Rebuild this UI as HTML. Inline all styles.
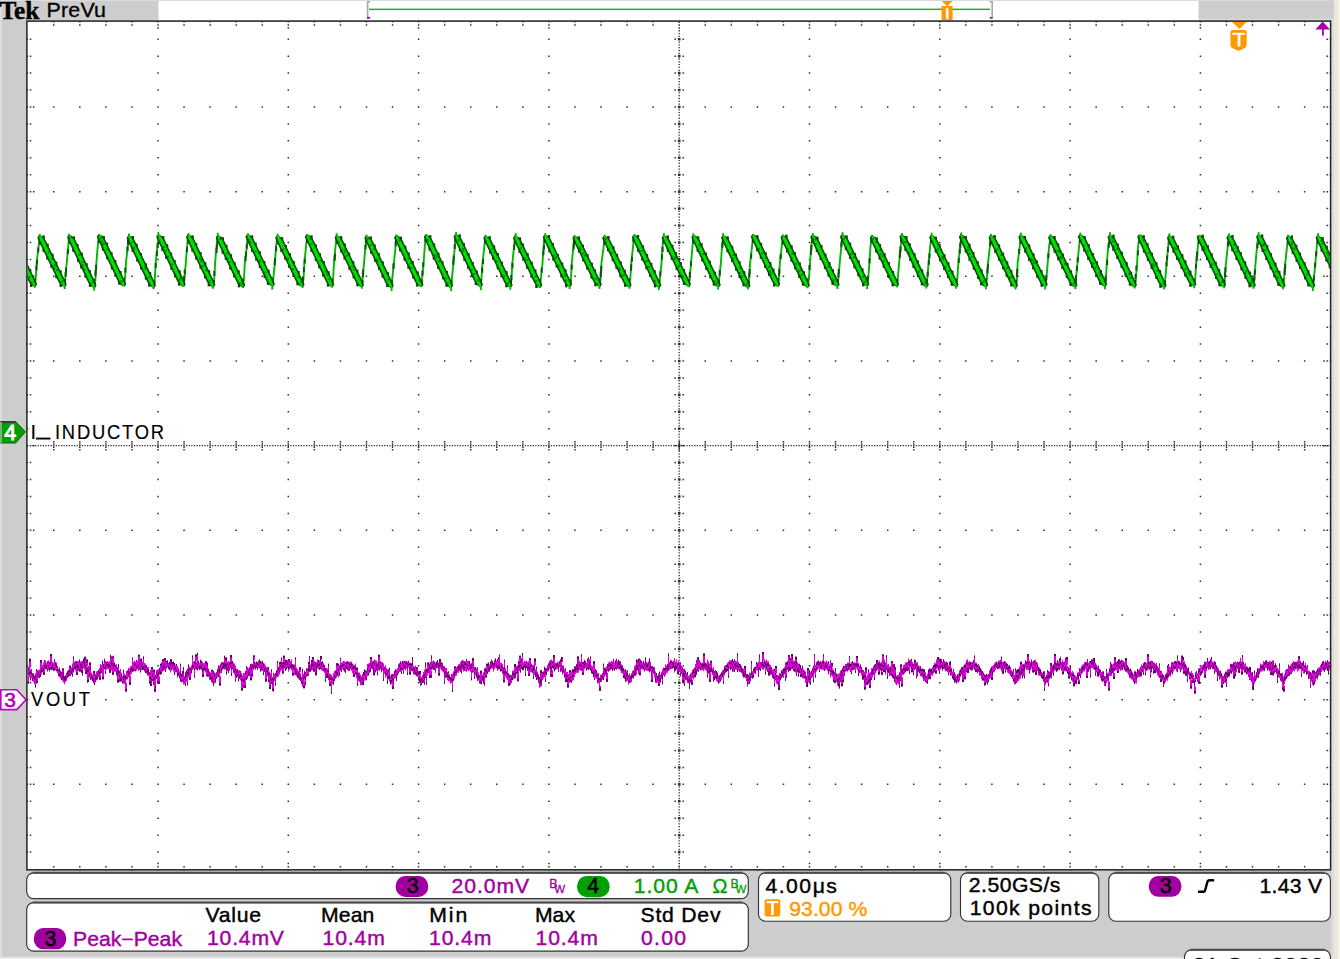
<!DOCTYPE html><html><head><meta charset="utf-8"><style>html,body{margin:0;padding:0;background:#cdcdcd;overflow:hidden}svg{display:block}text{font-family:"Liberation Sans",sans-serif}</style></head><body>
<svg width="1340" height="959" viewBox="0 0 1340 959">
<rect x="0" y="0" width="1340" height="959" fill="#cdcdcd"/>
<rect x="0" y="0" width="2" height="959" fill="#dcdcdc"/>
<rect x="0" y="0" width="1340" height="1" fill="#dcdcdc"/>
<rect x="0" y="956.5" width="1340" height="1.5" fill="#dcdcdc"/>
<rect x="0" y="958" width="1340" height="1" fill="#f4f4f4"/>
<rect x="1331.2" y="0" width="2.4" height="959" fill="#dedede"/>
<rect x="1333.6" y="0" width="4.6" height="959" fill="#ebe8d8"/>
<rect x="1338.2" y="0" width="1.8" height="959" fill="#faf6e8"/>
<rect x="1331" y="0" width="2.6" height="20.4" fill="#cdcdcd"/>
<rect x="1198.5" y="18.7" width="134.9" height="1.2" fill="#dadada"/>
<rect x="158.5" y="1" width="1040" height="19.5" fill="#ffffff"/>
<text x="-0.5" y="18.8" font-weight="bold" font-size="25" textLength="40" lengthAdjust="spacingAndGlyphs" style="font-family:'Liberation Serif',serif" fill="#000" stroke="#000" stroke-width="0.4">Tek</text>
<path d="M370 1.8 L367.6 1.8 L367.6 18.2 L370 18.2" stroke="#a8a8a8" stroke-width="1.6" fill="none"/>
<rect x="367" y="16.9" width="3" height="1.6" fill="#b000c0"/>
<rect x="369" y="8.6" width="621" height="1.5" fill="#20b020"/>
<path d="M989.6 1.8 L992.2 1.8 L992.2 18.2 L989.6 18.2" stroke="#a8a8a8" stroke-width="1.6" fill="none"/>
<rect x="990" y="17" width="2.5" height="1.5" fill="#b000c0"/>
<path d="M941.8 1 L952.6 1 L947.2 6.5 Z" fill="#ff9900"/>
<rect x="941.6" y="6" width="11" height="14.2" fill="#ff9900"/>
<rect x="945.9" y="8.3" width="2.6" height="11" fill="#ffffff"/>
<rect x="26.9" y="21.1" width="1303.7" height="848.7" fill="#ffffff" stroke="#1d2625" stroke-width="1.5"/>
<path fill="#2f2f2f" d="M157.25 38.48h1.5v1.5h-1.5zM157.25 55.42h1.5v1.5h-1.5zM157.25 72.35h1.5v1.5h-1.5zM157.25 89.29h1.5v1.5h-1.5zM157.25 106.22h1.5v1.5h-1.5zM157.25 123.16h1.5v1.5h-1.5zM157.25 140.09h1.5v1.5h-1.5zM157.25 157.03h1.5v1.5h-1.5zM157.25 173.97h1.5v1.5h-1.5zM157.25 190.90h1.5v1.5h-1.5zM157.25 207.84h1.5v1.5h-1.5zM157.25 224.77h1.5v1.5h-1.5zM157.25 241.70h1.5v1.5h-1.5zM157.25 258.64h1.5v1.5h-1.5zM157.25 275.57h1.5v1.5h-1.5zM157.25 292.51h1.5v1.5h-1.5zM157.25 309.44h1.5v1.5h-1.5zM157.25 326.38h1.5v1.5h-1.5zM157.25 343.31h1.5v1.5h-1.5zM157.25 360.25h1.5v1.5h-1.5zM157.25 377.19h1.5v1.5h-1.5zM157.25 394.12h1.5v1.5h-1.5zM157.25 411.06h1.5v1.5h-1.5zM157.25 427.99h1.5v1.5h-1.5zM157.25 444.92h1.5v1.5h-1.5zM157.25 461.86h1.5v1.5h-1.5zM157.25 478.79h1.5v1.5h-1.5zM157.25 495.73h1.5v1.5h-1.5zM157.25 512.66h1.5v1.5h-1.5zM157.25 529.60h1.5v1.5h-1.5zM157.25 546.53h1.5v1.5h-1.5zM157.25 563.47h1.5v1.5h-1.5zM157.25 580.40h1.5v1.5h-1.5zM157.25 597.34h1.5v1.5h-1.5zM157.25 614.27h1.5v1.5h-1.5zM157.25 631.21h1.5v1.5h-1.5zM157.25 648.14h1.5v1.5h-1.5zM157.25 665.08h1.5v1.5h-1.5zM157.25 682.01h1.5v1.5h-1.5zM157.25 698.95h1.5v1.5h-1.5zM157.25 715.88h1.5v1.5h-1.5zM157.25 732.82h1.5v1.5h-1.5zM157.25 749.75h1.5v1.5h-1.5zM157.25 766.69h1.5v1.5h-1.5zM157.25 783.62h1.5v1.5h-1.5zM157.25 800.56h1.5v1.5h-1.5zM157.25 817.49h1.5v1.5h-1.5zM157.25 834.43h1.5v1.5h-1.5zM157.25 851.36h1.5v1.5h-1.5zM287.55 38.48h1.5v1.5h-1.5zM287.55 55.42h1.5v1.5h-1.5zM287.55 72.35h1.5v1.5h-1.5zM287.55 89.29h1.5v1.5h-1.5zM287.55 106.22h1.5v1.5h-1.5zM287.55 123.16h1.5v1.5h-1.5zM287.55 140.09h1.5v1.5h-1.5zM287.55 157.03h1.5v1.5h-1.5zM287.55 173.97h1.5v1.5h-1.5zM287.55 190.90h1.5v1.5h-1.5zM287.55 207.84h1.5v1.5h-1.5zM287.55 224.77h1.5v1.5h-1.5zM287.55 241.70h1.5v1.5h-1.5zM287.55 258.64h1.5v1.5h-1.5zM287.55 275.57h1.5v1.5h-1.5zM287.55 292.51h1.5v1.5h-1.5zM287.55 309.44h1.5v1.5h-1.5zM287.55 326.38h1.5v1.5h-1.5zM287.55 343.31h1.5v1.5h-1.5zM287.55 360.25h1.5v1.5h-1.5zM287.55 377.19h1.5v1.5h-1.5zM287.55 394.12h1.5v1.5h-1.5zM287.55 411.06h1.5v1.5h-1.5zM287.55 427.99h1.5v1.5h-1.5zM287.55 444.92h1.5v1.5h-1.5zM287.55 461.86h1.5v1.5h-1.5zM287.55 478.79h1.5v1.5h-1.5zM287.55 495.73h1.5v1.5h-1.5zM287.55 512.66h1.5v1.5h-1.5zM287.55 529.60h1.5v1.5h-1.5zM287.55 546.53h1.5v1.5h-1.5zM287.55 563.47h1.5v1.5h-1.5zM287.55 580.40h1.5v1.5h-1.5zM287.55 597.34h1.5v1.5h-1.5zM287.55 614.27h1.5v1.5h-1.5zM287.55 631.21h1.5v1.5h-1.5zM287.55 648.14h1.5v1.5h-1.5zM287.55 665.08h1.5v1.5h-1.5zM287.55 682.01h1.5v1.5h-1.5zM287.55 698.95h1.5v1.5h-1.5zM287.55 715.88h1.5v1.5h-1.5zM287.55 732.82h1.5v1.5h-1.5zM287.55 749.75h1.5v1.5h-1.5zM287.55 766.69h1.5v1.5h-1.5zM287.55 783.62h1.5v1.5h-1.5zM287.55 800.56h1.5v1.5h-1.5zM287.55 817.49h1.5v1.5h-1.5zM287.55 834.43h1.5v1.5h-1.5zM287.55 851.36h1.5v1.5h-1.5zM417.85 38.48h1.5v1.5h-1.5zM417.85 55.42h1.5v1.5h-1.5zM417.85 72.35h1.5v1.5h-1.5zM417.85 89.29h1.5v1.5h-1.5zM417.85 106.22h1.5v1.5h-1.5zM417.85 123.16h1.5v1.5h-1.5zM417.85 140.09h1.5v1.5h-1.5zM417.85 157.03h1.5v1.5h-1.5zM417.85 173.97h1.5v1.5h-1.5zM417.85 190.90h1.5v1.5h-1.5zM417.85 207.84h1.5v1.5h-1.5zM417.85 224.77h1.5v1.5h-1.5zM417.85 241.70h1.5v1.5h-1.5zM417.85 258.64h1.5v1.5h-1.5zM417.85 275.57h1.5v1.5h-1.5zM417.85 292.51h1.5v1.5h-1.5zM417.85 309.44h1.5v1.5h-1.5zM417.85 326.38h1.5v1.5h-1.5zM417.85 343.31h1.5v1.5h-1.5zM417.85 360.25h1.5v1.5h-1.5zM417.85 377.19h1.5v1.5h-1.5zM417.85 394.12h1.5v1.5h-1.5zM417.85 411.06h1.5v1.5h-1.5zM417.85 427.99h1.5v1.5h-1.5zM417.85 444.92h1.5v1.5h-1.5zM417.85 461.86h1.5v1.5h-1.5zM417.85 478.79h1.5v1.5h-1.5zM417.85 495.73h1.5v1.5h-1.5zM417.85 512.66h1.5v1.5h-1.5zM417.85 529.60h1.5v1.5h-1.5zM417.85 546.53h1.5v1.5h-1.5zM417.85 563.47h1.5v1.5h-1.5zM417.85 580.40h1.5v1.5h-1.5zM417.85 597.34h1.5v1.5h-1.5zM417.85 614.27h1.5v1.5h-1.5zM417.85 631.21h1.5v1.5h-1.5zM417.85 648.14h1.5v1.5h-1.5zM417.85 665.08h1.5v1.5h-1.5zM417.85 682.01h1.5v1.5h-1.5zM417.85 698.95h1.5v1.5h-1.5zM417.85 715.88h1.5v1.5h-1.5zM417.85 732.82h1.5v1.5h-1.5zM417.85 749.75h1.5v1.5h-1.5zM417.85 766.69h1.5v1.5h-1.5zM417.85 783.62h1.5v1.5h-1.5zM417.85 800.56h1.5v1.5h-1.5zM417.85 817.49h1.5v1.5h-1.5zM417.85 834.43h1.5v1.5h-1.5zM417.85 851.36h1.5v1.5h-1.5zM548.15 38.48h1.5v1.5h-1.5zM548.15 55.42h1.5v1.5h-1.5zM548.15 72.35h1.5v1.5h-1.5zM548.15 89.29h1.5v1.5h-1.5zM548.15 106.22h1.5v1.5h-1.5zM548.15 123.16h1.5v1.5h-1.5zM548.15 140.09h1.5v1.5h-1.5zM548.15 157.03h1.5v1.5h-1.5zM548.15 173.97h1.5v1.5h-1.5zM548.15 190.90h1.5v1.5h-1.5zM548.15 207.84h1.5v1.5h-1.5zM548.15 224.77h1.5v1.5h-1.5zM548.15 241.70h1.5v1.5h-1.5zM548.15 258.64h1.5v1.5h-1.5zM548.15 275.57h1.5v1.5h-1.5zM548.15 292.51h1.5v1.5h-1.5zM548.15 309.44h1.5v1.5h-1.5zM548.15 326.38h1.5v1.5h-1.5zM548.15 343.31h1.5v1.5h-1.5zM548.15 360.25h1.5v1.5h-1.5zM548.15 377.19h1.5v1.5h-1.5zM548.15 394.12h1.5v1.5h-1.5zM548.15 411.06h1.5v1.5h-1.5zM548.15 427.99h1.5v1.5h-1.5zM548.15 444.92h1.5v1.5h-1.5zM548.15 461.86h1.5v1.5h-1.5zM548.15 478.79h1.5v1.5h-1.5zM548.15 495.73h1.5v1.5h-1.5zM548.15 512.66h1.5v1.5h-1.5zM548.15 529.60h1.5v1.5h-1.5zM548.15 546.53h1.5v1.5h-1.5zM548.15 563.47h1.5v1.5h-1.5zM548.15 580.40h1.5v1.5h-1.5zM548.15 597.34h1.5v1.5h-1.5zM548.15 614.27h1.5v1.5h-1.5zM548.15 631.21h1.5v1.5h-1.5zM548.15 648.14h1.5v1.5h-1.5zM548.15 665.08h1.5v1.5h-1.5zM548.15 682.01h1.5v1.5h-1.5zM548.15 698.95h1.5v1.5h-1.5zM548.15 715.88h1.5v1.5h-1.5zM548.15 732.82h1.5v1.5h-1.5zM548.15 749.75h1.5v1.5h-1.5zM548.15 766.69h1.5v1.5h-1.5zM548.15 783.62h1.5v1.5h-1.5zM548.15 800.56h1.5v1.5h-1.5zM548.15 817.49h1.5v1.5h-1.5zM548.15 834.43h1.5v1.5h-1.5zM548.15 851.36h1.5v1.5h-1.5zM808.75 38.48h1.5v1.5h-1.5zM808.75 55.42h1.5v1.5h-1.5zM808.75 72.35h1.5v1.5h-1.5zM808.75 89.29h1.5v1.5h-1.5zM808.75 106.22h1.5v1.5h-1.5zM808.75 123.16h1.5v1.5h-1.5zM808.75 140.09h1.5v1.5h-1.5zM808.75 157.03h1.5v1.5h-1.5zM808.75 173.97h1.5v1.5h-1.5zM808.75 190.90h1.5v1.5h-1.5zM808.75 207.84h1.5v1.5h-1.5zM808.75 224.77h1.5v1.5h-1.5zM808.75 241.70h1.5v1.5h-1.5zM808.75 258.64h1.5v1.5h-1.5zM808.75 275.57h1.5v1.5h-1.5zM808.75 292.51h1.5v1.5h-1.5zM808.75 309.44h1.5v1.5h-1.5zM808.75 326.38h1.5v1.5h-1.5zM808.75 343.31h1.5v1.5h-1.5zM808.75 360.25h1.5v1.5h-1.5zM808.75 377.19h1.5v1.5h-1.5zM808.75 394.12h1.5v1.5h-1.5zM808.75 411.06h1.5v1.5h-1.5zM808.75 427.99h1.5v1.5h-1.5zM808.75 444.92h1.5v1.5h-1.5zM808.75 461.86h1.5v1.5h-1.5zM808.75 478.79h1.5v1.5h-1.5zM808.75 495.73h1.5v1.5h-1.5zM808.75 512.66h1.5v1.5h-1.5zM808.75 529.60h1.5v1.5h-1.5zM808.75 546.53h1.5v1.5h-1.5zM808.75 563.47h1.5v1.5h-1.5zM808.75 580.40h1.5v1.5h-1.5zM808.75 597.34h1.5v1.5h-1.5zM808.75 614.27h1.5v1.5h-1.5zM808.75 631.21h1.5v1.5h-1.5zM808.75 648.14h1.5v1.5h-1.5zM808.75 665.08h1.5v1.5h-1.5zM808.75 682.01h1.5v1.5h-1.5zM808.75 698.95h1.5v1.5h-1.5zM808.75 715.88h1.5v1.5h-1.5zM808.75 732.82h1.5v1.5h-1.5zM808.75 749.75h1.5v1.5h-1.5zM808.75 766.69h1.5v1.5h-1.5zM808.75 783.62h1.5v1.5h-1.5zM808.75 800.56h1.5v1.5h-1.5zM808.75 817.49h1.5v1.5h-1.5zM808.75 834.43h1.5v1.5h-1.5zM808.75 851.36h1.5v1.5h-1.5zM939.05 38.48h1.5v1.5h-1.5zM939.05 55.42h1.5v1.5h-1.5zM939.05 72.35h1.5v1.5h-1.5zM939.05 89.29h1.5v1.5h-1.5zM939.05 106.22h1.5v1.5h-1.5zM939.05 123.16h1.5v1.5h-1.5zM939.05 140.09h1.5v1.5h-1.5zM939.05 157.03h1.5v1.5h-1.5zM939.05 173.97h1.5v1.5h-1.5zM939.05 190.90h1.5v1.5h-1.5zM939.05 207.84h1.5v1.5h-1.5zM939.05 224.77h1.5v1.5h-1.5zM939.05 241.70h1.5v1.5h-1.5zM939.05 258.64h1.5v1.5h-1.5zM939.05 275.57h1.5v1.5h-1.5zM939.05 292.51h1.5v1.5h-1.5zM939.05 309.44h1.5v1.5h-1.5zM939.05 326.38h1.5v1.5h-1.5zM939.05 343.31h1.5v1.5h-1.5zM939.05 360.25h1.5v1.5h-1.5zM939.05 377.19h1.5v1.5h-1.5zM939.05 394.12h1.5v1.5h-1.5zM939.05 411.06h1.5v1.5h-1.5zM939.05 427.99h1.5v1.5h-1.5zM939.05 444.92h1.5v1.5h-1.5zM939.05 461.86h1.5v1.5h-1.5zM939.05 478.79h1.5v1.5h-1.5zM939.05 495.73h1.5v1.5h-1.5zM939.05 512.66h1.5v1.5h-1.5zM939.05 529.60h1.5v1.5h-1.5zM939.05 546.53h1.5v1.5h-1.5zM939.05 563.47h1.5v1.5h-1.5zM939.05 580.40h1.5v1.5h-1.5zM939.05 597.34h1.5v1.5h-1.5zM939.05 614.27h1.5v1.5h-1.5zM939.05 631.21h1.5v1.5h-1.5zM939.05 648.14h1.5v1.5h-1.5zM939.05 665.08h1.5v1.5h-1.5zM939.05 682.01h1.5v1.5h-1.5zM939.05 698.95h1.5v1.5h-1.5zM939.05 715.88h1.5v1.5h-1.5zM939.05 732.82h1.5v1.5h-1.5zM939.05 749.75h1.5v1.5h-1.5zM939.05 766.69h1.5v1.5h-1.5zM939.05 783.62h1.5v1.5h-1.5zM939.05 800.56h1.5v1.5h-1.5zM939.05 817.49h1.5v1.5h-1.5zM939.05 834.43h1.5v1.5h-1.5zM939.05 851.36h1.5v1.5h-1.5zM1069.35 38.48h1.5v1.5h-1.5zM1069.35 55.42h1.5v1.5h-1.5zM1069.35 72.35h1.5v1.5h-1.5zM1069.35 89.29h1.5v1.5h-1.5zM1069.35 106.22h1.5v1.5h-1.5zM1069.35 123.16h1.5v1.5h-1.5zM1069.35 140.09h1.5v1.5h-1.5zM1069.35 157.03h1.5v1.5h-1.5zM1069.35 173.97h1.5v1.5h-1.5zM1069.35 190.90h1.5v1.5h-1.5zM1069.35 207.84h1.5v1.5h-1.5zM1069.35 224.77h1.5v1.5h-1.5zM1069.35 241.70h1.5v1.5h-1.5zM1069.35 258.64h1.5v1.5h-1.5zM1069.35 275.57h1.5v1.5h-1.5zM1069.35 292.51h1.5v1.5h-1.5zM1069.35 309.44h1.5v1.5h-1.5zM1069.35 326.38h1.5v1.5h-1.5zM1069.35 343.31h1.5v1.5h-1.5zM1069.35 360.25h1.5v1.5h-1.5zM1069.35 377.19h1.5v1.5h-1.5zM1069.35 394.12h1.5v1.5h-1.5zM1069.35 411.06h1.5v1.5h-1.5zM1069.35 427.99h1.5v1.5h-1.5zM1069.35 444.92h1.5v1.5h-1.5zM1069.35 461.86h1.5v1.5h-1.5zM1069.35 478.79h1.5v1.5h-1.5zM1069.35 495.73h1.5v1.5h-1.5zM1069.35 512.66h1.5v1.5h-1.5zM1069.35 529.60h1.5v1.5h-1.5zM1069.35 546.53h1.5v1.5h-1.5zM1069.35 563.47h1.5v1.5h-1.5zM1069.35 580.40h1.5v1.5h-1.5zM1069.35 597.34h1.5v1.5h-1.5zM1069.35 614.27h1.5v1.5h-1.5zM1069.35 631.21h1.5v1.5h-1.5zM1069.35 648.14h1.5v1.5h-1.5zM1069.35 665.08h1.5v1.5h-1.5zM1069.35 682.01h1.5v1.5h-1.5zM1069.35 698.95h1.5v1.5h-1.5zM1069.35 715.88h1.5v1.5h-1.5zM1069.35 732.82h1.5v1.5h-1.5zM1069.35 749.75h1.5v1.5h-1.5zM1069.35 766.69h1.5v1.5h-1.5zM1069.35 783.62h1.5v1.5h-1.5zM1069.35 800.56h1.5v1.5h-1.5zM1069.35 817.49h1.5v1.5h-1.5zM1069.35 834.43h1.5v1.5h-1.5zM1069.35 851.36h1.5v1.5h-1.5zM1199.65 38.48h1.5v1.5h-1.5zM1199.65 55.42h1.5v1.5h-1.5zM1199.65 72.35h1.5v1.5h-1.5zM1199.65 89.29h1.5v1.5h-1.5zM1199.65 106.22h1.5v1.5h-1.5zM1199.65 123.16h1.5v1.5h-1.5zM1199.65 140.09h1.5v1.5h-1.5zM1199.65 157.03h1.5v1.5h-1.5zM1199.65 173.97h1.5v1.5h-1.5zM1199.65 190.90h1.5v1.5h-1.5zM1199.65 207.84h1.5v1.5h-1.5zM1199.65 224.77h1.5v1.5h-1.5zM1199.65 241.70h1.5v1.5h-1.5zM1199.65 258.64h1.5v1.5h-1.5zM1199.65 275.57h1.5v1.5h-1.5zM1199.65 292.51h1.5v1.5h-1.5zM1199.65 309.44h1.5v1.5h-1.5zM1199.65 326.38h1.5v1.5h-1.5zM1199.65 343.31h1.5v1.5h-1.5zM1199.65 360.25h1.5v1.5h-1.5zM1199.65 377.19h1.5v1.5h-1.5zM1199.65 394.12h1.5v1.5h-1.5zM1199.65 411.06h1.5v1.5h-1.5zM1199.65 427.99h1.5v1.5h-1.5zM1199.65 444.92h1.5v1.5h-1.5zM1199.65 461.86h1.5v1.5h-1.5zM1199.65 478.79h1.5v1.5h-1.5zM1199.65 495.73h1.5v1.5h-1.5zM1199.65 512.66h1.5v1.5h-1.5zM1199.65 529.60h1.5v1.5h-1.5zM1199.65 546.53h1.5v1.5h-1.5zM1199.65 563.47h1.5v1.5h-1.5zM1199.65 580.40h1.5v1.5h-1.5zM1199.65 597.34h1.5v1.5h-1.5zM1199.65 614.27h1.5v1.5h-1.5zM1199.65 631.21h1.5v1.5h-1.5zM1199.65 648.14h1.5v1.5h-1.5zM1199.65 665.08h1.5v1.5h-1.5zM1199.65 682.01h1.5v1.5h-1.5zM1199.65 698.95h1.5v1.5h-1.5zM1199.65 715.88h1.5v1.5h-1.5zM1199.65 732.82h1.5v1.5h-1.5zM1199.65 749.75h1.5v1.5h-1.5zM1199.65 766.69h1.5v1.5h-1.5zM1199.65 783.62h1.5v1.5h-1.5zM1199.65 800.56h1.5v1.5h-1.5zM1199.65 817.49h1.5v1.5h-1.5zM1199.65 834.43h1.5v1.5h-1.5zM1199.65 851.36h1.5v1.5h-1.5zM53.01 106.22h1.5v1.5h-1.5zM79.07 106.22h1.5v1.5h-1.5zM105.13 106.22h1.5v1.5h-1.5zM131.19 106.22h1.5v1.5h-1.5zM183.31 106.22h1.5v1.5h-1.5zM209.37 106.22h1.5v1.5h-1.5zM235.43 106.22h1.5v1.5h-1.5zM261.49 106.22h1.5v1.5h-1.5zM313.61 106.22h1.5v1.5h-1.5zM339.67 106.22h1.5v1.5h-1.5zM365.73 106.22h1.5v1.5h-1.5zM391.79 106.22h1.5v1.5h-1.5zM443.91 106.22h1.5v1.5h-1.5zM469.97 106.22h1.5v1.5h-1.5zM496.03 106.22h1.5v1.5h-1.5zM522.09 106.22h1.5v1.5h-1.5zM574.21 106.22h1.5v1.5h-1.5zM600.27 106.22h1.5v1.5h-1.5zM626.33 106.22h1.5v1.5h-1.5zM652.39 106.22h1.5v1.5h-1.5zM704.51 106.22h1.5v1.5h-1.5zM730.57 106.22h1.5v1.5h-1.5zM756.63 106.22h1.5v1.5h-1.5zM782.69 106.22h1.5v1.5h-1.5zM834.81 106.22h1.5v1.5h-1.5zM860.87 106.22h1.5v1.5h-1.5zM886.93 106.22h1.5v1.5h-1.5zM912.99 106.22h1.5v1.5h-1.5zM965.11 106.22h1.5v1.5h-1.5zM991.17 106.22h1.5v1.5h-1.5zM1017.23 106.22h1.5v1.5h-1.5zM1043.29 106.22h1.5v1.5h-1.5zM1095.41 106.22h1.5v1.5h-1.5zM1121.47 106.22h1.5v1.5h-1.5zM1147.53 106.22h1.5v1.5h-1.5zM1173.59 106.22h1.5v1.5h-1.5zM1225.71 106.22h1.5v1.5h-1.5zM1251.77 106.22h1.5v1.5h-1.5zM1277.83 106.22h1.5v1.5h-1.5zM1303.89 106.22h1.5v1.5h-1.5zM53.01 190.90h1.5v1.5h-1.5zM79.07 190.90h1.5v1.5h-1.5zM105.13 190.90h1.5v1.5h-1.5zM131.19 190.90h1.5v1.5h-1.5zM183.31 190.90h1.5v1.5h-1.5zM209.37 190.90h1.5v1.5h-1.5zM235.43 190.90h1.5v1.5h-1.5zM261.49 190.90h1.5v1.5h-1.5zM313.61 190.90h1.5v1.5h-1.5zM339.67 190.90h1.5v1.5h-1.5zM365.73 190.90h1.5v1.5h-1.5zM391.79 190.90h1.5v1.5h-1.5zM443.91 190.90h1.5v1.5h-1.5zM469.97 190.90h1.5v1.5h-1.5zM496.03 190.90h1.5v1.5h-1.5zM522.09 190.90h1.5v1.5h-1.5zM574.21 190.90h1.5v1.5h-1.5zM600.27 190.90h1.5v1.5h-1.5zM626.33 190.90h1.5v1.5h-1.5zM652.39 190.90h1.5v1.5h-1.5zM704.51 190.90h1.5v1.5h-1.5zM730.57 190.90h1.5v1.5h-1.5zM756.63 190.90h1.5v1.5h-1.5zM782.69 190.90h1.5v1.5h-1.5zM834.81 190.90h1.5v1.5h-1.5zM860.87 190.90h1.5v1.5h-1.5zM886.93 190.90h1.5v1.5h-1.5zM912.99 190.90h1.5v1.5h-1.5zM965.11 190.90h1.5v1.5h-1.5zM991.17 190.90h1.5v1.5h-1.5zM1017.23 190.90h1.5v1.5h-1.5zM1043.29 190.90h1.5v1.5h-1.5zM1095.41 190.90h1.5v1.5h-1.5zM1121.47 190.90h1.5v1.5h-1.5zM1147.53 190.90h1.5v1.5h-1.5zM1173.59 190.90h1.5v1.5h-1.5zM1225.71 190.90h1.5v1.5h-1.5zM1251.77 190.90h1.5v1.5h-1.5zM1277.83 190.90h1.5v1.5h-1.5zM1303.89 190.90h1.5v1.5h-1.5zM53.01 275.57h1.5v1.5h-1.5zM79.07 275.57h1.5v1.5h-1.5zM105.13 275.57h1.5v1.5h-1.5zM131.19 275.57h1.5v1.5h-1.5zM183.31 275.57h1.5v1.5h-1.5zM209.37 275.57h1.5v1.5h-1.5zM235.43 275.57h1.5v1.5h-1.5zM261.49 275.57h1.5v1.5h-1.5zM313.61 275.57h1.5v1.5h-1.5zM339.67 275.57h1.5v1.5h-1.5zM365.73 275.57h1.5v1.5h-1.5zM391.79 275.57h1.5v1.5h-1.5zM443.91 275.57h1.5v1.5h-1.5zM469.97 275.57h1.5v1.5h-1.5zM496.03 275.57h1.5v1.5h-1.5zM522.09 275.57h1.5v1.5h-1.5zM574.21 275.57h1.5v1.5h-1.5zM600.27 275.57h1.5v1.5h-1.5zM626.33 275.57h1.5v1.5h-1.5zM652.39 275.57h1.5v1.5h-1.5zM704.51 275.57h1.5v1.5h-1.5zM730.57 275.57h1.5v1.5h-1.5zM756.63 275.57h1.5v1.5h-1.5zM782.69 275.57h1.5v1.5h-1.5zM834.81 275.57h1.5v1.5h-1.5zM860.87 275.57h1.5v1.5h-1.5zM886.93 275.57h1.5v1.5h-1.5zM912.99 275.57h1.5v1.5h-1.5zM965.11 275.57h1.5v1.5h-1.5zM991.17 275.57h1.5v1.5h-1.5zM1017.23 275.57h1.5v1.5h-1.5zM1043.29 275.57h1.5v1.5h-1.5zM1095.41 275.57h1.5v1.5h-1.5zM1121.47 275.57h1.5v1.5h-1.5zM1147.53 275.57h1.5v1.5h-1.5zM1173.59 275.57h1.5v1.5h-1.5zM1225.71 275.57h1.5v1.5h-1.5zM1251.77 275.57h1.5v1.5h-1.5zM1277.83 275.57h1.5v1.5h-1.5zM1303.89 275.57h1.5v1.5h-1.5zM53.01 360.25h1.5v1.5h-1.5zM79.07 360.25h1.5v1.5h-1.5zM105.13 360.25h1.5v1.5h-1.5zM131.19 360.25h1.5v1.5h-1.5zM183.31 360.25h1.5v1.5h-1.5zM209.37 360.25h1.5v1.5h-1.5zM235.43 360.25h1.5v1.5h-1.5zM261.49 360.25h1.5v1.5h-1.5zM313.61 360.25h1.5v1.5h-1.5zM339.67 360.25h1.5v1.5h-1.5zM365.73 360.25h1.5v1.5h-1.5zM391.79 360.25h1.5v1.5h-1.5zM443.91 360.25h1.5v1.5h-1.5zM469.97 360.25h1.5v1.5h-1.5zM496.03 360.25h1.5v1.5h-1.5zM522.09 360.25h1.5v1.5h-1.5zM574.21 360.25h1.5v1.5h-1.5zM600.27 360.25h1.5v1.5h-1.5zM626.33 360.25h1.5v1.5h-1.5zM652.39 360.25h1.5v1.5h-1.5zM704.51 360.25h1.5v1.5h-1.5zM730.57 360.25h1.5v1.5h-1.5zM756.63 360.25h1.5v1.5h-1.5zM782.69 360.25h1.5v1.5h-1.5zM834.81 360.25h1.5v1.5h-1.5zM860.87 360.25h1.5v1.5h-1.5zM886.93 360.25h1.5v1.5h-1.5zM912.99 360.25h1.5v1.5h-1.5zM965.11 360.25h1.5v1.5h-1.5zM991.17 360.25h1.5v1.5h-1.5zM1017.23 360.25h1.5v1.5h-1.5zM1043.29 360.25h1.5v1.5h-1.5zM1095.41 360.25h1.5v1.5h-1.5zM1121.47 360.25h1.5v1.5h-1.5zM1147.53 360.25h1.5v1.5h-1.5zM1173.59 360.25h1.5v1.5h-1.5zM1225.71 360.25h1.5v1.5h-1.5zM1251.77 360.25h1.5v1.5h-1.5zM1277.83 360.25h1.5v1.5h-1.5zM1303.89 360.25h1.5v1.5h-1.5zM53.01 529.60h1.5v1.5h-1.5zM79.07 529.60h1.5v1.5h-1.5zM105.13 529.60h1.5v1.5h-1.5zM131.19 529.60h1.5v1.5h-1.5zM183.31 529.60h1.5v1.5h-1.5zM209.37 529.60h1.5v1.5h-1.5zM235.43 529.60h1.5v1.5h-1.5zM261.49 529.60h1.5v1.5h-1.5zM313.61 529.60h1.5v1.5h-1.5zM339.67 529.60h1.5v1.5h-1.5zM365.73 529.60h1.5v1.5h-1.5zM391.79 529.60h1.5v1.5h-1.5zM443.91 529.60h1.5v1.5h-1.5zM469.97 529.60h1.5v1.5h-1.5zM496.03 529.60h1.5v1.5h-1.5zM522.09 529.60h1.5v1.5h-1.5zM574.21 529.60h1.5v1.5h-1.5zM600.27 529.60h1.5v1.5h-1.5zM626.33 529.60h1.5v1.5h-1.5zM652.39 529.60h1.5v1.5h-1.5zM704.51 529.60h1.5v1.5h-1.5zM730.57 529.60h1.5v1.5h-1.5zM756.63 529.60h1.5v1.5h-1.5zM782.69 529.60h1.5v1.5h-1.5zM834.81 529.60h1.5v1.5h-1.5zM860.87 529.60h1.5v1.5h-1.5zM886.93 529.60h1.5v1.5h-1.5zM912.99 529.60h1.5v1.5h-1.5zM965.11 529.60h1.5v1.5h-1.5zM991.17 529.60h1.5v1.5h-1.5zM1017.23 529.60h1.5v1.5h-1.5zM1043.29 529.60h1.5v1.5h-1.5zM1095.41 529.60h1.5v1.5h-1.5zM1121.47 529.60h1.5v1.5h-1.5zM1147.53 529.60h1.5v1.5h-1.5zM1173.59 529.60h1.5v1.5h-1.5zM1225.71 529.60h1.5v1.5h-1.5zM1251.77 529.60h1.5v1.5h-1.5zM1277.83 529.60h1.5v1.5h-1.5zM1303.89 529.60h1.5v1.5h-1.5zM53.01 614.27h1.5v1.5h-1.5zM79.07 614.27h1.5v1.5h-1.5zM105.13 614.27h1.5v1.5h-1.5zM131.19 614.27h1.5v1.5h-1.5zM183.31 614.27h1.5v1.5h-1.5zM209.37 614.27h1.5v1.5h-1.5zM235.43 614.27h1.5v1.5h-1.5zM261.49 614.27h1.5v1.5h-1.5zM313.61 614.27h1.5v1.5h-1.5zM339.67 614.27h1.5v1.5h-1.5zM365.73 614.27h1.5v1.5h-1.5zM391.79 614.27h1.5v1.5h-1.5zM443.91 614.27h1.5v1.5h-1.5zM469.97 614.27h1.5v1.5h-1.5zM496.03 614.27h1.5v1.5h-1.5zM522.09 614.27h1.5v1.5h-1.5zM574.21 614.27h1.5v1.5h-1.5zM600.27 614.27h1.5v1.5h-1.5zM626.33 614.27h1.5v1.5h-1.5zM652.39 614.27h1.5v1.5h-1.5zM704.51 614.27h1.5v1.5h-1.5zM730.57 614.27h1.5v1.5h-1.5zM756.63 614.27h1.5v1.5h-1.5zM782.69 614.27h1.5v1.5h-1.5zM834.81 614.27h1.5v1.5h-1.5zM860.87 614.27h1.5v1.5h-1.5zM886.93 614.27h1.5v1.5h-1.5zM912.99 614.27h1.5v1.5h-1.5zM965.11 614.27h1.5v1.5h-1.5zM991.17 614.27h1.5v1.5h-1.5zM1017.23 614.27h1.5v1.5h-1.5zM1043.29 614.27h1.5v1.5h-1.5zM1095.41 614.27h1.5v1.5h-1.5zM1121.47 614.27h1.5v1.5h-1.5zM1147.53 614.27h1.5v1.5h-1.5zM1173.59 614.27h1.5v1.5h-1.5zM1225.71 614.27h1.5v1.5h-1.5zM1251.77 614.27h1.5v1.5h-1.5zM1277.83 614.27h1.5v1.5h-1.5zM1303.89 614.27h1.5v1.5h-1.5zM53.01 698.95h1.5v1.5h-1.5zM79.07 698.95h1.5v1.5h-1.5zM105.13 698.95h1.5v1.5h-1.5zM131.19 698.95h1.5v1.5h-1.5zM183.31 698.95h1.5v1.5h-1.5zM209.37 698.95h1.5v1.5h-1.5zM235.43 698.95h1.5v1.5h-1.5zM261.49 698.95h1.5v1.5h-1.5zM313.61 698.95h1.5v1.5h-1.5zM339.67 698.95h1.5v1.5h-1.5zM365.73 698.95h1.5v1.5h-1.5zM391.79 698.95h1.5v1.5h-1.5zM443.91 698.95h1.5v1.5h-1.5zM469.97 698.95h1.5v1.5h-1.5zM496.03 698.95h1.5v1.5h-1.5zM522.09 698.95h1.5v1.5h-1.5zM574.21 698.95h1.5v1.5h-1.5zM600.27 698.95h1.5v1.5h-1.5zM626.33 698.95h1.5v1.5h-1.5zM652.39 698.95h1.5v1.5h-1.5zM704.51 698.95h1.5v1.5h-1.5zM730.57 698.95h1.5v1.5h-1.5zM756.63 698.95h1.5v1.5h-1.5zM782.69 698.95h1.5v1.5h-1.5zM834.81 698.95h1.5v1.5h-1.5zM860.87 698.95h1.5v1.5h-1.5zM886.93 698.95h1.5v1.5h-1.5zM912.99 698.95h1.5v1.5h-1.5zM965.11 698.95h1.5v1.5h-1.5zM991.17 698.95h1.5v1.5h-1.5zM1017.23 698.95h1.5v1.5h-1.5zM1043.29 698.95h1.5v1.5h-1.5zM1095.41 698.95h1.5v1.5h-1.5zM1121.47 698.95h1.5v1.5h-1.5zM1147.53 698.95h1.5v1.5h-1.5zM1173.59 698.95h1.5v1.5h-1.5zM1225.71 698.95h1.5v1.5h-1.5zM1251.77 698.95h1.5v1.5h-1.5zM1277.83 698.95h1.5v1.5h-1.5zM1303.89 698.95h1.5v1.5h-1.5zM53.01 783.62h1.5v1.5h-1.5zM79.07 783.62h1.5v1.5h-1.5zM105.13 783.62h1.5v1.5h-1.5zM131.19 783.62h1.5v1.5h-1.5zM183.31 783.62h1.5v1.5h-1.5zM209.37 783.62h1.5v1.5h-1.5zM235.43 783.62h1.5v1.5h-1.5zM261.49 783.62h1.5v1.5h-1.5zM313.61 783.62h1.5v1.5h-1.5zM339.67 783.62h1.5v1.5h-1.5zM365.73 783.62h1.5v1.5h-1.5zM391.79 783.62h1.5v1.5h-1.5zM443.91 783.62h1.5v1.5h-1.5zM469.97 783.62h1.5v1.5h-1.5zM496.03 783.62h1.5v1.5h-1.5zM522.09 783.62h1.5v1.5h-1.5zM574.21 783.62h1.5v1.5h-1.5zM600.27 783.62h1.5v1.5h-1.5zM626.33 783.62h1.5v1.5h-1.5zM652.39 783.62h1.5v1.5h-1.5zM704.51 783.62h1.5v1.5h-1.5zM730.57 783.62h1.5v1.5h-1.5zM756.63 783.62h1.5v1.5h-1.5zM782.69 783.62h1.5v1.5h-1.5zM834.81 783.62h1.5v1.5h-1.5zM860.87 783.62h1.5v1.5h-1.5zM886.93 783.62h1.5v1.5h-1.5zM912.99 783.62h1.5v1.5h-1.5zM965.11 783.62h1.5v1.5h-1.5zM991.17 783.62h1.5v1.5h-1.5zM1017.23 783.62h1.5v1.5h-1.5zM1043.29 783.62h1.5v1.5h-1.5zM1095.41 783.62h1.5v1.5h-1.5zM1121.47 783.62h1.5v1.5h-1.5zM1147.53 783.62h1.5v1.5h-1.5zM1173.59 783.62h1.5v1.5h-1.5zM1225.71 783.62h1.5v1.5h-1.5zM1251.77 783.62h1.5v1.5h-1.5zM1277.83 783.62h1.5v1.5h-1.5zM1303.89 783.62h1.5v1.5h-1.5zM53.01 21.05h1.5v1.5h-1.5zM53.01 869.05h1.5v1.5h-1.5zM53.01 24.15h1.5v1.5h-1.5zM53.01 865.95h1.5v1.5h-1.5zM79.07 21.05h1.5v1.5h-1.5zM79.07 869.05h1.5v1.5h-1.5zM79.07 24.15h1.5v1.5h-1.5zM79.07 865.95h1.5v1.5h-1.5zM105.13 21.05h1.5v1.5h-1.5zM105.13 869.05h1.5v1.5h-1.5zM105.13 24.15h1.5v1.5h-1.5zM105.13 865.95h1.5v1.5h-1.5zM131.19 21.05h1.5v1.5h-1.5zM131.19 869.05h1.5v1.5h-1.5zM131.19 24.15h1.5v1.5h-1.5zM131.19 865.95h1.5v1.5h-1.5zM157.25 21.05h1.5v1.5h-1.5zM157.25 869.05h1.5v1.5h-1.5zM157.25 24.15h1.5v1.5h-1.5zM157.25 865.95h1.5v1.5h-1.5zM157.25 27.25h1.5v1.5h-1.5zM157.25 862.85h1.5v1.5h-1.5zM183.31 21.05h1.5v1.5h-1.5zM183.31 869.05h1.5v1.5h-1.5zM183.31 24.15h1.5v1.5h-1.5zM183.31 865.95h1.5v1.5h-1.5zM209.37 21.05h1.5v1.5h-1.5zM209.37 869.05h1.5v1.5h-1.5zM209.37 24.15h1.5v1.5h-1.5zM209.37 865.95h1.5v1.5h-1.5zM235.43 21.05h1.5v1.5h-1.5zM235.43 869.05h1.5v1.5h-1.5zM235.43 24.15h1.5v1.5h-1.5zM235.43 865.95h1.5v1.5h-1.5zM261.49 21.05h1.5v1.5h-1.5zM261.49 869.05h1.5v1.5h-1.5zM261.49 24.15h1.5v1.5h-1.5zM261.49 865.95h1.5v1.5h-1.5zM287.55 21.05h1.5v1.5h-1.5zM287.55 869.05h1.5v1.5h-1.5zM287.55 24.15h1.5v1.5h-1.5zM287.55 865.95h1.5v1.5h-1.5zM287.55 27.25h1.5v1.5h-1.5zM287.55 862.85h1.5v1.5h-1.5zM313.61 21.05h1.5v1.5h-1.5zM313.61 869.05h1.5v1.5h-1.5zM313.61 24.15h1.5v1.5h-1.5zM313.61 865.95h1.5v1.5h-1.5zM339.67 21.05h1.5v1.5h-1.5zM339.67 869.05h1.5v1.5h-1.5zM339.67 24.15h1.5v1.5h-1.5zM339.67 865.95h1.5v1.5h-1.5zM365.73 21.05h1.5v1.5h-1.5zM365.73 869.05h1.5v1.5h-1.5zM365.73 24.15h1.5v1.5h-1.5zM365.73 865.95h1.5v1.5h-1.5zM391.79 21.05h1.5v1.5h-1.5zM391.79 869.05h1.5v1.5h-1.5zM391.79 24.15h1.5v1.5h-1.5zM391.79 865.95h1.5v1.5h-1.5zM417.85 21.05h1.5v1.5h-1.5zM417.85 869.05h1.5v1.5h-1.5zM417.85 24.15h1.5v1.5h-1.5zM417.85 865.95h1.5v1.5h-1.5zM417.85 27.25h1.5v1.5h-1.5zM417.85 862.85h1.5v1.5h-1.5zM443.91 21.05h1.5v1.5h-1.5zM443.91 869.05h1.5v1.5h-1.5zM443.91 24.15h1.5v1.5h-1.5zM443.91 865.95h1.5v1.5h-1.5zM469.97 21.05h1.5v1.5h-1.5zM469.97 869.05h1.5v1.5h-1.5zM469.97 24.15h1.5v1.5h-1.5zM469.97 865.95h1.5v1.5h-1.5zM496.03 21.05h1.5v1.5h-1.5zM496.03 869.05h1.5v1.5h-1.5zM496.03 24.15h1.5v1.5h-1.5zM496.03 865.95h1.5v1.5h-1.5zM522.09 21.05h1.5v1.5h-1.5zM522.09 869.05h1.5v1.5h-1.5zM522.09 24.15h1.5v1.5h-1.5zM522.09 865.95h1.5v1.5h-1.5zM548.15 21.05h1.5v1.5h-1.5zM548.15 869.05h1.5v1.5h-1.5zM548.15 24.15h1.5v1.5h-1.5zM548.15 865.95h1.5v1.5h-1.5zM548.15 27.25h1.5v1.5h-1.5zM548.15 862.85h1.5v1.5h-1.5zM574.21 21.05h1.5v1.5h-1.5zM574.21 869.05h1.5v1.5h-1.5zM574.21 24.15h1.5v1.5h-1.5zM574.21 865.95h1.5v1.5h-1.5zM600.27 21.05h1.5v1.5h-1.5zM600.27 869.05h1.5v1.5h-1.5zM600.27 24.15h1.5v1.5h-1.5zM600.27 865.95h1.5v1.5h-1.5zM626.33 21.05h1.5v1.5h-1.5zM626.33 869.05h1.5v1.5h-1.5zM626.33 24.15h1.5v1.5h-1.5zM626.33 865.95h1.5v1.5h-1.5zM652.39 21.05h1.5v1.5h-1.5zM652.39 869.05h1.5v1.5h-1.5zM652.39 24.15h1.5v1.5h-1.5zM652.39 865.95h1.5v1.5h-1.5zM678.45 21.05h1.5v1.5h-1.5zM678.45 869.05h1.5v1.5h-1.5zM678.45 24.15h1.5v1.5h-1.5zM678.45 865.95h1.5v1.5h-1.5zM678.45 27.25h1.5v1.5h-1.5zM678.45 862.85h1.5v1.5h-1.5zM704.51 21.05h1.5v1.5h-1.5zM704.51 869.05h1.5v1.5h-1.5zM704.51 24.15h1.5v1.5h-1.5zM704.51 865.95h1.5v1.5h-1.5zM730.57 21.05h1.5v1.5h-1.5zM730.57 869.05h1.5v1.5h-1.5zM730.57 24.15h1.5v1.5h-1.5zM730.57 865.95h1.5v1.5h-1.5zM756.63 21.05h1.5v1.5h-1.5zM756.63 869.05h1.5v1.5h-1.5zM756.63 24.15h1.5v1.5h-1.5zM756.63 865.95h1.5v1.5h-1.5zM782.69 21.05h1.5v1.5h-1.5zM782.69 869.05h1.5v1.5h-1.5zM782.69 24.15h1.5v1.5h-1.5zM782.69 865.95h1.5v1.5h-1.5zM808.75 21.05h1.5v1.5h-1.5zM808.75 869.05h1.5v1.5h-1.5zM808.75 24.15h1.5v1.5h-1.5zM808.75 865.95h1.5v1.5h-1.5zM808.75 27.25h1.5v1.5h-1.5zM808.75 862.85h1.5v1.5h-1.5zM834.81 21.05h1.5v1.5h-1.5zM834.81 869.05h1.5v1.5h-1.5zM834.81 24.15h1.5v1.5h-1.5zM834.81 865.95h1.5v1.5h-1.5zM860.87 21.05h1.5v1.5h-1.5zM860.87 869.05h1.5v1.5h-1.5zM860.87 24.15h1.5v1.5h-1.5zM860.87 865.95h1.5v1.5h-1.5zM886.93 21.05h1.5v1.5h-1.5zM886.93 869.05h1.5v1.5h-1.5zM886.93 24.15h1.5v1.5h-1.5zM886.93 865.95h1.5v1.5h-1.5zM912.99 21.05h1.5v1.5h-1.5zM912.99 869.05h1.5v1.5h-1.5zM912.99 24.15h1.5v1.5h-1.5zM912.99 865.95h1.5v1.5h-1.5zM939.05 21.05h1.5v1.5h-1.5zM939.05 869.05h1.5v1.5h-1.5zM939.05 24.15h1.5v1.5h-1.5zM939.05 865.95h1.5v1.5h-1.5zM939.05 27.25h1.5v1.5h-1.5zM939.05 862.85h1.5v1.5h-1.5zM965.11 21.05h1.5v1.5h-1.5zM965.11 869.05h1.5v1.5h-1.5zM965.11 24.15h1.5v1.5h-1.5zM965.11 865.95h1.5v1.5h-1.5zM991.17 21.05h1.5v1.5h-1.5zM991.17 869.05h1.5v1.5h-1.5zM991.17 24.15h1.5v1.5h-1.5zM991.17 865.95h1.5v1.5h-1.5zM1017.23 21.05h1.5v1.5h-1.5zM1017.23 869.05h1.5v1.5h-1.5zM1017.23 24.15h1.5v1.5h-1.5zM1017.23 865.95h1.5v1.5h-1.5zM1043.29 21.05h1.5v1.5h-1.5zM1043.29 869.05h1.5v1.5h-1.5zM1043.29 24.15h1.5v1.5h-1.5zM1043.29 865.95h1.5v1.5h-1.5zM1069.35 21.05h1.5v1.5h-1.5zM1069.35 869.05h1.5v1.5h-1.5zM1069.35 24.15h1.5v1.5h-1.5zM1069.35 865.95h1.5v1.5h-1.5zM1069.35 27.25h1.5v1.5h-1.5zM1069.35 862.85h1.5v1.5h-1.5zM1095.41 21.05h1.5v1.5h-1.5zM1095.41 869.05h1.5v1.5h-1.5zM1095.41 24.15h1.5v1.5h-1.5zM1095.41 865.95h1.5v1.5h-1.5zM1121.47 21.05h1.5v1.5h-1.5zM1121.47 869.05h1.5v1.5h-1.5zM1121.47 24.15h1.5v1.5h-1.5zM1121.47 865.95h1.5v1.5h-1.5zM1147.53 21.05h1.5v1.5h-1.5zM1147.53 869.05h1.5v1.5h-1.5zM1147.53 24.15h1.5v1.5h-1.5zM1147.53 865.95h1.5v1.5h-1.5zM1173.59 21.05h1.5v1.5h-1.5zM1173.59 869.05h1.5v1.5h-1.5zM1173.59 24.15h1.5v1.5h-1.5zM1173.59 865.95h1.5v1.5h-1.5zM1199.65 21.05h1.5v1.5h-1.5zM1199.65 869.05h1.5v1.5h-1.5zM1199.65 24.15h1.5v1.5h-1.5zM1199.65 865.95h1.5v1.5h-1.5zM1199.65 27.25h1.5v1.5h-1.5zM1199.65 862.85h1.5v1.5h-1.5zM1225.71 21.05h1.5v1.5h-1.5zM1225.71 869.05h1.5v1.5h-1.5zM1225.71 24.15h1.5v1.5h-1.5zM1225.71 865.95h1.5v1.5h-1.5zM1251.77 21.05h1.5v1.5h-1.5zM1251.77 869.05h1.5v1.5h-1.5zM1251.77 24.15h1.5v1.5h-1.5zM1251.77 865.95h1.5v1.5h-1.5zM1277.83 21.05h1.5v1.5h-1.5zM1277.83 869.05h1.5v1.5h-1.5zM1277.83 24.15h1.5v1.5h-1.5zM1277.83 865.95h1.5v1.5h-1.5zM1303.89 21.05h1.5v1.5h-1.5zM1303.89 869.05h1.5v1.5h-1.5zM1303.89 24.15h1.5v1.5h-1.5zM1303.89 865.95h1.5v1.5h-1.5zM26.55 38.48h1.5v1.5h-1.5zM1329.65 38.48h1.5v1.5h-1.5zM29.75 38.48h1.5v1.5h-1.5zM1326.45 38.48h1.5v1.5h-1.5zM26.55 55.42h1.5v1.5h-1.5zM1329.65 55.42h1.5v1.5h-1.5zM29.75 55.42h1.5v1.5h-1.5zM1326.45 55.42h1.5v1.5h-1.5zM26.55 72.35h1.5v1.5h-1.5zM1329.65 72.35h1.5v1.5h-1.5zM29.75 72.35h1.5v1.5h-1.5zM1326.45 72.35h1.5v1.5h-1.5zM26.55 89.29h1.5v1.5h-1.5zM1329.65 89.29h1.5v1.5h-1.5zM29.75 89.29h1.5v1.5h-1.5zM1326.45 89.29h1.5v1.5h-1.5zM26.55 106.22h1.5v1.5h-1.5zM1329.65 106.22h1.5v1.5h-1.5zM29.75 106.22h1.5v1.5h-1.5zM1326.45 106.22h1.5v1.5h-1.5zM32.95 106.22h1.5v1.5h-1.5zM1323.25 106.22h1.5v1.5h-1.5zM26.55 123.16h1.5v1.5h-1.5zM1329.65 123.16h1.5v1.5h-1.5zM29.75 123.16h1.5v1.5h-1.5zM1326.45 123.16h1.5v1.5h-1.5zM26.55 140.09h1.5v1.5h-1.5zM1329.65 140.09h1.5v1.5h-1.5zM29.75 140.09h1.5v1.5h-1.5zM1326.45 140.09h1.5v1.5h-1.5zM26.55 157.03h1.5v1.5h-1.5zM1329.65 157.03h1.5v1.5h-1.5zM29.75 157.03h1.5v1.5h-1.5zM1326.45 157.03h1.5v1.5h-1.5zM26.55 173.97h1.5v1.5h-1.5zM1329.65 173.97h1.5v1.5h-1.5zM29.75 173.97h1.5v1.5h-1.5zM1326.45 173.97h1.5v1.5h-1.5zM26.55 190.90h1.5v1.5h-1.5zM1329.65 190.90h1.5v1.5h-1.5zM29.75 190.90h1.5v1.5h-1.5zM1326.45 190.90h1.5v1.5h-1.5zM32.95 190.90h1.5v1.5h-1.5zM1323.25 190.90h1.5v1.5h-1.5zM26.55 207.84h1.5v1.5h-1.5zM1329.65 207.84h1.5v1.5h-1.5zM29.75 207.84h1.5v1.5h-1.5zM1326.45 207.84h1.5v1.5h-1.5zM26.55 224.77h1.5v1.5h-1.5zM1329.65 224.77h1.5v1.5h-1.5zM29.75 224.77h1.5v1.5h-1.5zM1326.45 224.77h1.5v1.5h-1.5zM26.55 241.70h1.5v1.5h-1.5zM1329.65 241.70h1.5v1.5h-1.5zM29.75 241.70h1.5v1.5h-1.5zM1326.45 241.70h1.5v1.5h-1.5zM26.55 258.64h1.5v1.5h-1.5zM1329.65 258.64h1.5v1.5h-1.5zM29.75 258.64h1.5v1.5h-1.5zM1326.45 258.64h1.5v1.5h-1.5zM26.55 275.57h1.5v1.5h-1.5zM1329.65 275.57h1.5v1.5h-1.5zM29.75 275.57h1.5v1.5h-1.5zM1326.45 275.57h1.5v1.5h-1.5zM32.95 275.57h1.5v1.5h-1.5zM1323.25 275.57h1.5v1.5h-1.5zM26.55 292.51h1.5v1.5h-1.5zM1329.65 292.51h1.5v1.5h-1.5zM29.75 292.51h1.5v1.5h-1.5zM1326.45 292.51h1.5v1.5h-1.5zM26.55 309.44h1.5v1.5h-1.5zM1329.65 309.44h1.5v1.5h-1.5zM29.75 309.44h1.5v1.5h-1.5zM1326.45 309.44h1.5v1.5h-1.5zM26.55 326.38h1.5v1.5h-1.5zM1329.65 326.38h1.5v1.5h-1.5zM29.75 326.38h1.5v1.5h-1.5zM1326.45 326.38h1.5v1.5h-1.5zM26.55 343.31h1.5v1.5h-1.5zM1329.65 343.31h1.5v1.5h-1.5zM29.75 343.31h1.5v1.5h-1.5zM1326.45 343.31h1.5v1.5h-1.5zM26.55 360.25h1.5v1.5h-1.5zM1329.65 360.25h1.5v1.5h-1.5zM29.75 360.25h1.5v1.5h-1.5zM1326.45 360.25h1.5v1.5h-1.5zM32.95 360.25h1.5v1.5h-1.5zM1323.25 360.25h1.5v1.5h-1.5zM26.55 377.19h1.5v1.5h-1.5zM1329.65 377.19h1.5v1.5h-1.5zM29.75 377.19h1.5v1.5h-1.5zM1326.45 377.19h1.5v1.5h-1.5zM26.55 394.12h1.5v1.5h-1.5zM1329.65 394.12h1.5v1.5h-1.5zM29.75 394.12h1.5v1.5h-1.5zM1326.45 394.12h1.5v1.5h-1.5zM26.55 411.06h1.5v1.5h-1.5zM1329.65 411.06h1.5v1.5h-1.5zM29.75 411.06h1.5v1.5h-1.5zM1326.45 411.06h1.5v1.5h-1.5zM26.55 427.99h1.5v1.5h-1.5zM1329.65 427.99h1.5v1.5h-1.5zM29.75 427.99h1.5v1.5h-1.5zM1326.45 427.99h1.5v1.5h-1.5zM26.55 444.92h1.5v1.5h-1.5zM1329.65 444.92h1.5v1.5h-1.5zM29.75 444.92h1.5v1.5h-1.5zM1326.45 444.92h1.5v1.5h-1.5zM32.95 444.92h1.5v1.5h-1.5zM1323.25 444.92h1.5v1.5h-1.5zM26.55 461.86h1.5v1.5h-1.5zM1329.65 461.86h1.5v1.5h-1.5zM29.75 461.86h1.5v1.5h-1.5zM1326.45 461.86h1.5v1.5h-1.5zM26.55 478.79h1.5v1.5h-1.5zM1329.65 478.79h1.5v1.5h-1.5zM29.75 478.79h1.5v1.5h-1.5zM1326.45 478.79h1.5v1.5h-1.5zM26.55 495.73h1.5v1.5h-1.5zM1329.65 495.73h1.5v1.5h-1.5zM29.75 495.73h1.5v1.5h-1.5zM1326.45 495.73h1.5v1.5h-1.5zM26.55 512.66h1.5v1.5h-1.5zM1329.65 512.66h1.5v1.5h-1.5zM29.75 512.66h1.5v1.5h-1.5zM1326.45 512.66h1.5v1.5h-1.5zM26.55 529.60h1.5v1.5h-1.5zM1329.65 529.60h1.5v1.5h-1.5zM29.75 529.60h1.5v1.5h-1.5zM1326.45 529.60h1.5v1.5h-1.5zM32.95 529.60h1.5v1.5h-1.5zM1323.25 529.60h1.5v1.5h-1.5zM26.55 546.53h1.5v1.5h-1.5zM1329.65 546.53h1.5v1.5h-1.5zM29.75 546.53h1.5v1.5h-1.5zM1326.45 546.53h1.5v1.5h-1.5zM26.55 563.47h1.5v1.5h-1.5zM1329.65 563.47h1.5v1.5h-1.5zM29.75 563.47h1.5v1.5h-1.5zM1326.45 563.47h1.5v1.5h-1.5zM26.55 580.40h1.5v1.5h-1.5zM1329.65 580.40h1.5v1.5h-1.5zM29.75 580.40h1.5v1.5h-1.5zM1326.45 580.40h1.5v1.5h-1.5zM26.55 597.34h1.5v1.5h-1.5zM1329.65 597.34h1.5v1.5h-1.5zM29.75 597.34h1.5v1.5h-1.5zM1326.45 597.34h1.5v1.5h-1.5zM26.55 614.27h1.5v1.5h-1.5zM1329.65 614.27h1.5v1.5h-1.5zM29.75 614.27h1.5v1.5h-1.5zM1326.45 614.27h1.5v1.5h-1.5zM32.95 614.27h1.5v1.5h-1.5zM1323.25 614.27h1.5v1.5h-1.5zM26.55 631.21h1.5v1.5h-1.5zM1329.65 631.21h1.5v1.5h-1.5zM29.75 631.21h1.5v1.5h-1.5zM1326.45 631.21h1.5v1.5h-1.5zM26.55 648.14h1.5v1.5h-1.5zM1329.65 648.14h1.5v1.5h-1.5zM29.75 648.14h1.5v1.5h-1.5zM1326.45 648.14h1.5v1.5h-1.5zM26.55 665.08h1.5v1.5h-1.5zM1329.65 665.08h1.5v1.5h-1.5zM29.75 665.08h1.5v1.5h-1.5zM1326.45 665.08h1.5v1.5h-1.5zM26.55 682.01h1.5v1.5h-1.5zM1329.65 682.01h1.5v1.5h-1.5zM29.75 682.01h1.5v1.5h-1.5zM1326.45 682.01h1.5v1.5h-1.5zM26.55 698.95h1.5v1.5h-1.5zM1329.65 698.95h1.5v1.5h-1.5zM29.75 698.95h1.5v1.5h-1.5zM1326.45 698.95h1.5v1.5h-1.5zM32.95 698.95h1.5v1.5h-1.5zM1323.25 698.95h1.5v1.5h-1.5zM26.55 715.88h1.5v1.5h-1.5zM1329.65 715.88h1.5v1.5h-1.5zM29.75 715.88h1.5v1.5h-1.5zM1326.45 715.88h1.5v1.5h-1.5zM26.55 732.82h1.5v1.5h-1.5zM1329.65 732.82h1.5v1.5h-1.5zM29.75 732.82h1.5v1.5h-1.5zM1326.45 732.82h1.5v1.5h-1.5zM26.55 749.75h1.5v1.5h-1.5zM1329.65 749.75h1.5v1.5h-1.5zM29.75 749.75h1.5v1.5h-1.5zM1326.45 749.75h1.5v1.5h-1.5zM26.55 766.69h1.5v1.5h-1.5zM1329.65 766.69h1.5v1.5h-1.5zM29.75 766.69h1.5v1.5h-1.5zM1326.45 766.69h1.5v1.5h-1.5zM26.55 783.62h1.5v1.5h-1.5zM1329.65 783.62h1.5v1.5h-1.5zM29.75 783.62h1.5v1.5h-1.5zM1326.45 783.62h1.5v1.5h-1.5zM32.95 783.62h1.5v1.5h-1.5zM1323.25 783.62h1.5v1.5h-1.5zM26.55 800.56h1.5v1.5h-1.5zM1329.65 800.56h1.5v1.5h-1.5zM29.75 800.56h1.5v1.5h-1.5zM1326.45 800.56h1.5v1.5h-1.5zM26.55 817.49h1.5v1.5h-1.5zM1329.65 817.49h1.5v1.5h-1.5zM29.75 817.49h1.5v1.5h-1.5zM1326.45 817.49h1.5v1.5h-1.5zM26.55 834.43h1.5v1.5h-1.5zM1329.65 834.43h1.5v1.5h-1.5zM29.75 834.43h1.5v1.5h-1.5zM1326.45 834.43h1.5v1.5h-1.5zM26.55 851.36h1.5v1.5h-1.5zM1329.65 851.36h1.5v1.5h-1.5zM29.75 851.36h1.5v1.5h-1.5zM1326.45 851.36h1.5v1.5h-1.5zM27.05 445.02h1.3v1.3h-1.3zM29.66 445.02h1.3v1.3h-1.3zM32.26 445.02h1.3v1.3h-1.3zM34.87 445.02h1.3v1.3h-1.3zM37.47 445.02h1.3v1.3h-1.3zM40.08 445.02h1.3v1.3h-1.3zM42.69 445.02h1.3v1.3h-1.3zM45.29 445.02h1.3v1.3h-1.3zM47.90 445.02h1.3v1.3h-1.3zM50.50 445.02h1.3v1.3h-1.3zM53.11 445.02h1.3v1.3h-1.3zM55.72 445.02h1.3v1.3h-1.3zM58.32 445.02h1.3v1.3h-1.3zM60.93 445.02h1.3v1.3h-1.3zM63.53 445.02h1.3v1.3h-1.3zM66.14 445.02h1.3v1.3h-1.3zM68.75 445.02h1.3v1.3h-1.3zM71.35 445.02h1.3v1.3h-1.3zM73.96 445.02h1.3v1.3h-1.3zM76.56 445.02h1.3v1.3h-1.3zM79.17 445.02h1.3v1.3h-1.3zM81.78 445.02h1.3v1.3h-1.3zM84.38 445.02h1.3v1.3h-1.3zM86.99 445.02h1.3v1.3h-1.3zM89.59 445.02h1.3v1.3h-1.3zM92.20 445.02h1.3v1.3h-1.3zM94.81 445.02h1.3v1.3h-1.3zM97.41 445.02h1.3v1.3h-1.3zM100.02 445.02h1.3v1.3h-1.3zM102.62 445.02h1.3v1.3h-1.3zM105.23 445.02h1.3v1.3h-1.3zM107.84 445.02h1.3v1.3h-1.3zM110.44 445.02h1.3v1.3h-1.3zM113.05 445.02h1.3v1.3h-1.3zM115.65 445.02h1.3v1.3h-1.3zM118.26 445.02h1.3v1.3h-1.3zM120.87 445.02h1.3v1.3h-1.3zM123.47 445.02h1.3v1.3h-1.3zM126.08 445.02h1.3v1.3h-1.3zM128.68 445.02h1.3v1.3h-1.3zM131.29 445.02h1.3v1.3h-1.3zM133.90 445.02h1.3v1.3h-1.3zM136.50 445.02h1.3v1.3h-1.3zM139.11 445.02h1.3v1.3h-1.3zM141.71 445.02h1.3v1.3h-1.3zM144.32 445.02h1.3v1.3h-1.3zM146.93 445.02h1.3v1.3h-1.3zM149.53 445.02h1.3v1.3h-1.3zM152.14 445.02h1.3v1.3h-1.3zM154.74 445.02h1.3v1.3h-1.3zM157.35 445.02h1.3v1.3h-1.3zM159.96 445.02h1.3v1.3h-1.3zM162.56 445.02h1.3v1.3h-1.3zM165.17 445.02h1.3v1.3h-1.3zM167.77 445.02h1.3v1.3h-1.3zM170.38 445.02h1.3v1.3h-1.3zM172.99 445.02h1.3v1.3h-1.3zM175.59 445.02h1.3v1.3h-1.3zM178.20 445.02h1.3v1.3h-1.3zM180.80 445.02h1.3v1.3h-1.3zM183.41 445.02h1.3v1.3h-1.3zM186.02 445.02h1.3v1.3h-1.3zM188.62 445.02h1.3v1.3h-1.3zM191.23 445.02h1.3v1.3h-1.3zM193.83 445.02h1.3v1.3h-1.3zM196.44 445.02h1.3v1.3h-1.3zM199.05 445.02h1.3v1.3h-1.3zM201.65 445.02h1.3v1.3h-1.3zM204.26 445.02h1.3v1.3h-1.3zM206.86 445.02h1.3v1.3h-1.3zM209.47 445.02h1.3v1.3h-1.3zM212.08 445.02h1.3v1.3h-1.3zM214.68 445.02h1.3v1.3h-1.3zM217.29 445.02h1.3v1.3h-1.3zM219.89 445.02h1.3v1.3h-1.3zM222.50 445.02h1.3v1.3h-1.3zM225.11 445.02h1.3v1.3h-1.3zM227.71 445.02h1.3v1.3h-1.3zM230.32 445.02h1.3v1.3h-1.3zM232.92 445.02h1.3v1.3h-1.3zM235.53 445.02h1.3v1.3h-1.3zM238.14 445.02h1.3v1.3h-1.3zM240.74 445.02h1.3v1.3h-1.3zM243.35 445.02h1.3v1.3h-1.3zM245.95 445.02h1.3v1.3h-1.3zM248.56 445.02h1.3v1.3h-1.3zM251.17 445.02h1.3v1.3h-1.3zM253.77 445.02h1.3v1.3h-1.3zM256.38 445.02h1.3v1.3h-1.3zM258.98 445.02h1.3v1.3h-1.3zM261.59 445.02h1.3v1.3h-1.3zM264.20 445.02h1.3v1.3h-1.3zM266.80 445.02h1.3v1.3h-1.3zM269.41 445.02h1.3v1.3h-1.3zM272.01 445.02h1.3v1.3h-1.3zM274.62 445.02h1.3v1.3h-1.3zM277.23 445.02h1.3v1.3h-1.3zM279.83 445.02h1.3v1.3h-1.3zM282.44 445.02h1.3v1.3h-1.3zM285.04 445.02h1.3v1.3h-1.3zM287.65 445.02h1.3v1.3h-1.3zM290.26 445.02h1.3v1.3h-1.3zM292.86 445.02h1.3v1.3h-1.3zM295.47 445.02h1.3v1.3h-1.3zM298.07 445.02h1.3v1.3h-1.3zM300.68 445.02h1.3v1.3h-1.3zM303.29 445.02h1.3v1.3h-1.3zM305.89 445.02h1.3v1.3h-1.3zM308.50 445.02h1.3v1.3h-1.3zM311.10 445.02h1.3v1.3h-1.3zM313.71 445.02h1.3v1.3h-1.3zM316.32 445.02h1.3v1.3h-1.3zM318.92 445.02h1.3v1.3h-1.3zM321.53 445.02h1.3v1.3h-1.3zM324.13 445.02h1.3v1.3h-1.3zM326.74 445.02h1.3v1.3h-1.3zM329.35 445.02h1.3v1.3h-1.3zM331.95 445.02h1.3v1.3h-1.3zM334.56 445.02h1.3v1.3h-1.3zM337.16 445.02h1.3v1.3h-1.3zM339.77 445.02h1.3v1.3h-1.3zM342.38 445.02h1.3v1.3h-1.3zM344.98 445.02h1.3v1.3h-1.3zM347.59 445.02h1.3v1.3h-1.3zM350.19 445.02h1.3v1.3h-1.3zM352.80 445.02h1.3v1.3h-1.3zM355.41 445.02h1.3v1.3h-1.3zM358.01 445.02h1.3v1.3h-1.3zM360.62 445.02h1.3v1.3h-1.3zM363.22 445.02h1.3v1.3h-1.3zM365.83 445.02h1.3v1.3h-1.3zM368.44 445.02h1.3v1.3h-1.3zM371.04 445.02h1.3v1.3h-1.3zM373.65 445.02h1.3v1.3h-1.3zM376.25 445.02h1.3v1.3h-1.3zM378.86 445.02h1.3v1.3h-1.3zM381.47 445.02h1.3v1.3h-1.3zM384.07 445.02h1.3v1.3h-1.3zM386.68 445.02h1.3v1.3h-1.3zM389.28 445.02h1.3v1.3h-1.3zM391.89 445.02h1.3v1.3h-1.3zM394.50 445.02h1.3v1.3h-1.3zM397.10 445.02h1.3v1.3h-1.3zM399.71 445.02h1.3v1.3h-1.3zM402.31 445.02h1.3v1.3h-1.3zM404.92 445.02h1.3v1.3h-1.3zM407.53 445.02h1.3v1.3h-1.3zM410.13 445.02h1.3v1.3h-1.3zM412.74 445.02h1.3v1.3h-1.3zM415.34 445.02h1.3v1.3h-1.3zM417.95 445.02h1.3v1.3h-1.3zM420.56 445.02h1.3v1.3h-1.3zM423.16 445.02h1.3v1.3h-1.3zM425.77 445.02h1.3v1.3h-1.3zM428.37 445.02h1.3v1.3h-1.3zM430.98 445.02h1.3v1.3h-1.3zM433.59 445.02h1.3v1.3h-1.3zM436.19 445.02h1.3v1.3h-1.3zM438.80 445.02h1.3v1.3h-1.3zM441.40 445.02h1.3v1.3h-1.3zM444.01 445.02h1.3v1.3h-1.3zM446.62 445.02h1.3v1.3h-1.3zM449.22 445.02h1.3v1.3h-1.3zM451.83 445.02h1.3v1.3h-1.3zM454.43 445.02h1.3v1.3h-1.3zM457.04 445.02h1.3v1.3h-1.3zM459.65 445.02h1.3v1.3h-1.3zM462.25 445.02h1.3v1.3h-1.3zM464.86 445.02h1.3v1.3h-1.3zM467.46 445.02h1.3v1.3h-1.3zM470.07 445.02h1.3v1.3h-1.3zM472.68 445.02h1.3v1.3h-1.3zM475.28 445.02h1.3v1.3h-1.3zM477.89 445.02h1.3v1.3h-1.3zM480.49 445.02h1.3v1.3h-1.3zM483.10 445.02h1.3v1.3h-1.3zM485.71 445.02h1.3v1.3h-1.3zM488.31 445.02h1.3v1.3h-1.3zM490.92 445.02h1.3v1.3h-1.3zM493.52 445.02h1.3v1.3h-1.3zM496.13 445.02h1.3v1.3h-1.3zM498.74 445.02h1.3v1.3h-1.3zM501.34 445.02h1.3v1.3h-1.3zM503.95 445.02h1.3v1.3h-1.3zM506.55 445.02h1.3v1.3h-1.3zM509.16 445.02h1.3v1.3h-1.3zM511.77 445.02h1.3v1.3h-1.3zM514.37 445.02h1.3v1.3h-1.3zM516.98 445.02h1.3v1.3h-1.3zM519.58 445.02h1.3v1.3h-1.3zM522.19 445.02h1.3v1.3h-1.3zM524.80 445.02h1.3v1.3h-1.3zM527.40 445.02h1.3v1.3h-1.3zM530.01 445.02h1.3v1.3h-1.3zM532.61 445.02h1.3v1.3h-1.3zM535.22 445.02h1.3v1.3h-1.3zM537.83 445.02h1.3v1.3h-1.3zM540.43 445.02h1.3v1.3h-1.3zM543.04 445.02h1.3v1.3h-1.3zM545.64 445.02h1.3v1.3h-1.3zM548.25 445.02h1.3v1.3h-1.3zM550.86 445.02h1.3v1.3h-1.3zM553.46 445.02h1.3v1.3h-1.3zM556.07 445.02h1.3v1.3h-1.3zM558.67 445.02h1.3v1.3h-1.3zM561.28 445.02h1.3v1.3h-1.3zM563.89 445.02h1.3v1.3h-1.3zM566.49 445.02h1.3v1.3h-1.3zM569.10 445.02h1.3v1.3h-1.3zM571.70 445.02h1.3v1.3h-1.3zM574.31 445.02h1.3v1.3h-1.3zM576.92 445.02h1.3v1.3h-1.3zM579.52 445.02h1.3v1.3h-1.3zM582.13 445.02h1.3v1.3h-1.3zM584.73 445.02h1.3v1.3h-1.3zM587.34 445.02h1.3v1.3h-1.3zM589.95 445.02h1.3v1.3h-1.3zM592.55 445.02h1.3v1.3h-1.3zM595.16 445.02h1.3v1.3h-1.3zM597.76 445.02h1.3v1.3h-1.3zM600.37 445.02h1.3v1.3h-1.3zM602.98 445.02h1.3v1.3h-1.3zM605.58 445.02h1.3v1.3h-1.3zM608.19 445.02h1.3v1.3h-1.3zM610.79 445.02h1.3v1.3h-1.3zM613.40 445.02h1.3v1.3h-1.3zM616.01 445.02h1.3v1.3h-1.3zM618.61 445.02h1.3v1.3h-1.3zM621.22 445.02h1.3v1.3h-1.3zM623.82 445.02h1.3v1.3h-1.3zM626.43 445.02h1.3v1.3h-1.3zM629.04 445.02h1.3v1.3h-1.3zM631.64 445.02h1.3v1.3h-1.3zM634.25 445.02h1.3v1.3h-1.3zM636.85 445.02h1.3v1.3h-1.3zM639.46 445.02h1.3v1.3h-1.3zM642.07 445.02h1.3v1.3h-1.3zM644.67 445.02h1.3v1.3h-1.3zM647.28 445.02h1.3v1.3h-1.3zM649.88 445.02h1.3v1.3h-1.3zM652.49 445.02h1.3v1.3h-1.3zM655.10 445.02h1.3v1.3h-1.3zM657.70 445.02h1.3v1.3h-1.3zM660.31 445.02h1.3v1.3h-1.3zM662.91 445.02h1.3v1.3h-1.3zM665.52 445.02h1.3v1.3h-1.3zM668.13 445.02h1.3v1.3h-1.3zM670.73 445.02h1.3v1.3h-1.3zM673.34 445.02h1.3v1.3h-1.3zM675.94 445.02h1.3v1.3h-1.3zM678.55 445.02h1.3v1.3h-1.3zM681.16 445.02h1.3v1.3h-1.3zM683.76 445.02h1.3v1.3h-1.3zM686.37 445.02h1.3v1.3h-1.3zM688.97 445.02h1.3v1.3h-1.3zM691.58 445.02h1.3v1.3h-1.3zM694.19 445.02h1.3v1.3h-1.3zM696.79 445.02h1.3v1.3h-1.3zM699.40 445.02h1.3v1.3h-1.3zM702.00 445.02h1.3v1.3h-1.3zM704.61 445.02h1.3v1.3h-1.3zM707.22 445.02h1.3v1.3h-1.3zM709.82 445.02h1.3v1.3h-1.3zM712.43 445.02h1.3v1.3h-1.3zM715.03 445.02h1.3v1.3h-1.3zM717.64 445.02h1.3v1.3h-1.3zM720.25 445.02h1.3v1.3h-1.3zM722.85 445.02h1.3v1.3h-1.3zM725.46 445.02h1.3v1.3h-1.3zM728.06 445.02h1.3v1.3h-1.3zM730.67 445.02h1.3v1.3h-1.3zM733.28 445.02h1.3v1.3h-1.3zM735.88 445.02h1.3v1.3h-1.3zM738.49 445.02h1.3v1.3h-1.3zM741.09 445.02h1.3v1.3h-1.3zM743.70 445.02h1.3v1.3h-1.3zM746.31 445.02h1.3v1.3h-1.3zM748.91 445.02h1.3v1.3h-1.3zM751.52 445.02h1.3v1.3h-1.3zM754.12 445.02h1.3v1.3h-1.3zM756.73 445.02h1.3v1.3h-1.3zM759.34 445.02h1.3v1.3h-1.3zM761.94 445.02h1.3v1.3h-1.3zM764.55 445.02h1.3v1.3h-1.3zM767.15 445.02h1.3v1.3h-1.3zM769.76 445.02h1.3v1.3h-1.3zM772.37 445.02h1.3v1.3h-1.3zM774.97 445.02h1.3v1.3h-1.3zM777.58 445.02h1.3v1.3h-1.3zM780.18 445.02h1.3v1.3h-1.3zM782.79 445.02h1.3v1.3h-1.3zM785.40 445.02h1.3v1.3h-1.3zM788.00 445.02h1.3v1.3h-1.3zM790.61 445.02h1.3v1.3h-1.3zM793.21 445.02h1.3v1.3h-1.3zM795.82 445.02h1.3v1.3h-1.3zM798.43 445.02h1.3v1.3h-1.3zM801.03 445.02h1.3v1.3h-1.3zM803.64 445.02h1.3v1.3h-1.3zM806.24 445.02h1.3v1.3h-1.3zM808.85 445.02h1.3v1.3h-1.3zM811.46 445.02h1.3v1.3h-1.3zM814.06 445.02h1.3v1.3h-1.3zM816.67 445.02h1.3v1.3h-1.3zM819.27 445.02h1.3v1.3h-1.3zM821.88 445.02h1.3v1.3h-1.3zM824.49 445.02h1.3v1.3h-1.3zM827.09 445.02h1.3v1.3h-1.3zM829.70 445.02h1.3v1.3h-1.3zM832.30 445.02h1.3v1.3h-1.3zM834.91 445.02h1.3v1.3h-1.3zM837.52 445.02h1.3v1.3h-1.3zM840.12 445.02h1.3v1.3h-1.3zM842.73 445.02h1.3v1.3h-1.3zM845.33 445.02h1.3v1.3h-1.3zM847.94 445.02h1.3v1.3h-1.3zM850.55 445.02h1.3v1.3h-1.3zM853.15 445.02h1.3v1.3h-1.3zM855.76 445.02h1.3v1.3h-1.3zM858.36 445.02h1.3v1.3h-1.3zM860.97 445.02h1.3v1.3h-1.3zM863.58 445.02h1.3v1.3h-1.3zM866.18 445.02h1.3v1.3h-1.3zM868.79 445.02h1.3v1.3h-1.3zM871.39 445.02h1.3v1.3h-1.3zM874.00 445.02h1.3v1.3h-1.3zM876.61 445.02h1.3v1.3h-1.3zM879.21 445.02h1.3v1.3h-1.3zM881.82 445.02h1.3v1.3h-1.3zM884.42 445.02h1.3v1.3h-1.3zM887.03 445.02h1.3v1.3h-1.3zM889.64 445.02h1.3v1.3h-1.3zM892.24 445.02h1.3v1.3h-1.3zM894.85 445.02h1.3v1.3h-1.3zM897.45 445.02h1.3v1.3h-1.3zM900.06 445.02h1.3v1.3h-1.3zM902.67 445.02h1.3v1.3h-1.3zM905.27 445.02h1.3v1.3h-1.3zM907.88 445.02h1.3v1.3h-1.3zM910.48 445.02h1.3v1.3h-1.3zM913.09 445.02h1.3v1.3h-1.3zM915.70 445.02h1.3v1.3h-1.3zM918.30 445.02h1.3v1.3h-1.3zM920.91 445.02h1.3v1.3h-1.3zM923.51 445.02h1.3v1.3h-1.3zM926.12 445.02h1.3v1.3h-1.3zM928.73 445.02h1.3v1.3h-1.3zM931.33 445.02h1.3v1.3h-1.3zM933.94 445.02h1.3v1.3h-1.3zM936.54 445.02h1.3v1.3h-1.3zM939.15 445.02h1.3v1.3h-1.3zM941.76 445.02h1.3v1.3h-1.3zM944.36 445.02h1.3v1.3h-1.3zM946.97 445.02h1.3v1.3h-1.3zM949.57 445.02h1.3v1.3h-1.3zM952.18 445.02h1.3v1.3h-1.3zM954.79 445.02h1.3v1.3h-1.3zM957.39 445.02h1.3v1.3h-1.3zM960.00 445.02h1.3v1.3h-1.3zM962.60 445.02h1.3v1.3h-1.3zM965.21 445.02h1.3v1.3h-1.3zM967.82 445.02h1.3v1.3h-1.3zM970.42 445.02h1.3v1.3h-1.3zM973.03 445.02h1.3v1.3h-1.3zM975.63 445.02h1.3v1.3h-1.3zM978.24 445.02h1.3v1.3h-1.3zM980.85 445.02h1.3v1.3h-1.3zM983.45 445.02h1.3v1.3h-1.3zM986.06 445.02h1.3v1.3h-1.3zM988.66 445.02h1.3v1.3h-1.3zM991.27 445.02h1.3v1.3h-1.3zM993.88 445.02h1.3v1.3h-1.3zM996.48 445.02h1.3v1.3h-1.3zM999.09 445.02h1.3v1.3h-1.3zM1001.69 445.02h1.3v1.3h-1.3zM1004.30 445.02h1.3v1.3h-1.3zM1006.91 445.02h1.3v1.3h-1.3zM1009.51 445.02h1.3v1.3h-1.3zM1012.12 445.02h1.3v1.3h-1.3zM1014.72 445.02h1.3v1.3h-1.3zM1017.33 445.02h1.3v1.3h-1.3zM1019.94 445.02h1.3v1.3h-1.3zM1022.54 445.02h1.3v1.3h-1.3zM1025.15 445.02h1.3v1.3h-1.3zM1027.75 445.02h1.3v1.3h-1.3zM1030.36 445.02h1.3v1.3h-1.3zM1032.97 445.02h1.3v1.3h-1.3zM1035.57 445.02h1.3v1.3h-1.3zM1038.18 445.02h1.3v1.3h-1.3zM1040.78 445.02h1.3v1.3h-1.3zM1043.39 445.02h1.3v1.3h-1.3zM1046.00 445.02h1.3v1.3h-1.3zM1048.60 445.02h1.3v1.3h-1.3zM1051.21 445.02h1.3v1.3h-1.3zM1053.81 445.02h1.3v1.3h-1.3zM1056.42 445.02h1.3v1.3h-1.3zM1059.03 445.02h1.3v1.3h-1.3zM1061.63 445.02h1.3v1.3h-1.3zM1064.24 445.02h1.3v1.3h-1.3zM1066.84 445.02h1.3v1.3h-1.3zM1069.45 445.02h1.3v1.3h-1.3zM1072.06 445.02h1.3v1.3h-1.3zM1074.66 445.02h1.3v1.3h-1.3zM1077.27 445.02h1.3v1.3h-1.3zM1079.87 445.02h1.3v1.3h-1.3zM1082.48 445.02h1.3v1.3h-1.3zM1085.09 445.02h1.3v1.3h-1.3zM1087.69 445.02h1.3v1.3h-1.3zM1090.30 445.02h1.3v1.3h-1.3zM1092.90 445.02h1.3v1.3h-1.3zM1095.51 445.02h1.3v1.3h-1.3zM1098.12 445.02h1.3v1.3h-1.3zM1100.72 445.02h1.3v1.3h-1.3zM1103.33 445.02h1.3v1.3h-1.3zM1105.93 445.02h1.3v1.3h-1.3zM1108.54 445.02h1.3v1.3h-1.3zM1111.15 445.02h1.3v1.3h-1.3zM1113.75 445.02h1.3v1.3h-1.3zM1116.36 445.02h1.3v1.3h-1.3zM1118.96 445.02h1.3v1.3h-1.3zM1121.57 445.02h1.3v1.3h-1.3zM1124.18 445.02h1.3v1.3h-1.3zM1126.78 445.02h1.3v1.3h-1.3zM1129.39 445.02h1.3v1.3h-1.3zM1131.99 445.02h1.3v1.3h-1.3zM1134.60 445.02h1.3v1.3h-1.3zM1137.21 445.02h1.3v1.3h-1.3zM1139.81 445.02h1.3v1.3h-1.3zM1142.42 445.02h1.3v1.3h-1.3zM1145.02 445.02h1.3v1.3h-1.3zM1147.63 445.02h1.3v1.3h-1.3zM1150.24 445.02h1.3v1.3h-1.3zM1152.84 445.02h1.3v1.3h-1.3zM1155.45 445.02h1.3v1.3h-1.3zM1158.05 445.02h1.3v1.3h-1.3zM1160.66 445.02h1.3v1.3h-1.3zM1163.27 445.02h1.3v1.3h-1.3zM1165.87 445.02h1.3v1.3h-1.3zM1168.48 445.02h1.3v1.3h-1.3zM1171.08 445.02h1.3v1.3h-1.3zM1173.69 445.02h1.3v1.3h-1.3zM1176.30 445.02h1.3v1.3h-1.3zM1178.90 445.02h1.3v1.3h-1.3zM1181.51 445.02h1.3v1.3h-1.3zM1184.11 445.02h1.3v1.3h-1.3zM1186.72 445.02h1.3v1.3h-1.3zM1189.33 445.02h1.3v1.3h-1.3zM1191.93 445.02h1.3v1.3h-1.3zM1194.54 445.02h1.3v1.3h-1.3zM1197.14 445.02h1.3v1.3h-1.3zM1199.75 445.02h1.3v1.3h-1.3zM1202.36 445.02h1.3v1.3h-1.3zM1204.96 445.02h1.3v1.3h-1.3zM1207.57 445.02h1.3v1.3h-1.3zM1210.17 445.02h1.3v1.3h-1.3zM1212.78 445.02h1.3v1.3h-1.3zM1215.39 445.02h1.3v1.3h-1.3zM1217.99 445.02h1.3v1.3h-1.3zM1220.60 445.02h1.3v1.3h-1.3zM1223.20 445.02h1.3v1.3h-1.3zM1225.81 445.02h1.3v1.3h-1.3zM1228.42 445.02h1.3v1.3h-1.3zM1231.02 445.02h1.3v1.3h-1.3zM1233.63 445.02h1.3v1.3h-1.3zM1236.23 445.02h1.3v1.3h-1.3zM1238.84 445.02h1.3v1.3h-1.3zM1241.45 445.02h1.3v1.3h-1.3zM1244.05 445.02h1.3v1.3h-1.3zM1246.66 445.02h1.3v1.3h-1.3zM1249.26 445.02h1.3v1.3h-1.3zM1251.87 445.02h1.3v1.3h-1.3zM1254.48 445.02h1.3v1.3h-1.3zM1257.08 445.02h1.3v1.3h-1.3zM1259.69 445.02h1.3v1.3h-1.3zM1262.29 445.02h1.3v1.3h-1.3zM1264.90 445.02h1.3v1.3h-1.3zM1267.51 445.02h1.3v1.3h-1.3zM1270.11 445.02h1.3v1.3h-1.3zM1272.72 445.02h1.3v1.3h-1.3zM1275.32 445.02h1.3v1.3h-1.3zM1277.93 445.02h1.3v1.3h-1.3zM1280.54 445.02h1.3v1.3h-1.3zM1283.14 445.02h1.3v1.3h-1.3zM1285.75 445.02h1.3v1.3h-1.3zM1288.35 445.02h1.3v1.3h-1.3zM1290.96 445.02h1.3v1.3h-1.3zM1293.57 445.02h1.3v1.3h-1.3zM1296.17 445.02h1.3v1.3h-1.3zM1298.78 445.02h1.3v1.3h-1.3zM1301.38 445.02h1.3v1.3h-1.3zM1303.99 445.02h1.3v1.3h-1.3zM1306.60 445.02h1.3v1.3h-1.3zM1309.20 445.02h1.3v1.3h-1.3zM1311.81 445.02h1.3v1.3h-1.3zM1314.41 445.02h1.3v1.3h-1.3zM1317.02 445.02h1.3v1.3h-1.3zM1319.63 445.02h1.3v1.3h-1.3zM1322.23 445.02h1.3v1.3h-1.3zM1324.84 445.02h1.3v1.3h-1.3zM1327.44 445.02h1.3v1.3h-1.3zM678.55 21.65h1.3v1.3h-1.3zM678.55 24.47h1.3v1.3h-1.3zM678.55 27.30h1.3v1.3h-1.3zM678.55 30.12h1.3v1.3h-1.3zM678.55 32.94h1.3v1.3h-1.3zM678.55 35.76h1.3v1.3h-1.3zM678.55 38.58h1.3v1.3h-1.3zM678.55 41.41h1.3v1.3h-1.3zM678.55 44.23h1.3v1.3h-1.3zM678.55 47.05h1.3v1.3h-1.3zM678.55 49.87h1.3v1.3h-1.3zM678.55 52.70h1.3v1.3h-1.3zM678.55 55.52h1.3v1.3h-1.3zM678.55 58.34h1.3v1.3h-1.3zM678.55 61.16h1.3v1.3h-1.3zM678.55 63.99h1.3v1.3h-1.3zM678.55 66.81h1.3v1.3h-1.3zM678.55 69.63h1.3v1.3h-1.3zM678.55 72.45h1.3v1.3h-1.3zM678.55 75.28h1.3v1.3h-1.3zM678.55 78.10h1.3v1.3h-1.3zM678.55 80.92h1.3v1.3h-1.3zM678.55 83.75h1.3v1.3h-1.3zM678.55 86.57h1.3v1.3h-1.3zM678.55 89.39h1.3v1.3h-1.3zM678.55 92.21h1.3v1.3h-1.3zM678.55 95.04h1.3v1.3h-1.3zM678.55 97.86h1.3v1.3h-1.3zM678.55 100.68h1.3v1.3h-1.3zM678.55 103.50h1.3v1.3h-1.3zM678.55 106.33h1.3v1.3h-1.3zM678.55 109.15h1.3v1.3h-1.3zM678.55 111.97h1.3v1.3h-1.3zM678.55 114.79h1.3v1.3h-1.3zM678.55 117.62h1.3v1.3h-1.3zM678.55 120.44h1.3v1.3h-1.3zM678.55 123.26h1.3v1.3h-1.3zM678.55 126.08h1.3v1.3h-1.3zM678.55 128.91h1.3v1.3h-1.3zM678.55 131.73h1.3v1.3h-1.3zM678.55 134.55h1.3v1.3h-1.3zM678.55 137.37h1.3v1.3h-1.3zM678.55 140.20h1.3v1.3h-1.3zM678.55 143.02h1.3v1.3h-1.3zM678.55 145.84h1.3v1.3h-1.3zM678.55 148.66h1.3v1.3h-1.3zM678.55 151.49h1.3v1.3h-1.3zM678.55 154.31h1.3v1.3h-1.3zM678.55 157.13h1.3v1.3h-1.3zM678.55 159.95h1.3v1.3h-1.3zM678.55 162.77h1.3v1.3h-1.3zM678.55 165.60h1.3v1.3h-1.3zM678.55 168.42h1.3v1.3h-1.3zM678.55 171.24h1.3v1.3h-1.3zM678.55 174.06h1.3v1.3h-1.3zM678.55 176.89h1.3v1.3h-1.3zM678.55 179.71h1.3v1.3h-1.3zM678.55 182.53h1.3v1.3h-1.3zM678.55 185.35h1.3v1.3h-1.3zM678.55 188.18h1.3v1.3h-1.3zM678.55 191.00h1.3v1.3h-1.3zM678.55 193.82h1.3v1.3h-1.3zM678.55 196.64h1.3v1.3h-1.3zM678.55 199.47h1.3v1.3h-1.3zM678.55 202.29h1.3v1.3h-1.3zM678.55 205.11h1.3v1.3h-1.3zM678.55 207.93h1.3v1.3h-1.3zM678.55 210.76h1.3v1.3h-1.3zM678.55 213.58h1.3v1.3h-1.3zM678.55 216.40h1.3v1.3h-1.3zM678.55 219.22h1.3v1.3h-1.3zM678.55 222.05h1.3v1.3h-1.3zM678.55 224.87h1.3v1.3h-1.3zM678.55 227.69h1.3v1.3h-1.3zM678.55 230.51h1.3v1.3h-1.3zM678.55 233.34h1.3v1.3h-1.3zM678.55 236.16h1.3v1.3h-1.3zM678.55 238.98h1.3v1.3h-1.3zM678.55 241.80h1.3v1.3h-1.3zM678.55 244.63h1.3v1.3h-1.3zM678.55 247.45h1.3v1.3h-1.3zM678.55 250.27h1.3v1.3h-1.3zM678.55 253.09h1.3v1.3h-1.3zM678.55 255.92h1.3v1.3h-1.3zM678.55 258.74h1.3v1.3h-1.3zM678.55 261.56h1.3v1.3h-1.3zM678.55 264.38h1.3v1.3h-1.3zM678.55 267.21h1.3v1.3h-1.3zM678.55 270.03h1.3v1.3h-1.3zM678.55 272.85h1.3v1.3h-1.3zM678.55 275.67h1.3v1.3h-1.3zM678.55 278.50h1.3v1.3h-1.3zM678.55 281.32h1.3v1.3h-1.3zM678.55 284.14h1.3v1.3h-1.3zM678.55 286.96h1.3v1.3h-1.3zM678.55 289.79h1.3v1.3h-1.3zM678.55 292.61h1.3v1.3h-1.3zM678.55 295.43h1.3v1.3h-1.3zM678.55 298.25h1.3v1.3h-1.3zM678.55 301.08h1.3v1.3h-1.3zM678.55 303.90h1.3v1.3h-1.3zM678.55 306.72h1.3v1.3h-1.3zM678.55 309.54h1.3v1.3h-1.3zM678.55 312.37h1.3v1.3h-1.3zM678.55 315.19h1.3v1.3h-1.3zM678.55 318.01h1.3v1.3h-1.3zM678.55 320.83h1.3v1.3h-1.3zM678.55 323.66h1.3v1.3h-1.3zM678.55 326.48h1.3v1.3h-1.3zM678.55 329.30h1.3v1.3h-1.3zM678.55 332.12h1.3v1.3h-1.3zM678.55 334.95h1.3v1.3h-1.3zM678.55 337.77h1.3v1.3h-1.3zM678.55 340.59h1.3v1.3h-1.3zM678.55 343.41h1.3v1.3h-1.3zM678.55 346.24h1.3v1.3h-1.3zM678.55 349.06h1.3v1.3h-1.3zM678.55 351.88h1.3v1.3h-1.3zM678.55 354.70h1.3v1.3h-1.3zM678.55 357.53h1.3v1.3h-1.3zM678.55 360.35h1.3v1.3h-1.3zM678.55 363.17h1.3v1.3h-1.3zM678.55 365.99h1.3v1.3h-1.3zM678.55 368.82h1.3v1.3h-1.3zM678.55 371.64h1.3v1.3h-1.3zM678.55 374.46h1.3v1.3h-1.3zM678.55 377.28h1.3v1.3h-1.3zM678.55 380.11h1.3v1.3h-1.3zM678.55 382.93h1.3v1.3h-1.3zM678.55 385.75h1.3v1.3h-1.3zM678.55 388.57h1.3v1.3h-1.3zM678.55 391.40h1.3v1.3h-1.3zM678.55 394.22h1.3v1.3h-1.3zM678.55 397.04h1.3v1.3h-1.3zM678.55 399.86h1.3v1.3h-1.3zM678.55 402.69h1.3v1.3h-1.3zM678.55 405.51h1.3v1.3h-1.3zM678.55 408.33h1.3v1.3h-1.3zM678.55 411.15h1.3v1.3h-1.3zM678.55 413.98h1.3v1.3h-1.3zM678.55 416.80h1.3v1.3h-1.3zM678.55 419.62h1.3v1.3h-1.3zM678.55 422.44h1.3v1.3h-1.3zM678.55 425.27h1.3v1.3h-1.3zM678.55 428.09h1.3v1.3h-1.3zM678.55 430.91h1.3v1.3h-1.3zM678.55 433.73h1.3v1.3h-1.3zM678.55 436.56h1.3v1.3h-1.3zM678.55 439.38h1.3v1.3h-1.3zM678.55 442.20h1.3v1.3h-1.3zM678.55 445.02h1.3v1.3h-1.3zM678.55 447.85h1.3v1.3h-1.3zM678.55 450.67h1.3v1.3h-1.3zM678.55 453.49h1.3v1.3h-1.3zM678.55 456.31h1.3v1.3h-1.3zM678.55 459.14h1.3v1.3h-1.3zM678.55 461.96h1.3v1.3h-1.3zM678.55 464.78h1.3v1.3h-1.3zM678.55 467.60h1.3v1.3h-1.3zM678.55 470.43h1.3v1.3h-1.3zM678.55 473.25h1.3v1.3h-1.3zM678.55 476.07h1.3v1.3h-1.3zM678.55 478.89h1.3v1.3h-1.3zM678.55 481.72h1.3v1.3h-1.3zM678.55 484.54h1.3v1.3h-1.3zM678.55 487.36h1.3v1.3h-1.3zM678.55 490.18h1.3v1.3h-1.3zM678.55 493.01h1.3v1.3h-1.3zM678.55 495.83h1.3v1.3h-1.3zM678.55 498.65h1.3v1.3h-1.3zM678.55 501.47h1.3v1.3h-1.3zM678.55 504.30h1.3v1.3h-1.3zM678.55 507.12h1.3v1.3h-1.3zM678.55 509.94h1.3v1.3h-1.3zM678.55 512.76h1.3v1.3h-1.3zM678.55 515.59h1.3v1.3h-1.3zM678.55 518.41h1.3v1.3h-1.3zM678.55 521.23h1.3v1.3h-1.3zM678.55 524.05h1.3v1.3h-1.3zM678.55 526.88h1.3v1.3h-1.3zM678.55 529.70h1.3v1.3h-1.3zM678.55 532.52h1.3v1.3h-1.3zM678.55 535.34h1.3v1.3h-1.3zM678.55 538.17h1.3v1.3h-1.3zM678.55 540.99h1.3v1.3h-1.3zM678.55 543.81h1.3v1.3h-1.3zM678.55 546.63h1.3v1.3h-1.3zM678.55 549.46h1.3v1.3h-1.3zM678.55 552.28h1.3v1.3h-1.3zM678.55 555.10h1.3v1.3h-1.3zM678.55 557.92h1.3v1.3h-1.3zM678.55 560.75h1.3v1.3h-1.3zM678.55 563.57h1.3v1.3h-1.3zM678.55 566.39h1.3v1.3h-1.3zM678.55 569.21h1.3v1.3h-1.3zM678.55 572.04h1.3v1.3h-1.3zM678.55 574.86h1.3v1.3h-1.3zM678.55 577.68h1.3v1.3h-1.3zM678.55 580.50h1.3v1.3h-1.3zM678.55 583.33h1.3v1.3h-1.3zM678.55 586.15h1.3v1.3h-1.3zM678.55 588.97h1.3v1.3h-1.3zM678.55 591.79h1.3v1.3h-1.3zM678.55 594.62h1.3v1.3h-1.3zM678.55 597.44h1.3v1.3h-1.3zM678.55 600.26h1.3v1.3h-1.3zM678.55 603.08h1.3v1.3h-1.3zM678.55 605.91h1.3v1.3h-1.3zM678.55 608.73h1.3v1.3h-1.3zM678.55 611.55h1.3v1.3h-1.3zM678.55 614.37h1.3v1.3h-1.3zM678.55 617.20h1.3v1.3h-1.3zM678.55 620.02h1.3v1.3h-1.3zM678.55 622.84h1.3v1.3h-1.3zM678.55 625.66h1.3v1.3h-1.3zM678.55 628.49h1.3v1.3h-1.3zM678.55 631.31h1.3v1.3h-1.3zM678.55 634.13h1.3v1.3h-1.3zM678.55 636.95h1.3v1.3h-1.3zM678.55 639.78h1.3v1.3h-1.3zM678.55 642.60h1.3v1.3h-1.3zM678.55 645.42h1.3v1.3h-1.3zM678.55 648.24h1.3v1.3h-1.3zM678.55 651.07h1.3v1.3h-1.3zM678.55 653.89h1.3v1.3h-1.3zM678.55 656.71h1.3v1.3h-1.3zM678.55 659.53h1.3v1.3h-1.3zM678.55 662.36h1.3v1.3h-1.3zM678.55 665.18h1.3v1.3h-1.3zM678.55 668.00h1.3v1.3h-1.3zM678.55 670.82h1.3v1.3h-1.3zM678.55 673.65h1.3v1.3h-1.3zM678.55 676.47h1.3v1.3h-1.3zM678.55 679.29h1.3v1.3h-1.3zM678.55 682.11h1.3v1.3h-1.3zM678.55 684.94h1.3v1.3h-1.3zM678.55 687.76h1.3v1.3h-1.3zM678.55 690.58h1.3v1.3h-1.3zM678.55 693.40h1.3v1.3h-1.3zM678.55 696.23h1.3v1.3h-1.3zM678.55 699.05h1.3v1.3h-1.3zM678.55 701.87h1.3v1.3h-1.3zM678.55 704.69h1.3v1.3h-1.3zM678.55 707.52h1.3v1.3h-1.3zM678.55 710.34h1.3v1.3h-1.3zM678.55 713.16h1.3v1.3h-1.3zM678.55 715.98h1.3v1.3h-1.3zM678.55 718.81h1.3v1.3h-1.3zM678.55 721.63h1.3v1.3h-1.3zM678.55 724.45h1.3v1.3h-1.3zM678.55 727.27h1.3v1.3h-1.3zM678.55 730.10h1.3v1.3h-1.3zM678.55 732.92h1.3v1.3h-1.3zM678.55 735.74h1.3v1.3h-1.3zM678.55 738.56h1.3v1.3h-1.3zM678.55 741.39h1.3v1.3h-1.3zM678.55 744.21h1.3v1.3h-1.3zM678.55 747.03h1.3v1.3h-1.3zM678.55 749.85h1.3v1.3h-1.3zM678.55 752.68h1.3v1.3h-1.3zM678.55 755.50h1.3v1.3h-1.3zM678.55 758.32h1.3v1.3h-1.3zM678.55 761.14h1.3v1.3h-1.3zM678.55 763.97h1.3v1.3h-1.3zM678.55 766.79h1.3v1.3h-1.3zM678.55 769.61h1.3v1.3h-1.3zM678.55 772.43h1.3v1.3h-1.3zM678.55 775.26h1.3v1.3h-1.3zM678.55 778.08h1.3v1.3h-1.3zM678.55 780.90h1.3v1.3h-1.3zM678.55 783.72h1.3v1.3h-1.3zM678.55 786.55h1.3v1.3h-1.3zM678.55 789.37h1.3v1.3h-1.3zM678.55 792.19h1.3v1.3h-1.3zM678.55 795.01h1.3v1.3h-1.3zM678.55 797.84h1.3v1.3h-1.3zM678.55 800.66h1.3v1.3h-1.3zM678.55 803.48h1.3v1.3h-1.3zM678.55 806.30h1.3v1.3h-1.3zM678.55 809.13h1.3v1.3h-1.3zM678.55 811.95h1.3v1.3h-1.3zM678.55 814.77h1.3v1.3h-1.3zM678.55 817.59h1.3v1.3h-1.3zM678.55 820.42h1.3v1.3h-1.3zM678.55 823.24h1.3v1.3h-1.3zM678.55 826.06h1.3v1.3h-1.3zM678.55 828.88h1.3v1.3h-1.3zM678.55 831.71h1.3v1.3h-1.3zM678.55 834.53h1.3v1.3h-1.3zM678.55 837.35h1.3v1.3h-1.3zM678.55 840.17h1.3v1.3h-1.3zM678.55 843.00h1.3v1.3h-1.3zM678.55 845.82h1.3v1.3h-1.3zM678.55 848.64h1.3v1.3h-1.3zM678.55 851.46h1.3v1.3h-1.3zM678.55 854.29h1.3v1.3h-1.3zM678.55 857.11h1.3v1.3h-1.3zM678.55 859.93h1.3v1.3h-1.3zM678.55 862.75h1.3v1.3h-1.3zM678.55 865.58h1.3v1.3h-1.3zM678.55 868.40h1.3v1.3h-1.3zM53.01 440.92h1.5v1.5h-1.5zM53.01 448.92h1.5v1.5h-1.5zM53.01 443.32h1.5v1.5h-1.5zM53.01 446.52h1.5v1.5h-1.5zM79.07 440.92h1.5v1.5h-1.5zM79.07 448.92h1.5v1.5h-1.5zM79.07 443.32h1.5v1.5h-1.5zM79.07 446.52h1.5v1.5h-1.5zM105.13 440.92h1.5v1.5h-1.5zM105.13 448.92h1.5v1.5h-1.5zM105.13 443.32h1.5v1.5h-1.5zM105.13 446.52h1.5v1.5h-1.5zM131.19 440.92h1.5v1.5h-1.5zM131.19 448.92h1.5v1.5h-1.5zM131.19 443.32h1.5v1.5h-1.5zM131.19 446.52h1.5v1.5h-1.5zM157.25 440.92h1.5v1.5h-1.5zM157.25 448.92h1.5v1.5h-1.5zM157.25 443.32h1.5v1.5h-1.5zM157.25 446.52h1.5v1.5h-1.5zM183.31 440.92h1.5v1.5h-1.5zM183.31 448.92h1.5v1.5h-1.5zM183.31 443.32h1.5v1.5h-1.5zM183.31 446.52h1.5v1.5h-1.5zM209.37 440.92h1.5v1.5h-1.5zM209.37 448.92h1.5v1.5h-1.5zM209.37 443.32h1.5v1.5h-1.5zM209.37 446.52h1.5v1.5h-1.5zM235.43 440.92h1.5v1.5h-1.5zM235.43 448.92h1.5v1.5h-1.5zM235.43 443.32h1.5v1.5h-1.5zM235.43 446.52h1.5v1.5h-1.5zM261.49 440.92h1.5v1.5h-1.5zM261.49 448.92h1.5v1.5h-1.5zM261.49 443.32h1.5v1.5h-1.5zM261.49 446.52h1.5v1.5h-1.5zM287.55 440.92h1.5v1.5h-1.5zM287.55 448.92h1.5v1.5h-1.5zM287.55 443.32h1.5v1.5h-1.5zM287.55 446.52h1.5v1.5h-1.5zM313.61 440.92h1.5v1.5h-1.5zM313.61 448.92h1.5v1.5h-1.5zM313.61 443.32h1.5v1.5h-1.5zM313.61 446.52h1.5v1.5h-1.5zM339.67 440.92h1.5v1.5h-1.5zM339.67 448.92h1.5v1.5h-1.5zM339.67 443.32h1.5v1.5h-1.5zM339.67 446.52h1.5v1.5h-1.5zM365.73 440.92h1.5v1.5h-1.5zM365.73 448.92h1.5v1.5h-1.5zM365.73 443.32h1.5v1.5h-1.5zM365.73 446.52h1.5v1.5h-1.5zM391.79 440.92h1.5v1.5h-1.5zM391.79 448.92h1.5v1.5h-1.5zM391.79 443.32h1.5v1.5h-1.5zM391.79 446.52h1.5v1.5h-1.5zM417.85 440.92h1.5v1.5h-1.5zM417.85 448.92h1.5v1.5h-1.5zM417.85 443.32h1.5v1.5h-1.5zM417.85 446.52h1.5v1.5h-1.5zM443.91 440.92h1.5v1.5h-1.5zM443.91 448.92h1.5v1.5h-1.5zM443.91 443.32h1.5v1.5h-1.5zM443.91 446.52h1.5v1.5h-1.5zM469.97 440.92h1.5v1.5h-1.5zM469.97 448.92h1.5v1.5h-1.5zM469.97 443.32h1.5v1.5h-1.5zM469.97 446.52h1.5v1.5h-1.5zM496.03 440.92h1.5v1.5h-1.5zM496.03 448.92h1.5v1.5h-1.5zM496.03 443.32h1.5v1.5h-1.5zM496.03 446.52h1.5v1.5h-1.5zM522.09 440.92h1.5v1.5h-1.5zM522.09 448.92h1.5v1.5h-1.5zM522.09 443.32h1.5v1.5h-1.5zM522.09 446.52h1.5v1.5h-1.5zM548.15 440.92h1.5v1.5h-1.5zM548.15 448.92h1.5v1.5h-1.5zM548.15 443.32h1.5v1.5h-1.5zM548.15 446.52h1.5v1.5h-1.5zM574.21 440.92h1.5v1.5h-1.5zM574.21 448.92h1.5v1.5h-1.5zM574.21 443.32h1.5v1.5h-1.5zM574.21 446.52h1.5v1.5h-1.5zM600.27 440.92h1.5v1.5h-1.5zM600.27 448.92h1.5v1.5h-1.5zM600.27 443.32h1.5v1.5h-1.5zM600.27 446.52h1.5v1.5h-1.5zM626.33 440.92h1.5v1.5h-1.5zM626.33 448.92h1.5v1.5h-1.5zM626.33 443.32h1.5v1.5h-1.5zM626.33 446.52h1.5v1.5h-1.5zM652.39 440.92h1.5v1.5h-1.5zM652.39 448.92h1.5v1.5h-1.5zM652.39 443.32h1.5v1.5h-1.5zM652.39 446.52h1.5v1.5h-1.5zM678.45 440.92h1.5v1.5h-1.5zM678.45 448.92h1.5v1.5h-1.5zM678.45 443.32h1.5v1.5h-1.5zM678.45 446.52h1.5v1.5h-1.5zM704.51 440.92h1.5v1.5h-1.5zM704.51 448.92h1.5v1.5h-1.5zM704.51 443.32h1.5v1.5h-1.5zM704.51 446.52h1.5v1.5h-1.5zM730.57 440.92h1.5v1.5h-1.5zM730.57 448.92h1.5v1.5h-1.5zM730.57 443.32h1.5v1.5h-1.5zM730.57 446.52h1.5v1.5h-1.5zM756.63 440.92h1.5v1.5h-1.5zM756.63 448.92h1.5v1.5h-1.5zM756.63 443.32h1.5v1.5h-1.5zM756.63 446.52h1.5v1.5h-1.5zM782.69 440.92h1.5v1.5h-1.5zM782.69 448.92h1.5v1.5h-1.5zM782.69 443.32h1.5v1.5h-1.5zM782.69 446.52h1.5v1.5h-1.5zM808.75 440.92h1.5v1.5h-1.5zM808.75 448.92h1.5v1.5h-1.5zM808.75 443.32h1.5v1.5h-1.5zM808.75 446.52h1.5v1.5h-1.5zM834.81 440.92h1.5v1.5h-1.5zM834.81 448.92h1.5v1.5h-1.5zM834.81 443.32h1.5v1.5h-1.5zM834.81 446.52h1.5v1.5h-1.5zM860.87 440.92h1.5v1.5h-1.5zM860.87 448.92h1.5v1.5h-1.5zM860.87 443.32h1.5v1.5h-1.5zM860.87 446.52h1.5v1.5h-1.5zM886.93 440.92h1.5v1.5h-1.5zM886.93 448.92h1.5v1.5h-1.5zM886.93 443.32h1.5v1.5h-1.5zM886.93 446.52h1.5v1.5h-1.5zM912.99 440.92h1.5v1.5h-1.5zM912.99 448.92h1.5v1.5h-1.5zM912.99 443.32h1.5v1.5h-1.5zM912.99 446.52h1.5v1.5h-1.5zM939.05 440.92h1.5v1.5h-1.5zM939.05 448.92h1.5v1.5h-1.5zM939.05 443.32h1.5v1.5h-1.5zM939.05 446.52h1.5v1.5h-1.5zM965.11 440.92h1.5v1.5h-1.5zM965.11 448.92h1.5v1.5h-1.5zM965.11 443.32h1.5v1.5h-1.5zM965.11 446.52h1.5v1.5h-1.5zM991.17 440.92h1.5v1.5h-1.5zM991.17 448.92h1.5v1.5h-1.5zM991.17 443.32h1.5v1.5h-1.5zM991.17 446.52h1.5v1.5h-1.5zM1017.23 440.92h1.5v1.5h-1.5zM1017.23 448.92h1.5v1.5h-1.5zM1017.23 443.32h1.5v1.5h-1.5zM1017.23 446.52h1.5v1.5h-1.5zM1043.29 440.92h1.5v1.5h-1.5zM1043.29 448.92h1.5v1.5h-1.5zM1043.29 443.32h1.5v1.5h-1.5zM1043.29 446.52h1.5v1.5h-1.5zM1069.35 440.92h1.5v1.5h-1.5zM1069.35 448.92h1.5v1.5h-1.5zM1069.35 443.32h1.5v1.5h-1.5zM1069.35 446.52h1.5v1.5h-1.5zM1095.41 440.92h1.5v1.5h-1.5zM1095.41 448.92h1.5v1.5h-1.5zM1095.41 443.32h1.5v1.5h-1.5zM1095.41 446.52h1.5v1.5h-1.5zM1121.47 440.92h1.5v1.5h-1.5zM1121.47 448.92h1.5v1.5h-1.5zM1121.47 443.32h1.5v1.5h-1.5zM1121.47 446.52h1.5v1.5h-1.5zM1147.53 440.92h1.5v1.5h-1.5zM1147.53 448.92h1.5v1.5h-1.5zM1147.53 443.32h1.5v1.5h-1.5zM1147.53 446.52h1.5v1.5h-1.5zM1173.59 440.92h1.5v1.5h-1.5zM1173.59 448.92h1.5v1.5h-1.5zM1173.59 443.32h1.5v1.5h-1.5zM1173.59 446.52h1.5v1.5h-1.5zM1199.65 440.92h1.5v1.5h-1.5zM1199.65 448.92h1.5v1.5h-1.5zM1199.65 443.32h1.5v1.5h-1.5zM1199.65 446.52h1.5v1.5h-1.5zM1225.71 440.92h1.5v1.5h-1.5zM1225.71 448.92h1.5v1.5h-1.5zM1225.71 443.32h1.5v1.5h-1.5zM1225.71 446.52h1.5v1.5h-1.5zM1251.77 440.92h1.5v1.5h-1.5zM1251.77 448.92h1.5v1.5h-1.5zM1251.77 443.32h1.5v1.5h-1.5zM1251.77 446.52h1.5v1.5h-1.5zM1277.83 440.92h1.5v1.5h-1.5zM1277.83 448.92h1.5v1.5h-1.5zM1277.83 443.32h1.5v1.5h-1.5zM1277.83 446.52h1.5v1.5h-1.5zM1303.89 440.92h1.5v1.5h-1.5zM1303.89 448.92h1.5v1.5h-1.5zM1303.89 443.32h1.5v1.5h-1.5zM1303.89 446.52h1.5v1.5h-1.5zM674.45 38.48h1.5v1.5h-1.5zM682.45 38.48h1.5v1.5h-1.5zM677.90 37.94h2.6v2.6h-2.6zM674.45 55.42h1.5v1.5h-1.5zM682.45 55.42h1.5v1.5h-1.5zM677.90 54.87h2.6v2.6h-2.6zM674.45 72.35h1.5v1.5h-1.5zM682.45 72.35h1.5v1.5h-1.5zM677.90 71.80h2.6v2.6h-2.6zM674.45 89.29h1.5v1.5h-1.5zM682.45 89.29h1.5v1.5h-1.5zM677.90 88.74h2.6v2.6h-2.6zM674.45 106.22h1.5v1.5h-1.5zM682.45 106.22h1.5v1.5h-1.5zM677.90 105.67h2.6v2.6h-2.6zM674.45 123.16h1.5v1.5h-1.5zM682.45 123.16h1.5v1.5h-1.5zM677.90 122.61h2.6v2.6h-2.6zM674.45 140.09h1.5v1.5h-1.5zM682.45 140.09h1.5v1.5h-1.5zM677.90 139.54h2.6v2.6h-2.6zM674.45 157.03h1.5v1.5h-1.5zM682.45 157.03h1.5v1.5h-1.5zM677.90 156.48h2.6v2.6h-2.6zM674.45 173.97h1.5v1.5h-1.5zM682.45 173.97h1.5v1.5h-1.5zM677.90 173.41h2.6v2.6h-2.6zM674.45 190.90h1.5v1.5h-1.5zM682.45 190.90h1.5v1.5h-1.5zM677.90 190.35h2.6v2.6h-2.6zM674.45 207.84h1.5v1.5h-1.5zM682.45 207.84h1.5v1.5h-1.5zM677.90 207.28h2.6v2.6h-2.6zM674.45 224.77h1.5v1.5h-1.5zM682.45 224.77h1.5v1.5h-1.5zM677.90 224.22h2.6v2.6h-2.6zM674.45 241.70h1.5v1.5h-1.5zM682.45 241.70h1.5v1.5h-1.5zM677.90 241.15h2.6v2.6h-2.6zM674.45 258.64h1.5v1.5h-1.5zM682.45 258.64h1.5v1.5h-1.5zM677.90 258.09h2.6v2.6h-2.6zM674.45 275.57h1.5v1.5h-1.5zM682.45 275.57h1.5v1.5h-1.5zM677.90 275.02h2.6v2.6h-2.6zM674.45 292.51h1.5v1.5h-1.5zM682.45 292.51h1.5v1.5h-1.5zM677.90 291.96h2.6v2.6h-2.6zM674.45 309.44h1.5v1.5h-1.5zM682.45 309.44h1.5v1.5h-1.5zM677.90 308.89h2.6v2.6h-2.6zM674.45 326.38h1.5v1.5h-1.5zM682.45 326.38h1.5v1.5h-1.5zM677.90 325.83h2.6v2.6h-2.6zM674.45 343.31h1.5v1.5h-1.5zM682.45 343.31h1.5v1.5h-1.5zM677.90 342.76h2.6v2.6h-2.6zM674.45 360.25h1.5v1.5h-1.5zM682.45 360.25h1.5v1.5h-1.5zM677.90 359.70h2.6v2.6h-2.6zM674.45 377.19h1.5v1.5h-1.5zM682.45 377.19h1.5v1.5h-1.5zM677.90 376.63h2.6v2.6h-2.6zM674.45 394.12h1.5v1.5h-1.5zM682.45 394.12h1.5v1.5h-1.5zM677.90 393.57h2.6v2.6h-2.6zM674.45 411.06h1.5v1.5h-1.5zM682.45 411.06h1.5v1.5h-1.5zM677.90 410.50h2.6v2.6h-2.6zM674.45 427.99h1.5v1.5h-1.5zM682.45 427.99h1.5v1.5h-1.5zM677.90 427.44h2.6v2.6h-2.6zM674.45 444.92h1.5v1.5h-1.5zM682.45 444.92h1.5v1.5h-1.5zM677.90 444.37h2.6v2.6h-2.6zM674.45 461.86h1.5v1.5h-1.5zM682.45 461.86h1.5v1.5h-1.5zM677.90 461.31h2.6v2.6h-2.6zM674.45 478.79h1.5v1.5h-1.5zM682.45 478.79h1.5v1.5h-1.5zM677.90 478.24h2.6v2.6h-2.6zM674.45 495.73h1.5v1.5h-1.5zM682.45 495.73h1.5v1.5h-1.5zM677.90 495.18h2.6v2.6h-2.6zM674.45 512.66h1.5v1.5h-1.5zM682.45 512.66h1.5v1.5h-1.5zM677.90 512.12h2.6v2.6h-2.6zM674.45 529.60h1.5v1.5h-1.5zM682.45 529.60h1.5v1.5h-1.5zM677.90 529.05h2.6v2.6h-2.6zM674.45 546.53h1.5v1.5h-1.5zM682.45 546.53h1.5v1.5h-1.5zM677.90 545.99h2.6v2.6h-2.6zM674.45 563.47h1.5v1.5h-1.5zM682.45 563.47h1.5v1.5h-1.5zM677.90 562.92h2.6v2.6h-2.6zM674.45 580.40h1.5v1.5h-1.5zM682.45 580.40h1.5v1.5h-1.5zM677.90 579.85h2.6v2.6h-2.6zM674.45 597.34h1.5v1.5h-1.5zM682.45 597.34h1.5v1.5h-1.5zM677.90 596.79h2.6v2.6h-2.6zM674.45 614.27h1.5v1.5h-1.5zM682.45 614.27h1.5v1.5h-1.5zM677.90 613.72h2.6v2.6h-2.6zM674.45 631.21h1.5v1.5h-1.5zM682.45 631.21h1.5v1.5h-1.5zM677.90 630.66h2.6v2.6h-2.6zM674.45 648.14h1.5v1.5h-1.5zM682.45 648.14h1.5v1.5h-1.5zM677.90 647.59h2.6v2.6h-2.6zM674.45 665.08h1.5v1.5h-1.5zM682.45 665.08h1.5v1.5h-1.5zM677.90 664.53h2.6v2.6h-2.6zM674.45 682.01h1.5v1.5h-1.5zM682.45 682.01h1.5v1.5h-1.5zM677.90 681.46h2.6v2.6h-2.6zM674.45 698.95h1.5v1.5h-1.5zM682.45 698.95h1.5v1.5h-1.5zM677.90 698.40h2.6v2.6h-2.6zM674.45 715.88h1.5v1.5h-1.5zM682.45 715.88h1.5v1.5h-1.5zM677.90 715.33h2.6v2.6h-2.6zM674.45 732.82h1.5v1.5h-1.5zM682.45 732.82h1.5v1.5h-1.5zM677.90 732.27h2.6v2.6h-2.6zM674.45 749.75h1.5v1.5h-1.5zM682.45 749.75h1.5v1.5h-1.5zM677.90 749.20h2.6v2.6h-2.6zM674.45 766.69h1.5v1.5h-1.5zM682.45 766.69h1.5v1.5h-1.5zM677.90 766.14h2.6v2.6h-2.6zM674.45 783.62h1.5v1.5h-1.5zM682.45 783.62h1.5v1.5h-1.5zM677.90 783.07h2.6v2.6h-2.6zM674.45 800.56h1.5v1.5h-1.5zM682.45 800.56h1.5v1.5h-1.5zM677.90 800.01h2.6v2.6h-2.6zM674.45 817.49h1.5v1.5h-1.5zM682.45 817.49h1.5v1.5h-1.5zM677.90 816.94h2.6v2.6h-2.6zM674.45 834.43h1.5v1.5h-1.5zM682.45 834.43h1.5v1.5h-1.5zM677.90 833.88h2.6v2.6h-2.6zM674.45 851.36h1.5v1.5h-1.5zM682.45 851.36h1.5v1.5h-1.5zM677.90 850.81h2.6v2.6h-2.6z"/>
<clipPath id="gc"><rect x="27.6" y="21.9" width="1302.2" height="847.2"/></clipPath>
<g clip-path="url(#gc)">
<path d="M9.97 237.92L10.09 234.70M34.70 283.44L34.73 287.72M34.78 286.36L35.73 278.18L36.69 262.26L38.56 246.87L39.59 234.97M39.70 238.52L39.76 233.94M64.43 283.59L64.73 289.14M64.72 286.78L65.30 278.52L66.78 262.30L68.15 247.32L69.20 235.25M69.43 238.03L69.09 233.68M94.15 284.59L94.19 290.69M94.39 287.76L95.38 279.77L96.34 263.53L97.66 247.11L98.89 234.77M99.15 237.48L98.87 234.18M123.88 283.20L123.77 286.29M124.17 286.42L125.00 278.06L126.05 262.00L127.79 246.50L129.05 234.38M128.88 238.76L129.13 233.54M153.60 284.49L153.39 289.30M153.85 287.66L154.75 279.48L155.66 263.66L157.25 247.94L158.89 235.70M158.60 237.67L158.32 231.96M183.33 283.40L183.58 286.91M183.30 286.45L184.57 278.36L185.83 262.40L187.10 246.69L188.04 234.64M188.33 237.68L188.51 233.01M213.06 283.96L212.92 288.77M213.09 287.22L214.26 278.74L215.08 262.92L216.55 246.52L217.80 234.78M218.06 238.55L217.77 232.90M242.78 284.26L243.16 288.02M242.64 286.98L243.95 279.12L244.81 263.21L246.78 247.74L247.64 235.34M247.78 237.54L247.93 233.27M272.51 283.29L272.17 289.58M272.42 286.00L273.36 278.00L274.90 262.32L276.07 246.53L277.77 234.31M277.51 238.74L277.51 233.67M302.23 283.83L302.62 288.03M302.26 286.68L303.51 278.71L304.40 262.53L305.91 247.72L307.24 235.56M307.23 237.54L306.87 234.48M331.96 283.84L331.80 287.65M332.01 287.07L333.07 278.96L334.05 262.56L335.49 246.46L336.72 234.75M336.96 238.49L336.56 233.10M361.69 283.98L361.88 288.74M361.39 286.72L362.55 279.09L364.05 263.09L365.31 247.50L366.66 235.47M366.69 238.97L366.30 234.59M391.41 284.70L391.67 291.09M391.30 287.90L392.11 279.85L393.87 263.47L395.42 248.09L396.65 235.84M396.41 238.34L396.35 234.52M421.14 283.78L420.78 287.13M420.91 286.76L422.04 278.66L423.53 263.06L424.74 247.44L426.02 235.38M426.14 237.73L426.14 234.07M450.86 284.65L451.19 291.14M450.73 287.50L451.80 279.62L453.39 263.86L454.84 246.45L455.58 234.86M455.86 237.40L456.21 231.92M480.59 283.83L480.87 290.23M480.64 286.76L481.42 278.89L482.55 262.71L484.32 246.68L485.68 234.63M485.59 238.94L485.44 235.87M510.32 284.33L510.31 289.69M510.15 287.28L511.42 279.60L512.35 263.26L513.89 248.22L515.10 235.67M515.32 238.81L515.71 233.02M540.04 284.37L539.91 288.02M539.96 287.61L540.76 279.32L542.48 263.53L543.52 247.53L544.78 236.07M545.04 237.94L545.41 233.09M569.77 283.64L569.58 289.14M569.66 286.55L570.94 278.38L571.84 262.79L573.37 246.68L574.49 234.97M574.77 238.98L574.44 235.69M599.49 283.62L599.49 289.11M599.33 286.81L600.59 278.92L601.51 262.61L603.44 248.18L604.74 235.70M604.49 238.96L604.84 234.84M629.22 284.13L629.51 288.71M629.16 287.16L630.30 278.89L631.27 263.25L632.92 247.83L634.10 236.23M634.22 238.07L634.62 233.97M658.95 284.58L658.70 290.13M659.23 287.40L659.72 279.85L661.48 263.57L662.43 247.32L663.88 235.31M663.95 238.66L663.87 233.12M688.67 283.56L688.94 287.20M688.39 286.63L689.67 278.40L691.08 262.72L692.40 247.47L693.66 235.42M693.67 238.11L693.30 233.20M718.40 284.02L718.06 289.58M718.26 287.21L719.18 279.02L720.90 262.84L722.01 247.11L723.29 234.83M723.40 238.49L723.13 233.13M748.12 284.63L747.82 289.49M748.18 287.73L749.01 279.33L750.09 263.42L751.94 247.45L753.13 235.72M753.12 237.44L753.01 234.12M777.85 283.20L777.74 286.99M778.09 285.93L778.87 278.15L779.94 261.94L781.77 246.14L782.88 234.70M782.85 238.21L783.10 234.69M807.58 284.23L807.42 288.28M807.44 287.31L808.86 279.06L810.05 262.94L811.18 247.05L812.72 235.48M812.58 237.93L812.90 233.03M837.30 283.58L837.46 288.91M837.44 286.32L838.36 278.50L839.74 262.77L841.29 246.67L842.52 235.17M842.30 237.58L842.58 232.14M867.03 283.26L867.14 289.14M867.05 286.09L868.25 278.01L869.47 262.06L870.48 246.40L872.19 234.87M872.03 238.67L872.02 234.63M896.75 283.50L897.02 287.41M896.98 286.34L897.73 278.51L899.16 262.65L900.59 247.58L901.65 235.47M901.75 237.67L901.97 232.93M926.48 283.90L926.18 288.52M926.30 286.98L927.24 278.73L928.66 262.62L930.17 246.85L931.60 234.67M931.48 238.37L931.67 232.64M956.21 283.85L956.15 288.86M956.46 286.66L957.30 279.01L958.39 262.84L960.24 247.09L961.23 235.16M961.21 237.56L961.24 232.41M985.93 284.12L985.94 289.36M985.76 287.30L986.87 278.95L987.96 263.29L989.87 246.64L990.91 234.60M990.93 238.42L991.18 234.02M1015.66 284.51L1015.49 289.43M1015.83 287.29L1016.86 279.59L1017.62 263.22L1019.68 247.52L1020.51 235.18M1020.66 237.95L1020.98 232.58M1045.38 283.44L1045.12 289.56M1045.09 286.65L1046.36 278.48L1047.73 262.65L1049.06 246.91L1050.66 234.70M1050.38 238.38L1050.73 234.38M1075.11 284.29L1075.50 289.08M1075.29 287.19L1076.00 279.17L1077.41 263.37L1079.03 247.10L1080.24 235.61M1080.11 237.41L1080.45 232.58M1104.84 283.50L1104.96 289.27M1104.73 286.46L1105.92 278.76L1106.82 262.54L1108.31 246.18L1110.02 234.46M1109.84 238.02L1110.19 232.08M1134.56 284.15L1134.54 288.59M1134.69 287.12L1135.82 279.00L1137.09 263.28L1138.02 246.73L1139.65 235.21M1139.56 237.67L1139.55 234.49M1164.29 284.58L1164.18 289.59M1164.25 287.81L1165.21 279.69L1166.60 263.82L1168.22 246.54L1168.99 234.52M1169.29 238.82L1169.55 233.38M1194.01 283.27L1194.31 288.27M1193.85 286.32L1195.25 278.50L1196.28 262.25L1197.82 247.63L1198.83 235.63M1199.01 238.04L1198.73 234.91M1223.74 284.03L1224.14 288.34M1223.49 286.76L1224.77 279.25L1225.96 263.30L1227.74 246.78L1228.80 234.98M1228.74 238.30L1229.11 233.29M1253.47 284.23L1253.38 288.79M1253.36 287.08L1254.24 279.21L1255.52 263.07L1257.00 247.41L1258.17 235.43M1258.47 237.75L1258.76 232.09M1283.19 284.69L1282.90 289.26M1283.08 287.94L1283.96 279.98L1285.18 263.93L1287.04 246.58L1288.18 234.62M1288.19 238.99L1288.53 235.69M1312.92 284.80L1312.75 290.93M1312.92 287.66L1313.74 279.86L1315.29 263.98L1316.72 247.81L1317.66 236.13M1317.92 238.70L1318.19 233.10M1342.64 283.74L1342.64 286.79M1342.92 286.73L1343.65 278.75L1344.92 262.45L1346.67 247.53L1347.45 235.46M1347.64 237.55L1347.40 234.50M1372.37 284.32L1372.45 289.34M1372.39 287.26L1373.63 279.48L1374.52 263.16L1376.02 246.52L1377.66 234.74" stroke="#00b800" stroke-width="1.9" fill="none"/>
<path d="M36.04 259.87h2v5h-2zM35.50 265.40h2v5h-2zM37.23 247.56h2v5h-2zM66.86 248.97h2v5h-2zM64.63 271.81h2v5h-2zM65.04 267.58h2v5h-2zM94.63 269.53h2v5h-2zM94.47 271.24h2v5h-2zM95.09 264.70h2v5h-2zM124.41 267.87h2v5h-2zM126.47 246.57h2v5h-2zM127.08 240.29h2v5h-2zM154.76 262.70h2v5h-2zM156.67 242.95h2v5h-2zM155.89 250.99h2v5h-2zM183.72 269.51h2v5h-2zM183.09 276.00h2v5h-2zM185.88 247.20h2v5h-2zM215.55 247.93h2v5h-2zM215.95 243.79h2v5h-2zM213.35 270.96h2v5h-2zM245.75 243.73h2v5h-2zM244.53 256.35h2v5h-2zM244.98 251.65h2v5h-2zM275.12 246.36h2v5h-2zM273.77 260.37h2v5h-2zM273.99 258.10h2v5h-2zM303.75 258.61h2v5h-2zM302.00 276.49h2v5h-2zM302.91 267.22h2v5h-2zM333.66 256.05h2v5h-2zM333.91 253.51h2v5h-2zM333.90 253.57h2v5h-2zM361.85 272.49h2v5h-2zM364.56 244.55h2v5h-2zM362.13 269.58h2v5h-2zM392.46 263.96h2v5h-2zM392.54 263.21h2v5h-2zM394.66 241.27h2v5h-2zM422.27 262.36h2v5h-2zM421.47 270.54h2v5h-2zM421.45 270.74h2v5h-2zM453.75 244.03h2v5h-2zM452.27 259.68h2v5h-2zM452.67 255.46h2v5h-2zM482.00 259.02h2v5h-2zM481.16 267.85h2v5h-2zM481.20 267.40h2v5h-2zM510.28 274.96h2v5h-2zM511.44 262.97h2v5h-2zM513.21 244.81h2v5h-2zM540.69 267.86h2v5h-2zM542.41 250.17h2v5h-2zM542.94 244.71h2v5h-2zM570.66 264.59h2v5h-2zM572.95 240.91h2v5h-2zM572.61 244.41h2v5h-2zM600.27 266.12h2v5h-2zM599.66 272.30h2v5h-2zM599.91 269.81h2v5h-2zM630.06 265.77h2v5h-2zM630.95 256.66h2v5h-2zM630.22 264.16h2v5h-2zM660.87 254.40h2v5h-2zM661.58 246.89h2v5h-2zM659.26 271.31h2v5h-2zM688.87 271.84h2v5h-2zM689.93 261.08h2v5h-2zM688.74 273.15h2v5h-2zM718.79 270.11h2v5h-2zM718.71 270.87h2v5h-2zM721.43 242.70h2v5h-2zM748.34 272.49h2v5h-2zM748.67 269.02h2v5h-2zM750.16 253.47h2v5h-2zM778.10 270.78h2v5h-2zM778.30 268.71h2v5h-2zM779.73 253.90h2v5h-2zM809.94 249.76h2v5h-2zM808.47 265.02h2v5h-2zM810.41 244.88h2v5h-2zM840.36 242.19h2v5h-2zM837.43 272.46h2v5h-2zM837.77 268.90h2v5h-2zM866.79 275.85h2v5h-2zM868.50 258.25h2v5h-2zM868.50 258.23h2v5h-2zM899.45 246.38h2v5h-2zM898.82 252.82h2v5h-2zM899.10 249.98h2v5h-2zM928.44 253.45h2v5h-2zM927.85 259.63h2v5h-2zM926.73 271.38h2v5h-2zM958.69 248.45h2v5h-2zM959.25 242.73h2v5h-2zM957.77 257.91h2v5h-2zM986.47 268.42h2v5h-2zM989.06 241.27h2v5h-2zM986.92 263.74h2v5h-2zM1015.91 271.99h2v5h-2zM1016.23 268.68h2v5h-2zM1018.13 248.89h2v5h-2zM1047.36 253.26h2v5h-2zM1047.36 253.29h2v5h-2zM1045.23 275.19h2v5h-2zM1076.77 257.18h2v5h-2zM1075.03 275.20h2v5h-2zM1075.91 266.09h2v5h-2zM1107.80 242.69h2v5h-2zM1106.15 259.91h2v5h-2zM1104.64 275.67h2v5h-2zM1134.59 273.92h2v5h-2zM1135.40 265.48h2v5h-2zM1136.87 250.21h2v5h-2zM1165.52 261.49h2v5h-2zM1166.09 255.41h2v5h-2zM1166.89 246.92h2v5h-2zM1196.22 251.44h2v5h-2zM1195.03 263.39h2v5h-2zM1195.74 256.27h2v5h-2zM1223.91 272.37h2v5h-2zM1226.85 241.82h2v5h-2zM1224.39 267.37h2v5h-2zM1253.90 269.85h2v5h-2zM1253.34 275.63h2v5h-2zM1256.46 243.22h2v5h-2zM1283.84 267.70h2v5h-2zM1283.65 269.78h2v5h-2zM1284.22 263.75h2v5h-2zM1314.10 262.72h2v5h-2zM1315.19 251.35h2v5h-2zM1312.86 275.52h2v5h-2zM1343.27 267.63h2v5h-2zM1345.25 247.39h2v5h-2zM1342.50 275.51h2v5h-2zM1375.31 243.19h2v5h-2zM1374.97 246.80h2v5h-2zM1375.09 245.60h2v5h-2z" fill="#0a5a0a"/>
<path d="M9.05 234.92L7.57 236.98L8.75 240.07L28.53 281.29L30.32 284.38L33.78 286.44L35.62 286.44L37.10 284.38L35.93 281.29L16.15 240.07L14.35 236.98L10.90 234.92ZM38.78 235.52L37.30 237.56L38.47 240.63L58.25 281.48L60.05 284.55L63.50 286.59L65.35 286.59L66.83 284.55L65.65 281.48L45.87 240.63L44.08 237.56L40.62 235.52ZM68.50 235.03L67.02 237.13L68.20 240.28L87.98 282.34L89.77 285.49L93.23 287.59L95.08 287.59L96.55 285.49L95.38 282.34L75.60 240.28L73.81 237.13L70.35 235.03ZM98.23 234.48L96.75 236.55L97.92 239.66L117.71 281.03L119.50 284.13L122.95 286.20L124.80 286.20L126.28 284.13L125.11 281.03L105.32 239.66L103.53 236.55L100.08 234.48ZM127.95 235.76L126.48 237.83L127.65 240.94L147.43 282.32L149.22 285.42L152.68 287.49L154.53 287.49L156.01 285.42L154.83 282.32L135.05 240.94L133.26 237.83L129.80 235.76ZM157.68 234.67L156.20 236.74L157.38 239.85L177.16 281.23L178.95 284.33L182.40 286.40L184.25 286.40L185.73 284.33L184.56 281.23L164.78 239.85L162.98 236.74L159.53 234.67ZM187.40 234.68L185.93 236.77L187.10 239.90L206.88 281.73L208.68 284.87L212.13 286.96L213.98 286.96L215.46 284.87L214.28 281.73L194.50 239.90L192.71 236.77L189.25 234.68ZM217.13 235.55L215.65 237.61L216.83 240.72L236.61 282.09L238.40 285.19L241.86 287.26L243.71 287.26L245.18 285.19L244.01 282.09L224.23 240.72L222.44 237.61L218.98 235.55ZM246.86 234.54L245.38 236.61L246.55 239.72L266.34 281.12L268.13 284.22L271.58 286.29L273.43 286.29L274.91 284.22L273.74 281.12L253.95 239.72L252.16 236.61L248.71 234.54ZM276.58 235.74L275.11 237.78L276.28 240.84L296.06 281.72L297.85 284.79L301.31 286.83L303.16 286.83L304.64 284.79L303.46 281.72L283.68 240.84L281.89 237.78L278.43 235.74ZM306.31 234.54L304.83 236.64L306.01 239.77L325.79 281.61L327.58 284.75L331.03 286.84L332.88 286.84L334.36 284.75L333.19 281.61L313.41 239.77L311.61 236.64L308.16 234.54ZM336.03 235.49L334.56 237.55L335.73 240.64L355.51 281.83L357.31 284.92L360.76 286.98L362.61 286.98L364.09 284.92L362.91 281.83L343.13 240.64L341.34 237.55L337.88 235.49ZM365.76 235.97L364.28 238.03L365.46 241.14L385.24 282.52L387.03 285.63L390.49 287.70L392.34 287.70L393.81 285.63L392.64 282.52L372.86 241.14L371.07 238.03L367.61 235.97ZM395.49 235.34L394.01 237.40L395.18 240.49L414.97 281.63L416.76 284.72L420.21 286.78L422.06 286.78L423.54 284.72L422.37 281.63L402.58 240.49L400.79 237.40L397.34 235.34ZM425.21 234.73L423.74 236.85L424.91 240.02L444.69 282.36L446.48 285.53L449.94 287.65L451.79 287.65L453.27 285.53L452.09 282.36L432.31 240.02L430.52 236.85L427.06 234.73ZM454.94 234.40L453.46 236.50L454.64 239.64L474.42 281.58L476.21 284.73L479.66 286.83L481.51 286.83L482.99 284.73L481.82 281.58L462.04 239.64L460.24 236.50L456.79 234.40ZM484.66 235.94L483.19 237.99L484.36 241.08L504.14 282.19L505.94 285.27L509.39 287.33L511.24 287.33L512.72 285.27L511.54 282.19L491.76 241.08L489.97 237.99L486.51 235.94ZM514.39 235.81L512.91 237.88L514.09 240.97L533.87 282.22L535.66 285.31L539.12 287.37L540.97 287.37L542.44 285.31L541.27 282.22L521.49 240.97L519.70 237.88L516.24 235.81ZM544.12 234.94L542.64 237.01L543.81 240.11L563.60 281.47L565.39 284.57L568.84 286.64L570.69 286.64L572.17 284.57L571.00 281.47L551.21 240.11L549.42 237.01L545.97 234.94ZM573.84 235.98L572.37 238.01L573.54 241.04L593.32 281.56L595.11 284.60L598.57 286.62L600.42 286.62L601.90 284.60L600.72 281.56L580.94 241.04L579.15 238.01L575.69 235.98ZM603.57 235.96L602.09 238.00L603.27 241.07L623.05 282.02L624.84 285.09L628.30 287.13L630.14 287.13L631.62 285.09L630.45 282.02L610.67 241.07L608.87 238.00L605.42 235.96ZM633.30 235.07L631.82 237.17L632.99 240.32L652.77 282.33L654.57 285.48L658.02 287.58L659.87 287.58L661.35 285.48L660.17 282.33L640.39 240.32L638.60 237.17L635.14 235.07ZM663.02 235.66L661.54 237.69L662.72 240.75L682.50 281.47L684.29 284.52L687.75 286.56L689.60 286.56L691.07 284.52L689.90 281.47L670.12 240.75L668.33 237.69L664.87 235.66ZM692.75 235.11L691.27 237.18L692.44 240.30L712.23 281.83L714.02 284.94L717.47 287.02L719.32 287.02L720.80 284.94L719.63 281.83L699.84 240.30L698.05 237.18L694.60 235.11ZM722.47 235.49L721.00 237.57L722.17 240.70L741.95 282.42L743.74 285.55L747.20 287.63L749.05 287.63L750.53 285.55L749.35 282.42L729.57 240.70L727.78 237.57L724.32 235.49ZM752.20 234.44L750.72 236.51L751.90 239.61L771.68 281.03L773.47 284.13L776.93 286.20L778.77 286.20L780.25 284.13L779.08 281.03L759.30 239.61L757.50 236.51L754.05 234.44ZM781.93 235.21L780.45 237.29L781.62 240.41L801.40 282.02L803.20 285.15L806.65 287.23L808.50 287.23L809.98 285.15L808.80 282.02L789.02 240.41L787.23 237.29L783.77 235.21ZM811.65 234.93L810.17 236.99L811.35 240.09L831.13 281.42L832.92 284.52L836.38 286.58L838.23 286.58L839.70 284.52L838.53 281.42L818.75 240.09L816.96 236.99L813.50 234.93ZM841.38 234.58L839.90 236.65L841.07 239.75L860.86 281.09L862.65 284.19L866.10 286.26L867.95 286.26L869.43 284.19L868.26 281.09L848.47 239.75L846.68 236.65L843.23 234.58ZM871.10 235.67L869.63 237.71L870.80 240.76L890.58 281.41L892.37 284.46L895.83 286.50L897.68 286.50L899.16 284.46L897.98 281.41L878.20 240.76L876.41 237.71L872.95 235.67ZM900.83 234.67L899.35 236.76L900.53 239.89L920.31 281.68L922.10 284.81L925.56 286.90L927.40 286.90L928.88 284.81L927.71 281.68L907.93 239.89L906.13 236.76L902.68 234.67ZM930.56 235.37L929.08 237.43L930.25 240.51L950.03 281.70L951.83 284.79L955.28 286.85L957.13 286.85L958.61 284.79L957.43 281.70L937.65 240.51L935.86 237.43L932.40 235.37ZM960.28 234.56L958.80 236.66L959.98 239.82L979.76 281.86L981.55 285.02L985.01 287.12L986.86 287.12L988.33 285.02L987.16 281.86L967.38 239.82L965.59 236.66L962.13 234.56ZM990.01 235.42L988.53 237.51L989.70 240.63L1009.49 282.30L1011.28 285.43L1014.73 287.51L1016.58 287.51L1018.06 285.43L1016.89 282.30L997.10 240.63L995.31 237.51L991.86 235.42ZM1019.73 234.95L1018.26 237.01L1019.43 240.10L1039.21 281.30L1041.00 284.38L1044.46 286.44L1046.31 286.44L1047.79 284.38L1046.61 281.30L1026.83 240.10L1025.04 237.01L1021.58 234.95ZM1049.46 235.38L1047.98 237.45L1049.16 240.57L1068.94 282.10L1070.73 285.22L1074.19 287.29L1076.04 287.29L1077.51 285.22L1076.34 282.10L1056.56 240.57L1054.76 237.45L1051.31 235.38ZM1079.18 234.41L1077.71 236.49L1078.88 239.62L1098.66 281.29L1100.46 284.42L1103.91 286.50L1105.76 286.50L1107.24 284.42L1106.06 281.29L1086.28 239.62L1084.49 236.49L1081.03 234.41ZM1108.91 235.02L1107.43 237.10L1108.61 240.23L1128.39 281.93L1130.18 285.06L1133.64 287.15L1135.49 287.15L1136.96 285.06L1135.79 281.93L1116.01 240.23L1114.22 237.10L1110.76 235.02ZM1138.64 234.67L1137.16 236.78L1138.33 239.96L1158.12 282.29L1159.91 285.46L1163.36 287.58L1165.21 287.58L1166.69 285.46L1165.52 282.29L1145.73 239.96L1143.94 236.78L1140.49 234.67ZM1168.36 235.82L1166.89 237.84L1168.06 240.86L1187.84 281.22L1189.63 284.25L1193.09 286.27L1194.94 286.27L1196.42 284.25L1195.24 281.22L1175.46 240.86L1173.67 237.84L1170.21 235.82ZM1198.09 235.04L1196.61 237.12L1197.79 240.24L1217.57 281.83L1219.36 284.95L1222.81 287.03L1224.66 287.03L1226.14 284.95L1224.97 281.83L1205.19 240.24L1203.39 237.12L1199.94 235.04ZM1227.82 235.30L1226.34 237.38L1227.51 240.50L1247.29 282.03L1249.09 285.15L1252.54 287.23L1254.39 287.23L1255.87 285.15L1254.69 282.03L1234.91 240.50L1233.12 237.38L1229.66 235.30ZM1257.54 234.75L1256.06 236.87L1257.24 240.05L1277.02 282.40L1278.81 285.58L1282.27 287.69L1284.12 287.69L1285.59 285.58L1284.42 282.40L1264.64 240.05L1262.85 236.87L1259.39 234.75ZM1287.27 235.99L1285.79 238.06L1286.96 241.17L1306.75 282.62L1308.54 285.72L1311.99 287.80L1313.84 287.80L1315.32 285.72L1314.15 282.62L1294.36 241.17L1292.57 238.06L1289.12 235.99ZM1316.99 235.70L1315.52 237.74L1316.69 240.80L1336.47 281.63L1338.26 284.69L1341.72 286.74L1343.57 286.74L1345.05 284.69L1343.87 281.63L1324.09 240.80L1322.30 237.74L1318.84 235.70ZM1346.72 234.55L1345.24 236.66L1346.42 239.83L1366.20 282.04L1367.99 285.21L1371.44 287.32L1373.29 287.32L1374.77 285.21L1373.60 282.04L1353.82 239.83L1352.02 236.66L1348.57 234.55Z" fill="#0b4f0b"/>
<path d="M12.46 234.43h2.2v3h-2.2zM8.87 239.88h2.2v3h-2.2zM16.55 242.96h2.2v3h-2.2zM12.90 248.27h2.2v3h-2.2zM20.71 251.63h2.2v3h-2.2zM16.60 255.98h2.2v3h-2.2zM25.27 261.13h2.2v3h-2.2zM21.63 266.46h2.2v3h-2.2zM29.02 268.94h2.2v3h-2.2zM25.01 273.49h2.2v3h-2.2zM33.77 278.83h2.2v3h-2.2zM30.02 283.95h2.2v3h-2.2zM22.74 263.26h2v2h-2zM30.58 281.76h2v2h-2zM28.68 276.30h2v2h-2zM12.27 243.18h2v2h-2zM18.02 250.80h2v2h-2zM14.48 244.87h2v2h-2zM42.47 235.60h2.2v3h-2.2zM39.18 241.63h2.2v3h-2.2zM46.38 243.68h2.2v3h-2.2zM42.61 248.71h2.2v3h-2.2zM51.29 253.83h2.2v3h-2.2zM46.40 256.54h2.2v3h-2.2zM55.08 261.65h2.2v3h-2.2zM50.38 264.76h2.2v3h-2.2zM59.42 270.62h2.2v3h-2.2zM55.40 275.13h2.2v3h-2.2zM63.43 278.89h2.2v3h-2.2zM59.66 283.92h2.2v3h-2.2zM47.50 251.49h2v2h-2zM53.40 264.39h2v2h-2zM51.11 258.04h2v2h-2zM60.88 280.49h2v2h-2zM53.40 267.60h2v2h-2zM55.99 269.32h2v2h-2zM72.85 236.56h2.2v3h-2.2zM68.77 241.05h2.2v3h-2.2zM76.30 243.89h2.2v3h-2.2zM72.33 248.64h2.2v3h-2.2zM80.52 252.87h2.2v3h-2.2zM77.03 258.63h2.2v3h-2.2zM85.39 263.20h2.2v3h-2.2zM80.25 265.46h2.2v3h-2.2zM88.54 269.91h2.2v3h-2.2zM84.47 274.44h2.2v3h-2.2zM92.73 278.82h2.2v3h-2.2zM88.90 283.86h2.2v3h-2.2zM82.06 264.53h2v2h-2zM69.51 236.85h2v2h-2zM78.08 254.12h2v2h-2zM91.44 281.75h2v2h-2zM81.49 261.04h2v2h-2zM83.37 268.65h2v2h-2zM102.65 236.11h2.2v3h-2.2zM98.18 239.74h2.2v3h-2.2zM105.87 242.85h2.2v3h-2.2zM101.86 247.43h2.2v3h-2.2zM110.24 251.98h2.2v3h-2.2zM106.12 256.34h2.2v3h-2.2zM114.08 260.02h2.2v3h-2.2zM110.84 266.21h2.2v3h-2.2zM119.28 270.89h2.2v3h-2.2zM114.48 273.84h2.2v3h-2.2zM122.77 278.19h2.2v3h-2.2zM118.14 281.47h2.2v3h-2.2zM101.19 240.83h2v2h-2zM106.27 248.39h2v2h-2zM101.55 243.58h2v2h-2zM120.64 280.33h2v2h-2zM102.78 242.89h2v2h-2zM100.07 237.33h2v2h-2zM131.73 236.05h2.2v3h-2.2zM127.19 239.51h2.2v3h-2.2zM135.45 243.82h2.2v3h-2.2zM131.62 248.78h2.2v3h-2.2zM139.85 253.04h2.2v3h-2.2zM136.25 258.47h2.2v3h-2.2zM144.84 263.46h2.2v3h-2.2zM140.07 266.46h2.2v3h-2.2zM148.93 272.03h2.2v3h-2.2zM144.86 276.48h2.2v3h-2.2zM153.08 280.70h2.2v3h-2.2zM148.21 283.48h2.2v3h-2.2zM133.20 247.61h2v2h-2zM132.60 246.51h2v2h-2zM144.20 266.40h2v2h-2zM147.76 276.48h2v2h-2zM144.54 267.75h2v2h-2zM131.48 241.30h2v2h-2zM162.04 236.17h2.2v3h-2.2zM158.09 240.88h2.2v3h-2.2zM165.95 244.36h2.2v3h-2.2zM161.43 247.87h2.2v3h-2.2zM169.94 252.70h2.2v3h-2.2zM165.28 255.93h2.2v3h-2.2zM173.40 259.94h2.2v3h-2.2zM170.44 266.72h2.2v3h-2.2zM178.30 270.20h2.2v3h-2.2zM174.01 274.19h2.2v3h-2.2zM182.78 279.56h2.2v3h-2.2zM178.02 282.58h2.2v3h-2.2zM179.22 276.85h2v2h-2zM162.79 246.08h2v2h-2zM164.58 249.90h2v2h-2zM171.17 263.56h2v2h-2zM167.06 255.77h2v2h-2zM178.65 278.63h2v2h-2zM191.43 235.50h2.2v3h-2.2zM187.57 240.45h2.2v3h-2.2zM194.99 243.04h2.2v3h-2.2zM191.42 248.58h2.2v3h-2.2zM199.29 252.12h2.2v3h-2.2zM195.19 256.56h2.2v3h-2.2zM204.06 262.21h2.2v3h-2.2zM199.59 265.87h2.2v3h-2.2zM207.92 270.37h2.2v3h-2.2zM204.03 275.25h2.2v3h-2.2zM212.48 280.00h2.2v3h-2.2zM207.76 283.13h2.2v3h-2.2zM202.21 265.11h2v2h-2zM200.54 260.39h2v2h-2zM198.73 257.57h2v2h-2zM200.53 258.78h2v2h-2zM205.26 269.19h2v2h-2zM208.81 280.62h2v2h-2zM221.65 237.37h2.2v3h-2.2zM216.82 240.25h2.2v3h-2.2zM225.19 244.79h2.2v3h-2.2zM221.67 250.39h2.2v3h-2.2zM229.74 254.30h2.2v3h-2.2zM224.77 256.87h2.2v3h-2.2zM233.36 261.88h2.2v3h-2.2zM229.33 266.41h2.2v3h-2.2zM237.37 270.26h2.2v3h-2.2zM233.05 274.20h2.2v3h-2.2zM241.47 278.82h2.2v3h-2.2zM237.83 284.18h2.2v3h-2.2zM218.89 238.04h2v2h-2zM226.65 257.63h2v2h-2zM226.04 252.56h2v2h-2zM228.38 260.97h2v2h-2zM241.08 282.98h2v2h-2zM238.73 282.35h2v2h-2zM250.98 235.55h2.2v3h-2.2zM247.05 240.29h2.2v3h-2.2zM254.42 242.75h2.2v3h-2.2zM251.23 249.06h2.2v3h-2.2zM258.52 251.33h2.2v3h-2.2zM255.36 257.70h2.2v3h-2.2zM263.12 260.95h2.2v3h-2.2zM258.84 264.97h2.2v3h-2.2zM267.36 269.84h2.2v3h-2.2zM263.68 275.12h2.2v3h-2.2zM271.13 277.72h2.2v3h-2.2zM266.82 281.68h2.2v3h-2.2zM258.96 260.67h2v2h-2zM249.44 241.23h2v2h-2zM248.24 238.48h2v2h-2zM254.38 250.66h2v2h-2zM264.29 271.50h2v2h-2zM258.18 259.42h2v2h-2zM280.95 237.21h2.2v3h-2.2zM276.65 241.15h2.2v3h-2.2zM284.83 245.23h2.2v3h-2.2zM280.40 248.89h2.2v3h-2.2zM288.59 253.01h2.2v3h-2.2zM284.09 256.51h2.2v3h-2.2zM292.44 260.97h2.2v3h-2.2zM288.23 265.07h2.2v3h-2.2zM297.32 271.04h2.2v3h-2.2zM292.58 274.06h2.2v3h-2.2zM300.73 278.08h2.2v3h-2.2zM296.49 282.14h2.2v3h-2.2zM297.58 275.98h2v2h-2zM292.01 268.12h2v2h-2zM282.51 248.43h2v2h-2zM286.94 258.42h2v2h-2zM286.96 257.79h2v2h-2zM300.57 281.52h2v2h-2zM310.37 235.45h2.2v3h-2.2zM306.16 239.66h2.2v3h-2.2zM314.69 244.59h2.2v3h-2.2zM310.44 248.71h2.2v3h-2.2zM318.77 253.22h2.2v3h-2.2zM314.84 258.00h2.2v3h-2.2zM322.49 261.08h2.2v3h-2.2zM318.27 265.27h2.2v3h-2.2zM327.35 271.35h2.2v3h-2.2zM322.18 273.53h2.2v3h-2.2zM331.15 279.39h2.2v3h-2.2zM326.91 283.53h2.2v3h-2.2zM309.45 238.22h2v2h-2zM327.70 278.14h2v2h-2zM324.74 270.70h2v2h-2zM310.64 242.72h2v2h-2zM319.70 259.90h2v2h-2zM326.36 274.03h2v2h-2zM340.03 236.23h2.2v3h-2.2zM336.05 240.84h2.2v3h-2.2zM343.57 243.60h2.2v3h-2.2zM340.26 249.62h2.2v3h-2.2zM347.93 252.66h2.2v3h-2.2zM343.57 256.49h2.2v3h-2.2zM352.06 261.28h2.2v3h-2.2zM348.50 266.76h2.2v3h-2.2zM356.11 269.70h2.2v3h-2.2zM352.63 275.37h2.2v3h-2.2zM361.18 280.27h2.2v3h-2.2zM356.45 283.32h2.2v3h-2.2zM345.65 254.79h2v2h-2zM353.21 268.75h2v2h-2zM351.35 265.66h2v2h-2zM337.86 240.65h2v2h-2zM343.58 248.83h2v2h-2zM344.17 251.17h2v2h-2zM369.65 236.49h2.2v3h-2.2zM365.29 240.33h2.2v3h-2.2zM373.48 244.49h2.2v3h-2.2zM370.25 250.71h2.2v3h-2.2zM377.60 253.12h2.2v3h-2.2zM373.92 258.39h2.2v3h-2.2zM381.64 261.56h2.2v3h-2.2zM377.97 266.86h2.2v3h-2.2zM386.76 272.28h2.2v3h-2.2zM381.61 274.47h2.2v3h-2.2zM390.72 280.56h2.2v3h-2.2zM386.19 284.07h2.2v3h-2.2zM387.27 278.84h2v2h-2zM373.26 248.32h2v2h-2zM376.32 260.19h2v2h-2zM366.98 237.72h2v2h-2zM376.36 258.54h2v2h-2zM369.59 244.10h2v2h-2zM399.86 236.85h2.2v3h-2.2zM395.04 239.72h2.2v3h-2.2zM404.10 245.68h2.2v3h-2.2zM399.11 248.20h2.2v3h-2.2zM407.39 252.53h2.2v3h-2.2zM403.56 257.45h2.2v3h-2.2zM411.42 260.91h2.2v3h-2.2zM407.51 265.66h2.2v3h-2.2zM416.49 271.45h2.2v3h-2.2zM412.26 275.55h2.2v3h-2.2zM420.43 279.65h2.2v3h-2.2zM416.07 283.47h2.2v3h-2.2zM418.30 279.20h2v2h-2zM409.53 262.34h2v2h-2zM398.45 239.20h2v2h-2zM407.44 257.79h2v2h-2zM410.35 266.75h2v2h-2zM399.02 239.18h2v2h-2zM429.11 235.31h2.2v3h-2.2zM424.58 238.89h2.2v3h-2.2zM432.91 243.44h2.2v3h-2.2zM428.64 247.58h2.2v3h-2.2zM437.21 252.66h2.2v3h-2.2zM432.77 256.40h2.2v3h-2.2zM441.21 261.21h2.2v3h-2.2zM437.09 265.67h2.2v3h-2.2zM445.74 270.90h2.2v3h-2.2zM441.99 276.15h2.2v3h-2.2zM450.08 280.20h2.2v3h-2.2zM445.53 283.71h2.2v3h-2.2zM435.66 256.09h2v2h-2zM434.28 254.33h2v2h-2zM427.09 239.33h2v2h-2zM446.79 282.46h2v2h-2zM437.97 260.35h2v2h-2zM444.72 277.47h2v2h-2zM458.58 234.43h2.2v3h-2.2zM454.27 238.43h2.2v3h-2.2zM462.59 242.92h2.2v3h-2.2zM458.90 248.25h2.2v3h-2.2zM467.36 253.04h2.2v3h-2.2zM463.54 258.09h2.2v3h-2.2zM471.53 261.88h2.2v3h-2.2zM467.30 266.05h2.2v3h-2.2zM475.71 270.73h2.2v3h-2.2zM471.19 274.29h2.2v3h-2.2zM479.56 278.91h2.2v3h-2.2zM474.79 281.94h2.2v3h-2.2zM472.71 272.93h2v2h-2zM477.01 279.43h2v2h-2zM461.74 250.36h2v2h-2zM462.11 247.90h2v2h-2zM470.48 268.98h2v2h-2zM457.74 239.34h2v2h-2zM488.52 236.37h2.2v3h-2.2zM484.18 240.24h2.2v3h-2.2zM492.95 245.57h2.2v3h-2.2zM489.13 250.52h2.2v3h-2.2zM496.52 253.01h2.2v3h-2.2zM492.15 256.79h2.2v3h-2.2zM500.78 261.86h2.2v3h-2.2zM496.75 266.35h2.2v3h-2.2zM505.33 271.31h2.2v3h-2.2zM500.59 274.35h2.2v3h-2.2zM509.59 280.17h2.2v3h-2.2zM505.38 284.30h2.2v3h-2.2zM496.18 260.86h2v2h-2zM506.84 282.36h2v2h-2zM503.27 275.43h2v2h-2zM491.54 247.75h2v2h-2zM493.75 251.15h2v2h-2zM495.92 260.44h2v2h-2zM518.89 237.59h2.2v3h-2.2zM514.51 241.39h2.2v3h-2.2zM521.89 243.85h2.2v3h-2.2zM518.53 249.78h2.2v3h-2.2zM526.44 253.34h2.2v3h-2.2zM522.29 257.62h2.2v3h-2.2zM530.50 261.81h2.2v3h-2.2zM526.16 265.69h2.2v3h-2.2zM534.22 269.55h2.2v3h-2.2zM530.42 274.56h2.2v3h-2.2zM538.77 279.04h2.2v3h-2.2zM535.37 284.90h2.2v3h-2.2zM519.70 243.13h2v2h-2zM519.74 247.02h2v2h-2zM534.80 275.51h2v2h-2zM523.82 257.46h2v2h-2zM525.71 259.36h2v2h-2zM535.09 280.06h2v2h-2zM547.85 235.12h2.2v3h-2.2zM543.66 239.32h2.2v3h-2.2zM551.58 242.93h2.2v3h-2.2zM548.37 249.18h2.2v3h-2.2zM556.83 253.90h2.2v3h-2.2zM552.34 257.48h2.2v3h-2.2zM560.98 262.59h2.2v3h-2.2zM555.71 264.52h2.2v3h-2.2zM564.23 269.37h2.2v3h-2.2zM560.39 274.30h2.2v3h-2.2zM569.24 279.85h2.2v3h-2.2zM565.10 284.16h2.2v3h-2.2zM553.13 254.51h2v2h-2zM554.83 256.53h2v2h-2zM564.98 279.71h2v2h-2zM563.85 273.87h2v2h-2zM564.41 274.80h2v2h-2zM558.28 264.78h2v2h-2zM577.73 236.46h2.2v3h-2.2zM573.33 240.14h2.2v3h-2.2zM581.82 244.82h2.2v3h-2.2zM577.93 249.56h2.2v3h-2.2zM586.26 253.91h2.2v3h-2.2zM582.21 258.32h2.2v3h-2.2zM590.59 262.79h2.2v3h-2.2zM586.23 266.55h2.2v3h-2.2zM593.81 269.39h2.2v3h-2.2zM590.56 275.44h2.2v3h-2.2zM598.15 278.27h2.2v3h-2.2zM594.35 283.18h2.2v3h-2.2zM584.02 254.51h2v2h-2zM578.68 246.59h2v2h-2zM579.42 248.70h2v2h-2zM594.91 277.81h2v2h-2zM581.95 252.39h2v2h-2zM597.11 282.75h2v2h-2zM607.23 235.97h2.2v3h-2.2zM603.73 241.56h2.2v3h-2.2zM612.20 246.26h2.2v3h-2.2zM607.02 248.37h2.2v3h-2.2zM615.89 253.89h2.2v3h-2.2zM611.78 258.22h2.2v3h-2.2zM619.54 261.45h2.2v3h-2.2zM615.59 266.11h2.2v3h-2.2zM623.56 269.79h2.2v3h-2.2zM619.50 274.21h2.2v3h-2.2zM627.83 278.61h2.2v3h-2.2zM624.11 283.76h2.2v3h-2.2zM618.34 267.53h2v2h-2zM604.47 238.04h2v2h-2zM618.88 268.76h2v2h-2zM610.79 251.89h2v2h-2zM622.57 274.15h2v2h-2zM604.94 240.43h2v2h-2zM636.88 234.98h2.2v3h-2.2zM632.50 238.83h2.2v3h-2.2zM641.87 245.56h2.2v3h-2.2zM637.14 248.68h2.2v3h-2.2zM645.89 254.10h2.2v3h-2.2zM641.24 257.39h2.2v3h-2.2zM650.09 263.02h2.2v3h-2.2zM645.43 266.29h2.2v3h-2.2zM653.32 269.88h2.2v3h-2.2zM648.99 273.87h2.2v3h-2.2zM657.92 279.65h2.2v3h-2.2zM653.89 284.26h2.2v3h-2.2zM653.47 279.69h2v2h-2zM647.91 266.10h2v2h-2zM644.62 260.54h2v2h-2zM640.82 250.08h2v2h-2zM653.88 280.44h2v2h-2zM646.29 259.88h2v2h-2zM666.63 235.56h2.2v3h-2.2zM662.71 240.26h2.2v3h-2.2zM671.12 244.81h2.2v3h-2.2zM666.81 248.71h2.2v3h-2.2zM674.75 252.28h2.2v3h-2.2zM670.77 256.84h2.2v3h-2.2zM679.62 262.30h2.2v3h-2.2zM675.69 266.98h2.2v3h-2.2zM682.89 269.04h2.2v3h-2.2zM679.40 274.61h2.2v3h-2.2zM687.90 279.35h2.2v3h-2.2zM682.87 281.76h2.2v3h-2.2zM681.69 275.60h2v2h-2zM677.67 264.67h2v2h-2zM677.55 265.93h2v2h-2zM673.78 256.44h2v2h-2zM674.13 256.70h2v2h-2zM673.94 257.67h2v2h-2zM697.05 236.49h2.2v3h-2.2zM692.58 240.13h2.2v3h-2.2zM700.27 243.26h2.2v3h-2.2zM696.69 248.76h2.2v3h-2.2zM704.79 252.76h2.2v3h-2.2zM701.36 258.57h2.2v3h-2.2zM708.62 260.78h2.2v3h-2.2zM705.37 266.98h2.2v3h-2.2zM713.80 271.66h2.2v3h-2.2zM709.33 275.30h2.2v3h-2.2zM717.70 279.85h2.2v3h-2.2zM712.79 282.56h2.2v3h-2.2zM715.73 282.57h2v2h-2zM716.44 281.40h2v2h-2zM698.45 244.42h2v2h-2zM713.31 280.18h2v2h-2zM702.49 253.10h2v2h-2zM698.63 244.12h2v2h-2zM726.60 236.52h2.2v3h-2.2zM722.12 240.14h2.2v3h-2.2zM731.01 245.82h2.2v3h-2.2zM726.48 249.34h2.2v3h-2.2zM734.77 253.75h2.2v3h-2.2zM731.00 258.88h2.2v3h-2.2zM738.30 261.20h2.2v3h-2.2zM735.26 267.86h2.2v3h-2.2zM743.07 271.26h2.2v3h-2.2zM738.64 274.99h2.2v3h-2.2zM747.40 280.39h2.2v3h-2.2zM742.60 283.35h2.2v3h-2.2zM745.91 283.58h2v2h-2zM732.45 254.00h2v2h-2zM732.51 257.85h2v2h-2zM738.83 271.99h2v2h-2zM741.14 275.57h2v2h-2zM739.31 267.09h2v2h-2zM756.26 235.31h2.2v3h-2.2zM752.12 239.64h2.2v3h-2.2zM759.91 242.96h2.2v3h-2.2zM756.29 248.36h2.2v3h-2.2zM764.37 252.28h2.2v3h-2.2zM759.81 255.72h2.2v3h-2.2zM769.06 262.11h2.2v3h-2.2zM764.06 264.63h2.2v3h-2.2zM772.20 268.70h2.2v3h-2.2zM768.00 272.87h2.2v3h-2.2zM776.93 278.59h2.2v3h-2.2zM773.08 283.51h2.2v3h-2.2zM770.47 272.47h2v2h-2zM757.78 248.34h2v2h-2zM767.90 266.07h2v2h-2zM761.59 252.35h2v2h-2zM764.55 256.70h2v2h-2zM768.93 270.20h2v2h-2zM785.32 234.70h2.2v3h-2.2zM782.22 241.23h2.2v3h-2.2zM790.35 245.28h2.2v3h-2.2zM786.13 249.44h2.2v3h-2.2zM793.51 251.93h2.2v3h-2.2zM790.41 258.45h2.2v3h-2.2zM798.55 262.52h2.2v3h-2.2zM794.06 266.13h2.2v3h-2.2zM802.66 271.18h2.2v3h-2.2zM798.17 274.77h2.2v3h-2.2zM806.15 278.51h2.2v3h-2.2zM801.86 282.53h2.2v3h-2.2zM786.87 247.69h2v2h-2zM791.30 252.52h2v2h-2zM799.59 269.35h2v2h-2zM798.22 270.13h2v2h-2zM795.22 262.74h2v2h-2zM800.70 273.72h2v2h-2zM816.20 236.82h2.2v3h-2.2zM811.43 239.80h2.2v3h-2.2zM820.15 245.06h2.2v3h-2.2zM815.83 249.00h2.2v3h-2.2zM824.29 253.72h2.2v3h-2.2zM819.63 256.94h2.2v3h-2.2zM828.25 261.99h2.2v3h-2.2zM823.92 265.89h2.2v3h-2.2zM831.85 269.52h2.2v3h-2.2zM827.59 273.58h2.2v3h-2.2zM836.36 278.94h2.2v3h-2.2zM831.55 281.84h2.2v3h-2.2zM832.01 278.85h2v2h-2zM812.23 237.76h2v2h-2zM833.02 279.70h2v2h-2zM814.55 243.10h2v2h-2zM814.32 238.44h2v2h-2zM827.51 265.98h2v2h-2zM845.49 235.57h2.2v3h-2.2zM840.93 238.99h2.2v3h-2.2zM848.96 242.81h2.2v3h-2.2zM844.82 247.11h2.2v3h-2.2zM853.89 253.12h2.2v3h-2.2zM849.07 256.00h2.2v3h-2.2zM857.47 260.60h2.2v3h-2.2zM853.46 265.18h2.2v3h-2.2zM861.22 268.45h2.2v3h-2.2zM857.38 273.36h2.2v3h-2.2zM865.67 277.73h2.2v3h-2.2zM862.06 283.16h2.2v3h-2.2zM850.19 253.28h2v2h-2zM864.00 281.00h2v2h-2zM861.84 275.76h2v2h-2zM842.97 237.60h2v2h-2zM853.07 256.46h2v2h-2zM850.87 252.29h2v2h-2zM875.61 237.42h2.2v3h-2.2zM870.65 239.98h2.2v3h-2.2zM878.83 244.04h2.2v3h-2.2zM875.29 249.50h2.2v3h-2.2zM883.30 253.23h2.2v3h-2.2zM878.68 256.48h2.2v3h-2.2zM887.59 262.05h2.2v3h-2.2zM882.76 264.87h2.2v3h-2.2zM891.90 270.90h2.2v3h-2.2zM887.65 274.91h2.2v3h-2.2zM896.02 279.37h2.2v3h-2.2zM891.68 283.20h2.2v3h-2.2zM879.88 253.48h2v2h-2zM882.22 255.26h2v2h-2zM875.35 241.16h2v2h-2zM871.94 238.37h2v2h-2zM879.32 249.25h2v2h-2zM883.06 260.14h2v2h-2zM905.26 236.35h2.2v3h-2.2zM900.32 239.02h2.2v3h-2.2zM908.52 243.25h2.2v3h-2.2zM904.52 247.89h2.2v3h-2.2zM913.28 253.29h2.2v3h-2.2zM909.31 258.01h2.2v3h-2.2zM916.72 260.56h2.2v3h-2.2zM912.58 264.92h2.2v3h-2.2zM920.96 269.51h2.2v3h-2.2zM916.91 274.07h2.2v3h-2.2zM925.42 278.93h2.2v3h-2.2zM920.83 282.34h2.2v3h-2.2zM908.36 251.70h2v2h-2zM924.38 282.12h2v2h-2zM905.64 241.07h2v2h-2zM903.90 241.06h2v2h-2zM924.77 282.53h2v2h-2zM918.11 270.75h2v2h-2zM934.82 236.65h2.2v3h-2.2zM930.27 240.10h2.2v3h-2.2zM938.30 243.89h2.2v3h-2.2zM934.77 249.45h2.2v3h-2.2zM943.22 254.15h2.2v3h-2.2zM938.95 258.17h2.2v3h-2.2zM947.12 262.27h2.2v3h-2.2zM943.17 266.95h2.2v3h-2.2zM951.22 270.79h2.2v3h-2.2zM947.03 274.99h2.2v3h-2.2zM955.06 278.79h2.2v3h-2.2zM950.74 282.72h2.2v3h-2.2zM944.49 266.05h2v2h-2zM941.90 256.38h2v2h-2zM947.98 269.98h2v2h-2zM937.05 248.53h2v2h-2zM942.21 258.03h2v2h-2zM941.35 255.91h2v2h-2zM964.64 236.12h2.2v3h-2.2zM960.12 239.69h2.2v3h-2.2zM968.25 243.78h2.2v3h-2.2zM964.77 249.57h2.2v3h-2.2zM972.12 252.01h2.2v3h-2.2zM968.57 257.64h2.2v3h-2.2zM976.47 261.25h2.2v3h-2.2zM972.78 266.60h2.2v3h-2.2zM980.25 269.30h2.2v3h-2.2zM977.18 275.94h2.2v3h-2.2zM984.66 278.67h2.2v3h-2.2zM980.15 282.26h2.2v3h-2.2zM967.25 249.17h2v2h-2zM961.49 236.82h2v2h-2zM971.40 256.08h2v2h-2zM968.57 252.85h2v2h-2zM967.16 246.81h2v2h-2zM982.44 280.65h2v2h-2zM993.50 235.12h2.2v3h-2.2zM990.24 241.30h2.2v3h-2.2zM997.90 244.40h2.2v3h-2.2zM994.38 250.03h2.2v3h-2.2zM1001.92 252.85h2.2v3h-2.2zM997.91 257.47h2.2v3h-2.2zM1006.02 261.49h2.2v3h-2.2zM1002.09 266.28h2.2v3h-2.2zM1010.06 270.00h2.2v3h-2.2zM1005.69 273.86h2.2v3h-2.2zM1014.84 280.08h2.2v3h-2.2zM1010.16 283.27h2.2v3h-2.2zM996.03 248.51h2v2h-2zM1001.63 259.51h2v2h-2zM1005.83 266.90h2v2h-2zM1000.52 254.02h2v2h-2zM1008.85 277.08h2v2h-2zM1010.81 275.84h2v2h-2zM1023.82 235.88h2.2v3h-2.2zM1019.90 240.61h2.2v3h-2.2zM1028.02 244.62h2.2v3h-2.2zM1024.16 249.49h2.2v3h-2.2zM1032.29 253.50h2.2v3h-2.2zM1028.21 257.93h2.2v3h-2.2zM1035.68 260.57h2.2v3h-2.2zM1032.15 266.13h2.2v3h-2.2zM1040.21 270.01h2.2v3h-2.2zM1036.33 274.84h2.2v3h-2.2zM1044.22 278.35h2.2v3h-2.2zM1040.63 283.78h2.2v3h-2.2zM1032.54 262.25h2v2h-2zM1025.02 247.38h2v2h-2zM1030.54 259.38h2v2h-2zM1030.22 258.17h2v2h-2zM1031.82 259.30h2v2h-2zM1033.99 261.53h2v2h-2zM1053.40 236.00h2.2v3h-2.2zM1049.77 241.40h2.2v3h-2.2zM1056.96 243.48h2.2v3h-2.2zM1053.67 249.58h2.2v3h-2.2zM1061.81 253.67h2.2v3h-2.2zM1057.32 257.25h2.2v3h-2.2zM1066.22 262.94h2.2v3h-2.2zM1061.47 265.98h2.2v3h-2.2zM1069.87 270.58h2.2v3h-2.2zM1065.79 275.04h2.2v3h-2.2zM1074.35 280.00h2.2v3h-2.2zM1069.52 282.88h2.2v3h-2.2zM1060.07 257.31h2v2h-2zM1063.93 262.86h2v2h-2zM1058.12 250.66h2v2h-2zM1059.62 255.84h2v2h-2zM1056.69 249.67h2v2h-2zM1072.78 282.53h2v2h-2zM1083.65 236.15h2.2v3h-2.2zM1079.14 239.71h2.2v3h-2.2zM1087.41 244.07h2.2v3h-2.2zM1083.28 248.43h2.2v3h-2.2zM1091.63 252.96h2.2v3h-2.2zM1087.36 257.04h2.2v3h-2.2zM1095.73 261.60h2.2v3h-2.2zM1091.01 264.72h2.2v3h-2.2zM1099.83 270.24h2.2v3h-2.2zM1095.43 274.04h2.2v3h-2.2zM1104.07 279.18h2.2v3h-2.2zM1099.11 281.79h2.2v3h-2.2zM1082.99 244.51h2v2h-2zM1098.82 272.33h2v2h-2zM1094.54 266.76h2v2h-2zM1099.51 274.58h2v2h-2zM1092.13 262.37h2v2h-2zM1086.83 250.18h2v2h-2zM1112.37 234.65h2.2v3h-2.2zM1108.91 240.41h2.2v3h-2.2zM1116.63 243.63h2.2v3h-2.2zM1112.42 247.82h2.2v3h-2.2zM1120.51 251.80h2.2v3h-2.2zM1116.36 256.12h2.2v3h-2.2zM1125.46 262.23h2.2v3h-2.2zM1120.62 265.11h2.2v3h-2.2zM1129.93 271.66h2.2v3h-2.2zM1124.70 273.71h2.2v3h-2.2zM1133.93 280.09h2.2v3h-2.2zM1128.87 282.51h2.2v3h-2.2zM1111.13 237.46h2v2h-2zM1116.16 247.99h2v2h-2zM1112.89 245.42h2v2h-2zM1127.94 272.94h2v2h-2zM1129.80 276.76h2v2h-2zM1112.33 240.58h2v2h-2zM1142.52 235.21h2.2v3h-2.2zM1138.67 240.25h2.2v3h-2.2zM1146.27 243.25h2.2v3h-2.2zM1142.94 249.38h2.2v3h-2.2zM1150.67 252.65h2.2v3h-2.2zM1146.87 257.80h2.2v3h-2.2zM1155.12 262.17h2.2v3h-2.2zM1150.71 266.02h2.2v3h-2.2zM1158.93 270.34h2.2v3h-2.2zM1155.29 275.81h2.2v3h-2.2zM1163.75 280.64h2.2v3h-2.2zM1159.41 284.63h2.2v3h-2.2zM1151.79 263.30h2v2h-2zM1142.57 239.20h2v2h-2zM1156.43 269.80h2v2h-2zM1147.50 252.12h2v2h-2zM1162.54 282.86h2v2h-2zM1152.60 264.94h2v2h-2zM1172.04 235.85h2.2v3h-2.2zM1168.61 241.51h2.2v3h-2.2zM1176.82 245.60h2.2v3h-2.2zM1172.53 249.50h2.2v3h-2.2zM1181.07 254.28h2.2v3h-2.2zM1176.23 257.06h2.2v3h-2.2zM1184.17 260.60h2.2v3h-2.2zM1180.61 265.99h2.2v3h-2.2zM1189.17 270.80h2.2v3h-2.2zM1184.29 273.50h2.2v3h-2.2zM1193.23 279.09h2.2v3h-2.2zM1189.32 283.75h2.2v3h-2.2zM1175.05 247.97h2v2h-2zM1184.50 268.11h2v2h-2zM1173.39 246.72h2v2h-2zM1187.11 271.45h2v2h-2zM1178.52 258.21h2v2h-2zM1188.29 273.96h2v2h-2zM1201.56 234.69h2.2v3h-2.2zM1198.07 240.39h2.2v3h-2.2zM1206.52 245.12h2.2v3h-2.2zM1201.60 247.81h2.2v3h-2.2zM1210.41 253.29h2.2v3h-2.2zM1205.96 256.97h2.2v3h-2.2zM1214.43 261.75h2.2v3h-2.2zM1209.68 264.79h2.2v3h-2.2zM1217.95 269.15h2.2v3h-2.2zM1215.00 275.97h2.2v3h-2.2zM1223.10 279.98h2.2v3h-2.2zM1218.49 283.33h2.2v3h-2.2zM1211.16 263.18h2v2h-2zM1216.37 273.10h2v2h-2zM1221.11 280.93h2v2h-2zM1218.86 274.95h2v2h-2zM1203.52 248.53h2v2h-2zM1202.77 246.05h2v2h-2zM1231.35 235.08h2.2v3h-2.2zM1228.21 241.50h2.2v3h-2.2zM1236.50 245.90h2.2v3h-2.2zM1231.41 248.22h2.2v3h-2.2zM1239.44 252.08h2.2v3h-2.2zM1235.57 256.97h2.2v3h-2.2zM1243.95 261.54h2.2v3h-2.2zM1240.49 267.30h2.2v3h-2.2zM1248.75 271.63h2.2v3h-2.2zM1244.53 275.78h2.2v3h-2.2zM1251.82 278.06h2.2v3h-2.2zM1248.59 284.31h2.2v3h-2.2zM1245.21 270.06h2v2h-2zM1249.57 282.95h2v2h-2zM1232.96 243.67h2v2h-2zM1250.41 280.80h2v2h-2zM1235.90 250.86h2v2h-2zM1244.66 272.32h2v2h-2zM1261.00 234.39h2.2v3h-2.2zM1257.89 241.01h2.2v3h-2.2zM1266.04 245.19h2.2v3h-2.2zM1261.64 249.03h2.2v3h-2.2zM1269.68 252.98h2.2v3h-2.2zM1265.40 257.09h2.2v3h-2.2zM1274.26 262.78h2.2v3h-2.2zM1269.69 266.28h2.2v3h-2.2zM1278.14 271.09h2.2v3h-2.2zM1273.40 274.22h2.2v3h-2.2zM1281.76 278.84h2.2v3h-2.2zM1277.41 282.82h2.2v3h-2.2zM1274.75 270.41h2v2h-2zM1263.03 243.30h2v2h-2zM1264.37 249.09h2v2h-2zM1261.48 243.82h2v2h-2zM1276.89 276.40h2v2h-2zM1262.41 244.40h2v2h-2zM1290.68 235.50h2.2v3h-2.2zM1287.36 241.55h2.2v3h-2.2zM1295.09 244.74h2.2v3h-2.2zM1291.80 250.84h2.2v3h-2.2zM1298.87 252.66h2.2v3h-2.2zM1295.70 259.03h2.2v3h-2.2zM1303.39 262.14h2.2v3h-2.2zM1299.00 265.94h2.2v3h-2.2zM1307.09 269.90h2.2v3h-2.2zM1303.98 276.36h2.2v3h-2.2zM1311.86 279.89h2.2v3h-2.2zM1307.30 283.32h2.2v3h-2.2zM1299.35 257.87h2v2h-2zM1293.50 247.75h2v2h-2zM1290.54 244.01h2v2h-2zM1306.21 273.50h2v2h-2zM1291.54 246.75h2v2h-2zM1290.70 241.65h2v2h-2zM1321.46 237.37h2.2v3h-2.2zM1316.78 240.52h2.2v3h-2.2zM1325.53 245.78h2.2v3h-2.2zM1320.64 248.49h2.2v3h-2.2zM1328.80 252.54h2.2v3h-2.2zM1325.46 258.44h2.2v3h-2.2zM1333.15 261.50h2.2v3h-2.2zM1328.76 265.24h2.2v3h-2.2zM1337.27 270.02h2.2v3h-2.2zM1333.41 274.85h2.2v3h-2.2zM1340.94 277.59h2.2v3h-2.2zM1337.44 283.16h2.2v3h-2.2zM1328.12 257.73h2v2h-2zM1321.49 242.80h2v2h-2zM1337.42 274.76h2v2h-2zM1325.93 251.99h2v2h-2zM1327.40 254.77h2v2h-2zM1320.63 240.06h2v2h-2zM1350.70 235.31h2.2v3h-2.2zM1346.79 240.18h2.2v3h-2.2zM1354.30 243.00h2.2v3h-2.2zM1351.11 249.42h2.2v3h-2.2zM1359.18 253.41h2.2v3h-2.2zM1354.21 256.04h2.2v3h-2.2zM1362.57 260.64h2.2v3h-2.2zM1358.89 266.01h2.2v3h-2.2zM1367.16 270.43h2.2v3h-2.2zM1362.75 274.24h2.2v3h-2.2zM1370.81 278.23h2.2v3h-2.2zM1367.02 283.37h2.2v3h-2.2zM1351.20 242.70h2v2h-2zM1365.98 277.08h2v2h-2zM1361.37 263.40h2v2h-2zM1352.52 244.00h2v2h-2zM1368.41 280.72h2v2h-2zM1358.26 256.16h2v2h-2z" fill="#0b4a0b"/>
<path d="M9.50 234.92L9.54 236.98L10.55 240.07L30.33 281.29L32.29 284.38L34.23 286.44L35.18 286.44L35.14 284.38L34.13 281.29L14.35 240.07L12.39 236.98L10.45 234.92ZM39.23 235.52L39.26 237.56L40.27 240.63L60.05 281.48L62.01 284.55L63.95 286.59L64.90 286.59L64.86 284.55L63.85 281.48L44.07 240.63L42.11 237.56L40.18 235.52ZM68.95 235.03L68.99 237.13L70.00 240.28L89.78 282.34L91.74 285.49L93.68 287.59L94.63 287.59L94.59 285.49L93.58 282.34L73.80 240.28L71.84 237.13L69.90 235.03ZM98.68 234.48L98.72 236.55L99.72 239.66L119.51 281.03L121.46 284.13L123.40 286.20L124.35 286.20L124.31 284.13L123.31 281.03L103.52 239.66L101.57 236.55L99.63 234.48ZM128.40 235.76L128.44 237.83L129.45 240.94L149.23 282.32L151.19 285.42L153.13 287.49L154.08 287.49L154.04 285.42L153.03 282.32L133.25 240.94L131.29 237.83L129.35 235.76ZM158.13 234.67L158.17 236.74L159.18 239.85L178.96 281.23L180.92 284.33L182.85 286.40L183.80 286.40L183.77 284.33L182.76 281.23L162.98 239.85L161.02 236.74L159.08 234.67ZM187.85 234.68L187.89 236.77L188.90 239.90L208.68 281.73L210.64 284.87L212.58 286.96L213.53 286.96L213.49 284.87L212.48 281.73L192.70 239.90L190.74 236.77L188.80 234.68ZM217.58 235.55L217.62 237.61L218.63 240.72L238.41 282.09L240.37 285.19L242.31 287.26L243.26 287.26L243.22 285.19L242.21 282.09L222.43 240.72L220.47 237.61L218.53 235.55ZM247.31 234.54L247.35 236.61L248.35 239.72L268.14 281.12L270.09 284.22L272.03 286.29L272.98 286.29L272.94 284.22L271.94 281.12L252.15 239.72L250.20 236.61L248.26 234.54ZM277.03 235.74L277.07 237.78L278.08 240.84L297.86 281.72L299.82 284.79L301.76 286.83L302.71 286.83L302.67 284.79L301.66 281.72L281.88 240.84L279.92 237.78L277.98 235.74ZM306.76 234.54L306.80 236.64L307.81 239.77L327.59 281.61L329.55 284.75L331.48 286.84L332.44 286.84L332.40 284.75L331.39 281.61L311.61 239.77L309.65 236.64L307.71 234.54ZM336.48 235.49L336.52 237.55L337.53 240.64L357.31 281.83L359.27 284.92L361.21 286.98L362.16 286.98L362.12 284.92L361.11 281.83L341.33 240.64L339.37 237.55L337.44 235.49ZM366.21 235.97L366.25 238.03L367.26 241.14L387.04 282.52L389.00 285.63L390.94 287.70L391.89 287.70L391.85 285.63L390.84 282.52L371.06 241.14L369.10 238.03L367.16 235.97ZM395.94 235.34L395.98 237.40L396.98 240.49L416.77 281.63L418.72 284.72L420.66 286.78L421.61 286.78L421.57 284.72L420.57 281.63L400.78 240.49L398.83 237.40L396.89 235.34ZM425.66 234.73L425.70 236.85L426.71 240.02L446.49 282.36L448.45 285.53L450.39 287.65L451.34 287.65L451.30 285.53L450.29 282.36L430.51 240.02L428.55 236.85L426.61 234.73ZM455.39 234.40L455.43 236.50L456.44 239.64L476.22 281.58L478.18 284.73L480.11 286.83L481.06 286.83L481.03 284.73L480.02 281.58L460.24 239.64L458.28 236.50L456.34 234.40ZM485.11 235.94L485.15 237.99L486.16 241.08L505.94 282.19L507.90 285.27L509.84 287.33L510.79 287.33L510.75 285.27L509.74 282.19L489.96 241.08L488.00 237.99L486.06 235.94ZM514.84 235.81L514.88 237.88L515.89 240.97L535.67 282.22L537.63 285.31L539.57 287.37L540.52 287.37L540.48 285.31L539.47 282.22L519.69 240.97L517.73 237.88L515.79 235.81ZM544.57 234.94L544.61 237.01L545.61 240.11L565.40 281.47L567.35 284.57L569.29 286.64L570.24 286.64L570.20 284.57L569.20 281.47L549.41 240.11L547.46 237.01L545.52 234.94ZM574.29 235.98L574.33 238.01L575.34 241.04L595.12 281.56L597.08 284.60L599.02 286.62L599.97 286.62L599.93 284.60L598.92 281.56L579.14 241.04L577.18 238.01L575.24 235.98ZM604.02 235.96L604.06 238.00L605.07 241.07L624.85 282.02L626.81 285.09L628.75 287.13L629.70 287.13L629.66 285.09L628.65 282.02L608.87 241.07L606.91 238.00L604.97 235.96ZM633.75 235.07L633.78 237.17L634.79 240.32L654.57 282.33L656.53 285.48L658.47 287.58L659.42 287.58L659.38 285.48L658.37 282.33L638.59 240.32L636.63 237.17L634.70 235.07ZM663.47 235.66L663.51 237.69L664.52 240.75L684.30 281.47L686.26 284.52L688.20 286.56L689.15 286.56L689.11 284.52L688.10 281.47L668.32 240.75L666.36 237.69L664.42 235.66ZM693.20 235.11L693.24 237.18L694.24 240.30L714.03 281.83L715.98 284.94L717.92 287.02L718.87 287.02L718.83 284.94L717.83 281.83L698.04 240.30L696.09 237.18L694.15 235.11ZM722.92 235.49L722.96 237.57L723.97 240.70L743.75 282.42L745.71 285.55L747.65 287.63L748.60 287.63L748.56 285.55L747.55 282.42L727.77 240.70L725.81 237.57L723.87 235.49ZM752.65 234.44L752.69 236.51L753.70 239.61L773.48 281.03L775.44 284.13L777.38 286.20L778.33 286.20L778.29 284.13L777.28 281.03L757.50 239.61L755.54 236.51L753.60 234.44ZM782.38 235.21L782.41 237.29L783.42 240.41L803.20 282.02L805.16 285.15L807.10 287.23L808.05 287.23L808.01 285.15L807.00 282.02L787.22 240.41L785.26 237.29L783.33 235.21ZM812.10 234.93L812.14 236.99L813.15 240.09L832.93 281.42L834.89 284.52L836.83 286.58L837.78 286.58L837.74 284.52L836.73 281.42L816.95 240.09L814.99 236.99L813.05 234.93ZM841.83 234.58L841.87 236.65L842.87 239.75L862.66 281.09L864.61 284.19L866.55 286.26L867.50 286.26L867.46 284.19L866.46 281.09L846.67 239.75L844.72 236.65L842.78 234.58ZM871.55 235.67L871.59 237.71L872.60 240.76L892.38 281.41L894.34 284.46L896.28 286.50L897.23 286.50L897.19 284.46L896.18 281.41L876.40 240.76L874.44 237.71L872.50 235.67ZM901.28 234.67L901.32 236.76L902.33 239.89L922.11 281.68L924.07 284.81L926.00 286.90L926.96 286.90L926.92 284.81L925.91 281.68L906.13 239.89L904.17 236.76L902.23 234.67ZM931.00 235.37L931.04 237.43L932.05 240.51L951.83 281.70L953.79 284.79L955.73 286.85L956.68 286.85L956.64 284.79L955.63 281.70L935.85 240.51L933.89 237.43L931.96 235.37ZM960.73 234.56L960.77 236.66L961.78 239.82L981.56 281.86L983.52 285.02L985.46 287.12L986.41 287.12L986.37 285.02L985.36 281.86L965.58 239.82L963.62 236.66L961.68 234.56ZM990.46 235.42L990.50 237.51L991.50 240.63L1011.29 282.30L1013.24 285.43L1015.18 287.51L1016.13 287.51L1016.09 285.43L1015.09 282.30L995.30 240.63L993.35 237.51L991.41 235.42ZM1020.18 234.95L1020.22 237.01L1021.23 240.10L1041.01 281.30L1042.97 284.38L1044.91 286.44L1045.86 286.44L1045.82 284.38L1044.81 281.30L1025.03 240.10L1023.07 237.01L1021.13 234.95ZM1049.91 235.38L1049.95 237.45L1050.96 240.57L1070.74 282.10L1072.70 285.22L1074.64 287.29L1075.59 287.29L1075.55 285.22L1074.54 282.10L1054.76 240.57L1052.80 237.45L1050.86 235.38ZM1079.63 234.41L1079.67 236.49L1080.68 239.62L1100.46 281.29L1102.42 284.42L1104.36 286.50L1105.31 286.50L1105.27 284.42L1104.26 281.29L1084.48 239.62L1082.52 236.49L1080.58 234.41ZM1109.36 235.02L1109.40 237.10L1110.41 240.23L1130.19 281.93L1132.15 285.06L1134.09 287.15L1135.04 287.15L1135.00 285.06L1133.99 281.93L1114.21 240.23L1112.25 237.10L1110.31 235.02ZM1139.09 234.67L1139.13 236.78L1140.13 239.96L1159.92 282.29L1161.87 285.46L1163.81 287.58L1164.76 287.58L1164.72 285.46L1163.72 282.29L1143.93 239.96L1141.98 236.78L1140.04 234.67ZM1168.81 235.82L1168.85 237.84L1169.86 240.86L1189.64 281.22L1191.60 284.25L1193.54 286.27L1194.49 286.27L1194.45 284.25L1193.44 281.22L1173.66 240.86L1171.70 237.84L1169.76 235.82ZM1198.54 235.04L1198.58 237.12L1199.59 240.24L1219.37 281.83L1221.33 284.95L1223.26 287.03L1224.21 287.03L1224.18 284.95L1223.17 281.83L1203.39 240.24L1201.43 237.12L1199.49 235.04ZM1228.27 235.30L1228.30 237.38L1229.31 240.50L1249.09 282.03L1251.05 285.15L1252.99 287.23L1253.94 287.23L1253.90 285.15L1252.89 282.03L1233.11 240.50L1231.15 237.38L1229.21 235.30ZM1257.99 234.75L1258.03 236.87L1259.04 240.05L1278.82 282.40L1280.78 285.58L1282.72 287.69L1283.67 287.69L1283.63 285.58L1282.62 282.40L1262.84 240.05L1260.88 236.87L1258.94 234.75ZM1287.72 235.99L1287.76 238.06L1288.76 241.17L1308.55 282.62L1310.50 285.72L1312.44 287.80L1313.39 287.80L1313.35 285.72L1312.35 282.62L1292.56 241.17L1290.61 238.06L1288.67 235.99ZM1317.44 235.70L1317.48 237.74L1318.49 240.80L1338.27 281.63L1340.23 284.69L1342.17 286.74L1343.12 286.74L1343.08 284.69L1342.07 281.63L1322.29 240.80L1320.33 237.74L1318.39 235.70ZM1347.17 234.55L1347.21 236.66L1348.22 239.83L1368.00 282.04L1369.96 285.21L1371.89 287.32L1372.84 287.32L1372.81 285.21L1371.80 282.04L1352.02 239.83L1350.06 236.66L1348.12 234.55Z" fill="#00e000"/>
<path d="M12.46 234.43h2.2v3h-2.2zM8.87 239.88h2.2v3h-2.2zM16.55 242.96h2.2v3h-2.2zM12.90 248.27h2.2v3h-2.2zM20.71 251.63h2.2v3h-2.2zM16.60 255.98h2.2v3h-2.2zM25.27 261.13h2.2v3h-2.2zM21.63 266.46h2.2v3h-2.2zM29.02 268.94h2.2v3h-2.2zM25.01 273.49h2.2v3h-2.2zM33.77 278.83h2.2v3h-2.2zM30.02 283.95h2.2v3h-2.2zM22.74 263.26h2v2h-2zM30.58 281.76h2v2h-2zM28.68 276.30h2v2h-2zM12.27 243.18h2v2h-2zM18.02 250.80h2v2h-2zM14.48 244.87h2v2h-2zM42.47 235.60h2.2v3h-2.2zM39.18 241.63h2.2v3h-2.2zM46.38 243.68h2.2v3h-2.2zM42.61 248.71h2.2v3h-2.2zM51.29 253.83h2.2v3h-2.2zM46.40 256.54h2.2v3h-2.2zM55.08 261.65h2.2v3h-2.2zM50.38 264.76h2.2v3h-2.2zM59.42 270.62h2.2v3h-2.2zM55.40 275.13h2.2v3h-2.2zM63.43 278.89h2.2v3h-2.2zM59.66 283.92h2.2v3h-2.2zM47.50 251.49h2v2h-2zM53.40 264.39h2v2h-2zM51.11 258.04h2v2h-2zM60.88 280.49h2v2h-2zM53.40 267.60h2v2h-2zM55.99 269.32h2v2h-2zM72.85 236.56h2.2v3h-2.2zM68.77 241.05h2.2v3h-2.2zM76.30 243.89h2.2v3h-2.2zM72.33 248.64h2.2v3h-2.2zM80.52 252.87h2.2v3h-2.2zM77.03 258.63h2.2v3h-2.2zM85.39 263.20h2.2v3h-2.2zM80.25 265.46h2.2v3h-2.2zM88.54 269.91h2.2v3h-2.2zM84.47 274.44h2.2v3h-2.2zM92.73 278.82h2.2v3h-2.2zM88.90 283.86h2.2v3h-2.2zM82.06 264.53h2v2h-2zM69.51 236.85h2v2h-2zM78.08 254.12h2v2h-2zM91.44 281.75h2v2h-2zM81.49 261.04h2v2h-2zM83.37 268.65h2v2h-2zM102.65 236.11h2.2v3h-2.2zM98.18 239.74h2.2v3h-2.2zM105.87 242.85h2.2v3h-2.2zM101.86 247.43h2.2v3h-2.2zM110.24 251.98h2.2v3h-2.2zM106.12 256.34h2.2v3h-2.2zM114.08 260.02h2.2v3h-2.2zM110.84 266.21h2.2v3h-2.2zM119.28 270.89h2.2v3h-2.2zM114.48 273.84h2.2v3h-2.2zM122.77 278.19h2.2v3h-2.2zM118.14 281.47h2.2v3h-2.2zM101.19 240.83h2v2h-2zM106.27 248.39h2v2h-2zM101.55 243.58h2v2h-2zM120.64 280.33h2v2h-2zM102.78 242.89h2v2h-2zM100.07 237.33h2v2h-2zM131.73 236.05h2.2v3h-2.2zM127.19 239.51h2.2v3h-2.2zM135.45 243.82h2.2v3h-2.2zM131.62 248.78h2.2v3h-2.2zM139.85 253.04h2.2v3h-2.2zM136.25 258.47h2.2v3h-2.2zM144.84 263.46h2.2v3h-2.2zM140.07 266.46h2.2v3h-2.2zM148.93 272.03h2.2v3h-2.2zM144.86 276.48h2.2v3h-2.2zM153.08 280.70h2.2v3h-2.2zM148.21 283.48h2.2v3h-2.2zM133.20 247.61h2v2h-2zM132.60 246.51h2v2h-2zM144.20 266.40h2v2h-2zM147.76 276.48h2v2h-2zM144.54 267.75h2v2h-2zM131.48 241.30h2v2h-2zM162.04 236.17h2.2v3h-2.2zM158.09 240.88h2.2v3h-2.2zM165.95 244.36h2.2v3h-2.2zM161.43 247.87h2.2v3h-2.2zM169.94 252.70h2.2v3h-2.2zM165.28 255.93h2.2v3h-2.2zM173.40 259.94h2.2v3h-2.2zM170.44 266.72h2.2v3h-2.2zM178.30 270.20h2.2v3h-2.2zM174.01 274.19h2.2v3h-2.2zM182.78 279.56h2.2v3h-2.2zM178.02 282.58h2.2v3h-2.2zM179.22 276.85h2v2h-2zM162.79 246.08h2v2h-2zM164.58 249.90h2v2h-2zM171.17 263.56h2v2h-2zM167.06 255.77h2v2h-2zM178.65 278.63h2v2h-2zM191.43 235.50h2.2v3h-2.2zM187.57 240.45h2.2v3h-2.2zM194.99 243.04h2.2v3h-2.2zM191.42 248.58h2.2v3h-2.2zM199.29 252.12h2.2v3h-2.2zM195.19 256.56h2.2v3h-2.2zM204.06 262.21h2.2v3h-2.2zM199.59 265.87h2.2v3h-2.2zM207.92 270.37h2.2v3h-2.2zM204.03 275.25h2.2v3h-2.2zM212.48 280.00h2.2v3h-2.2zM207.76 283.13h2.2v3h-2.2zM202.21 265.11h2v2h-2zM200.54 260.39h2v2h-2zM198.73 257.57h2v2h-2zM200.53 258.78h2v2h-2zM205.26 269.19h2v2h-2zM208.81 280.62h2v2h-2zM221.65 237.37h2.2v3h-2.2zM216.82 240.25h2.2v3h-2.2zM225.19 244.79h2.2v3h-2.2zM221.67 250.39h2.2v3h-2.2zM229.74 254.30h2.2v3h-2.2zM224.77 256.87h2.2v3h-2.2zM233.36 261.88h2.2v3h-2.2zM229.33 266.41h2.2v3h-2.2zM237.37 270.26h2.2v3h-2.2zM233.05 274.20h2.2v3h-2.2zM241.47 278.82h2.2v3h-2.2zM237.83 284.18h2.2v3h-2.2zM218.89 238.04h2v2h-2zM226.65 257.63h2v2h-2zM226.04 252.56h2v2h-2zM228.38 260.97h2v2h-2zM241.08 282.98h2v2h-2zM238.73 282.35h2v2h-2zM250.98 235.55h2.2v3h-2.2zM247.05 240.29h2.2v3h-2.2zM254.42 242.75h2.2v3h-2.2zM251.23 249.06h2.2v3h-2.2zM258.52 251.33h2.2v3h-2.2zM255.36 257.70h2.2v3h-2.2zM263.12 260.95h2.2v3h-2.2zM258.84 264.97h2.2v3h-2.2zM267.36 269.84h2.2v3h-2.2zM263.68 275.12h2.2v3h-2.2zM271.13 277.72h2.2v3h-2.2zM266.82 281.68h2.2v3h-2.2zM258.96 260.67h2v2h-2zM249.44 241.23h2v2h-2zM248.24 238.48h2v2h-2zM254.38 250.66h2v2h-2zM264.29 271.50h2v2h-2zM258.18 259.42h2v2h-2zM280.95 237.21h2.2v3h-2.2zM276.65 241.15h2.2v3h-2.2zM284.83 245.23h2.2v3h-2.2zM280.40 248.89h2.2v3h-2.2zM288.59 253.01h2.2v3h-2.2zM284.09 256.51h2.2v3h-2.2zM292.44 260.97h2.2v3h-2.2zM288.23 265.07h2.2v3h-2.2zM297.32 271.04h2.2v3h-2.2zM292.58 274.06h2.2v3h-2.2zM300.73 278.08h2.2v3h-2.2zM296.49 282.14h2.2v3h-2.2zM297.58 275.98h2v2h-2zM292.01 268.12h2v2h-2zM282.51 248.43h2v2h-2zM286.94 258.42h2v2h-2zM286.96 257.79h2v2h-2zM300.57 281.52h2v2h-2zM310.37 235.45h2.2v3h-2.2zM306.16 239.66h2.2v3h-2.2zM314.69 244.59h2.2v3h-2.2zM310.44 248.71h2.2v3h-2.2zM318.77 253.22h2.2v3h-2.2zM314.84 258.00h2.2v3h-2.2zM322.49 261.08h2.2v3h-2.2zM318.27 265.27h2.2v3h-2.2zM327.35 271.35h2.2v3h-2.2zM322.18 273.53h2.2v3h-2.2zM331.15 279.39h2.2v3h-2.2zM326.91 283.53h2.2v3h-2.2zM309.45 238.22h2v2h-2zM327.70 278.14h2v2h-2zM324.74 270.70h2v2h-2zM310.64 242.72h2v2h-2zM319.70 259.90h2v2h-2zM326.36 274.03h2v2h-2zM340.03 236.23h2.2v3h-2.2zM336.05 240.84h2.2v3h-2.2zM343.57 243.60h2.2v3h-2.2zM340.26 249.62h2.2v3h-2.2zM347.93 252.66h2.2v3h-2.2zM343.57 256.49h2.2v3h-2.2zM352.06 261.28h2.2v3h-2.2zM348.50 266.76h2.2v3h-2.2zM356.11 269.70h2.2v3h-2.2zM352.63 275.37h2.2v3h-2.2zM361.18 280.27h2.2v3h-2.2zM356.45 283.32h2.2v3h-2.2zM345.65 254.79h2v2h-2zM353.21 268.75h2v2h-2zM351.35 265.66h2v2h-2zM337.86 240.65h2v2h-2zM343.58 248.83h2v2h-2zM344.17 251.17h2v2h-2zM369.65 236.49h2.2v3h-2.2zM365.29 240.33h2.2v3h-2.2zM373.48 244.49h2.2v3h-2.2zM370.25 250.71h2.2v3h-2.2zM377.60 253.12h2.2v3h-2.2zM373.92 258.39h2.2v3h-2.2zM381.64 261.56h2.2v3h-2.2zM377.97 266.86h2.2v3h-2.2zM386.76 272.28h2.2v3h-2.2zM381.61 274.47h2.2v3h-2.2zM390.72 280.56h2.2v3h-2.2zM386.19 284.07h2.2v3h-2.2zM387.27 278.84h2v2h-2zM373.26 248.32h2v2h-2zM376.32 260.19h2v2h-2zM366.98 237.72h2v2h-2zM376.36 258.54h2v2h-2zM369.59 244.10h2v2h-2zM399.86 236.85h2.2v3h-2.2zM395.04 239.72h2.2v3h-2.2zM404.10 245.68h2.2v3h-2.2zM399.11 248.20h2.2v3h-2.2zM407.39 252.53h2.2v3h-2.2zM403.56 257.45h2.2v3h-2.2zM411.42 260.91h2.2v3h-2.2zM407.51 265.66h2.2v3h-2.2zM416.49 271.45h2.2v3h-2.2zM412.26 275.55h2.2v3h-2.2zM420.43 279.65h2.2v3h-2.2zM416.07 283.47h2.2v3h-2.2zM418.30 279.20h2v2h-2zM409.53 262.34h2v2h-2zM398.45 239.20h2v2h-2zM407.44 257.79h2v2h-2zM410.35 266.75h2v2h-2zM399.02 239.18h2v2h-2zM429.11 235.31h2.2v3h-2.2zM424.58 238.89h2.2v3h-2.2zM432.91 243.44h2.2v3h-2.2zM428.64 247.58h2.2v3h-2.2zM437.21 252.66h2.2v3h-2.2zM432.77 256.40h2.2v3h-2.2zM441.21 261.21h2.2v3h-2.2zM437.09 265.67h2.2v3h-2.2zM445.74 270.90h2.2v3h-2.2zM441.99 276.15h2.2v3h-2.2zM450.08 280.20h2.2v3h-2.2zM445.53 283.71h2.2v3h-2.2zM435.66 256.09h2v2h-2zM434.28 254.33h2v2h-2zM427.09 239.33h2v2h-2zM446.79 282.46h2v2h-2zM437.97 260.35h2v2h-2zM444.72 277.47h2v2h-2zM458.58 234.43h2.2v3h-2.2zM454.27 238.43h2.2v3h-2.2zM462.59 242.92h2.2v3h-2.2zM458.90 248.25h2.2v3h-2.2zM467.36 253.04h2.2v3h-2.2zM463.54 258.09h2.2v3h-2.2zM471.53 261.88h2.2v3h-2.2zM467.30 266.05h2.2v3h-2.2zM475.71 270.73h2.2v3h-2.2zM471.19 274.29h2.2v3h-2.2zM479.56 278.91h2.2v3h-2.2zM474.79 281.94h2.2v3h-2.2zM472.71 272.93h2v2h-2zM477.01 279.43h2v2h-2zM461.74 250.36h2v2h-2zM462.11 247.90h2v2h-2zM470.48 268.98h2v2h-2zM457.74 239.34h2v2h-2zM488.52 236.37h2.2v3h-2.2zM484.18 240.24h2.2v3h-2.2zM492.95 245.57h2.2v3h-2.2zM489.13 250.52h2.2v3h-2.2zM496.52 253.01h2.2v3h-2.2zM492.15 256.79h2.2v3h-2.2zM500.78 261.86h2.2v3h-2.2zM496.75 266.35h2.2v3h-2.2zM505.33 271.31h2.2v3h-2.2zM500.59 274.35h2.2v3h-2.2zM509.59 280.17h2.2v3h-2.2zM505.38 284.30h2.2v3h-2.2zM496.18 260.86h2v2h-2zM506.84 282.36h2v2h-2zM503.27 275.43h2v2h-2zM491.54 247.75h2v2h-2zM493.75 251.15h2v2h-2zM495.92 260.44h2v2h-2zM518.89 237.59h2.2v3h-2.2zM514.51 241.39h2.2v3h-2.2zM521.89 243.85h2.2v3h-2.2zM518.53 249.78h2.2v3h-2.2zM526.44 253.34h2.2v3h-2.2zM522.29 257.62h2.2v3h-2.2zM530.50 261.81h2.2v3h-2.2zM526.16 265.69h2.2v3h-2.2zM534.22 269.55h2.2v3h-2.2zM530.42 274.56h2.2v3h-2.2zM538.77 279.04h2.2v3h-2.2zM535.37 284.90h2.2v3h-2.2zM519.70 243.13h2v2h-2zM519.74 247.02h2v2h-2zM534.80 275.51h2v2h-2zM523.82 257.46h2v2h-2zM525.71 259.36h2v2h-2zM535.09 280.06h2v2h-2zM547.85 235.12h2.2v3h-2.2zM543.66 239.32h2.2v3h-2.2zM551.58 242.93h2.2v3h-2.2zM548.37 249.18h2.2v3h-2.2zM556.83 253.90h2.2v3h-2.2zM552.34 257.48h2.2v3h-2.2zM560.98 262.59h2.2v3h-2.2zM555.71 264.52h2.2v3h-2.2zM564.23 269.37h2.2v3h-2.2zM560.39 274.30h2.2v3h-2.2zM569.24 279.85h2.2v3h-2.2zM565.10 284.16h2.2v3h-2.2zM553.13 254.51h2v2h-2zM554.83 256.53h2v2h-2zM564.98 279.71h2v2h-2zM563.85 273.87h2v2h-2zM564.41 274.80h2v2h-2zM558.28 264.78h2v2h-2zM577.73 236.46h2.2v3h-2.2zM573.33 240.14h2.2v3h-2.2zM581.82 244.82h2.2v3h-2.2zM577.93 249.56h2.2v3h-2.2zM586.26 253.91h2.2v3h-2.2zM582.21 258.32h2.2v3h-2.2zM590.59 262.79h2.2v3h-2.2zM586.23 266.55h2.2v3h-2.2zM593.81 269.39h2.2v3h-2.2zM590.56 275.44h2.2v3h-2.2zM598.15 278.27h2.2v3h-2.2zM594.35 283.18h2.2v3h-2.2zM584.02 254.51h2v2h-2zM578.68 246.59h2v2h-2zM579.42 248.70h2v2h-2zM594.91 277.81h2v2h-2zM581.95 252.39h2v2h-2zM597.11 282.75h2v2h-2zM607.23 235.97h2.2v3h-2.2zM603.73 241.56h2.2v3h-2.2zM612.20 246.26h2.2v3h-2.2zM607.02 248.37h2.2v3h-2.2zM615.89 253.89h2.2v3h-2.2zM611.78 258.22h2.2v3h-2.2zM619.54 261.45h2.2v3h-2.2zM615.59 266.11h2.2v3h-2.2zM623.56 269.79h2.2v3h-2.2zM619.50 274.21h2.2v3h-2.2zM627.83 278.61h2.2v3h-2.2zM624.11 283.76h2.2v3h-2.2zM618.34 267.53h2v2h-2zM604.47 238.04h2v2h-2zM618.88 268.76h2v2h-2zM610.79 251.89h2v2h-2zM622.57 274.15h2v2h-2zM604.94 240.43h2v2h-2zM636.88 234.98h2.2v3h-2.2zM632.50 238.83h2.2v3h-2.2zM641.87 245.56h2.2v3h-2.2zM637.14 248.68h2.2v3h-2.2zM645.89 254.10h2.2v3h-2.2zM641.24 257.39h2.2v3h-2.2zM650.09 263.02h2.2v3h-2.2zM645.43 266.29h2.2v3h-2.2zM653.32 269.88h2.2v3h-2.2zM648.99 273.87h2.2v3h-2.2zM657.92 279.65h2.2v3h-2.2zM653.89 284.26h2.2v3h-2.2zM653.47 279.69h2v2h-2zM647.91 266.10h2v2h-2zM644.62 260.54h2v2h-2zM640.82 250.08h2v2h-2zM653.88 280.44h2v2h-2zM646.29 259.88h2v2h-2zM666.63 235.56h2.2v3h-2.2zM662.71 240.26h2.2v3h-2.2zM671.12 244.81h2.2v3h-2.2zM666.81 248.71h2.2v3h-2.2zM674.75 252.28h2.2v3h-2.2zM670.77 256.84h2.2v3h-2.2zM679.62 262.30h2.2v3h-2.2zM675.69 266.98h2.2v3h-2.2zM682.89 269.04h2.2v3h-2.2zM679.40 274.61h2.2v3h-2.2zM687.90 279.35h2.2v3h-2.2zM682.87 281.76h2.2v3h-2.2zM681.69 275.60h2v2h-2zM677.67 264.67h2v2h-2zM677.55 265.93h2v2h-2zM673.78 256.44h2v2h-2zM674.13 256.70h2v2h-2zM673.94 257.67h2v2h-2zM697.05 236.49h2.2v3h-2.2zM692.58 240.13h2.2v3h-2.2zM700.27 243.26h2.2v3h-2.2zM696.69 248.76h2.2v3h-2.2zM704.79 252.76h2.2v3h-2.2zM701.36 258.57h2.2v3h-2.2zM708.62 260.78h2.2v3h-2.2zM705.37 266.98h2.2v3h-2.2zM713.80 271.66h2.2v3h-2.2zM709.33 275.30h2.2v3h-2.2zM717.70 279.85h2.2v3h-2.2zM712.79 282.56h2.2v3h-2.2zM715.73 282.57h2v2h-2zM716.44 281.40h2v2h-2zM698.45 244.42h2v2h-2zM713.31 280.18h2v2h-2zM702.49 253.10h2v2h-2zM698.63 244.12h2v2h-2zM726.60 236.52h2.2v3h-2.2zM722.12 240.14h2.2v3h-2.2zM731.01 245.82h2.2v3h-2.2zM726.48 249.34h2.2v3h-2.2zM734.77 253.75h2.2v3h-2.2zM731.00 258.88h2.2v3h-2.2zM738.30 261.20h2.2v3h-2.2zM735.26 267.86h2.2v3h-2.2zM743.07 271.26h2.2v3h-2.2zM738.64 274.99h2.2v3h-2.2zM747.40 280.39h2.2v3h-2.2zM742.60 283.35h2.2v3h-2.2zM745.91 283.58h2v2h-2zM732.45 254.00h2v2h-2zM732.51 257.85h2v2h-2zM738.83 271.99h2v2h-2zM741.14 275.57h2v2h-2zM739.31 267.09h2v2h-2zM756.26 235.31h2.2v3h-2.2zM752.12 239.64h2.2v3h-2.2zM759.91 242.96h2.2v3h-2.2zM756.29 248.36h2.2v3h-2.2zM764.37 252.28h2.2v3h-2.2zM759.81 255.72h2.2v3h-2.2zM769.06 262.11h2.2v3h-2.2zM764.06 264.63h2.2v3h-2.2zM772.20 268.70h2.2v3h-2.2zM768.00 272.87h2.2v3h-2.2zM776.93 278.59h2.2v3h-2.2zM773.08 283.51h2.2v3h-2.2zM770.47 272.47h2v2h-2zM757.78 248.34h2v2h-2zM767.90 266.07h2v2h-2zM761.59 252.35h2v2h-2zM764.55 256.70h2v2h-2zM768.93 270.20h2v2h-2zM785.32 234.70h2.2v3h-2.2zM782.22 241.23h2.2v3h-2.2zM790.35 245.28h2.2v3h-2.2zM786.13 249.44h2.2v3h-2.2zM793.51 251.93h2.2v3h-2.2zM790.41 258.45h2.2v3h-2.2zM798.55 262.52h2.2v3h-2.2zM794.06 266.13h2.2v3h-2.2zM802.66 271.18h2.2v3h-2.2zM798.17 274.77h2.2v3h-2.2zM806.15 278.51h2.2v3h-2.2zM801.86 282.53h2.2v3h-2.2zM786.87 247.69h2v2h-2zM791.30 252.52h2v2h-2zM799.59 269.35h2v2h-2zM798.22 270.13h2v2h-2zM795.22 262.74h2v2h-2zM800.70 273.72h2v2h-2zM816.20 236.82h2.2v3h-2.2zM811.43 239.80h2.2v3h-2.2zM820.15 245.06h2.2v3h-2.2zM815.83 249.00h2.2v3h-2.2zM824.29 253.72h2.2v3h-2.2zM819.63 256.94h2.2v3h-2.2zM828.25 261.99h2.2v3h-2.2zM823.92 265.89h2.2v3h-2.2zM831.85 269.52h2.2v3h-2.2zM827.59 273.58h2.2v3h-2.2zM836.36 278.94h2.2v3h-2.2zM831.55 281.84h2.2v3h-2.2zM832.01 278.85h2v2h-2zM812.23 237.76h2v2h-2zM833.02 279.70h2v2h-2zM814.55 243.10h2v2h-2zM814.32 238.44h2v2h-2zM827.51 265.98h2v2h-2zM845.49 235.57h2.2v3h-2.2zM840.93 238.99h2.2v3h-2.2zM848.96 242.81h2.2v3h-2.2zM844.82 247.11h2.2v3h-2.2zM853.89 253.12h2.2v3h-2.2zM849.07 256.00h2.2v3h-2.2zM857.47 260.60h2.2v3h-2.2zM853.46 265.18h2.2v3h-2.2zM861.22 268.45h2.2v3h-2.2zM857.38 273.36h2.2v3h-2.2zM865.67 277.73h2.2v3h-2.2zM862.06 283.16h2.2v3h-2.2zM850.19 253.28h2v2h-2zM864.00 281.00h2v2h-2zM861.84 275.76h2v2h-2zM842.97 237.60h2v2h-2zM853.07 256.46h2v2h-2zM850.87 252.29h2v2h-2zM875.61 237.42h2.2v3h-2.2zM870.65 239.98h2.2v3h-2.2zM878.83 244.04h2.2v3h-2.2zM875.29 249.50h2.2v3h-2.2zM883.30 253.23h2.2v3h-2.2zM878.68 256.48h2.2v3h-2.2zM887.59 262.05h2.2v3h-2.2zM882.76 264.87h2.2v3h-2.2zM891.90 270.90h2.2v3h-2.2zM887.65 274.91h2.2v3h-2.2zM896.02 279.37h2.2v3h-2.2zM891.68 283.20h2.2v3h-2.2zM879.88 253.48h2v2h-2zM882.22 255.26h2v2h-2zM875.35 241.16h2v2h-2zM871.94 238.37h2v2h-2zM879.32 249.25h2v2h-2zM883.06 260.14h2v2h-2zM905.26 236.35h2.2v3h-2.2zM900.32 239.02h2.2v3h-2.2zM908.52 243.25h2.2v3h-2.2zM904.52 247.89h2.2v3h-2.2zM913.28 253.29h2.2v3h-2.2zM909.31 258.01h2.2v3h-2.2zM916.72 260.56h2.2v3h-2.2zM912.58 264.92h2.2v3h-2.2zM920.96 269.51h2.2v3h-2.2zM916.91 274.07h2.2v3h-2.2zM925.42 278.93h2.2v3h-2.2zM920.83 282.34h2.2v3h-2.2zM908.36 251.70h2v2h-2zM924.38 282.12h2v2h-2zM905.64 241.07h2v2h-2zM903.90 241.06h2v2h-2zM924.77 282.53h2v2h-2zM918.11 270.75h2v2h-2zM934.82 236.65h2.2v3h-2.2zM930.27 240.10h2.2v3h-2.2zM938.30 243.89h2.2v3h-2.2zM934.77 249.45h2.2v3h-2.2zM943.22 254.15h2.2v3h-2.2zM938.95 258.17h2.2v3h-2.2zM947.12 262.27h2.2v3h-2.2zM943.17 266.95h2.2v3h-2.2zM951.22 270.79h2.2v3h-2.2zM947.03 274.99h2.2v3h-2.2zM955.06 278.79h2.2v3h-2.2zM950.74 282.72h2.2v3h-2.2zM944.49 266.05h2v2h-2zM941.90 256.38h2v2h-2zM947.98 269.98h2v2h-2zM937.05 248.53h2v2h-2zM942.21 258.03h2v2h-2zM941.35 255.91h2v2h-2zM964.64 236.12h2.2v3h-2.2zM960.12 239.69h2.2v3h-2.2zM968.25 243.78h2.2v3h-2.2zM964.77 249.57h2.2v3h-2.2zM972.12 252.01h2.2v3h-2.2zM968.57 257.64h2.2v3h-2.2zM976.47 261.25h2.2v3h-2.2zM972.78 266.60h2.2v3h-2.2zM980.25 269.30h2.2v3h-2.2zM977.18 275.94h2.2v3h-2.2zM984.66 278.67h2.2v3h-2.2zM980.15 282.26h2.2v3h-2.2zM967.25 249.17h2v2h-2zM961.49 236.82h2v2h-2zM971.40 256.08h2v2h-2zM968.57 252.85h2v2h-2zM967.16 246.81h2v2h-2zM982.44 280.65h2v2h-2zM993.50 235.12h2.2v3h-2.2zM990.24 241.30h2.2v3h-2.2zM997.90 244.40h2.2v3h-2.2zM994.38 250.03h2.2v3h-2.2zM1001.92 252.85h2.2v3h-2.2zM997.91 257.47h2.2v3h-2.2zM1006.02 261.49h2.2v3h-2.2zM1002.09 266.28h2.2v3h-2.2zM1010.06 270.00h2.2v3h-2.2zM1005.69 273.86h2.2v3h-2.2zM1014.84 280.08h2.2v3h-2.2zM1010.16 283.27h2.2v3h-2.2zM996.03 248.51h2v2h-2zM1001.63 259.51h2v2h-2zM1005.83 266.90h2v2h-2zM1000.52 254.02h2v2h-2zM1008.85 277.08h2v2h-2zM1010.81 275.84h2v2h-2zM1023.82 235.88h2.2v3h-2.2zM1019.90 240.61h2.2v3h-2.2zM1028.02 244.62h2.2v3h-2.2zM1024.16 249.49h2.2v3h-2.2zM1032.29 253.50h2.2v3h-2.2zM1028.21 257.93h2.2v3h-2.2zM1035.68 260.57h2.2v3h-2.2zM1032.15 266.13h2.2v3h-2.2zM1040.21 270.01h2.2v3h-2.2zM1036.33 274.84h2.2v3h-2.2zM1044.22 278.35h2.2v3h-2.2zM1040.63 283.78h2.2v3h-2.2zM1032.54 262.25h2v2h-2zM1025.02 247.38h2v2h-2zM1030.54 259.38h2v2h-2zM1030.22 258.17h2v2h-2zM1031.82 259.30h2v2h-2zM1033.99 261.53h2v2h-2zM1053.40 236.00h2.2v3h-2.2zM1049.77 241.40h2.2v3h-2.2zM1056.96 243.48h2.2v3h-2.2zM1053.67 249.58h2.2v3h-2.2zM1061.81 253.67h2.2v3h-2.2zM1057.32 257.25h2.2v3h-2.2zM1066.22 262.94h2.2v3h-2.2zM1061.47 265.98h2.2v3h-2.2zM1069.87 270.58h2.2v3h-2.2zM1065.79 275.04h2.2v3h-2.2zM1074.35 280.00h2.2v3h-2.2zM1069.52 282.88h2.2v3h-2.2zM1060.07 257.31h2v2h-2zM1063.93 262.86h2v2h-2zM1058.12 250.66h2v2h-2zM1059.62 255.84h2v2h-2zM1056.69 249.67h2v2h-2zM1072.78 282.53h2v2h-2zM1083.65 236.15h2.2v3h-2.2zM1079.14 239.71h2.2v3h-2.2zM1087.41 244.07h2.2v3h-2.2zM1083.28 248.43h2.2v3h-2.2zM1091.63 252.96h2.2v3h-2.2zM1087.36 257.04h2.2v3h-2.2zM1095.73 261.60h2.2v3h-2.2zM1091.01 264.72h2.2v3h-2.2zM1099.83 270.24h2.2v3h-2.2zM1095.43 274.04h2.2v3h-2.2zM1104.07 279.18h2.2v3h-2.2zM1099.11 281.79h2.2v3h-2.2zM1082.99 244.51h2v2h-2zM1098.82 272.33h2v2h-2zM1094.54 266.76h2v2h-2zM1099.51 274.58h2v2h-2zM1092.13 262.37h2v2h-2zM1086.83 250.18h2v2h-2zM1112.37 234.65h2.2v3h-2.2zM1108.91 240.41h2.2v3h-2.2zM1116.63 243.63h2.2v3h-2.2zM1112.42 247.82h2.2v3h-2.2zM1120.51 251.80h2.2v3h-2.2zM1116.36 256.12h2.2v3h-2.2zM1125.46 262.23h2.2v3h-2.2zM1120.62 265.11h2.2v3h-2.2zM1129.93 271.66h2.2v3h-2.2zM1124.70 273.71h2.2v3h-2.2zM1133.93 280.09h2.2v3h-2.2zM1128.87 282.51h2.2v3h-2.2zM1111.13 237.46h2v2h-2zM1116.16 247.99h2v2h-2zM1112.89 245.42h2v2h-2zM1127.94 272.94h2v2h-2zM1129.80 276.76h2v2h-2zM1112.33 240.58h2v2h-2zM1142.52 235.21h2.2v3h-2.2zM1138.67 240.25h2.2v3h-2.2zM1146.27 243.25h2.2v3h-2.2zM1142.94 249.38h2.2v3h-2.2zM1150.67 252.65h2.2v3h-2.2zM1146.87 257.80h2.2v3h-2.2zM1155.12 262.17h2.2v3h-2.2zM1150.71 266.02h2.2v3h-2.2zM1158.93 270.34h2.2v3h-2.2zM1155.29 275.81h2.2v3h-2.2zM1163.75 280.64h2.2v3h-2.2zM1159.41 284.63h2.2v3h-2.2zM1151.79 263.30h2v2h-2zM1142.57 239.20h2v2h-2zM1156.43 269.80h2v2h-2zM1147.50 252.12h2v2h-2zM1162.54 282.86h2v2h-2zM1152.60 264.94h2v2h-2zM1172.04 235.85h2.2v3h-2.2zM1168.61 241.51h2.2v3h-2.2zM1176.82 245.60h2.2v3h-2.2zM1172.53 249.50h2.2v3h-2.2zM1181.07 254.28h2.2v3h-2.2zM1176.23 257.06h2.2v3h-2.2zM1184.17 260.60h2.2v3h-2.2zM1180.61 265.99h2.2v3h-2.2zM1189.17 270.80h2.2v3h-2.2zM1184.29 273.50h2.2v3h-2.2zM1193.23 279.09h2.2v3h-2.2zM1189.32 283.75h2.2v3h-2.2zM1175.05 247.97h2v2h-2zM1184.50 268.11h2v2h-2zM1173.39 246.72h2v2h-2zM1187.11 271.45h2v2h-2zM1178.52 258.21h2v2h-2zM1188.29 273.96h2v2h-2zM1201.56 234.69h2.2v3h-2.2zM1198.07 240.39h2.2v3h-2.2zM1206.52 245.12h2.2v3h-2.2zM1201.60 247.81h2.2v3h-2.2zM1210.41 253.29h2.2v3h-2.2zM1205.96 256.97h2.2v3h-2.2zM1214.43 261.75h2.2v3h-2.2zM1209.68 264.79h2.2v3h-2.2zM1217.95 269.15h2.2v3h-2.2zM1215.00 275.97h2.2v3h-2.2zM1223.10 279.98h2.2v3h-2.2zM1218.49 283.33h2.2v3h-2.2zM1211.16 263.18h2v2h-2zM1216.37 273.10h2v2h-2zM1221.11 280.93h2v2h-2zM1218.86 274.95h2v2h-2zM1203.52 248.53h2v2h-2zM1202.77 246.05h2v2h-2zM1231.35 235.08h2.2v3h-2.2zM1228.21 241.50h2.2v3h-2.2zM1236.50 245.90h2.2v3h-2.2zM1231.41 248.22h2.2v3h-2.2zM1239.44 252.08h2.2v3h-2.2zM1235.57 256.97h2.2v3h-2.2zM1243.95 261.54h2.2v3h-2.2zM1240.49 267.30h2.2v3h-2.2zM1248.75 271.63h2.2v3h-2.2zM1244.53 275.78h2.2v3h-2.2zM1251.82 278.06h2.2v3h-2.2zM1248.59 284.31h2.2v3h-2.2zM1245.21 270.06h2v2h-2zM1249.57 282.95h2v2h-2zM1232.96 243.67h2v2h-2zM1250.41 280.80h2v2h-2zM1235.90 250.86h2v2h-2zM1244.66 272.32h2v2h-2zM1261.00 234.39h2.2v3h-2.2zM1257.89 241.01h2.2v3h-2.2zM1266.04 245.19h2.2v3h-2.2zM1261.64 249.03h2.2v3h-2.2zM1269.68 252.98h2.2v3h-2.2zM1265.40 257.09h2.2v3h-2.2zM1274.26 262.78h2.2v3h-2.2zM1269.69 266.28h2.2v3h-2.2zM1278.14 271.09h2.2v3h-2.2zM1273.40 274.22h2.2v3h-2.2zM1281.76 278.84h2.2v3h-2.2zM1277.41 282.82h2.2v3h-2.2zM1274.75 270.41h2v2h-2zM1263.03 243.30h2v2h-2zM1264.37 249.09h2v2h-2zM1261.48 243.82h2v2h-2zM1276.89 276.40h2v2h-2zM1262.41 244.40h2v2h-2zM1290.68 235.50h2.2v3h-2.2zM1287.36 241.55h2.2v3h-2.2zM1295.09 244.74h2.2v3h-2.2zM1291.80 250.84h2.2v3h-2.2zM1298.87 252.66h2.2v3h-2.2zM1295.70 259.03h2.2v3h-2.2zM1303.39 262.14h2.2v3h-2.2zM1299.00 265.94h2.2v3h-2.2zM1307.09 269.90h2.2v3h-2.2zM1303.98 276.36h2.2v3h-2.2zM1311.86 279.89h2.2v3h-2.2zM1307.30 283.32h2.2v3h-2.2zM1299.35 257.87h2v2h-2zM1293.50 247.75h2v2h-2zM1290.54 244.01h2v2h-2zM1306.21 273.50h2v2h-2zM1291.54 246.75h2v2h-2zM1290.70 241.65h2v2h-2zM1321.46 237.37h2.2v3h-2.2zM1316.78 240.52h2.2v3h-2.2zM1325.53 245.78h2.2v3h-2.2zM1320.64 248.49h2.2v3h-2.2zM1328.80 252.54h2.2v3h-2.2zM1325.46 258.44h2.2v3h-2.2zM1333.15 261.50h2.2v3h-2.2zM1328.76 265.24h2.2v3h-2.2zM1337.27 270.02h2.2v3h-2.2zM1333.41 274.85h2.2v3h-2.2zM1340.94 277.59h2.2v3h-2.2zM1337.44 283.16h2.2v3h-2.2zM1328.12 257.73h2v2h-2zM1321.49 242.80h2v2h-2zM1337.42 274.76h2v2h-2zM1325.93 251.99h2v2h-2zM1327.40 254.77h2v2h-2zM1320.63 240.06h2v2h-2zM1350.70 235.31h2.2v3h-2.2zM1346.79 240.18h2.2v3h-2.2zM1354.30 243.00h2.2v3h-2.2zM1351.11 249.42h2.2v3h-2.2zM1359.18 253.41h2.2v3h-2.2zM1354.21 256.04h2.2v3h-2.2zM1362.57 260.64h2.2v3h-2.2zM1358.89 266.01h2.2v3h-2.2zM1367.16 270.43h2.2v3h-2.2zM1362.75 274.24h2.2v3h-2.2zM1370.81 278.23h2.2v3h-2.2zM1367.02 283.37h2.2v3h-2.2zM1351.20 242.70h2v2h-2zM1365.98 277.08h2v2h-2zM1361.37 263.40h2v2h-2zM1352.52 244.00h2v2h-2zM1368.41 280.72h2v2h-2zM1358.26 256.16h2v2h-2z" fill="#0b4a0b" fill-opacity="0.6"/>
<path d="M27 675.7h2V683.4h-2zM27 666.6h1V676.7h-1zM28 666.9h1V674.4h-1zM29 658.8h2V667.4h-2zM29 666.4h1V676.9h-1zM30 675.1h1V680.2h-1zM30 669.6h1V676.1h-1zM31 668.7h1V678.2h-1zM32 673.0h1V680.9h-1zM33 673.3h1V681.9h-1zM34 675.9h1V684.3h-1zM35 682.2h1V687.5h-1zM35 673.2h1V683.2h-1zM36 669.1h1V675.7h-1zM36 674.7h1V684.1h-1zM37 670.2h1V682.9h-1zM38 670.4h1V678.0h-1zM39 669.5h1V678.3h-1zM40 660.0h2V668.7h-2zM40 667.7h1V676.5h-1zM41 666.1h1V674.6h-1zM42 664.9h1V671.3h-1zM43 669.6h2V674.8h-2zM43 662.4h1V670.6h-1zM44 660.2h1V670.1h-1zM45 660.4h1V669.1h-1zM46 662.9h1V669.6h-1zM47 661.0h1V670.9h-1zM48 660.3h1V670.1h-1zM49 661.5h1V671.7h-1zM50 654.1h2V662.0h-2zM50 661.0h1V669.4h-1zM51 661.8h1V670.2h-1zM52 661.5h1V670.0h-1zM53 662.7h1V669.3h-1zM54 659.2h1V662.4h-1zM54 661.4h1V670.2h-1zM55 661.8h1V670.5h-1zM56 662.5h1V671.2h-1zM57 666.4h1V673.1h-1zM58 668.7h1V675.9h-1zM59 667.4h1V677.2h-1zM60 670.7h1V678.4h-1zM61 671.7h1V679.8h-1zM62 668.4h2V674.7h-2zM62 673.7h1V680.7h-1zM63 671.9h1V676.5h-1zM63 675.5h1V682.4h-1zM64 676.0h1V684.2h-1zM65 675.1h1V682.1h-1zM66 672.7h1V680.7h-1zM67 671.6h1V678.3h-1zM68 669.4h1V676.9h-1zM69 665.7h2V669.3h-2zM69 668.3h1V676.3h-1zM70 667.0h1V675.5h-1zM71 667.2h1V674.5h-1zM72 671.5h1V676.4h-1zM72 663.4h1V672.5h-1zM73 656.6h1V663.0h-1zM73 662.0h1V671.6h-1zM74 661.5h1V669.5h-1zM75 661.7h1V671.3h-1zM76 666.7h2V675.0h-2zM76 661.0h1V667.7h-1zM77 661.3h1V669.6h-1zM78 661.2h1V671.1h-1zM79 667.3h2V671.5h-2zM79 659.2h1V668.3h-1zM80 661.6h1V668.3h-1zM81 668.8h2V672.8h-2zM81 661.3h1V669.8h-1zM82 668.6h1V675.5h-1zM82 660.7h1V669.6h-1zM83 658.7h2V661.8h-2zM83 660.8h1V668.3h-1zM84 656.8h2V662.4h-2zM84 661.4h1V669.7h-1zM85 670.2h2V674.0h-2zM85 661.7h1V671.2h-1zM86 659.5h2V666.2h-2zM86 665.2h1V673.3h-1zM87 672.9h1V682.6h-1zM87 667.0h1V673.9h-1zM88 674.6h1V682.1h-1zM88 666.0h1V675.6h-1zM89 662.4h2V670.8h-2zM89 669.8h1V677.4h-1zM90 667.2h1V671.1h-1zM90 670.1h1V679.3h-1zM91 672.5h1V679.1h-1zM92 674.4h1V681.3h-1zM93 671.1h2V677.5h-2zM93 676.5h1V683.2h-1zM94 673.6h1V684.0h-1zM95 673.8h1V682.4h-1zM96 671.6h1V680.4h-1zM97 671.1h1V679.8h-1zM98 670.0h1V677.4h-1zM99 675.1h2V679.7h-2zM99 668.0h1V676.1h-1zM100 663.9h1V674.0h-1zM101 664.7h1V673.0h-1zM102 670.8h2V679.2h-2zM102 660.7h1V671.8h-1zM103 663.6h1V671.1h-1zM104 658.6h1V669.1h-1zM105 668.3h1V673.9h-1zM105 660.8h1V669.3h-1zM106 661.7h1V669.8h-1zM107 661.0h1V668.7h-1zM108 662.0h1V669.4h-1zM109 669.7h2V672.8h-2zM109 661.3h1V670.7h-1zM110 654.8h1V661.5h-1zM110 660.5h1V670.5h-1zM111 656.4h2V662.6h-2zM111 661.6h1V670.4h-1zM112 669.1h2V674.8h-2zM112 660.7h1V670.1h-1zM113 655.8h1V663.2h-1zM113 662.2h1V672.9h-1zM114 662.8h1V671.8h-1zM115 664.7h1V671.7h-1zM116 664.3h1V675.6h-1zM117 674.7h2V682.4h-2zM117 666.9h1V675.7h-1zM118 664.3h1V667.3h-1zM118 666.3h1V679.1h-1zM119 678.0h2V681.5h-2zM119 670.5h1V679.0h-1zM120 669.0h1V681.2h-1zM121 672.8h1V681.5h-1zM122 676.0h1V682.8h-1zM123 669.7h1V677.5h-1zM123 676.5h1V684.1h-1zM124 673.5h1V683.4h-1zM125 682.8h2V691.4h-2zM125 675.3h1V683.8h-1zM126 670.9h1V678.7h-1zM127 670.2h1V679.5h-1zM128 667.8h1V677.4h-1zM129 676.0h2V684.7h-2zM129 668.2h1V677.0h-1zM130 666.0h1V674.8h-1zM131 665.7h1V674.2h-1zM132 657.4h1V663.7h-1zM132 662.7h1V671.6h-1zM133 662.1h1V670.7h-1zM134 660.8h1V671.0h-1zM135 661.8h1V671.5h-1zM136 660.0h1V670.8h-1zM137 660.7h1V668.7h-1zM138 654.7h2V663.5h-2zM138 662.5h1V671.0h-1zM139 661.9h1V669.8h-1zM140 658.7h2V662.8h-2zM140 661.8h1V671.4h-1zM141 660.6h1V670.3h-1zM142 661.7h1V669.8h-1zM143 656.4h1V662.8h-1zM143 661.8h1V668.7h-1zM144 663.1h1V670.3h-1zM145 663.4h1V672.7h-1zM146 665.2h1V672.9h-1zM147 667.1h1V674.8h-1zM148 667.2h1V675.8h-1zM149 677.8h2V683.5h-2zM149 672.0h1V678.8h-1zM150 678.2h2V686.1h-2zM150 670.0h1V679.2h-1zM151 667.0h2V674.1h-2zM151 673.1h1V681.9h-1zM152 672.0h1V680.7h-1zM153 669.7h2V676.4h-2zM153 675.4h1V685.0h-1zM154 682.7h2V691.7h-2zM154 675.1h1V683.7h-1zM155 679.9h1V688.5h-1zM155 674.6h1V680.9h-1zM156 670.0h1V678.8h-1zM157 677.7h1V683.2h-1zM157 669.4h1V678.7h-1zM158 676.2h2V684.1h-2zM158 669.3h1V677.2h-1zM159 667.4h1V675.0h-1zM160 663.8h2V667.1h-2zM160 666.1h1V674.3h-1zM161 662.6h1V673.5h-1zM162 659.3h2V664.6h-2zM162 663.6h1V671.8h-1zM163 661.9h1V670.9h-1zM164 658.1h2V663.3h-2zM164 662.3h1V670.4h-1zM165 661.9h1V671.4h-1zM166 661.3h1V668.7h-1zM167 660.0h1V667.4h-1zM168 662.8h1V669.3h-1zM169 661.7h1V670.3h-1zM170 659.2h2V663.4h-2zM170 662.4h1V672.6h-1zM171 662.2h1V669.8h-1zM172 661.9h1V669.6h-1zM173 661.2h1V671.5h-1zM174 669.2h1V675.0h-1zM174 663.3h1V670.2h-1zM175 664.5h1V672.5h-1zM176 664.2h1V672.4h-1zM177 665.9h1V677.7h-1zM178 668.5h1V675.7h-1zM179 670.8h1V678.6h-1zM180 663.7h1V671.7h-1zM180 670.7h1V681.7h-1zM181 673.7h1V681.4h-1zM182 671.1h2V675.4h-2zM182 674.4h1V682.1h-1zM183 667.2h1V676.2h-1zM183 675.2h1V684.5h-1zM184 676.4h1V684.3h-1zM185 679.1h1V686.1h-1zM185 672.1h1V680.1h-1zM186 670.5h1V681.7h-1zM187 677.1h1V685.2h-1zM187 668.3h1V678.1h-1zM188 664.5h1V670.0h-1zM188 669.0h1V677.5h-1zM189 674.5h2V679.7h-2zM189 666.8h1V675.5h-1zM190 667.2h1V675.0h-1zM191 665.3h1V672.9h-1zM192 655.5h1V661.5h-1zM192 660.5h1V669.9h-1zM193 661.8h1V668.9h-1zM194 668.8h1V677.5h-1zM194 660.9h1V669.8h-1zM195 654.6h2V661.1h-2zM195 660.1h1V669.4h-1zM196 662.0h1V669.7h-1zM197 652.8h1V660.6h-1zM197 659.6h1V670.0h-1zM198 660.7h1V668.3h-1zM199 663.0h1V670.1h-1zM200 659.6h1V669.2h-1zM201 660.6h1V670.0h-1zM202 670.1h2V677.0h-2zM202 662.0h1V671.1h-1zM203 663.2h1V670.5h-1zM204 662.9h1V670.5h-1zM205 661.2h2V666.8h-2zM205 665.8h1V672.4h-1zM206 665.5h1V675.8h-1zM207 662.7h1V667.9h-1zM207 666.9h1V676.1h-1zM208 668.4h1V676.5h-1zM209 672.0h1V679.7h-1zM210 672.4h1V680.1h-1zM211 669.8h2V676.8h-2zM211 675.8h1V682.3h-1zM212 674.0h1V683.3h-1zM213 671.0h1V677.4h-1zM213 676.4h1V686.2h-1zM214 673.0h1V683.6h-1zM215 673.3h1V681.3h-1zM216 671.8h1V678.4h-1zM217 668.5h1V677.4h-1zM218 665.4h1V669.4h-1zM218 668.4h1V676.3h-1zM219 676.2h2V685.4h-2zM219 665.8h1V677.2h-1zM220 663.8h1V673.2h-1zM221 662.4h2V665.6h-2zM221 664.6h1V673.3h-1zM222 663.0h1V670.0h-1zM223 662.0h1V669.1h-1zM224 655.8h1V663.3h-1zM224 662.3h1V669.7h-1zM225 657.4h2V662.8h-2zM225 661.8h1V669.2h-1zM226 667.8h1V674.5h-1zM226 660.8h1V668.8h-1zM227 661.8h1V670.4h-1zM228 669.0h1V673.1h-1zM228 661.1h1V670.0h-1zM229 661.9h1V670.5h-1zM230 654.9h2V661.6h-2zM230 660.6h1V668.5h-1zM231 669.5h1V675.7h-1zM231 659.9h1V670.5h-1zM232 661.2h1V669.6h-1zM233 663.0h1V672.9h-1zM234 663.4h1V674.4h-1zM235 674.3h1V681.4h-1zM235 665.4h1V675.3h-1zM236 668.4h1V678.1h-1zM237 669.1h1V677.1h-1zM238 677.8h1V681.3h-1zM238 670.6h1V678.8h-1zM239 670.0h1V678.8h-1zM240 671.1h1V680.6h-1zM241 680.5h2V690.4h-2zM241 673.1h1V681.5h-1zM242 675.6h1V686.3h-1zM243 681.1h2V687.4h-2zM243 672.9h1V682.1h-1zM244 680.5h2V688.1h-2zM244 673.0h1V681.5h-1zM245 671.0h1V680.2h-1zM246 666.3h1V672.1h-1zM246 671.1h1V679.3h-1zM247 667.8h1V678.2h-1zM248 668.3h1V675.4h-1zM249 666.9h1V676.3h-1zM250 672.3h2V680.2h-2zM250 663.9h1V673.3h-1zM251 669.7h2V676.6h-2zM251 663.8h1V670.7h-1zM252 664.5h1V672.3h-1zM253 655.4h2V660.0h-2zM253 659.0h1V669.7h-1zM254 661.4h1V668.8h-1zM255 662.4h1V669.8h-1zM256 661.2h1V668.1h-1zM257 662.1h1V669.9h-1zM258 660.6h1V667.8h-1zM259 659.3h1V668.8h-1zM260 668.0h1V671.5h-1zM260 660.9h1V669.0h-1zM261 661.4h1V669.6h-1zM262 660.9h1V671.1h-1zM263 670.2h1V675.0h-1zM263 663.6h1V671.2h-1zM264 663.5h1V672.0h-1zM265 672.0h2V681.5h-2zM265 665.4h1V673.0h-1zM266 667.4h1V674.5h-1zM267 666.8h1V674.9h-1zM268 667.0h1V671.3h-1zM268 670.3h1V681.6h-1zM269 680.6h2V688.9h-2zM269 671.4h1V681.6h-1zM270 679.7h1V687.3h-1zM270 673.2h1V680.7h-1zM271 669.4h1V676.8h-1zM271 675.8h1V683.6h-1zM272 683.3h2V691.1h-2zM272 677.1h1V684.3h-1zM273 683.0h1V691.6h-1zM273 672.7h1V684.0h-1zM274 673.8h1V680.9h-1zM275 678.8h1V685.8h-1zM275 672.9h1V679.8h-1zM276 670.4h1V677.7h-1zM277 661.1h1V669.6h-1zM277 668.6h1V677.1h-1zM278 666.8h1V676.6h-1zM279 662.0h2V667.9h-2zM279 666.9h1V674.4h-1zM280 661.5h1V671.4h-1zM281 657.4h1V663.3h-1zM281 662.3h1V670.2h-1zM282 668.9h2V673.4h-2zM282 662.4h1V669.9h-1zM283 655.7h2V662.7h-2zM283 661.7h1V669.4h-1zM284 659.4h1V667.8h-1zM285 660.1h2V664.0h-2zM285 663.0h1V669.9h-1zM286 660.2h1V669.4h-1zM287 660.2h1V668.2h-1zM288 659.0h2V663.4h-2zM288 662.4h1V671.8h-1zM289 661.3h1V668.8h-1zM290 661.1h1V668.4h-1zM291 659.6h1V670.2h-1zM292 671.3h2V675.4h-2zM292 664.1h1V672.3h-1zM293 664.2h1V670.8h-1zM294 664.5h1V674.8h-1zM295 657.5h1V665.7h-1zM295 664.7h1V675.2h-1zM296 667.6h1V676.2h-1zM297 669.1h1V677.8h-1zM298 670.8h1V679.1h-1zM299 667.2h2V672.2h-2zM299 671.2h1V679.9h-1zM300 673.2h1V680.7h-1zM301 676.9h1V684.1h-1zM302 668.8h1V677.1h-1zM302 676.1h1V686.7h-1zM303 680.4h2V688.3h-2zM303 674.1h1V681.4h-1zM304 670.5h1V679.8h-1zM305 678.0h1V685.2h-1zM305 672.4h1V679.0h-1zM306 668.8h1V677.1h-1zM307 669.0h1V675.5h-1zM308 662.1h2V665.6h-2zM308 664.6h1V676.0h-1zM309 656.3h1V663.5h-1zM309 662.5h1V671.8h-1zM310 664.5h1V671.7h-1zM311 660.0h2V663.6h-2zM311 662.6h1V670.6h-1zM312 657.0h2V663.4h-2zM312 662.4h1V669.9h-1zM313 668.3h1V671.5h-1zM313 660.6h1V669.3h-1zM314 660.9h1V670.4h-1zM315 669.4h2V675.2h-2zM315 662.2h1V670.4h-1zM316 669.0h1V673.1h-1zM316 662.2h1V670.0h-1zM317 659.5h1V668.7h-1zM318 659.9h1V669.0h-1zM319 660.5h1V668.9h-1zM320 656.0h2V659.8h-2zM320 658.8h1V668.2h-1zM321 662.0h1V670.2h-1zM322 661.5h1V670.8h-1zM323 663.2h1V671.5h-1zM324 664.8h1V672.7h-1zM325 674.4h1V681.7h-1zM325 667.7h1V675.4h-1zM326 674.2h2V677.9h-2zM326 668.1h1V675.2h-1zM327 668.6h1V677.4h-1zM328 663.8h1V671.9h-1zM328 670.9h1V680.1h-1zM329 680.8h2V685.9h-2zM329 673.6h1V681.8h-1zM330 673.7h1V680.3h-1zM331 685.2h1V693.9h-1zM331 675.1h1V686.2h-1zM332 676.6h1V683.9h-1zM333 673.2h1V684.2h-1zM334 671.0h1V681.2h-1zM335 670.3h1V678.6h-1zM336 663.2h2V670.0h-2zM336 669.0h1V677.7h-1zM337 668.1h1V676.2h-1zM338 663.6h1V677.2h-1zM339 665.0h1V675.5h-1zM340 657.7h1V663.3h-1zM340 662.3h1V670.8h-1zM341 662.8h1V671.0h-1zM342 661.9h1V668.9h-1zM343 661.1h1V670.5h-1zM344 661.2h1V671.7h-1zM345 662.1h1V671.8h-1zM346 661.6h1V668.9h-1zM347 661.2h1V670.1h-1zM348 661.5h1V671.3h-1zM349 662.2h1V671.0h-1zM350 661.4h1V668.3h-1zM351 661.7h1V670.8h-1zM352 663.6h1V673.2h-1zM353 670.5h2V676.9h-2zM353 664.4h1V671.5h-1zM354 665.2h1V672.6h-1zM355 663.5h1V674.6h-1zM356 667.9h1V678.3h-1zM357 676.2h1V685.8h-1zM357 667.2h1V677.2h-1zM358 672.2h1V680.9h-1zM359 672.5h1V681.9h-1zM360 674.5h1V685.2h-1zM361 676.7h1V685.2h-1zM362 681.0h2V685.1h-2zM362 674.3h1V682.0h-1zM363 671.9h2V675.6h-2zM363 674.6h1V682.5h-1zM364 669.4h1V680.7h-1zM365 670.6h1V680.5h-1zM366 676.2h1V679.9h-1zM366 670.4h1V677.2h-1zM367 664.0h1V676.3h-1zM368 663.6h1V675.4h-1zM369 663.3h1V673.0h-1zM370 657.0h2V664.0h-2zM370 663.0h1V670.9h-1zM371 662.1h1V668.8h-1zM372 661.2h1V669.4h-1zM373 670.9h2V675.2h-2zM373 660.5h1V671.9h-1zM374 659.5h1V671.8h-1zM375 660.3h1V671.7h-1zM376 660.4h1V670.2h-1zM377 668.0h1V675.2h-1zM377 662.4h1V669.0h-1zM378 654.8h2V662.8h-2zM378 661.8h1V670.4h-1zM379 660.9h1V670.7h-1zM380 661.6h1V669.6h-1zM381 662.0h1V671.8h-1zM382 662.5h1V670.4h-1zM383 671.2h1V680.9h-1zM383 663.6h1V672.2h-1zM384 666.5h1V673.7h-1zM385 665.3h1V677.7h-1zM386 668.1h1V676.2h-1zM387 676.9h1V683.8h-1zM387 669.3h1V677.9h-1zM388 669.2h1V679.5h-1zM389 667.8h1V673.8h-1zM389 672.8h1V681.4h-1zM390 676.1h1V683.8h-1zM391 674.1h1V684.3h-1zM392 681.0h1V688.9h-1zM392 674.5h1V682.0h-1zM393 681.3h1V689.1h-1zM393 674.0h1V682.3h-1zM394 670.9h1V678.7h-1zM395 668.9h1V678.2h-1zM396 676.1h1V681.0h-1zM396 669.4h1V677.1h-1zM397 668.3h1V675.0h-1zM398 664.7h1V672.6h-1zM399 662.9h1V671.9h-1zM400 661.4h1V665.4h-1zM400 664.4h1V671.8h-1zM401 669.3h1V674.0h-1zM401 662.6h1V670.3h-1zM402 661.3h1V669.7h-1zM403 668.6h1V673.4h-1zM403 661.1h1V669.6h-1zM404 660.8h1V668.8h-1zM405 660.9h1V670.4h-1zM406 661.3h1V668.7h-1zM407 668.9h1V674.9h-1zM407 661.8h1V669.9h-1zM408 660.5h1V667.8h-1zM409 668.5h2V674.4h-2zM409 663.0h1V669.5h-1zM410 669.0h1V674.7h-1zM410 662.5h1V670.0h-1zM411 663.2h1V670.8h-1zM412 657.0h1V663.5h-1zM412 662.5h1V671.6h-1zM413 665.4h1V674.3h-1zM414 667.2h1V674.8h-1zM415 665.4h1V675.1h-1zM416 667.2h2V670.7h-2zM416 669.7h1V676.1h-1zM417 668.6h1V676.8h-1zM418 670.9h1V679.0h-1zM419 671.0h2V675.6h-2zM419 674.6h1V682.9h-1zM420 675.9h1V685.9h-1zM421 677.1h1V684.5h-1zM422 674.9h1V683.1h-1zM423 672.1h1V681.6h-1zM424 679.2h1V684.6h-1zM424 669.8h1V680.2h-1zM425 662.6h1V671.0h-1zM425 670.0h1V677.9h-1zM426 679.3h1V684.8h-1zM426 668.8h1V680.3h-1zM427 662.7h2V668.7h-2zM427 667.7h1V675.6h-1zM428 662.0h1V672.9h-1zM429 670.9h1V678.0h-1zM429 663.5h1V671.9h-1zM430 670.7h2V677.8h-2zM430 661.9h1V671.7h-1zM431 655.5h1V661.1h-1zM431 660.1h1V669.7h-1zM432 661.2h1V669.4h-1zM433 660.5h1V669.2h-1zM434 661.4h1V669.8h-1zM435 662.6h1V673.0h-1zM436 661.7h1V668.6h-1zM437 660.0h1V667.9h-1zM438 670.0h2V675.5h-2zM438 662.5h1V671.0h-1zM439 658.9h2V662.7h-2zM439 661.7h1V669.9h-1zM440 662.3h1V668.6h-1zM441 662.6h1V670.0h-1zM442 663.4h1V671.5h-1zM443 665.7h1V672.5h-1zM444 675.7h1V683.7h-1zM444 666.3h1V676.7h-1zM445 667.9h1V677.6h-1zM446 668.0h1V677.5h-1zM447 672.0h1V679.9h-1zM448 671.7h1V681.6h-1zM449 674.4h1V681.4h-1zM450 677.1h1V683.7h-1zM451 673.7h1V683.1h-1zM452 682.5h1V692.1h-1zM452 674.1h1V683.5h-1zM453 671.2h1V680.7h-1zM454 666.4h2V671.8h-2zM454 670.8h1V679.2h-1zM455 669.9h1V676.2h-1zM456 667.2h1V675.8h-1zM457 666.0h1V672.8h-1zM458 664.2h1V672.8h-1zM459 664.0h1V671.3h-1zM460 662.1h1V672.0h-1zM461 667.9h1V673.2h-1zM461 660.7h1V668.9h-1zM462 660.1h1V669.7h-1zM463 660.5h1V671.5h-1zM464 660.9h1V670.9h-1zM465 661.5h1V671.1h-1zM466 659.0h1V663.1h-1zM466 662.1h1V671.9h-1zM467 661.1h1V670.0h-1zM468 660.7h1V670.4h-1zM469 661.0h1V669.9h-1zM470 663.4h1V671.9h-1zM471 670.3h1V680.2h-1zM471 663.4h1V671.3h-1zM472 658.3h2V665.1h-2zM472 664.1h1V672.5h-1zM473 664.7h1V672.6h-1zM474 674.8h1V678.7h-1zM474 667.4h1V675.8h-1zM475 667.3h1V675.6h-1zM476 668.6h1V678.0h-1zM477 667.6h1V672.9h-1zM477 671.9h1V680.8h-1zM478 672.2h1V680.5h-1zM479 674.8h1V683.3h-1zM480 670.7h2V677.6h-2zM480 676.6h1V683.2h-1zM481 675.3h1V684.6h-1zM482 674.5h1V681.2h-1zM483 678.2h1V683.4h-1zM483 672.3h1V679.2h-1zM484 676.3h1V685.4h-1zM484 668.4h1V677.3h-1zM485 674.2h2V677.4h-2zM485 667.5h1V675.2h-1zM486 663.8h2V668.8h-2zM486 667.8h1V676.6h-1zM487 665.2h1V673.4h-1zM488 662.3h1V672.2h-1zM489 664.5h1V671.3h-1zM490 661.6h1V669.5h-1zM491 659.6h1V668.7h-1zM492 661.0h1V668.6h-1zM493 663.0h1V671.5h-1zM494 659.7h1V669.6h-1zM495 658.2h1V667.7h-1zM496 660.4h1V668.6h-1zM497 658.9h1V664.3h-1zM497 663.3h1V671.1h-1zM498 656.9h1V662.4h-1zM498 661.4h1V669.6h-1zM499 654.4h1V662.7h-1zM499 661.7h1V669.4h-1zM500 662.4h1V671.6h-1zM501 662.7h1V671.2h-1zM502 664.1h1V674.0h-1zM503 672.8h2V682.3h-2zM503 667.1h1V673.8h-1zM504 659.7h1V667.6h-1zM504 666.6h1V674.2h-1zM505 667.9h1V676.8h-1zM506 671.7h1V678.6h-1zM507 665.5h1V672.1h-1zM507 671.1h1V680.0h-1zM508 681.3h2V685.7h-2zM508 673.6h1V682.3h-1zM509 674.5h1V684.8h-1zM510 675.1h1V683.9h-1zM511 675.3h1V682.9h-1zM512 670.7h1V679.9h-1zM513 670.2h1V679.3h-1zM514 664.1h2V670.4h-2zM514 669.4h1V678.4h-1zM515 669.7h1V678.5h-1zM516 666.2h1V674.0h-1zM517 672.4h2V681.3h-2zM517 665.3h1V673.4h-1zM518 661.1h1V665.6h-1zM518 664.6h1V673.1h-1zM519 655.7h2V663.5h-2zM519 662.5h1V670.9h-1zM520 668.5h1V672.6h-1zM520 660.0h1V669.5h-1zM521 658.4h1V662.7h-1zM521 661.7h1V668.9h-1zM522 653.1h1V660.7h-1zM522 659.7h1V669.9h-1zM523 662.3h1V670.1h-1zM524 660.6h1V667.8h-1zM525 667.9h1V676.1h-1zM525 661.6h1V668.9h-1zM526 660.8h1V668.0h-1zM527 662.1h1V670.5h-1zM528 668.1h2V676.1h-2zM528 661.3h1V669.1h-1zM529 658.2h2V663.2h-2zM529 662.2h1V669.9h-1zM530 661.2h1V672.2h-1zM531 663.4h1V672.2h-1zM532 664.9h1V672.8h-1zM533 673.7h1V678.7h-1zM533 664.7h1V674.7h-1zM534 658.6h2V665.4h-2zM534 664.4h1V675.0h-1zM535 669.2h1V677.2h-1zM536 666.7h1V671.6h-1zM536 670.6h1V679.8h-1zM537 671.8h1V679.5h-1zM538 674.0h1V682.9h-1zM539 677.1h1V687.7h-1zM540 670.3h2V678.0h-2zM540 677.0h1V687.0h-1zM541 680.1h1V685.8h-1zM541 674.5h1V681.1h-1zM542 672.2h1V680.2h-1zM543 671.2h1V678.7h-1zM544 666.6h1V677.0h-1zM545 674.5h1V682.0h-1zM545 668.3h1V675.5h-1zM546 667.9h1V674.4h-1zM547 665.1h1V671.5h-1zM548 663.7h1V671.5h-1zM549 660.9h1V669.1h-1zM550 668.7h1V676.5h-1zM550 659.8h1V669.7h-1zM551 669.7h2V676.9h-2zM551 659.8h1V670.7h-1zM552 661.1h1V668.2h-1zM553 655.1h2V662.6h-2zM553 661.6h1V668.6h-1zM554 661.8h1V670.5h-1zM555 662.9h1V669.7h-1zM556 662.7h1V669.3h-1zM557 661.6h1V668.8h-1zM558 662.5h1V671.5h-1zM559 661.0h1V667.3h-1zM560 659.5h2V664.6h-2zM560 663.6h1V672.1h-1zM561 657.1h2V662.2h-2zM561 661.2h1V670.3h-1zM562 665.6h1V674.7h-1zM563 665.4h1V673.1h-1zM564 669.2h1V677.6h-1zM565 676.5h2V682.0h-2zM565 668.3h1V677.5h-1zM566 671.9h1V680.7h-1zM567 679.8h2V687.6h-2zM567 671.7h1V680.8h-1zM568 673.7h1V683.1h-1zM569 670.2h2V676.3h-2zM569 675.3h1V682.8h-1zM570 675.7h1V682.2h-1zM571 671.2h1V682.0h-1zM572 669.3h2V673.4h-2zM572 672.4h1V680.7h-1zM573 670.8h1V680.2h-1zM574 666.6h2V671.0h-2zM574 670.0h1V677.3h-1zM575 666.7h1V674.0h-1zM576 664.0h1V672.8h-1zM577 656.5h2V663.4h-2zM577 662.4h1V673.2h-1zM578 663.4h1V672.6h-1zM579 660.8h1V669.9h-1zM580 662.0h1V670.8h-1zM581 654.3h1V662.9h-1zM581 661.9h1V670.6h-1zM582 668.8h2V674.9h-2zM582 662.0h1V669.8h-1zM583 661.8h1V671.7h-1zM584 659.8h1V669.6h-1zM585 661.0h1V668.0h-1zM586 662.8h1V670.8h-1zM587 658.4h1V669.1h-1zM588 657.4h1V662.3h-1zM588 661.3h1V669.5h-1zM589 659.4h1V669.5h-1zM590 656.5h1V663.8h-1zM590 662.8h1V670.4h-1zM591 665.6h1V672.2h-1zM592 666.3h1V673.9h-1zM593 661.4h2V670.3h-2zM593 669.3h1V677.6h-1zM594 661.0h1V669.0h-1zM594 668.0h1V679.2h-1zM595 669.1h1V677.7h-1zM596 670.5h1V678.9h-1zM597 672.8h1V683.3h-1zM598 673.3h1V683.2h-1zM599 685.8h2V690.7h-2zM599 677.8h1V686.8h-1zM600 674.5h1V682.1h-1zM601 674.5h1V681.7h-1zM602 672.7h1V679.7h-1zM603 663.7h1V671.4h-1zM603 670.4h1V678.7h-1zM604 667.4h1V677.1h-1zM605 667.7h1V675.2h-1zM606 672.7h2V681.7h-2zM606 666.6h1V673.7h-1zM607 664.6h1V671.2h-1zM608 662.4h1V671.9h-1zM609 661.6h1V670.0h-1zM610 662.2h1V670.2h-1zM611 660.9h1V668.7h-1zM612 661.5h1V671.0h-1zM613 658.8h1V669.7h-1zM614 662.3h1V670.5h-1zM615 660.2h1V668.9h-1zM616 659.2h1V669.0h-1zM617 661.0h1V668.5h-1zM618 660.2h1V669.3h-1zM619 661.1h1V669.3h-1zM620 661.5h1V665.0h-1zM620 664.0h1V670.9h-1zM621 664.2h1V673.0h-1zM622 665.4h1V673.4h-1zM623 674.9h2V678.0h-2zM623 668.3h1V675.9h-1zM624 669.7h1V678.8h-1zM625 677.9h1V681.6h-1zM625 668.9h1V678.9h-1zM626 671.0h1V681.4h-1zM627 670.1h1V680.8h-1zM628 675.1h1V684.6h-1zM629 674.0h1V681.6h-1zM630 675.7h1V683.3h-1zM631 673.1h1V682.0h-1zM632 670.7h1V678.4h-1zM633 669.9h1V677.1h-1zM634 666.3h1V675.2h-1zM635 665.0h1V675.9h-1zM636 659.6h1V665.9h-1zM636 664.9h1V674.8h-1zM637 660.3h1V664.1h-1zM637 663.1h1V670.4h-1zM638 658.8h2V663.7h-2zM638 662.7h1V674.1h-1zM639 668.1h2V675.2h-2zM639 662.1h1V669.1h-1zM640 659.6h1V669.4h-1zM641 660.9h1V669.2h-1zM642 662.5h1V669.6h-1zM643 660.8h1V668.7h-1zM644 662.8h1V671.4h-1zM645 657.5h1V662.5h-1zM645 661.5h1V670.3h-1zM646 662.0h1V670.4h-1zM647 662.8h1V671.1h-1zM648 661.3h1V670.4h-1zM649 658.4h1V661.5h-1zM649 660.5h1V671.7h-1zM650 661.7h1V671.5h-1zM651 673.5h2V681.9h-2zM651 666.7h1V674.5h-1zM652 666.3h1V672.9h-1zM653 667.1h1V674.1h-1zM654 667.2h1V677.4h-1zM655 671.4h1V682.8h-1zM656 673.0h1V683.1h-1zM657 675.7h1V682.8h-1zM658 681.7h2V686.1h-2zM658 673.6h1V682.7h-1zM659 671.8h1V675.5h-1zM659 674.5h1V684.2h-1zM660 674.6h1V682.2h-1zM661 672.0h1V678.9h-1zM662 677.9h1V684.3h-1zM662 669.2h1V678.9h-1zM663 667.8h1V675.4h-1zM664 668.5h1V677.1h-1zM665 664.3h1V675.3h-1zM666 665.6h1V673.0h-1zM667 663.9h1V672.8h-1zM668 653.5h1V660.2h-1zM668 659.2h1V671.0h-1zM669 662.4h1V670.3h-1zM670 659.8h1V668.7h-1zM671 660.4h1V669.0h-1zM672 661.4h1V668.8h-1zM673 660.5h1V667.1h-1zM674 658.5h1V661.7h-1zM674 660.7h1V672.5h-1zM675 661.4h1V670.2h-1zM676 659.2h1V668.9h-1zM677 668.1h2V674.2h-2zM677 662.4h1V669.1h-1zM678 660.8h1V670.5h-1zM679 662.8h1V671.0h-1zM680 669.9h1V676.3h-1zM680 662.5h1V670.9h-1zM681 665.7h1V673.1h-1zM682 676.0h2V682.4h-2zM682 667.1h1V677.0h-1zM683 669.1h1V676.3h-1zM684 677.9h1V685.9h-1zM684 668.7h1V678.9h-1zM685 670.6h1V679.7h-1zM686 673.0h1V680.2h-1zM687 672.1h1V677.2h-1zM687 676.2h1V682.9h-1zM688 676.0h1V683.2h-1zM689 682.4h1V689.0h-1zM689 675.1h1V683.4h-1zM690 673.8h1V681.6h-1zM691 679.7h2V684.8h-2zM691 672.4h1V680.7h-1zM692 670.0h1V678.2h-1zM693 669.0h1V679.6h-1zM694 674.2h2V677.2h-2zM694 667.8h1V675.2h-1zM695 671.2h1V676.4h-1zM695 663.9h1V672.2h-1zM696 660.2h1V666.5h-1zM696 665.5h1V675.0h-1zM697 657.2h2V663.7h-2zM697 662.7h1V671.4h-1zM698 661.4h1V671.4h-1zM699 660.4h1V669.6h-1zM700 662.3h1V669.8h-1zM701 663.4h1V670.3h-1zM702 662.6h1V669.5h-1zM703 653.6h2V661.7h-2zM703 660.7h1V671.2h-1zM704 662.1h1V669.6h-1zM705 663.0h1V670.2h-1zM706 663.2h1V671.3h-1zM707 670.5h1V677.6h-1zM707 659.5h1V671.5h-1zM708 669.2h2V673.3h-2zM708 661.4h1V670.2h-1zM709 672.4h2V681.8h-2zM709 663.5h1V673.4h-1zM710 660.7h2V666.0h-2zM710 665.0h1V671.8h-1zM711 665.7h1V672.4h-1zM712 668.3h1V675.1h-1zM713 676.5h1V681.4h-1zM713 667.2h1V677.5h-1zM714 671.0h1V679.8h-1zM715 669.9h1V678.4h-1zM716 670.9h1V674.3h-1zM716 673.3h1V681.0h-1zM717 672.3h1V682.1h-1zM718 675.6h1V683.2h-1zM719 674.9h1V683.1h-1zM720 674.3h1V681.3h-1zM721 672.6h1V679.7h-1zM722 670.2h1V677.3h-1zM723 676.2h1V683.8h-1zM723 669.6h1V677.2h-1zM724 666.1h1V675.2h-1zM725 664.9h1V673.1h-1zM726 664.9h1V672.0h-1zM727 662.8h1V670.7h-1zM728 668.0h1V677.7h-1zM728 662.0h1V669.0h-1zM729 660.2h1V668.5h-1zM730 660.5h1V670.2h-1zM731 660.0h1V668.5h-1zM732 659.0h1V662.8h-1zM732 661.8h1V670.7h-1zM733 661.1h1V671.6h-1zM734 668.3h1V671.7h-1zM734 659.4h1V669.3h-1zM735 660.8h1V669.3h-1zM736 661.4h1V669.7h-1zM737 653.2h1V662.1h-1zM737 661.1h1V672.1h-1zM738 662.4h1V670.7h-1zM739 663.9h1V672.1h-1zM740 664.5h1V672.3h-1zM741 666.1h1V672.9h-1zM742 667.9h1V675.8h-1zM743 669.0h1V677.8h-1zM744 666.0h2V671.5h-2zM744 670.5h1V677.4h-1zM745 671.0h1V678.2h-1zM746 674.6h1V681.2h-1zM747 673.9h1V678.1h-1zM747 677.1h1V686.7h-1zM748 675.0h1V684.0h-1zM749 679.6h1V684.1h-1zM749 672.5h1V680.6h-1zM750 672.9h1V681.5h-1zM751 661.1h1V670.0h-1zM751 669.0h1V678.0h-1zM752 671.3h1V678.1h-1zM753 668.8h1V677.7h-1zM754 667.0h1V673.6h-1zM755 666.4h1V673.9h-1zM756 662.3h1V670.6h-1zM757 663.0h1V670.4h-1zM758 671.0h1V676.8h-1zM758 661.4h1V672.0h-1zM759 654.6h1V661.7h-1zM759 660.7h1V669.4h-1zM760 661.9h1V670.8h-1zM761 661.9h1V668.6h-1zM762 652.1h2V660.8h-2zM762 659.8h1V669.5h-1zM763 661.6h1V669.7h-1zM764 659.3h1V668.1h-1zM765 668.5h1V674.6h-1zM765 661.1h1V669.5h-1zM766 659.6h1V670.1h-1zM767 668.1h1V671.8h-1zM767 661.3h1V669.1h-1zM768 671.1h2V675.4h-2zM768 661.3h1V672.1h-1zM769 664.2h1V673.8h-1zM770 665.1h1V674.8h-1zM771 667.6h1V674.8h-1zM772 669.4h1V678.0h-1zM773 668.7h1V678.1h-1zM774 678.6h1V686.5h-1zM774 668.9h1V679.6h-1zM775 666.0h2V673.5h-2zM775 672.5h1V680.3h-1zM776 674.4h1V683.4h-1zM777 675.2h1V684.5h-1zM778 682.7h2V689.9h-2zM778 675.3h1V683.7h-1zM779 682.1h1V687.4h-1zM779 672.7h1V683.1h-1zM780 673.3h1V680.4h-1zM781 670.2h1V676.8h-1zM782 669.5h1V676.7h-1zM783 668.3h1V678.1h-1zM784 667.3h1V674.3h-1zM785 672.9h1V681.1h-1zM785 662.2h1V673.9h-1zM786 668.8h1V677.7h-1zM786 662.5h1V669.8h-1zM787 661.3h1V670.1h-1zM788 655.1h2V663.3h-2zM788 662.3h1V671.4h-1zM789 658.2h2V663.7h-2zM789 662.7h1V669.7h-1zM790 661.5h1V670.7h-1zM791 653.9h2V661.7h-2zM791 660.7h1V669.3h-1zM792 656.5h1V661.1h-1zM792 660.1h1V668.9h-1zM793 660.4h1V670.4h-1zM794 661.1h1V671.3h-1zM795 656.7h2V664.4h-2zM795 663.4h1V672.6h-1zM796 669.2h1V676.0h-1zM796 659.0h1V670.2h-1zM797 669.1h2V672.2h-2zM797 662.3h1V670.1h-1zM798 669.6h1V676.8h-1zM798 663.7h1V670.6h-1zM799 663.9h1V672.5h-1zM800 673.4h2V676.9h-2zM800 665.2h1V674.4h-1zM801 668.1h1V675.0h-1zM802 665.6h1V678.3h-1zM803 669.3h1V678.8h-1zM804 670.6h1V678.6h-1zM805 671.5h1V682.9h-1zM806 682.1h2V687.1h-2zM806 675.9h1V683.1h-1zM807 668.0h2V676.8h-2zM807 675.8h1V684.5h-1zM808 673.8h1V682.0h-1zM809 670.1h1V675.0h-1zM809 674.0h1V682.2h-1zM810 679.4h1V684.7h-1zM810 672.7h1V680.4h-1zM811 670.9h1V677.9h-1zM812 668.3h1V677.5h-1zM813 673.4h1V682.3h-1zM813 665.4h1V674.4h-1zM814 654.0h1V662.8h-1zM814 661.8h1V673.6h-1zM815 674.2h1V677.4h-1zM815 664.8h1V675.2h-1zM816 662.1h1V671.6h-1zM817 661.1h1V669.4h-1zM818 660.6h1V668.4h-1zM819 661.8h1V671.6h-1zM820 661.1h1V669.2h-1zM821 661.9h1V669.6h-1zM822 660.4h1V669.7h-1zM823 654.2h1V660.6h-1zM823 659.6h1V670.3h-1zM824 661.6h1V670.1h-1zM825 661.8h1V669.8h-1zM826 660.6h1V669.6h-1zM827 662.3h1V670.0h-1zM828 661.6h1V664.7h-1zM828 663.7h1V672.8h-1zM829 664.4h1V671.6h-1zM830 660.4h1V663.9h-1zM830 662.9h1V677.4h-1zM831 663.1h2V667.6h-2zM831 666.6h1V675.6h-1zM832 668.3h1V676.7h-1zM833 678.7h1V681.8h-1zM833 669.5h1V679.7h-1zM834 671.4h1V681.9h-1zM835 668.0h1V675.6h-1zM835 674.6h1V683.2h-1zM836 673.2h1V681.8h-1zM837 674.3h1V685.4h-1zM838 680.9h2V686.5h-2zM838 674.1h1V681.9h-1zM839 682.8h1V688.6h-1zM839 673.1h1V683.8h-1zM840 670.5h1V681.0h-1zM841 678.8h2V686.2h-2zM841 669.9h1V679.8h-1zM842 674.2h2V682.2h-2zM842 668.3h1V675.2h-1zM843 665.7h1V674.1h-1zM844 665.8h1V675.2h-1zM845 664.0h1V671.2h-1zM846 664.1h1V671.2h-1zM847 662.6h1V671.1h-1zM848 662.5h1V670.0h-1zM849 655.9h1V663.8h-1zM849 662.8h1V670.2h-1zM850 663.6h1V672.3h-1zM851 662.3h1V673.4h-1zM852 661.3h1V670.4h-1zM853 662.4h1V669.2h-1zM854 662.2h1V669.4h-1zM855 662.4h1V671.9h-1zM856 656.1h2V661.8h-2zM856 660.8h1V668.4h-1zM857 662.6h1V670.3h-1zM858 671.6h1V676.0h-1zM858 662.7h1V672.6h-1zM859 665.5h1V672.4h-1zM860 664.2h1V672.8h-1zM861 666.9h1V675.6h-1zM862 676.5h2V679.5h-2zM862 670.1h1V677.5h-1zM863 669.9h1V677.8h-1zM864 680.8h2V689.4h-2zM864 671.7h1V681.8h-1zM865 667.6h2V674.0h-2zM865 673.0h1V682.3h-1zM866 676.3h1V685.1h-1zM867 674.5h1V684.4h-1zM868 669.6h1V676.1h-1zM868 675.1h1V684.1h-1zM869 681.1h2V687.7h-2zM869 672.9h1V682.1h-1zM870 672.1h1V680.7h-1zM871 668.3h1V679.4h-1zM872 668.6h1V677.4h-1zM873 666.0h1V674.7h-1zM874 672.3h1V680.0h-1zM874 664.9h1V673.3h-1zM875 664.1h1V673.5h-1zM876 660.0h2V663.8h-2zM876 662.8h1V670.0h-1zM877 661.1h1V669.6h-1zM878 669.0h2V674.5h-2zM878 661.7h1V670.0h-1zM879 668.0h1V673.8h-1zM879 660.6h1V669.0h-1zM880 663.1h1V670.4h-1zM881 671.7h2V674.8h-2zM881 661.5h1V672.7h-1zM882 654.4h2V662.0h-2zM882 661.0h1V670.9h-1zM883 668.9h2V672.0h-2zM883 658.9h1V669.9h-1zM884 659.7h1V669.6h-1zM885 662.5h1V674.6h-1zM886 655.2h1V661.9h-1zM886 660.9h1V669.5h-1zM887 673.1h1V678.8h-1zM887 664.4h1V674.1h-1zM888 664.0h1V673.1h-1zM889 666.8h1V676.2h-1zM890 665.9h1V675.5h-1zM891 660.9h2V669.6h-2zM891 668.6h1V676.1h-1zM892 669.0h1V677.8h-1zM893 664.3h2V670.9h-2zM893 669.9h1V678.5h-1zM894 667.2h2V674.3h-2zM894 673.3h1V682.1h-1zM895 673.8h1V683.7h-1zM896 675.5h1V685.2h-1zM897 675.1h1V683.8h-1zM898 674.8h1V684.5h-1zM899 679.8h1V687.7h-1zM899 672.3h1V680.8h-1zM900 664.4h2V670.9h-2zM900 669.9h1V680.4h-1zM901 677.2h2V686.5h-2zM901 669.4h1V678.2h-1zM902 668.2h1V675.2h-1zM903 664.9h1V674.2h-1zM904 664.5h1V673.5h-1zM905 662.4h1V672.4h-1zM906 662.2h1V669.7h-1zM907 662.0h1V670.5h-1zM908 658.6h1V670.7h-1zM909 667.1h1V673.9h-1zM909 660.3h1V668.1h-1zM910 660.3h1V667.6h-1zM911 667.8h2V672.3h-2zM911 659.0h1V668.8h-1zM912 662.1h1V670.1h-1zM913 663.7h1V675.2h-1zM914 659.2h1V670.2h-1zM915 660.6h1V668.9h-1zM916 668.7h1V678.3h-1zM916 662.6h1V669.7h-1zM917 670.1h1V676.0h-1zM917 662.3h1V671.1h-1zM918 665.2h1V672.3h-1zM919 666.2h1V673.5h-1zM920 666.0h1V676.2h-1zM921 669.0h1V676.3h-1zM922 668.8h1V677.6h-1zM923 669.4h2V673.2h-2zM923 672.2h1V680.9h-1zM924 670.1h1V680.8h-1zM925 672.3h1V681.8h-1zM926 676.1h1V682.9h-1zM927 673.7h1V682.6h-1zM928 669.8h2V674.0h-2zM928 673.0h1V679.8h-1zM929 667.9h1V678.2h-1zM930 668.6h1V678.1h-1zM931 669.1h1V675.5h-1zM932 666.9h1V675.8h-1zM933 665.3h1V673.4h-1zM934 662.4h1V672.3h-1zM935 669.6h2V673.6h-2zM935 663.2h1V670.6h-1zM936 659.5h1V668.7h-1zM937 657.1h2V662.5h-2zM937 661.5h1V668.8h-1zM938 660.6h1V670.3h-1zM939 658.7h2V662.5h-2zM939 661.5h1V672.6h-1zM940 660.8h1V669.5h-1zM941 658.7h1V668.6h-1zM942 661.4h1V670.9h-1zM943 659.0h1V669.1h-1zM944 660.9h1V669.5h-1zM945 661.7h1V671.5h-1zM946 661.8h1V670.4h-1zM947 662.5h1V671.9h-1zM948 665.5h1V674.5h-1zM949 662.0h2V666.2h-2zM949 665.2h1V672.7h-1zM950 661.0h1V667.5h-1zM950 666.5h1V675.4h-1zM951 667.8h1V675.5h-1zM952 671.6h1V678.3h-1zM953 669.3h1V672.9h-1zM953 671.9h1V679.9h-1zM954 672.5h1V676.0h-1zM954 675.0h1V683.0h-1zM955 674.3h1V681.5h-1zM956 675.9h1V683.8h-1zM957 674.5h1V682.3h-1zM958 673.5h1V682.2h-1zM959 670.5h1V680.3h-1zM960 669.2h1V676.0h-1zM961 667.4h1V674.9h-1zM962 673.9h2V682.1h-2zM962 667.2h1V674.9h-1zM963 665.8h1V674.1h-1zM964 671.0h2V679.2h-2zM964 664.6h1V672.0h-1zM965 663.2h1V671.1h-1zM966 660.2h1V671.2h-1zM967 668.2h2V673.1h-2zM967 659.2h1V669.2h-1zM968 661.9h1V669.9h-1zM969 660.7h1V669.5h-1zM970 662.1h1V669.8h-1zM971 662.6h1V670.7h-1zM972 661.5h1V670.4h-1zM973 660.7h1V668.4h-1zM974 655.5h1V662.8h-1zM974 661.8h1V669.9h-1zM975 668.5h2V672.1h-2zM975 662.6h1V669.5h-1zM976 662.8h1V669.5h-1zM977 664.4h1V673.5h-1zM978 664.0h1V671.8h-1zM979 666.1h1V675.7h-1zM980 668.2h1V675.5h-1zM981 669.6h1V679.0h-1zM982 671.0h1V680.1h-1zM983 672.6h1V680.7h-1zM984 681.5h1V685.4h-1zM984 674.6h1V682.5h-1zM985 674.7h1V685.2h-1zM986 673.8h1V683.0h-1zM987 674.7h1V684.0h-1zM988 674.0h1V681.5h-1zM989 670.4h1V679.0h-1zM990 668.7h1V678.0h-1zM991 672.9h2V679.7h-2zM991 666.5h1V673.9h-1zM992 666.1h1V673.5h-1zM993 664.9h1V672.2h-1zM994 663.2h1V671.8h-1zM995 662.1h1V670.2h-1zM996 661.4h1V667.9h-1zM997 662.4h1V669.0h-1zM998 660.6h1V669.3h-1zM999 660.6h1V668.7h-1zM1000 660.0h1V669.0h-1zM1001 656.8h1V662.9h-1zM1001 661.9h1V671.5h-1zM1002 667.9h2V673.7h-2zM1002 661.9h1V668.9h-1zM1003 668.9h1V672.9h-1zM1003 661.6h1V669.9h-1zM1004 661.2h1V668.9h-1zM1005 661.5h1V671.9h-1zM1006 662.5h1V669.9h-1zM1007 664.2h1V672.4h-1zM1008 665.5h1V673.5h-1zM1009 665.0h1V674.1h-1zM1010 667.0h1V675.9h-1zM1011 670.1h1V676.8h-1zM1012 671.7h1V678.9h-1zM1013 669.1h1V674.2h-1zM1013 673.2h1V681.7h-1zM1014 675.1h1V684.4h-1zM1015 668.6h1V676.8h-1zM1015 675.8h1V684.1h-1zM1016 670.6h2V675.2h-2zM1016 674.2h1V683.0h-1zM1017 669.3h2V673.9h-2zM1017 672.9h1V681.5h-1zM1018 669.7h1V681.1h-1zM1019 666.6h1V679.2h-1zM1020 661.7h2V669.7h-2zM1020 668.7h1V678.5h-1zM1021 665.4h1V675.6h-1zM1022 672.2h1V678.2h-1zM1022 663.8h1V673.2h-1zM1023 664.0h1V676.3h-1zM1024 670.3h1V678.3h-1zM1024 663.6h1V671.3h-1zM1025 660.0h1V668.6h-1zM1026 661.9h1V670.0h-1zM1027 653.9h2V661.8h-2zM1027 660.8h1V669.8h-1zM1028 662.1h1V670.1h-1zM1029 668.7h1V673.6h-1zM1029 660.6h1V669.7h-1zM1030 662.0h1V670.4h-1zM1031 659.2h1V668.6h-1zM1032 661.8h1V672.0h-1zM1033 667.2h1V672.6h-1zM1033 661.1h1V668.2h-1zM1034 660.7h1V671.7h-1zM1035 667.7h2V675.0h-2zM1035 659.8h1V668.7h-1zM1036 662.1h1V671.5h-1zM1037 663.0h1V671.1h-1zM1038 666.6h1V675.7h-1zM1039 667.4h1V675.6h-1zM1040 669.3h1V676.2h-1zM1041 671.5h1V678.1h-1zM1042 672.8h1V679.3h-1zM1043 671.4h2V674.9h-2zM1043 673.9h1V681.8h-1zM1044 681.9h1V691.1h-1zM1044 672.5h1V682.9h-1zM1045 676.9h1V684.8h-1zM1046 674.5h1V682.4h-1zM1047 670.2h1V673.8h-1zM1047 672.8h1V682.3h-1zM1048 677.7h1V686.3h-1zM1048 671.8h1V678.7h-1zM1049 671.5h1V679.4h-1zM1050 663.1h2V670.1h-2zM1050 669.1h1V678.0h-1zM1051 668.5h1V678.8h-1zM1052 665.2h1V673.5h-1zM1053 671.4h1V675.6h-1zM1053 664.6h1V672.4h-1zM1054 653.9h2V661.2h-2zM1054 660.2h1V671.2h-1zM1055 661.3h1V670.0h-1zM1056 668.1h1V671.7h-1zM1056 662.4h1V669.1h-1zM1057 660.3h1V664.4h-1zM1057 663.4h1V671.3h-1zM1058 661.6h1V669.6h-1zM1059 658.4h2V663.7h-2zM1059 662.7h1V669.4h-1zM1060 656.5h1V668.3h-1zM1061 662.0h1V670.0h-1zM1062 667.8h2V674.3h-2zM1062 659.7h1V668.8h-1zM1063 661.9h1V668.3h-1zM1064 661.2h1V671.1h-1zM1065 658.0h1V663.4h-1zM1065 662.4h1V671.6h-1zM1066 657.1h2V664.7h-2zM1066 663.7h1V671.4h-1zM1067 665.9h1V673.7h-1zM1068 673.5h2V678.4h-2zM1068 666.9h1V674.5h-1zM1069 667.6h1V675.5h-1zM1070 665.1h1V677.0h-1zM1071 672.2h1V680.4h-1zM1072 671.0h1V681.7h-1zM1073 679.0h2V686.2h-2zM1073 672.5h1V680.0h-1zM1074 674.7h1V683.0h-1zM1075 675.8h1V683.9h-1zM1076 676.4h1V684.2h-1zM1077 672.5h1V679.9h-1zM1078 679.5h2V684.0h-2zM1078 672.1h1V680.5h-1zM1079 668.0h1V676.0h-1zM1080 668.5h1V677.5h-1zM1081 666.1h1V674.6h-1zM1082 664.4h1V673.1h-1zM1083 664.3h1V671.6h-1zM1084 662.4h1V671.4h-1zM1085 661.9h1V668.9h-1zM1086 668.6h2V678.0h-2zM1086 661.7h1V669.6h-1zM1087 659.2h1V662.8h-1zM1087 661.8h1V670.5h-1zM1088 663.0h1V671.9h-1zM1089 661.1h1V669.6h-1zM1090 670.1h1V677.6h-1zM1090 661.1h1V671.1h-1zM1091 659.8h1V667.7h-1zM1092 659.6h1V668.2h-1zM1093 658.0h2V662.4h-2zM1093 661.4h1V668.9h-1zM1094 661.1h1V669.3h-1zM1095 671.4h1V675.6h-1zM1095 662.7h1V672.4h-1zM1096 664.5h1V672.4h-1zM1097 673.5h2V676.6h-2zM1097 666.2h1V674.5h-1zM1098 665.4h1V673.5h-1zM1099 669.2h1V675.5h-1zM1100 669.8h1V678.3h-1zM1101 672.1h1V680.5h-1zM1102 671.5h1V682.0h-1zM1103 671.6h1V675.2h-1zM1103 674.2h1V681.6h-1zM1104 676.3h1V685.9h-1zM1105 675.9h1V685.2h-1zM1106 668.9h1V674.7h-1zM1106 673.7h1V683.0h-1zM1107 673.0h1V681.2h-1zM1108 681.5h2V690.5h-2zM1108 672.4h1V682.5h-1zM1109 668.4h1V676.0h-1zM1110 661.9h1V665.7h-1zM1110 664.7h1V676.1h-1zM1111 663.8h1V668.5h-1zM1111 667.5h1V675.8h-1zM1112 664.6h1V673.1h-1zM1113 672.9h2V679.1h-2zM1113 663.4h1V673.9h-1zM1114 657.3h2V663.2h-2zM1114 662.2h1V670.7h-1zM1115 662.9h1V670.5h-1zM1116 662.4h1V670.3h-1zM1117 667.4h2V672.9h-2zM1117 661.3h1V668.4h-1zM1118 659.5h2V663.0h-2zM1118 662.0h1V671.0h-1zM1119 661.6h1V669.2h-1zM1120 660.8h1V670.8h-1zM1121 659.7h1V670.2h-1zM1122 660.3h1V669.1h-1zM1123 661.2h1V668.2h-1zM1124 661.9h1V670.0h-1zM1125 657.9h2V664.6h-2zM1125 663.6h1V670.7h-1zM1126 664.8h1V671.4h-1zM1127 665.2h1V672.9h-1zM1128 667.4h1V675.0h-1zM1129 668.9h1V677.7h-1zM1130 668.9h1V678.5h-1zM1131 670.2h1V679.4h-1zM1132 672.2h1V679.7h-1zM1133 674.2h1V681.9h-1zM1134 671.5h2V674.9h-2zM1134 673.9h1V684.2h-1zM1135 673.1h1V683.0h-1zM1136 672.3h1V683.4h-1zM1137 669.2h1V677.9h-1zM1138 669.9h1V677.1h-1zM1139 668.8h1V677.0h-1zM1140 666.7h1V677.0h-1zM1141 664.4h1V674.9h-1zM1142 665.5h1V672.1h-1zM1143 671.5h1V674.7h-1zM1143 663.7h1V672.5h-1zM1144 662.3h1V669.6h-1zM1145 669.8h1V675.2h-1zM1145 662.7h1V670.8h-1zM1146 663.0h1V671.1h-1zM1147 654.2h2V661.6h-2zM1147 660.6h1V670.3h-1zM1148 661.3h1V669.5h-1zM1149 661.7h1V669.2h-1zM1150 670.7h1V677.6h-1zM1150 660.5h1V671.7h-1zM1151 667.9h1V672.3h-1zM1151 661.3h1V668.9h-1zM1152 661.2h1V667.7h-1zM1153 668.1h1V673.4h-1zM1153 662.6h1V669.1h-1zM1154 668.2h2V673.1h-2zM1154 662.4h1V669.2h-1zM1155 663.8h1V671.3h-1zM1156 662.9h1V672.5h-1zM1157 665.7h1V675.4h-1zM1158 667.6h1V676.6h-1zM1159 663.5h1V669.4h-1zM1159 668.4h1V677.8h-1zM1160 677.3h2V681.9h-2zM1160 670.7h1V678.3h-1zM1161 670.8h1V680.0h-1zM1162 673.4h1V680.7h-1zM1163 681.3h1V687.1h-1zM1163 674.9h1V682.3h-1zM1164 676.6h1V684.1h-1zM1165 674.1h1V682.0h-1zM1166 672.8h1V680.6h-1zM1167 665.6h1V674.0h-1zM1167 673.0h1V680.8h-1zM1168 664.1h1V668.7h-1zM1168 667.7h1V677.7h-1zM1169 666.4h1V675.9h-1zM1170 667.2h1V676.4h-1zM1171 662.3h1V673.2h-1zM1172 662.3h1V666.3h-1zM1172 665.3h1V674.5h-1zM1173 662.8h1V671.4h-1zM1174 660.9h1V669.5h-1zM1175 661.2h1V669.2h-1zM1176 661.5h1V671.4h-1zM1177 655.4h1V663.3h-1zM1177 662.3h1V670.8h-1zM1178 660.9h1V668.7h-1zM1179 661.0h1V669.4h-1zM1180 662.6h1V671.2h-1zM1181 655.7h2V660.3h-2zM1181 659.3h1V670.3h-1zM1182 657.1h2V661.3h-2zM1182 660.3h1V668.8h-1zM1183 668.0h2V673.7h-2zM1183 661.8h1V669.0h-1zM1184 661.2h1V670.2h-1zM1185 671.3h1V675.5h-1zM1185 663.7h1V672.3h-1zM1186 672.9h1V676.1h-1zM1186 666.1h1V673.9h-1zM1187 676.0h1V681.7h-1zM1187 667.9h1V677.0h-1zM1188 667.2h1V674.8h-1zM1189 671.8h1V679.2h-1zM1190 679.5h2V688.6h-2zM1190 672.4h1V680.5h-1zM1191 671.1h1V679.0h-1zM1192 673.1h1V683.3h-1zM1193 674.9h1V682.9h-1zM1194 686.4h2V693.5h-2zM1194 677.7h1V687.4h-1zM1195 672.3h1V681.5h-1zM1196 671.1h1V679.0h-1zM1197 673.2h1V681.3h-1zM1198 676.0h2V683.7h-2zM1198 668.4h1V677.0h-1zM1199 668.5h1V675.6h-1zM1200 667.3h1V675.6h-1zM1201 665.8h1V674.7h-1zM1202 665.3h1V672.2h-1zM1203 664.2h1V671.1h-1zM1204 668.4h2V677.7h-2zM1204 661.4h1V669.4h-1zM1205 661.7h1V671.5h-1zM1206 661.4h1V671.3h-1zM1207 657.9h1V668.3h-1zM1208 661.5h1V670.1h-1zM1209 661.1h1V669.3h-1zM1210 658.8h1V669.4h-1zM1211 657.3h1V667.6h-1zM1212 661.4h1V668.4h-1zM1213 661.7h1V668.7h-1zM1214 661.0h1V673.2h-1zM1215 661.9h1V671.7h-1zM1216 665.3h1V672.6h-1zM1217 675.0h1V681.1h-1zM1217 666.9h1V676.0h-1zM1218 667.9h1V676.2h-1zM1219 671.1h1V679.3h-1zM1220 670.2h1V678.4h-1zM1221 678.4h2V687.5h-2zM1221 673.0h1V679.4h-1zM1222 675.5h1V682.4h-1zM1223 675.8h1V683.9h-1zM1224 673.9h1V682.7h-1zM1225 671.8h2V676.4h-2zM1225 675.4h1V682.8h-1zM1226 679.8h1V687.1h-1zM1226 671.9h1V680.8h-1zM1227 669.2h1V677.5h-1zM1228 669.0h1V677.1h-1zM1229 669.2h1V676.4h-1zM1230 663.8h1V673.3h-1zM1231 670.0h1V673.6h-1zM1231 663.8h1V671.0h-1zM1232 664.1h1V671.7h-1zM1233 670.7h2V678.4h-2zM1233 662.6h1V671.7h-1zM1234 669.1h2V676.3h-2zM1234 662.1h1V670.1h-1zM1235 661.3h1V668.8h-1zM1236 663.5h1V672.3h-1zM1237 661.4h1V668.6h-1zM1238 668.9h2V672.7h-2zM1238 661.9h1V669.9h-1zM1239 661.6h1V671.8h-1zM1240 657.8h1V668.9h-1zM1241 668.7h2V674.5h-2zM1241 661.4h1V669.7h-1zM1242 655.0h1V663.6h-1zM1242 662.6h1V672.4h-1zM1243 661.7h1V670.1h-1zM1244 664.2h1V671.5h-1zM1245 663.2h1V671.6h-1zM1246 666.5h1V674.1h-1zM1247 666.5h1V674.3h-1zM1248 668.4h1V677.1h-1zM1249 667.0h2V671.6h-2zM1249 670.6h1V679.9h-1zM1250 670.8h1V680.5h-1zM1251 672.4h1V682.3h-1zM1252 682.8h2V689.5h-2zM1252 671.9h1V683.8h-1zM1253 685.1h1V690.1h-1zM1253 676.4h1V686.1h-1zM1254 670.8h1V677.6h-1zM1254 676.6h1V683.4h-1zM1255 674.9h1V681.6h-1zM1256 671.7h1V679.5h-1zM1257 668.6h1V671.7h-1zM1257 670.7h1V677.3h-1zM1258 668.4h1V677.9h-1zM1259 667.9h1V674.4h-1zM1260 663.4h1V671.7h-1zM1261 664.4h1V671.6h-1zM1262 664.2h1V671.5h-1zM1263 660.9h1V670.6h-1zM1264 662.1h1V671.2h-1zM1265 660.4h1V668.2h-1zM1266 660.0h1V668.2h-1zM1267 661.9h1V670.7h-1zM1268 662.4h1V670.0h-1zM1269 661.1h1V671.2h-1zM1270 668.3h2V675.0h-2zM1270 661.6h1V669.3h-1zM1271 661.6h1V671.0h-1zM1272 669.2h2V675.3h-2zM1272 660.6h1V670.2h-1zM1273 669.0h1V674.5h-1zM1273 660.2h1V670.0h-1zM1274 665.4h1V673.3h-1zM1275 663.2h1V671.9h-1zM1276 665.3h1V674.0h-1zM1277 676.3h1V682.9h-1zM1277 667.9h1V677.3h-1zM1278 669.2h1V677.1h-1zM1279 663.4h1V672.2h-1zM1279 671.2h1V678.0h-1zM1280 673.4h1V680.4h-1zM1281 673.2h1V682.0h-1zM1282 680.6h2V689.9h-2zM1282 672.8h1V681.6h-1zM1283 685.5h2V691.4h-2zM1283 676.5h1V686.5h-1zM1284 674.3h1V684.2h-1zM1285 670.3h1V680.7h-1zM1286 669.1h1V678.6h-1zM1287 669.5h1V676.8h-1zM1288 664.7h1V668.5h-1zM1288 667.5h1V675.4h-1zM1289 666.7h1V676.0h-1zM1290 665.5h1V674.6h-1zM1291 663.8h1V673.5h-1zM1292 662.5h1V672.2h-1zM1293 661.1h1V670.7h-1zM1294 661.7h1V671.2h-1zM1295 662.1h1V669.4h-1zM1296 661.8h1V669.0h-1zM1297 660.6h1V671.6h-1zM1298 656.2h2V663.5h-2zM1298 662.5h1V670.6h-1zM1299 661.6h1V669.6h-1zM1300 661.1h1V668.8h-1zM1301 668.2h1V677.0h-1zM1301 662.4h1V669.2h-1zM1302 662.5h1V671.1h-1zM1303 661.4h1V673.4h-1zM1304 664.9h1V673.5h-1zM1305 662.8h1V671.3h-1zM1306 666.3h1V674.9h-1zM1307 665.3h1V674.0h-1zM1308 670.8h1V677.7h-1zM1309 670.9h1V678.8h-1zM1310 680.3h1V687.6h-1zM1310 672.1h1V681.3h-1zM1311 672.7h1V681.4h-1zM1312 670.4h2V677.2h-2zM1312 676.2h1V684.8h-1zM1313 670.7h2V678.1h-2zM1313 677.1h1V684.8h-1zM1314 675.0h1V684.2h-1zM1315 672.7h1V681.7h-1zM1316 670.6h1V678.3h-1zM1317 668.5h1V679.6h-1zM1318 667.4h1V676.1h-1zM1319 667.3h1V675.2h-1zM1320 671.3h1V675.6h-1zM1320 665.2h1V672.3h-1zM1321 663.7h1V672.0h-1zM1322 661.8h1V664.9h-1zM1322 663.9h1V670.4h-1zM1323 661.0h1V670.4h-1zM1324 662.4h1V670.4h-1zM1325 660.8h1V670.1h-1zM1326 662.1h1V669.6h-1zM1327 660.3h1V664.1h-1zM1327 663.1h1V669.9h-1zM1328 670.3h1V674.6h-1zM1328 661.5h1V671.3h-1zM1329 662.1h1V670.1h-1zM1330 659.9h1V670.4h-1z" fill="#e000e0"/>
<path d="M27 680.9h2v2.5h-2zM27 666.2h1v1.5h-1zM27 671.2h1v1.5h-1zM28 668.0h1v2h-1zM28 673.2h1v2h-1zM29 658.8h2v2.4h-2zM29 672.2h1v1.5h-1zM29 672.1h1v2h-1zM30 677.7h1v2.5h-1zM30 670.9h1v2.5h-1zM30 670.1h1v1.5h-1zM31 673.0h1v1.5h-1zM31 672.2h1v2.5h-1zM32 674.6h1v1.5h-1zM32 677.9h1v2.5h-1zM33 674.5h1v2.5h-1zM33 675.8h1v2.5h-1zM34 675.7h1v2h-1zM34 677.2h1v2.5h-1zM35 685.0h1v2.5h-1zM35 675.8h1v2h-1zM35 675.4h1v1.5h-1zM36 669.1h1v2.0h-1zM36 680.1h1v2.5h-1zM36 677.7h1v2h-1zM37 681.1h1v2h-1zM37 673.8h1v2h-1zM38 671.9h1v2.5h-1zM38 670.6h1v2.5h-1zM39 674.9h1v2h-1zM39 676.2h1v1.5h-1zM40 660.0h2v2.4h-2zM40 670.7h1v2h-1zM40 674.5h1v2.5h-1zM41 668.4h1v2.5h-1zM41 670.0h1v2h-1zM42 670.3h1v2h-1zM42 667.0h1v1.5h-1zM43 672.3h2v2.5h-2zM43 668.4h1v1.5h-1zM43 669.2h1v1.5h-1zM44 660.0h1v2h-1zM44 665.0h1v2h-1zM45 666.7h1v2.5h-1zM45 665.5h1v2h-1zM46 665.2h1v1.5h-1zM46 666.6h1v2.5h-1zM47 661.9h1v1.5h-1zM47 669.5h1v2h-1zM48 665.3h1v2.5h-1zM48 664.7h1v1.5h-1zM49 662.1h1v2h-1zM49 667.7h1v2.5h-1zM50 654.1h2v1.8h-2zM50 667.6h1v2h-1zM50 662.0h1v2.5h-1zM51 666.8h1v1.5h-1zM51 667.5h1v2h-1zM52 664.2h1v1.5h-1zM52 665.7h1v2.5h-1zM53 667.6h1v2.5h-1zM53 668.2h1v2.5h-1zM54 659.2h1v1.6h-1zM54 668.7h1v2h-1zM54 667.7h1v2.5h-1zM55 662.5h1v1.5h-1zM55 664.2h1v1.5h-1zM56 669.7h1v1.5h-1zM56 664.8h1v2h-1zM57 666.2h1v1.5h-1zM57 669.8h1v1.5h-1zM58 669.4h1v1.5h-1zM58 674.3h1v2h-1zM59 669.2h1v2h-1zM59 673.2h1v2.5h-1zM60 673.7h1v1.5h-1zM60 670.9h1v1.5h-1zM61 672.1h1v2.5h-1zM61 677.9h1v2h-1zM62 668.4h2v2.1h-2zM62 676.2h1v2h-1zM62 674.8h1v1.5h-1zM63 671.9h1v2.8h-1zM63 675.8h1v2h-1zM63 678.0h1v1.5h-1zM64 678.4h1v2.5h-1zM64 677.1h1v2h-1zM65 676.3h1v2h-1zM65 678.4h1v2h-1zM66 673.1h1v1.5h-1zM66 677.3h1v1.5h-1zM67 674.6h1v2h-1zM67 671.2h1v2.5h-1zM68 671.2h1v2.5h-1zM68 675.2h1v1.5h-1zM69 665.7h2v1.9h-2zM69 673.9h1v2h-1zM69 669.9h1v2h-1zM70 671.6h1v1.5h-1zM70 674.0h1v1.5h-1zM71 671.2h1v2.5h-1zM71 669.8h1v2h-1zM72 673.9h1v2.5h-1zM72 668.1h1v1.5h-1zM72 669.0h1v1.5h-1zM73 656.6h1v2.4h-1zM73 670.1h1v2.5h-1zM73 669.1h1v2.5h-1zM74 666.0h1v2.5h-1zM74 663.6h1v1.5h-1zM75 666.5h1v2.5h-1zM75 661.6h1v1.5h-1zM76 672.5h2v2.5h-2zM76 661.0h1v2.5h-1zM76 665.1h1v2.5h-1zM77 664.3h1v2h-1zM77 666.2h1v2.5h-1zM78 665.5h1v2.5h-1zM78 667.3h1v2h-1zM79 669.0h2v2.5h-2zM79 660.1h1v2.5h-1zM79 660.7h1v2h-1zM80 663.7h1v1.5h-1zM80 665.1h1v1.5h-1zM81 670.3h2v2.5h-2zM81 666.0h1v2.5h-1zM81 663.2h1v2.5h-1zM82 673.0h1v2.5h-1zM82 666.6h1v1.5h-1zM82 665.9h1v1.5h-1zM83 658.7h2v2.2h-2zM83 660.6h1v2h-1zM83 662.4h1v1.5h-1zM84 656.8h2v2.4h-2zM84 663.2h1v2.5h-1zM84 661.5h1v1.5h-1zM85 671.5h2v2.5h-2zM85 665.6h1v2h-1zM85 665.6h1v2.5h-1zM86 659.5h2v2.9h-2zM86 669.7h1v2h-1zM86 669.7h1v1.5h-1zM87 680.1h1v2.5h-1zM87 669.8h1v2.5h-1zM87 667.5h1v2.5h-1zM88 679.6h1v2.5h-1zM88 668.8h1v1.5h-1zM88 668.9h1v2.5h-1zM89 662.4h2v2.9h-2zM89 672.8h1v2h-1zM89 674.5h1v2h-1zM90 667.2h1v2.2h-1zM90 678.0h1v1.5h-1zM90 678.1h1v2h-1zM91 677.1h1v2.5h-1zM91 674.6h1v2h-1zM92 679.6h1v1.5h-1zM92 676.7h1v2.5h-1zM93 671.1h2v2.2h-2zM93 679.4h1v2.5h-1zM93 678.8h1v2.5h-1zM94 682.6h1v2.5h-1zM94 673.9h1v1.5h-1zM95 676.3h1v2.5h-1zM95 678.5h1v2h-1zM96 678.2h1v1.5h-1zM96 676.8h1v2h-1zM97 673.6h1v1.5h-1zM97 675.2h1v2h-1zM98 670.9h1v2.5h-1zM98 670.3h1v2h-1zM99 677.2h2v2.5h-2zM99 671.8h1v1.5h-1zM99 673.1h1v2.5h-1zM100 671.1h1v1.5h-1zM100 671.7h1v2.5h-1zM101 668.2h1v2h-1zM101 670.7h1v2h-1zM102 676.7h2v2.5h-2zM102 661.7h1v2.5h-1zM102 660.8h1v1.5h-1zM103 664.0h1v1.5h-1zM103 666.1h1v1.5h-1zM104 667.3h1v2h-1zM104 659.8h1v2.5h-1zM105 671.4h1v2.5h-1zM105 666.2h1v2h-1zM105 666.1h1v1.5h-1zM106 663.7h1v2.5h-1zM106 662.1h1v2.5h-1zM107 663.7h1v1.5h-1zM107 664.0h1v1.5h-1zM108 663.5h1v2.5h-1zM108 666.1h1v1.5h-1zM109 670.3h2v2.5h-2zM109 663.9h1v1.5h-1zM109 665.2h1v2h-1zM110 654.8h1v2.5h-1zM110 665.7h1v2h-1zM110 669.2h1v2.5h-1zM111 656.4h2v2.0h-2zM111 662.2h1v2.5h-1zM111 661.4h1v1.5h-1zM112 672.3h2v2.5h-2zM112 663.3h1v1.5h-1zM112 663.2h1v2h-1zM113 655.8h1v1.7h-1zM113 665.6h1v1.5h-1zM113 666.8h1v2h-1zM114 663.5h1v2.5h-1zM114 662.6h1v2.5h-1zM115 664.8h1v2h-1zM115 669.4h1v1.5h-1zM116 667.1h1v2h-1zM116 671.8h1v2.5h-1zM117 679.9h2v2.5h-2zM117 673.7h1v2h-1zM117 670.6h1v1.5h-1zM118 664.3h1v2.8h-1zM118 671.4h1v2h-1zM118 670.7h1v2h-1zM119 679.0h2v2.5h-2zM119 671.5h1v1.5h-1zM119 674.7h1v2h-1zM120 677.6h1v2h-1zM120 677.0h1v1.5h-1zM121 678.5h1v2.5h-1zM121 674.5h1v2.5h-1zM122 681.1h1v2h-1zM122 680.9h1v2.5h-1zM123 669.7h1v2.8h-1zM123 678.5h1v1.5h-1zM123 676.1h1v2h-1zM124 681.7h1v1.5h-1zM124 676.0h1v2.5h-1zM125 688.9h2v2.5h-2zM125 675.5h1v2.5h-1zM125 677.5h1v2h-1zM126 676.8h1v1.5h-1zM126 677.1h1v2.5h-1zM127 671.1h1v1.5h-1zM127 671.1h1v1.5h-1zM128 670.6h1v2h-1zM128 672.2h1v2.5h-1zM129 682.2h2v2.5h-2zM129 671.7h1v1.5h-1zM129 674.2h1v2h-1zM130 670.1h1v2h-1zM130 669.8h1v2h-1zM131 668.1h1v2.5h-1zM131 667.0h1v1.5h-1zM132 657.4h1v1.8h-1zM132 670.1h1v2h-1zM132 668.4h1v1.5h-1zM133 667.4h1v2h-1zM133 669.6h1v2h-1zM134 664.1h1v1.5h-1zM134 663.4h1v1.5h-1zM135 669.2h1v1.5h-1zM135 663.4h1v2h-1zM136 665.9h1v1.5h-1zM136 659.8h1v1.5h-1zM137 665.0h1v2h-1zM137 666.8h1v2h-1zM138 654.7h2v1.7h-2zM138 664.4h1v1.5h-1zM138 664.6h1v2h-1zM139 663.0h1v1.5h-1zM139 668.0h1v1.5h-1zM140 658.7h2v2.8h-2zM140 670.4h1v2h-1zM140 667.6h1v1.5h-1zM141 663.3h1v1.5h-1zM141 664.4h1v2h-1zM142 666.6h1v2h-1zM142 668.6h1v1.5h-1zM143 656.4h1v2.5h-1zM143 666.0h1v1.5h-1zM143 667.7h1v2h-1zM144 669.1h1v2.5h-1zM144 665.5h1v1.5h-1zM145 667.6h1v2h-1zM145 671.4h1v1.5h-1zM146 671.1h1v2.5h-1zM146 665.3h1v2.5h-1zM147 669.5h1v2.5h-1zM147 673.4h1v2h-1zM148 671.1h1v2.5h-1zM148 669.4h1v2h-1zM149 681.0h2v2.5h-2zM149 672.4h1v2h-1zM149 677.1h1v1.5h-1zM150 683.6h2v2.5h-2zM150 675.9h1v1.5h-1zM150 676.7h1v2.5h-1zM151 667.0h2v2.2h-2zM151 678.1h1v2h-1zM151 680.7h1v1.5h-1zM152 674.3h1v2.5h-1zM152 679.6h1v1.5h-1zM153 669.7h2v2.5h-2zM153 677.8h1v2.5h-1zM153 682.1h1v2.5h-1zM154 689.2h2v2.5h-2zM154 677.4h1v2.5h-1zM154 678.5h1v1.5h-1zM155 686.0h1v2.5h-1zM155 675.5h1v1.5h-1zM155 675.0h1v2.5h-1zM156 676.9h1v1.5h-1zM156 672.2h1v2h-1zM157 680.7h1v2.5h-1zM157 674.7h1v2.5h-1zM157 673.5h1v2h-1zM158 681.6h2v2.5h-2zM158 672.1h1v2h-1zM158 674.2h1v1.5h-1zM159 668.6h1v2h-1zM159 670.6h1v2h-1zM160 663.8h2v1.8h-2zM160 671.1h1v2h-1zM160 672.7h1v2h-1zM161 664.2h1v2h-1zM161 672.0h1v2h-1zM162 659.3h2v1.6h-2zM162 668.9h1v2h-1zM162 666.4h1v2.5h-1zM163 663.0h1v2.5h-1zM163 666.3h1v1.5h-1zM164 658.1h2v2.3h-2zM164 665.6h1v2.5h-1zM164 667.5h1v1.5h-1zM165 670.4h1v1.5h-1zM165 669.4h1v2h-1zM166 660.9h1v1.5h-1zM166 665.9h1v2h-1zM167 662.7h1v1.5h-1zM167 661.0h1v1.5h-1zM168 667.4h1v1.5h-1zM168 665.7h1v1.5h-1zM169 667.3h1v2.5h-1zM169 662.4h1v2h-1zM170 659.2h2v3.0h-2zM170 663.7h1v2.5h-1zM170 664.5h1v2h-1zM171 668.0h1v2.5h-1zM171 662.1h1v2h-1zM172 665.3h1v2h-1zM172 662.8h1v1.5h-1zM173 662.1h1v2h-1zM173 662.7h1v2.5h-1zM174 672.5h1v2.5h-1zM174 666.4h1v2h-1zM174 663.1h1v1.5h-1zM175 667.4h1v2.5h-1zM175 667.3h1v1.5h-1zM176 664.0h1v1.5h-1zM176 670.0h1v2h-1zM177 673.0h1v2.5h-1zM177 673.8h1v1.5h-1zM178 672.8h1v2.5h-1zM178 668.6h1v1.5h-1zM179 675.5h1v2h-1zM179 675.3h1v1.5h-1zM180 663.7h1v1.9h-1zM180 672.7h1v2.5h-1zM180 678.6h1v2.5h-1zM181 674.3h1v2.5h-1zM181 680.2h1v2h-1zM182 671.1h2v2.3h-2zM182 674.6h1v2h-1zM182 675.0h1v1.5h-1zM183 667.2h1v2.9h-1zM183 679.3h1v2h-1zM183 679.0h1v1.5h-1zM184 676.5h1v2h-1zM184 677.9h1v2h-1zM185 683.6h1v2.5h-1zM185 673.8h1v2.5h-1zM185 676.1h1v1.5h-1zM186 670.5h1v2h-1zM186 673.8h1v2h-1zM187 682.7h1v2.5h-1zM187 672.1h1v2.5h-1zM187 673.0h1v1.5h-1zM188 664.5h1v2.5h-1zM188 671.8h1v2h-1zM188 669.1h1v2.5h-1zM189 677.2h2v2.5h-2zM189 668.5h1v1.5h-1zM189 673.5h1v1.5h-1zM190 669.1h1v1.5h-1zM190 667.9h1v2.5h-1zM191 671.9h1v1.5h-1zM191 670.0h1v2.5h-1zM192 655.5h1v2.7h-1zM192 665.0h1v2.5h-1zM192 666.6h1v1.5h-1zM193 664.7h1v2h-1zM193 665.1h1v1.5h-1zM194 675.0h1v2.5h-1zM194 661.0h1v2h-1zM194 668.6h1v1.5h-1zM195 654.6h2v1.8h-2zM195 662.4h1v2h-1zM195 666.6h1v1.5h-1zM196 666.4h1v1.5h-1zM196 667.3h1v1.5h-1zM197 652.8h1v2.2h-1zM197 664.0h1v2h-1zM197 668.1h1v2.5h-1zM198 666.2h1v2h-1zM198 660.9h1v2.5h-1zM199 665.7h1v2h-1zM199 667.9h1v2h-1zM200 666.4h1v2.5h-1zM200 660.6h1v2h-1zM201 664.9h1v2.5h-1zM201 661.2h1v2h-1zM202 674.5h2v2.5h-2zM202 669.0h1v2.5h-1zM202 669.3h1v2.5h-1zM203 668.0h1v2h-1zM203 668.3h1v2h-1zM204 668.0h1v2.5h-1zM204 666.6h1v2h-1zM205 661.2h2v2.4h-2zM205 668.1h1v2h-1zM205 668.6h1v1.5h-1zM206 667.9h1v1.5h-1zM206 674.7h1v1.5h-1zM207 662.7h1v2.8h-1zM207 669.8h1v2h-1zM207 674.8h1v2h-1zM208 674.6h1v2h-1zM208 670.3h1v2h-1zM209 672.7h1v2.5h-1zM209 671.6h1v1.5h-1zM210 676.6h1v2.5h-1zM210 674.4h1v1.5h-1zM211 669.8h2v1.6h-2zM211 679.0h1v2h-1zM211 676.9h1v2h-1zM212 676.8h1v2.5h-1zM212 680.7h1v1.5h-1zM213 671.0h1v2.2h-1zM213 682.9h1v1.5h-1zM213 682.7h1v2.5h-1zM214 672.5h1v2h-1zM214 673.9h1v2.5h-1zM215 680.2h1v2.5h-1zM215 678.5h1v2h-1zM216 673.8h1v1.5h-1zM216 676.2h1v2.5h-1zM217 670.7h1v2.5h-1zM217 672.2h1v1.5h-1zM218 665.4h1v2.6h-1zM218 669.2h1v2h-1zM218 674.6h1v2.5h-1zM219 682.9h2v2.5h-2zM219 670.5h1v2.5h-1zM219 668.8h1v2h-1zM220 666.1h1v2h-1zM220 665.7h1v1.5h-1zM221 662.4h2v1.9h-2zM221 668.5h1v2.5h-1zM221 668.7h1v2.5h-1zM222 667.1h1v2h-1zM222 665.9h1v2h-1zM223 666.1h1v2h-1zM223 663.8h1v2h-1zM224 655.8h1v2.5h-1zM224 664.7h1v2.5h-1zM224 662.6h1v2h-1zM225 657.4h2v2.9h-2zM225 666.5h1v2h-1zM225 664.1h1v2h-1zM226 672.0h1v2.5h-1zM226 664.2h1v2.5h-1zM226 667.2h1v2h-1zM227 668.2h1v2.5h-1zM227 663.2h1v2h-1zM228 670.6h1v2.5h-1zM228 666.2h1v1.5h-1zM228 664.8h1v2h-1zM229 662.4h1v2.5h-1zM229 668.5h1v2h-1zM230 654.9h2v2.9h-2zM230 662.4h1v2h-1zM230 665.1h1v1.5h-1zM231 673.2h1v2.5h-1zM231 667.1h1v2h-1zM231 662.2h1v1.5h-1zM232 660.9h1v2.5h-1zM232 667.3h1v1.5h-1zM233 664.6h1v2.5h-1zM233 669.9h1v1.5h-1zM234 670.4h1v1.5h-1zM234 671.1h1v1.5h-1zM235 678.9h1v2.5h-1zM235 668.6h1v2.5h-1zM235 673.9h1v2h-1zM236 675.3h1v2.5h-1zM236 671.0h1v2h-1zM237 673.9h1v2h-1zM237 670.0h1v2.5h-1zM238 678.8h1v2.5h-1zM238 677.0h1v1.5h-1zM238 673.5h1v1.5h-1zM239 676.4h1v2h-1zM239 675.7h1v1.5h-1zM240 671.2h1v1.5h-1zM240 674.4h1v2.5h-1zM241 687.9h2v2.5h-2zM241 675.0h1v1.5h-1zM241 678.4h1v2.5h-1zM242 679.8h1v1.5h-1zM242 678.6h1v1.5h-1zM243 684.9h2v2.5h-2zM243 679.5h1v1.5h-1zM243 679.8h1v2.5h-1zM244 685.6h2v2.5h-2zM244 680.0h1v1.5h-1zM244 678.2h1v2.5h-1zM245 671.7h1v1.5h-1zM245 671.5h1v2.5h-1zM246 666.3h1v1.6h-1zM246 677.4h1v2.5h-1zM246 677.6h1v2h-1zM247 667.4h1v1.5h-1zM247 676.2h1v2h-1zM248 674.1h1v2h-1zM248 670.8h1v2.5h-1zM249 672.8h1v2h-1zM249 667.9h1v2.5h-1zM250 677.7h2v2.5h-2zM250 667.6h1v1.5h-1zM250 664.5h1v2h-1zM251 674.1h2v2.5h-2zM251 668.0h1v1.5h-1zM251 667.3h1v2.5h-1zM252 665.5h1v1.5h-1zM252 664.3h1v1.5h-1zM253 655.4h2v1.7h-2zM253 658.7h1v1.5h-1zM253 666.3h1v2.5h-1zM254 665.1h1v2h-1zM254 661.6h1v2h-1zM255 665.4h1v2.5h-1zM255 666.1h1v2.5h-1zM256 662.6h1v2h-1zM256 665.0h1v2.5h-1zM257 662.5h1v2.5h-1zM257 667.0h1v2.5h-1zM258 663.8h1v2h-1zM258 664.6h1v1.5h-1zM259 661.6h1v2h-1zM259 660.2h1v2.5h-1zM260 669.0h1v2.5h-1zM260 661.3h1v2.5h-1zM260 666.2h1v1.5h-1zM261 667.9h1v2.5h-1zM261 666.7h1v1.5h-1zM262 660.7h1v2.5h-1zM262 661.7h1v2h-1zM263 672.5h1v2.5h-1zM263 665.2h1v2h-1zM263 663.3h1v2h-1zM264 668.2h1v2h-1zM264 669.1h1v2h-1zM265 679.0h2v2.5h-2zM265 667.3h1v1.5h-1zM265 671.2h1v1.5h-1zM266 669.0h1v2.5h-1zM266 669.1h1v1.5h-1zM267 670.4h1v2h-1zM267 673.4h1v2.5h-1zM268 667.0h1v2.6h-1zM268 679.4h1v2.5h-1zM268 672.6h1v2.5h-1zM269 686.4h2v2.5h-2zM269 673.3h1v2h-1zM269 680.2h1v1.5h-1zM270 684.8h1v2.5h-1zM270 676.9h1v2.5h-1zM270 675.4h1v1.5h-1zM271 669.4h1v2.5h-1zM271 679.0h1v2h-1zM271 682.0h1v2h-1zM272 688.6h2v2.5h-2zM272 677.8h1v2.5h-1zM272 682.5h1v2h-1zM273 689.1h1v2.5h-1zM273 679.5h1v2h-1zM273 679.0h1v1.5h-1zM274 677.7h1v2h-1zM274 677.7h1v1.5h-1zM275 683.3h1v2.5h-1zM275 673.8h1v1.5h-1zM275 674.3h1v2h-1zM276 672.3h1v2.5h-1zM276 671.1h1v2h-1zM277 661.1h1v1.7h-1zM277 674.2h1v1.5h-1zM277 669.9h1v1.5h-1zM278 668.5h1v2h-1zM278 668.7h1v1.5h-1zM279 662.0h2v1.7h-2zM279 670.3h1v2h-1zM279 667.1h1v1.5h-1zM280 665.0h1v1.5h-1zM280 662.1h1v1.5h-1zM281 657.4h1v1.8h-1zM281 666.3h1v2h-1zM281 662.6h1v2h-1zM282 670.9h2v2.5h-2zM282 662.5h1v2h-1zM282 665.2h1v2h-1zM283 655.7h2v2.0h-2zM283 662.1h1v2h-1zM283 664.7h1v1.5h-1zM284 666.0h1v2.5h-1zM284 662.6h1v2.5h-1zM285 660.1h2v2.7h-2zM285 668.6h1v2.5h-1zM285 662.7h1v2h-1zM286 659.8h1v2h-1zM286 667.5h1v1.5h-1zM287 662.0h1v2h-1zM287 664.1h1v1.5h-1zM288 659.0h2v2.2h-2zM288 666.4h1v2.5h-1zM288 666.3h1v1.5h-1zM289 664.0h1v1.5h-1zM289 667.6h1v2h-1zM290 665.4h1v2.5h-1zM290 663.1h1v1.5h-1zM291 663.9h1v2.5h-1zM291 666.3h1v1.5h-1zM292 672.9h2v2.5h-2zM292 664.6h1v2.5h-1zM292 664.6h1v2h-1zM293 666.4h1v2h-1zM293 665.2h1v2.5h-1zM294 666.6h1v2.5h-1zM294 668.0h1v1.5h-1zM295 657.5h1v2.1h-1zM295 669.5h1v2h-1zM295 672.3h1v2.5h-1zM296 671.2h1v2.5h-1zM296 671.9h1v2h-1zM297 673.3h1v1.5h-1zM297 675.6h1v2h-1zM298 672.3h1v1.5h-1zM298 675.8h1v1.5h-1zM299 667.2h2v2.6h-2zM299 678.5h1v1.5h-1zM299 674.5h1v2h-1zM300 679.5h1v1.5h-1zM300 676.5h1v2h-1zM301 680.9h1v2h-1zM301 677.2h1v1.5h-1zM302 668.8h1v2.4h-1zM302 682.1h1v2h-1zM302 681.5h1v2h-1zM303 685.8h2v2.5h-2zM303 678.2h1v1.5h-1zM303 676.3h1v1.5h-1zM304 675.7h1v2.5h-1zM304 672.2h1v2.5h-1zM305 682.7h1v2.5h-1zM305 677.0h1v2.5h-1zM305 672.2h1v1.5h-1zM306 668.5h1v1.5h-1zM306 674.8h1v1.5h-1zM307 674.4h1v1.5h-1zM307 668.6h1v1.5h-1zM308 662.1h2v2.0h-2zM308 667.3h1v2.5h-1zM308 669.3h1v2h-1zM309 656.3h1v1.9h-1zM309 668.9h1v2.5h-1zM309 664.9h1v2.5h-1zM310 667.8h1v1.5h-1zM310 669.1h1v2.5h-1zM311 660.0h2v2.4h-2zM311 663.5h1v2.5h-1zM311 665.5h1v2h-1zM312 657.0h2v1.7h-2zM312 663.2h1v2.5h-1zM312 663.4h1v2.5h-1zM313 669.0h1v2.5h-1zM313 666.0h1v1.5h-1zM313 664.3h1v1.5h-1zM314 668.5h1v1.5h-1zM314 669.2h1v2.5h-1zM315 672.7h2v2.5h-2zM315 665.8h1v2h-1zM315 662.2h1v2.5h-1zM316 670.6h1v2.5h-1zM316 668.5h1v1.5h-1zM316 665.1h1v1.5h-1zM317 663.1h1v2h-1zM317 665.7h1v1.5h-1zM318 660.0h1v2.5h-1zM318 663.8h1v2h-1zM319 663.5h1v2.5h-1zM319 667.4h1v2.5h-1zM320 656.0h2v2.8h-2zM320 666.7h1v2.5h-1zM320 659.4h1v2h-1zM321 664.1h1v2.5h-1zM321 662.1h1v2h-1zM322 661.3h1v2.5h-1zM322 662.2h1v1.5h-1zM323 664.6h1v2h-1zM323 668.7h1v2h-1zM324 667.7h1v2.5h-1zM324 665.1h1v2h-1zM325 679.2h1v2.5h-1zM325 669.3h1v2h-1zM325 670.0h1v1.5h-1zM326 675.4h2v2.5h-2zM326 672.9h1v2h-1zM326 672.9h1v1.5h-1zM327 670.8h1v1.5h-1zM327 674.1h1v2h-1zM328 663.8h1v2.4h-1zM328 670.5h1v2h-1zM328 675.7h1v1.5h-1zM329 683.4h2v2.5h-2zM329 677.9h1v2h-1zM329 676.0h1v1.5h-1zM330 677.8h1v2.5h-1zM330 677.8h1v1.5h-1zM331 691.4h1v2.5h-1zM331 677.3h1v2.5h-1zM331 678.1h1v2h-1zM332 678.4h1v1.5h-1zM332 678.4h1v1.5h-1zM333 679.8h1v2.5h-1zM333 682.3h1v2.5h-1zM334 675.0h1v2.5h-1zM334 679.0h1v1.5h-1zM335 676.8h1v1.5h-1zM335 671.5h1v1.5h-1zM336 663.2h2v2.0h-2zM336 672.4h1v2h-1zM336 671.1h1v2.5h-1zM337 673.2h1v2h-1zM337 672.0h1v1.5h-1zM338 664.0h1v2h-1zM338 668.6h1v2.5h-1zM339 673.1h1v2.5h-1zM339 673.6h1v1.5h-1zM340 657.7h1v1.6h-1zM340 666.0h1v2.5h-1zM340 668.1h1v2h-1zM341 669.5h1v2.5h-1zM341 665.6h1v2h-1zM342 663.5h1v2h-1zM342 664.7h1v1.5h-1zM343 663.9h1v2.5h-1zM343 668.6h1v1.5h-1zM344 668.3h1v2.5h-1zM344 664.3h1v1.5h-1zM345 670.4h1v2.5h-1zM345 665.9h1v1.5h-1zM346 666.6h1v2h-1zM346 662.0h1v2.5h-1zM347 661.4h1v1.5h-1zM347 667.5h1v2.5h-1zM348 663.1h1v1.5h-1zM348 663.1h1v1.5h-1zM349 667.6h1v2.5h-1zM349 663.5h1v2h-1zM350 663.7h1v1.5h-1zM350 666.4h1v2.5h-1zM351 664.1h1v2.5h-1zM351 663.3h1v1.5h-1zM352 667.1h1v2h-1zM352 664.6h1v1.5h-1zM353 674.4h2v2.5h-2zM353 666.8h1v2.5h-1zM353 667.1h1v2h-1zM354 665.7h1v1.5h-1zM354 666.3h1v2h-1zM355 666.7h1v2.5h-1zM355 671.9h1v2.5h-1zM356 667.5h1v2.5h-1zM356 672.1h1v2.5h-1zM357 683.3h1v2.5h-1zM357 668.1h1v2h-1zM357 673.1h1v2h-1zM358 674.5h1v1.5h-1zM358 676.2h1v2h-1zM359 677.5h1v2h-1zM359 675.9h1v2h-1zM360 679.5h1v2h-1zM360 680.5h1v2h-1zM361 676.4h1v2h-1zM361 676.8h1v2.5h-1zM362 682.6h2v2.5h-2zM362 678.8h1v1.5h-1zM362 674.4h1v1.5h-1zM363 671.9h2v3.0h-2zM363 680.8h1v1.5h-1zM363 681.1h1v2.5h-1zM364 670.5h1v1.5h-1zM364 669.4h1v2h-1zM365 675.7h1v2h-1zM365 670.5h1v1.5h-1zM366 677.4h1v2.5h-1zM366 670.9h1v1.5h-1zM366 671.1h1v2h-1zM367 668.1h1v2h-1zM367 668.8h1v2h-1zM368 665.1h1v1.5h-1zM368 673.2h1v2h-1zM369 670.0h1v2.5h-1zM369 670.1h1v2.5h-1zM370 657.0h2v2.3h-2zM370 663.5h1v1.5h-1zM370 669.3h1v2.5h-1zM371 664.7h1v2.5h-1zM371 664.8h1v1.5h-1zM372 662.2h1v2h-1zM372 666.3h1v2h-1zM373 672.7h2v2.5h-2zM373 670.8h1v1.5h-1zM373 668.6h1v2.5h-1zM374 662.7h1v2.5h-1zM374 662.1h1v2.5h-1zM375 670.5h1v2h-1zM375 669.9h1v1.5h-1zM376 668.3h1v2.5h-1zM376 664.6h1v2.5h-1zM377 672.7h1v2.5h-1zM377 664.6h1v2.5h-1zM377 666.8h1v1.5h-1zM378 654.8h2v1.9h-2zM378 661.8h1v2h-1zM378 663.6h1v2h-1zM379 666.8h1v2.5h-1zM379 667.4h1v2h-1zM380 666.3h1v1.5h-1zM380 661.4h1v1.5h-1zM381 670.2h1v2h-1zM381 667.4h1v2h-1zM382 665.3h1v1.5h-1zM382 662.7h1v1.5h-1zM383 678.4h1v2.5h-1zM383 668.4h1v1.5h-1zM383 668.4h1v2.5h-1zM384 667.5h1v1.5h-1zM384 667.7h1v1.5h-1zM385 672.3h1v2.5h-1zM385 672.2h1v2h-1zM386 670.0h1v1.5h-1zM386 673.2h1v1.5h-1zM387 681.3h1v2.5h-1zM387 672.1h1v1.5h-1zM387 676.2h1v2h-1zM388 669.7h1v2h-1zM388 676.2h1v2.5h-1zM389 667.8h1v1.9h-1zM389 675.0h1v2.5h-1zM389 676.7h1v2h-1zM390 682.5h1v2h-1zM390 680.1h1v2.5h-1zM391 675.5h1v2.5h-1zM391 680.1h1v2h-1zM392 686.4h1v2.5h-1zM392 678.1h1v2h-1zM392 674.1h1v2.5h-1zM393 686.6h1v2.5h-1zM393 680.7h1v1.5h-1zM393 678.8h1v2.5h-1zM394 671.0h1v2h-1zM394 672.7h1v2.5h-1zM395 670.0h1v2.5h-1zM395 670.2h1v1.5h-1zM396 678.5h1v2.5h-1zM396 675.2h1v2.5h-1zM396 675.8h1v2.5h-1zM397 673.9h1v1.5h-1zM397 673.0h1v2h-1zM398 664.4h1v1.5h-1zM398 671.6h1v2h-1zM399 665.5h1v2h-1zM399 664.6h1v1.5h-1zM400 661.4h1v2.3h-1zM400 667.9h1v2.5h-1zM400 667.3h1v2h-1zM401 671.5h1v2.5h-1zM401 668.0h1v1.5h-1zM401 667.7h1v2h-1zM402 661.1h1v2.5h-1zM402 668.6h1v1.5h-1zM403 670.9h1v2.5h-1zM403 666.8h1v1.5h-1zM403 663.3h1v1.5h-1zM404 667.3h1v1.5h-1zM404 665.4h1v1.5h-1zM405 661.9h1v1.5h-1zM405 664.9h1v2.5h-1zM406 661.2h1v2.5h-1zM406 661.1h1v1.5h-1zM407 672.4h1v2.5h-1zM407 666.3h1v1.5h-1zM407 663.2h1v2h-1zM408 661.4h1v1.5h-1zM408 663.7h1v2h-1zM409 671.9h2v2.5h-2zM409 667.5h1v1.5h-1zM409 663.4h1v1.5h-1zM410 672.2h1v2.5h-1zM410 666.8h1v2h-1zM410 663.4h1v2.5h-1zM411 669.0h1v1.5h-1zM411 663.7h1v2h-1zM412 657.0h1v3.0h-1zM412 662.4h1v2.5h-1zM412 668.8h1v1.5h-1zM413 667.8h1v2.5h-1zM413 671.9h1v2h-1zM414 669.8h1v1.5h-1zM414 667.6h1v2.5h-1zM415 671.5h1v1.5h-1zM415 672.4h1v1.5h-1zM416 667.2h2v2.0h-2zM416 672.7h1v2.5h-1zM416 673.8h1v2.5h-1zM417 670.5h1v1.5h-1zM417 671.8h1v2h-1zM418 678.0h1v2.5h-1zM418 672.5h1v2.5h-1zM419 671.0h2v2.7h-2zM419 679.6h1v2h-1zM419 678.1h1v1.5h-1zM420 680.6h1v2h-1zM420 679.2h1v2.5h-1zM421 682.6h1v2.5h-1zM421 678.7h1v2h-1zM422 680.7h1v2h-1zM422 679.4h1v2.5h-1zM423 675.3h1v2h-1zM423 680.3h1v2.5h-1zM424 682.1h1v2.5h-1zM424 674.0h1v2.5h-1zM424 677.2h1v2.5h-1zM425 662.6h1v2.8h-1zM425 675.9h1v2h-1zM425 671.6h1v1.5h-1zM426 682.3h1v2.5h-1zM426 669.0h1v2.5h-1zM426 677.7h1v2h-1zM427 662.7h2v1.7h-2zM427 669.3h1v2.5h-1zM427 670.2h1v2.5h-1zM428 663.4h1v1.5h-1zM428 669.2h1v1.5h-1zM429 675.5h1v2.5h-1zM429 667.6h1v1.5h-1zM429 665.3h1v1.5h-1zM430 675.3h2v2.5h-2zM430 666.8h1v2h-1zM430 662.5h1v2.5h-1zM431 655.5h1v3.0h-1zM431 667.9h1v1.5h-1zM431 667.8h1v1.5h-1zM432 663.9h1v2h-1zM432 665.2h1v2h-1zM433 665.9h1v2h-1zM433 668.1h1v1.5h-1zM434 662.3h1v2.5h-1zM434 667.6h1v2.5h-1zM435 669.5h1v1.5h-1zM435 665.1h1v1.5h-1zM436 662.4h1v1.5h-1zM436 664.0h1v2.5h-1zM437 660.2h1v2.5h-1zM437 663.1h1v2h-1zM438 673.0h2v2.5h-2zM438 664.7h1v2.5h-1zM438 666.4h1v2h-1zM439 658.9h2v2.5h-2zM439 662.1h1v1.5h-1zM439 664.4h1v2h-1zM440 662.9h1v2.5h-1zM440 664.4h1v2h-1zM441 667.7h1v1.5h-1zM441 662.3h1v1.5h-1zM442 663.2h1v2.5h-1zM442 666.5h1v1.5h-1zM443 668.4h1v2.5h-1zM443 669.1h1v1.5h-1zM444 681.2h1v2.5h-1zM444 673.0h1v1.5h-1zM444 667.1h1v2h-1zM445 675.1h1v2.5h-1zM445 671.5h1v2h-1zM446 671.5h1v1.5h-1zM446 674.9h1v2.5h-1zM447 675.3h1v1.5h-1zM447 673.5h1v1.5h-1zM448 671.3h1v1.5h-1zM448 675.3h1v2.5h-1zM449 677.8h1v1.5h-1zM449 676.1h1v1.5h-1zM450 676.9h1v2.5h-1zM450 678.4h1v2h-1zM451 678.5h1v2h-1zM451 678.1h1v1.5h-1zM452 689.6h1v2.5h-1zM452 679.4h1v2h-1zM452 679.0h1v1.5h-1zM453 679.1h1v1.5h-1zM453 673.2h1v2.5h-1zM454 666.4h2v1.8h-2zM454 672.0h1v2h-1zM454 673.9h1v2h-1zM455 671.5h1v1.5h-1zM455 670.3h1v2h-1zM456 671.0h1v1.5h-1zM456 670.1h1v1.5h-1zM457 667.7h1v1.5h-1zM457 667.2h1v2h-1zM458 668.4h1v1.5h-1zM458 666.2h1v1.5h-1zM459 667.3h1v1.5h-1zM459 668.2h1v1.5h-1zM460 668.0h1v2h-1zM460 665.7h1v2.5h-1zM461 670.7h1v2.5h-1zM461 665.2h1v2h-1zM461 663.2h1v1.5h-1zM462 661.1h1v2.5h-1zM462 664.5h1v2h-1zM463 664.7h1v2.5h-1zM463 666.0h1v2.5h-1zM464 666.4h1v2.5h-1zM464 662.5h1v2.5h-1zM465 662.4h1v2h-1zM465 662.4h1v2.5h-1zM466 659.0h1v1.8h-1zM466 664.0h1v1.5h-1zM466 664.1h1v1.5h-1zM467 666.7h1v1.5h-1zM467 666.9h1v1.5h-1zM468 664.7h1v1.5h-1zM468 669.4h1v1.5h-1zM469 662.4h1v2h-1zM469 661.1h1v2.5h-1zM470 667.1h1v2h-1zM470 665.1h1v2h-1zM471 677.7h1v2.5h-1zM471 666.7h1v1.5h-1zM471 663.5h1v2h-1zM472 658.3h2v2.4h-2zM472 670.3h1v2h-1zM472 670.1h1v2h-1zM473 664.3h1v2h-1zM473 664.4h1v2h-1zM474 676.2h1v2.5h-1zM474 672.2h1v2h-1zM474 667.3h1v2h-1zM475 667.4h1v2h-1zM475 667.0h1v2.5h-1zM476 673.7h1v2.5h-1zM476 671.7h1v1.5h-1zM477 667.6h1v1.8h-1zM477 675.5h1v2.5h-1zM477 678.4h1v2h-1zM478 676.3h1v2.5h-1zM478 675.2h1v1.5h-1zM479 675.7h1v1.5h-1zM479 681.8h1v1.5h-1zM480 670.7h2v2.7h-2zM480 681.7h1v2h-1zM480 680.5h1v1.5h-1zM481 681.9h1v2h-1zM481 675.9h1v2h-1zM482 677.9h1v1.5h-1zM482 677.4h1v2.5h-1zM483 680.9h1v2.5h-1zM483 678.0h1v2.5h-1zM483 676.6h1v1.5h-1zM484 682.9h1v2.5h-1zM484 668.8h1v1.5h-1zM484 672.7h1v1.5h-1zM485 674.9h2v2.5h-2zM485 670.3h1v2h-1zM485 669.1h1v2h-1zM486 663.8h2v2.1h-2zM486 669.9h1v2.5h-1zM486 669.7h1v2h-1zM487 671.6h1v2h-1zM487 672.0h1v2h-1zM488 663.0h1v2.5h-1zM488 667.9h1v2.5h-1zM489 669.8h1v2h-1zM489 666.9h1v2.5h-1zM490 662.5h1v2.5h-1zM490 665.9h1v2.5h-1zM491 660.8h1v2.5h-1zM491 665.1h1v2.5h-1zM492 663.3h1v2h-1zM492 661.8h1v1.5h-1zM493 664.4h1v2.5h-1zM493 663.1h1v2.5h-1zM494 661.7h1v2h-1zM494 663.7h1v2h-1zM495 659.3h1v1.5h-1zM495 659.1h1v2.5h-1zM496 664.0h1v1.5h-1zM496 665.5h1v1.5h-1zM497 658.9h1v1.5h-1zM497 666.0h1v2h-1zM497 666.2h1v2h-1zM498 656.9h1v1.9h-1zM498 665.5h1v2h-1zM498 666.4h1v2.5h-1zM499 654.4h1v1.7h-1zM499 667.3h1v1.5h-1zM499 665.7h1v2.5h-1zM500 668.9h1v1.5h-1zM500 669.6h1v2h-1zM501 668.4h1v2.5h-1zM501 664.9h1v2h-1zM502 666.7h1v2.5h-1zM502 667.1h1v1.5h-1zM503 679.8h2v2.5h-2zM503 671.4h1v2h-1zM503 669.4h1v2h-1zM504 659.7h1v1.9h-1zM504 670.9h1v2.5h-1zM504 667.0h1v1.5h-1zM505 671.4h1v1.5h-1zM505 672.7h1v1.5h-1zM506 671.6h1v1.5h-1zM506 671.3h1v2h-1zM507 665.5h1v1.9h-1zM507 673.1h1v2h-1zM507 674.1h1v1.5h-1zM508 683.2h2v2.5h-2zM508 675.9h1v1.5h-1zM508 673.4h1v1.5h-1zM509 675.0h1v2h-1zM509 679.7h1v1.5h-1zM510 682.5h1v2h-1zM510 679.1h1v2h-1zM511 678.4h1v1.5h-1zM511 675.6h1v2.5h-1zM512 672.8h1v2.5h-1zM512 677.8h1v2.5h-1zM513 672.7h1v2h-1zM513 673.0h1v2h-1zM514 664.1h2v2.9h-2zM514 673.7h1v2.5h-1zM514 675.7h1v2.5h-1zM515 674.4h1v2h-1zM515 671.7h1v2.5h-1zM516 666.8h1v2.5h-1zM516 672.1h1v1.5h-1zM517 678.8h2v2.5h-2zM517 670.5h1v2.5h-1zM517 668.8h1v2.5h-1zM518 661.1h1v2.3h-1zM518 667.1h1v2h-1zM518 665.3h1v2h-1zM519 655.7h2v1.6h-2zM519 662.9h1v1.5h-1zM519 665.1h1v2.5h-1zM520 670.1h1v2.5h-1zM520 660.7h1v2h-1zM520 664.4h1v1.5h-1zM521 658.4h1v2.9h-1zM521 666.6h1v1.5h-1zM521 667.2h1v1.5h-1zM522 653.1h1v2.5h-1zM522 667.3h1v2h-1zM522 668.7h1v1.5h-1zM523 665.9h1v2h-1zM523 667.7h1v2.5h-1zM524 666.1h1v1.5h-1zM524 664.8h1v1.5h-1zM525 673.6h1v2.5h-1zM525 667.3h1v2.5h-1zM525 664.2h1v2.5h-1zM526 666.2h1v1.5h-1zM526 661.7h1v1.5h-1zM527 668.5h1v2h-1zM527 666.5h1v1.5h-1zM528 673.6h2v2.5h-2zM528 666.6h1v2.5h-1zM528 663.5h1v1.5h-1zM529 658.2h2v1.9h-2zM529 667.9h1v2.5h-1zM529 667.4h1v2h-1zM530 665.4h1v2.5h-1zM530 665.3h1v2h-1zM531 664.2h1v2h-1zM531 664.5h1v1.5h-1zM532 671.0h1v2h-1zM532 669.1h1v2.5h-1zM533 676.2h1v2.5h-1zM533 668.4h1v2h-1zM533 666.9h1v2.5h-1zM534 658.6h2v2.8h-2zM534 668.1h1v1.5h-1zM534 666.7h1v2.5h-1zM535 672.2h1v2h-1zM535 674.2h1v2.5h-1zM536 666.7h1v1.8h-1zM536 673.3h1v2.5h-1zM536 677.9h1v2h-1zM537 675.5h1v2h-1zM537 676.8h1v2h-1zM538 675.5h1v2.5h-1zM538 678.5h1v2.5h-1zM539 676.9h1v2h-1zM539 682.3h1v1.5h-1zM540 670.3h2v2.8h-2zM540 678.7h1v2h-1zM540 680.7h1v2.5h-1zM541 683.3h1v2.5h-1zM541 679.6h1v2.5h-1zM541 675.8h1v1.5h-1zM542 672.6h1v1.5h-1zM542 675.4h1v1.5h-1zM543 672.6h1v2h-1zM543 671.9h1v2h-1zM544 667.5h1v2.5h-1zM544 672.6h1v2h-1zM545 679.5h1v2.5h-1zM545 668.5h1v2h-1zM545 670.4h1v2.5h-1zM546 672.6h1v2.5h-1zM546 671.7h1v2h-1zM547 667.9h1v2h-1zM547 668.0h1v2.5h-1zM548 663.3h1v1.5h-1zM548 667.5h1v2.5h-1zM549 664.7h1v1.5h-1zM549 664.2h1v1.5h-1zM550 674.0h1v2.5h-1zM550 662.0h1v2.5h-1zM550 666.4h1v2.5h-1zM551 674.4h2v2.5h-2zM551 666.9h1v1.5h-1zM551 669.6h1v2h-1zM552 665.4h1v2.5h-1zM552 661.5h1v2h-1zM553 655.1h2v2.1h-2zM553 665.3h1v2h-1zM553 667.2h1v2h-1zM554 664.1h1v2.5h-1zM554 669.0h1v2.5h-1zM555 668.0h1v1.5h-1zM555 667.0h1v2.5h-1zM556 663.9h1v1.5h-1zM556 664.4h1v2.5h-1zM557 664.1h1v2h-1zM557 663.6h1v2.5h-1zM558 669.8h1v2h-1zM558 666.8h1v2h-1zM559 661.9h1v1.5h-1zM559 665.6h1v1.5h-1zM560 659.5h2v2.2h-2zM560 668.5h1v1.5h-1zM560 668.5h1v1.5h-1zM561 657.1h2v2.2h-2zM561 665.1h1v1.5h-1zM561 668.9h1v2.5h-1zM562 666.2h1v1.5h-1zM562 670.1h1v2h-1zM563 667.4h1v2h-1zM563 671.3h1v1.5h-1zM564 674.1h1v2h-1zM564 674.8h1v2.5h-1zM565 679.5h2v2.5h-2zM565 668.5h1v1.5h-1zM565 674.3h1v1.5h-1zM566 675.3h1v2h-1zM566 678.2h1v2h-1zM567 685.1h2v2.5h-2zM567 674.8h1v2.5h-1zM567 679.4h1v2.5h-1zM568 678.6h1v1.5h-1zM568 677.9h1v2h-1zM569 670.2h2v1.9h-2zM569 678.0h1v1.5h-1zM569 680.0h1v1.5h-1zM570 679.3h1v2h-1zM570 676.0h1v2h-1zM571 680.8h1v2h-1zM571 680.5h1v2.5h-1zM572 669.3h2v2.7h-2zM572 675.0h1v1.5h-1zM572 675.8h1v2h-1zM573 671.1h1v2.5h-1zM573 675.0h1v1.5h-1zM574 666.6h2v1.8h-2zM574 669.8h1v1.5h-1zM574 669.7h1v2h-1zM575 668.3h1v2.5h-1zM575 670.5h1v1.5h-1zM576 664.9h1v2h-1zM576 668.1h1v1.5h-1zM577 656.5h2v2.7h-2zM577 667.2h1v2.5h-1zM577 663.4h1v2.5h-1zM578 667.2h1v2h-1zM578 667.9h1v1.5h-1zM579 664.7h1v1.5h-1zM579 664.0h1v2h-1zM580 664.2h1v1.5h-1zM580 664.8h1v2h-1zM581 654.3h1v1.9h-1zM581 665.2h1v2h-1zM581 668.9h1v1.5h-1zM582 672.4h2v2.5h-2zM582 662.4h1v1.5h-1zM582 667.3h1v2h-1zM583 662.6h1v1.5h-1zM583 665.3h1v1.5h-1zM584 663.7h1v2.5h-1zM584 660.5h1v2.5h-1zM585 661.2h1v1.5h-1zM585 663.3h1v1.5h-1zM586 668.4h1v1.5h-1zM586 667.8h1v2.5h-1zM587 659.1h1v2h-1zM587 667.4h1v1.5h-1zM588 657.4h1v1.8h-1zM588 667.4h1v2.5h-1zM588 665.5h1v2.5h-1zM589 661.7h1v2.5h-1zM589 663.1h1v2.5h-1zM590 656.5h1v1.8h-1zM590 668.1h1v2h-1zM590 665.2h1v2h-1zM591 669.0h1v1.5h-1zM591 671.1h1v2.5h-1zM592 671.7h1v1.5h-1zM592 672.1h1v2h-1zM593 661.4h2v2.7h-2zM593 670.9h1v2.5h-1zM593 674.3h1v2h-1zM594 661.0h1v2.3h-1zM594 671.0h1v1.5h-1zM594 678.0h1v2h-1zM595 673.2h1v2.5h-1zM595 669.5h1v1.5h-1zM596 670.6h1v2.5h-1zM596 674.6h1v2h-1zM597 680.8h1v2h-1zM597 674.9h1v1.5h-1zM598 678.0h1v2.5h-1zM598 673.8h1v1.5h-1zM599 688.2h2v2.5h-2zM599 678.1h1v1.5h-1zM599 678.0h1v2h-1zM600 680.6h1v1.5h-1zM600 678.4h1v2.5h-1zM601 677.7h1v1.5h-1zM601 675.6h1v2.5h-1zM602 674.9h1v2.5h-1zM602 675.2h1v1.5h-1zM603 663.7h1v1.7h-1zM603 672.2h1v2.5h-1zM603 677.4h1v2.5h-1zM604 668.3h1v2.5h-1zM604 669.6h1v1.5h-1zM605 671.0h1v2.5h-1zM605 668.8h1v2h-1zM606 679.2h2v2.5h-2zM606 672.1h1v2.5h-1zM606 669.7h1v2.5h-1zM607 666.1h1v2h-1zM607 664.2h1v1.5h-1zM608 669.1h1v2h-1zM608 664.8h1v1.5h-1zM609 668.4h1v2h-1zM609 664.8h1v1.5h-1zM610 667.3h1v1.5h-1zM610 664.3h1v2.5h-1zM611 663.7h1v1.5h-1zM611 666.9h1v2h-1zM612 664.9h1v1.5h-1zM612 668.3h1v2.5h-1zM613 659.7h1v1.5h-1zM613 659.4h1v1.5h-1zM614 668.2h1v1.5h-1zM614 668.9h1v1.5h-1zM615 666.9h1v1.5h-1zM615 661.0h1v2.5h-1zM616 667.7h1v2h-1zM616 658.7h1v1.5h-1zM617 663.1h1v1.5h-1zM617 665.3h1v2h-1zM618 662.5h1v2.5h-1zM618 659.8h1v2.5h-1zM619 667.0h1v2h-1zM619 663.5h1v1.5h-1zM620 661.5h1v2.1h-1zM620 665.0h1v2.5h-1zM620 666.4h1v1.5h-1zM621 668.1h1v2.5h-1zM621 666.6h1v2.5h-1zM622 668.7h1v2.5h-1zM622 665.8h1v2h-1zM623 675.5h2v2.5h-2zM623 669.7h1v1.5h-1zM623 667.9h1v2h-1zM624 674.3h1v2h-1zM624 675.7h1v2.5h-1zM625 679.1h1v2.5h-1zM625 677.4h1v2h-1zM625 670.1h1v2.5h-1zM626 675.3h1v1.5h-1zM626 672.8h1v2h-1zM627 673.2h1v2.5h-1zM627 677.3h1v2h-1zM628 675.9h1v1.5h-1zM628 679.9h1v1.5h-1zM629 673.5h1v1.5h-1zM629 680.6h1v2.5h-1zM630 675.7h1v2.5h-1zM630 677.1h1v2.5h-1zM631 677.4h1v1.5h-1zM631 675.5h1v1.5h-1zM632 674.4h1v1.5h-1zM632 674.2h1v2.5h-1zM633 671.7h1v1.5h-1zM633 675.9h1v2.5h-1zM634 672.5h1v1.5h-1zM634 673.6h1v2.5h-1zM635 672.6h1v2h-1zM635 668.8h1v2.5h-1zM636 659.6h1v2.8h-1zM636 664.9h1v2h-1zM636 667.6h1v2h-1zM637 660.3h1v2.2h-1zM637 666.6h1v2.5h-1zM637 668.6h1v1.5h-1zM638 658.8h2v1.6h-2zM638 665.1h1v1.5h-1zM638 668.6h1v2h-1zM639 672.7h2v2.5h-2zM639 662.3h1v2h-1zM639 663.6h1v2h-1zM640 660.6h1v2h-1zM640 666.5h1v1.5h-1zM641 660.9h1v1.5h-1zM641 665.6h1v2h-1zM642 664.7h1v2h-1zM642 664.5h1v1.5h-1zM643 666.9h1v2.5h-1zM643 661.5h1v2h-1zM644 664.3h1v2.5h-1zM644 668.9h1v2h-1zM645 657.5h1v3.0h-1zM645 661.6h1v2h-1zM645 662.0h1v1.5h-1zM646 666.8h1v1.5h-1zM646 664.7h1v2.5h-1zM647 663.9h1v2h-1zM647 665.5h1v1.5h-1zM648 663.0h1v1.5h-1zM648 668.9h1v2h-1zM649 658.4h1v2.9h-1zM649 670.4h1v2h-1zM649 668.0h1v2h-1zM650 668.0h1v2.5h-1zM650 665.4h1v2.5h-1zM651 679.4h2v2.5h-2zM651 672.5h1v2h-1zM651 666.3h1v2h-1zM652 666.3h1v2h-1zM652 670.8h1v1.5h-1zM653 667.2h1v1.5h-1zM653 668.3h1v2h-1zM654 671.7h1v1.5h-1zM654 670.5h1v1.5h-1zM655 679.3h1v2.5h-1zM655 677.3h1v2.5h-1zM656 673.2h1v1.5h-1zM656 674.6h1v2h-1zM657 678.5h1v2h-1zM657 676.5h1v2h-1zM658 683.6h2v2.5h-2zM658 677.0h1v1.5h-1zM658 675.8h1v2h-1zM659 671.8h1v2.3h-1zM659 678.5h1v2.5h-1zM659 674.8h1v2.5h-1zM660 680.0h1v2.5h-1zM660 677.9h1v2.5h-1zM661 675.6h1v1.5h-1zM661 674.4h1v2.5h-1zM662 681.8h1v2.5h-1zM662 677.1h1v2.5h-1zM662 674.9h1v2.5h-1zM663 672.9h1v1.5h-1zM663 667.8h1v1.5h-1zM664 669.3h1v1.5h-1zM664 668.1h1v2h-1zM665 672.8h1v1.5h-1zM665 668.2h1v2h-1zM666 667.2h1v2.5h-1zM666 668.5h1v1.5h-1zM667 667.4h1v1.5h-1zM667 664.4h1v2.5h-1zM668 653.5h1v2.5h-1zM668 665.8h1v2.5h-1zM668 667.9h1v2.5h-1zM669 662.5h1v1.5h-1zM669 663.2h1v2h-1zM670 667.1h1v2h-1zM670 661.6h1v1.5h-1zM671 660.7h1v2.5h-1zM671 661.4h1v1.5h-1zM672 661.9h1v2.5h-1zM672 666.1h1v1.5h-1zM673 662.9h1v2.5h-1zM673 665.4h1v2.5h-1zM674 658.5h1v1.6h-1zM674 666.6h1v2.5h-1zM674 668.7h1v1.5h-1zM675 668.8h1v2h-1zM675 665.6h1v2.5h-1zM676 665.7h1v2.5h-1zM676 667.0h1v2.5h-1zM677 671.7h2v2.5h-2zM677 663.3h1v2h-1zM677 663.3h1v2.5h-1zM678 662.7h1v2h-1zM678 669.4h1v2h-1zM679 665.8h1v2h-1zM679 666.2h1v2.5h-1zM680 673.8h1v2.5h-1zM680 662.6h1v1.5h-1zM680 665.5h1v2h-1zM681 669.5h1v1.5h-1zM681 671.9h1v2h-1zM682 679.9h2v2.5h-2zM682 674.0h1v1.5h-1zM682 668.0h1v1.5h-1zM683 672.5h1v2.5h-1zM683 675.0h1v2.5h-1zM684 683.4h1v2.5h-1zM684 669.6h1v2.5h-1zM684 673.7h1v2.5h-1zM685 671.8h1v2.5h-1zM685 677.8h1v1.5h-1zM686 676.2h1v1.5h-1zM686 675.7h1v1.5h-1zM687 672.1h1v2.7h-1zM687 678.7h1v2h-1zM687 678.0h1v1.5h-1zM688 680.2h1v1.5h-1zM688 679.3h1v2.5h-1zM689 686.5h1v2.5h-1zM689 679.4h1v1.5h-1zM689 682.1h1v2.5h-1zM690 680.0h1v2.5h-1zM690 674.3h1v2.5h-1zM691 682.3h2v2.5h-2zM691 678.4h1v1.5h-1zM691 679.1h1v2h-1zM692 671.5h1v2.5h-1zM692 676.2h1v1.5h-1zM693 669.5h1v2h-1zM693 671.7h1v2h-1zM694 674.7h2v2.5h-2zM694 671.5h1v1.5h-1zM694 667.7h1v1.5h-1zM695 673.9h1v2.5h-1zM695 668.5h1v2h-1zM695 670.9h1v2.5h-1zM696 660.2h1v1.6h-1zM696 670.2h1v2h-1zM696 672.5h1v1.5h-1zM697 657.2h2v2.3h-2zM697 662.6h1v2h-1zM697 669.3h1v1.5h-1zM698 670.0h1v1.5h-1zM698 666.6h1v1.5h-1zM699 665.9h1v1.5h-1zM699 660.6h1v1.5h-1zM700 662.6h1v2h-1zM700 668.1h1v2.5h-1zM701 666.1h1v1.5h-1zM701 663.6h1v1.5h-1zM702 663.9h1v2.5h-1zM702 667.2h1v2.5h-1zM703 653.6h2v2.1h-2zM703 664.6h1v2.5h-1zM703 664.0h1v2.5h-1zM704 663.9h1v2h-1zM704 661.7h1v1.5h-1zM705 665.6h1v2.5h-1zM705 663.1h1v1.5h-1zM706 664.4h1v2h-1zM706 664.5h1v2h-1zM707 675.1h1v2.5h-1zM707 666.1h1v1.5h-1zM707 668.8h1v2.5h-1zM708 670.8h2v2.5h-2zM708 663.9h1v1.5h-1zM708 666.5h1v2.5h-1zM709 679.3h2v2.5h-2zM709 668.2h1v2h-1zM709 667.4h1v2.5h-1zM710 660.7h2v2.0h-2zM710 670.5h1v1.5h-1zM710 668.4h1v2.5h-1zM711 667.5h1v2h-1zM711 668.9h1v2.5h-1zM712 671.1h1v1.5h-1zM712 671.6h1v1.5h-1zM713 678.9h1v2.5h-1zM713 676.1h1v2h-1zM713 670.1h1v1.5h-1zM714 671.5h1v2.5h-1zM714 677.6h1v2.5h-1zM715 676.7h1v2h-1zM715 675.1h1v2.5h-1zM716 670.9h1v2.8h-1zM716 676.7h1v2h-1zM716 676.3h1v1.5h-1zM717 673.2h1v2.5h-1zM717 674.9h1v2.5h-1zM718 681.6h1v2h-1zM718 680.1h1v1.5h-1zM719 678.0h1v1.5h-1zM719 676.4h1v2.5h-1zM720 679.5h1v2h-1zM720 674.1h1v2.5h-1zM721 672.6h1v2h-1zM721 673.0h1v2h-1zM722 675.3h1v2h-1zM722 673.0h1v2h-1zM723 681.3h1v2.5h-1zM723 670.3h1v1.5h-1zM723 671.1h1v1.5h-1zM724 667.9h1v2.5h-1zM724 672.7h1v1.5h-1zM725 669.7h1v2h-1zM725 667.8h1v2.5h-1zM726 668.9h1v2.5h-1zM726 664.8h1v2.5h-1zM727 669.0h1v2h-1zM727 664.3h1v2.5h-1zM728 675.2h1v2.5h-1zM728 666.5h1v2h-1zM728 667.7h1v1.5h-1zM729 661.4h1v2h-1zM729 662.1h1v2h-1zM730 663.0h1v1.5h-1zM730 667.2h1v2.5h-1zM731 662.4h1v2h-1zM731 667.5h1v1.5h-1zM732 659.0h1v2.8h-1zM732 664.4h1v1.5h-1zM732 669.3h1v2.5h-1zM733 666.2h1v2h-1zM733 661.3h1v2h-1zM734 669.2h1v2.5h-1zM734 663.3h1v2.5h-1zM734 659.6h1v1.5h-1zM735 663.8h1v2h-1zM735 666.8h1v2.5h-1zM736 662.0h1v1.5h-1zM736 665.0h1v1.5h-1zM737 653.2h1v2.3h-1zM737 669.6h1v2.5h-1zM737 665.0h1v2h-1zM738 666.0h1v2h-1zM738 662.4h1v2.5h-1zM739 663.7h1v2.5h-1zM739 669.8h1v1.5h-1zM740 666.3h1v2.5h-1zM740 664.8h1v2.5h-1zM741 667.8h1v2.5h-1zM741 669.7h1v2h-1zM742 670.0h1v2.5h-1zM742 668.8h1v2.5h-1zM743 672.3h1v2.5h-1zM743 674.1h1v2.5h-1zM744 666.0h2v2.4h-2zM744 674.2h1v2h-1zM744 674.7h1v2h-1zM745 671.0h1v2h-1zM745 672.6h1v2.5h-1zM746 674.5h1v2.5h-1zM746 675.6h1v2h-1zM747 673.9h1v2.1h-1zM747 679.2h1v2h-1zM747 682.2h1v2h-1zM748 678.7h1v1.5h-1zM748 675.6h1v2h-1zM749 681.6h1v2.5h-1zM749 676.9h1v2.5h-1zM749 677.9h1v1.5h-1zM750 679.0h1v1.5h-1zM750 675.5h1v2.5h-1zM751 661.1h1v2.3h-1zM751 671.6h1v2.5h-1zM751 672.5h1v2h-1zM752 674.3h1v2h-1zM752 676.3h1v2.5h-1zM753 674.7h1v2.5h-1zM753 668.8h1v2.5h-1zM754 667.5h1v2.5h-1zM754 669.6h1v2h-1zM755 670.5h1v2.5h-1zM755 667.1h1v2h-1zM756 662.1h1v2h-1zM756 662.5h1v1.5h-1zM757 663.7h1v2.5h-1zM757 665.8h1v1.5h-1zM758 674.3h1v2.5h-1zM758 669.9h1v2.5h-1zM758 668.6h1v2.5h-1zM759 654.6h1v2.8h-1zM759 666.7h1v2h-1zM759 667.8h1v2h-1zM760 668.8h1v1.5h-1zM760 669.6h1v1.5h-1zM761 662.8h1v1.5h-1zM761 663.8h1v2.5h-1zM762 652.1h2v2.3h-2zM762 664.3h1v2h-1zM762 661.0h1v1.5h-1zM763 665.2h1v2h-1zM763 663.9h1v2.5h-1zM764 666.0h1v1.5h-1zM764 661.8h1v2h-1zM765 672.1h1v2.5h-1zM765 663.0h1v2h-1zM765 663.7h1v2h-1zM766 663.8h1v2.5h-1zM766 666.6h1v1.5h-1zM767 669.3h1v2.5h-1zM767 663.4h1v1.5h-1zM767 664.6h1v1.5h-1zM768 672.9h2v2.5h-2zM768 671.1h1v2.5h-1zM768 663.2h1v2.5h-1zM769 667.8h1v2.5h-1zM769 670.5h1v2.5h-1zM770 668.4h1v1.5h-1zM770 671.1h1v1.5h-1zM771 670.9h1v2.5h-1zM771 667.3h1v2.5h-1zM772 672.8h1v2.5h-1zM772 674.7h1v1.5h-1zM773 676.9h1v2h-1zM773 676.3h1v2.5h-1zM774 684.0h1v2.5h-1zM774 669.0h1v1.5h-1zM774 676.1h1v1.5h-1zM775 666.0h2v2.2h-2zM775 679.1h1v1.5h-1zM775 673.2h1v1.5h-1zM776 675.4h1v2h-1zM776 675.0h1v2.5h-1zM777 682.0h1v1.5h-1zM777 677.9h1v2h-1zM778 687.4h2v2.5h-2zM778 682.4h1v2h-1zM778 675.9h1v2h-1zM779 684.9h1v2.5h-1zM779 676.9h1v2h-1zM779 677.7h1v1.5h-1zM780 677.4h1v2h-1zM780 674.2h1v1.5h-1zM781 671.3h1v1.5h-1zM781 675.7h1v2.5h-1zM782 672.3h1v2.5h-1zM782 674.1h1v2.5h-1zM783 670.6h1v2.5h-1zM783 668.8h1v2h-1zM784 668.4h1v2.5h-1zM784 671.2h1v2h-1zM785 678.6h1v2.5h-1zM785 669.2h1v2h-1zM785 668.6h1v2.5h-1zM786 675.2h1v2.5h-1zM786 666.7h1v2.5h-1zM786 662.5h1v2.5h-1zM787 662.5h1v2h-1zM787 661.3h1v2h-1zM788 655.1h2v1.9h-2zM788 669.8h1v2h-1zM788 666.4h1v2.5h-1zM789 658.2h2v1.6h-2zM789 667.5h1v2.5h-1zM789 668.5h1v2.5h-1zM790 668.3h1v1.5h-1zM790 667.3h1v1.5h-1zM791 653.9h2v2.2h-2zM791 661.6h1v1.5h-1zM791 662.1h1v2h-1zM792 656.5h1v2.6h-1zM792 662.5h1v2.5h-1zM792 666.2h1v2h-1zM793 665.6h1v2h-1zM793 669.0h1v2h-1zM794 669.3h1v2.5h-1zM794 661.7h1v2.5h-1zM795 656.7h2v2.7h-2zM795 668.8h1v1.5h-1zM795 663.8h1v2h-1zM796 673.5h1v2.5h-1zM796 664.8h1v2h-1zM796 661.5h1v2h-1zM797 669.7h2v2.5h-2zM797 668.0h1v2.5h-1zM797 669.0h1v2h-1zM798 674.3h1v2.5h-1zM798 668.6h1v2.5h-1zM798 667.6h1v1.5h-1zM799 670.4h1v2.5h-1zM799 663.8h1v2h-1zM800 674.4h2v2.5h-2zM800 665.1h1v2h-1zM800 666.6h1v2.5h-1zM801 671.9h1v1.5h-1zM801 670.1h1v1.5h-1zM802 675.1h1v1.5h-1zM802 665.9h1v2.5h-1zM803 673.6h1v2h-1zM803 670.7h1v1.5h-1zM804 676.3h1v1.5h-1zM804 671.7h1v2.5h-1zM805 676.0h1v1.5h-1zM805 676.6h1v1.5h-1zM806 684.6h2v2.5h-2zM806 676.8h1v2h-1zM806 678.5h1v1.5h-1zM807 668.0h2v2.1h-2zM807 682.5h1v2h-1zM807 681.0h1v2h-1zM808 676.9h1v2.5h-1zM808 676.5h1v2h-1zM809 670.1h1v2.9h-1zM809 678.6h1v2h-1zM809 674.5h1v2.5h-1zM810 682.2h1v2.5h-1zM810 672.4h1v1.5h-1zM810 677.6h1v2h-1zM811 670.5h1v1.5h-1zM811 670.7h1v2h-1zM812 673.1h1v2.5h-1zM812 668.4h1v1.5h-1zM813 679.8h1v2.5h-1zM813 671.0h1v1.5h-1zM813 666.5h1v1.5h-1zM814 654.0h1v1.7h-1zM814 662.9h1v2h-1zM814 668.3h1v2h-1zM815 674.9h1v2.5h-1zM815 669.8h1v1.5h-1zM815 669.3h1v1.5h-1zM816 667.9h1v1.5h-1zM816 663.0h1v2.5h-1zM817 667.8h1v1.5h-1zM817 662.1h1v1.5h-1zM818 661.3h1v2.5h-1zM818 662.7h1v2.5h-1zM819 670.5h1v1.5h-1zM819 663.0h1v2h-1zM820 662.3h1v2h-1zM820 666.6h1v1.5h-1zM821 666.8h1v2h-1zM821 664.7h1v2.5h-1zM822 660.9h1v2.5h-1zM822 661.5h1v2h-1zM823 654.2h1v2.4h-1zM823 661.1h1v1.5h-1zM823 661.8h1v2.5h-1zM824 669.1h1v2h-1zM824 666.3h1v1.5h-1zM825 663.4h1v2.5h-1zM825 666.3h1v1.5h-1zM826 665.5h1v2.5h-1zM826 663.0h1v1.5h-1zM827 668.8h1v1.5h-1zM827 668.7h1v2h-1zM828 661.6h1v1.7h-1zM828 670.1h1v1.5h-1zM828 671.7h1v2.5h-1zM829 666.6h1v1.5h-1zM829 667.8h1v2.5h-1zM830 660.4h1v2.4h-1zM830 670.1h1v1.5h-1zM830 673.3h1v1.5h-1zM831 663.1h2v2.2h-2zM831 670.6h1v2h-1zM831 666.6h1v2h-1zM832 670.9h1v2.5h-1zM832 672.3h1v2h-1zM833 679.3h1v2.5h-1zM833 670.9h1v1.5h-1zM833 672.0h1v2.5h-1zM834 671.9h1v2h-1zM834 680.4h1v2.5h-1zM835 668.0h1v2.5h-1zM835 680.4h1v1.5h-1zM835 674.2h1v1.5h-1zM836 674.2h1v2.5h-1zM836 675.5h1v1.5h-1zM837 678.2h1v2h-1zM837 680.4h1v1.5h-1zM838 684.0h2v2.5h-2zM838 680.0h1v2.5h-1zM838 678.8h1v2.5h-1zM839 686.1h1v2.5h-1zM839 682.3h1v2h-1zM839 676.9h1v2.5h-1zM840 674.2h1v2.5h-1zM840 679.5h1v2.5h-1zM841 683.7h2v2.5h-2zM841 675.9h1v2.5h-1zM841 671.4h1v2.5h-1zM842 679.7h2v2.5h-2zM842 673.3h1v2h-1zM842 668.2h1v2.5h-1zM843 669.5h1v2.5h-1zM843 666.1h1v2h-1zM844 669.7h1v1.5h-1zM844 674.1h1v2h-1zM845 670.1h1v1.5h-1zM845 666.3h1v1.5h-1zM846 667.6h1v2.5h-1zM846 666.3h1v2h-1zM847 669.6h1v2h-1zM847 663.7h1v2h-1zM848 667.5h1v2h-1zM848 664.4h1v2h-1zM849 655.9h1v1.6h-1zM849 665.6h1v1.5h-1zM849 663.5h1v2h-1zM850 664.1h1v2h-1zM850 664.2h1v2.5h-1zM851 664.0h1v2h-1zM851 672.2h1v2h-1zM852 667.4h1v2.5h-1zM852 661.2h1v2.5h-1zM853 663.0h1v1.5h-1zM853 667.2h1v2.5h-1zM854 665.0h1v2h-1zM854 664.0h1v2h-1zM855 670.5h1v2.5h-1zM855 664.0h1v1.5h-1zM856 656.1h2v1.7h-2zM856 664.3h1v2h-1zM856 663.5h1v2h-1zM857 665.3h1v2h-1zM857 663.8h1v2h-1zM858 673.5h1v2.5h-1zM858 663.9h1v2h-1zM858 669.5h1v2h-1zM859 671.1h1v2h-1zM859 670.9h1v2h-1zM860 664.9h1v2.5h-1zM860 666.1h1v1.5h-1zM861 670.1h1v1.5h-1zM861 667.4h1v1.5h-1zM862 677.0h2v2.5h-2zM862 669.8h1v2.5h-1zM862 675.7h1v1.5h-1zM863 675.2h1v1.5h-1zM863 674.4h1v2h-1zM864 686.9h2v2.5h-2zM864 680.5h1v2.5h-1zM864 675.0h1v2.5h-1zM865 667.6h2v2.6h-2zM865 675.3h1v2h-1zM865 678.5h1v1.5h-1zM866 682.8h1v2h-1zM866 682.0h1v2h-1zM867 680.8h1v2h-1zM867 682.8h1v2h-1zM868 669.6h1v2.2h-1zM868 674.9h1v1.5h-1zM868 680.5h1v2.5h-1zM869 685.2h2v2.5h-2zM869 678.9h1v2.5h-1zM869 678.2h1v2h-1zM870 679.2h1v2h-1zM870 676.8h1v1.5h-1zM871 672.6h1v2h-1zM871 678.4h1v1.5h-1zM872 668.5h1v2h-1zM872 671.3h1v2.5h-1zM873 673.6h1v1.5h-1zM873 668.5h1v2h-1zM874 677.5h1v2.5h-1zM874 664.5h1v2h-1zM874 666.8h1v1.5h-1zM875 664.3h1v2.5h-1zM875 669.3h1v1.5h-1zM876 660.0h2v1.7h-2zM876 668.4h1v2.5h-1zM876 662.6h1v1.5h-1zM877 663.1h1v2h-1zM877 666.4h1v2.5h-1zM878 672.0h2v2.5h-2zM878 662.9h1v2.5h-1zM878 664.5h1v2h-1zM879 671.3h1v2.5h-1zM879 663.5h1v2h-1zM879 666.1h1v2.5h-1zM880 667.6h1v2h-1zM880 663.8h1v2h-1zM881 672.3h2v2.5h-2zM881 664.9h1v1.5h-1zM881 668.2h1v2.5h-1zM882 654.4h2v1.7h-2zM882 664.5h1v2h-1zM882 664.9h1v2h-1zM883 669.5h2v2.5h-2zM883 665.7h1v2.5h-1zM883 666.6h1v2h-1zM884 664.6h1v2.5h-1zM884 661.9h1v2.5h-1zM885 670.4h1v2h-1zM885 666.9h1v1.5h-1zM886 655.2h1v2.2h-1zM886 668.3h1v2h-1zM886 666.9h1v2h-1zM887 676.3h1v2.5h-1zM887 669.4h1v2.5h-1zM887 669.9h1v2h-1zM888 670.2h1v2h-1zM888 668.5h1v2.5h-1zM889 672.1h1v2.5h-1zM889 669.8h1v2h-1zM890 668.7h1v2h-1zM890 668.0h1v2h-1zM891 660.9h2v1.7h-2zM891 673.8h1v2h-1zM891 673.6h1v2h-1zM892 674.5h1v2.5h-1zM892 670.0h1v1.5h-1zM893 664.3h2v3.0h-2zM893 677.1h1v1.5h-1zM893 675.5h1v2h-1zM894 667.2h2v2.3h-2zM894 680.3h1v1.5h-1zM894 677.2h1v2h-1zM895 673.4h1v2.5h-1zM895 674.8h1v2.5h-1zM896 676.9h1v1.5h-1zM896 677.3h1v1.5h-1zM897 678.3h1v1.5h-1zM897 677.7h1v2.5h-1zM898 677.0h1v2h-1zM898 679.6h1v2.5h-1zM899 685.2h1v2.5h-1zM899 673.1h1v2h-1zM899 677.5h1v1.5h-1zM900 664.4h2v2.3h-2zM900 676.0h1v2h-1zM900 679.3h1v2h-1zM901 684.0h2v2.5h-2zM901 669.6h1v2.5h-1zM901 670.4h1v2h-1zM902 669.3h1v2.5h-1zM902 670.8h1v1.5h-1zM903 672.6h1v2h-1zM903 667.9h1v2h-1zM904 668.2h1v2h-1zM904 668.5h1v2.5h-1zM905 669.5h1v2.5h-1zM905 666.7h1v2h-1zM906 668.5h1v2.5h-1zM906 663.5h1v2h-1zM907 669.2h1v2h-1zM907 667.5h1v2h-1zM908 661.8h1v2.5h-1zM908 668.0h1v1.5h-1zM909 671.4h1v2.5h-1zM909 664.1h1v1.5h-1zM909 661.5h1v1.5h-1zM910 663.6h1v2.5h-1zM910 660.6h1v1.5h-1zM911 669.8h2v2.5h-2zM911 658.7h1v1.5h-1zM911 666.4h1v2.5h-1zM912 668.0h1v2h-1zM912 664.3h1v1.5h-1zM913 664.4h1v2.5h-1zM913 672.8h1v2h-1zM914 660.2h1v2.5h-1zM914 663.8h1v1.5h-1zM915 660.3h1v2h-1zM915 666.7h1v2h-1zM916 675.8h1v2.5h-1zM916 663.3h1v1.5h-1zM916 664.5h1v1.5h-1zM917 673.5h1v2.5h-1zM917 669.9h1v2h-1zM917 666.7h1v2.5h-1zM918 668.6h1v2h-1zM918 667.1h1v2h-1zM919 669.5h1v1.5h-1zM919 670.6h1v2.5h-1zM920 667.2h1v1.5h-1zM920 669.3h1v2h-1zM921 673.5h1v2h-1zM921 668.7h1v2h-1zM922 673.3h1v1.5h-1zM922 668.5h1v2.5h-1zM923 669.4h2v2.9h-2zM923 677.1h1v1.5h-1zM923 674.2h1v2.5h-1zM924 673.8h1v2.5h-1zM924 674.7h1v1.5h-1zM925 679.8h1v2.5h-1zM925 676.7h1v1.5h-1zM926 676.6h1v2h-1zM926 676.6h1v1.5h-1zM927 681.4h1v2.5h-1zM927 680.6h1v2.5h-1zM928 669.8h2v2.6h-2zM928 676.8h1v1.5h-1zM928 673.4h1v2.5h-1zM929 676.6h1v2.5h-1zM929 673.8h1v2.5h-1zM930 669.6h1v2h-1zM930 676.7h1v2.5h-1zM931 669.2h1v2.5h-1zM931 671.7h1v1.5h-1zM932 671.5h1v1.5h-1zM932 671.6h1v2h-1zM933 665.2h1v2h-1zM933 668.8h1v2h-1zM934 669.3h1v2.5h-1zM934 664.7h1v2h-1zM935 671.1h2v2.5h-2zM935 664.5h1v2h-1zM935 666.3h1v2.5h-1zM936 663.9h1v1.5h-1zM936 664.1h1v2.5h-1zM937 657.1h2v2.3h-2zM937 665.1h1v1.5h-1zM937 661.1h1v1.5h-1zM938 666.5h1v1.5h-1zM938 668.5h1v2h-1zM939 658.7h2v2.9h-2zM939 671.4h1v2.5h-1zM939 665.5h1v2h-1zM940 661.5h1v2.5h-1zM940 665.9h1v1.5h-1zM941 660.7h1v2h-1zM941 664.6h1v2.5h-1zM942 666.9h1v2h-1zM942 665.0h1v2.5h-1zM943 666.8h1v1.5h-1zM943 660.2h1v1.5h-1zM944 663.6h1v2.5h-1zM944 664.8h1v2.5h-1zM945 664.5h1v1.5h-1zM945 666.8h1v2h-1zM946 661.9h1v2.5h-1zM946 669.1h1v2h-1zM947 666.8h1v2h-1zM947 662.9h1v2.5h-1zM948 668.3h1v2h-1zM948 673.2h1v2h-1zM949 662.0h2v2.7h-2zM949 667.5h1v1.5h-1zM949 670.4h1v1.5h-1zM950 661.0h1v1.8h-1zM950 673.5h1v2h-1zM950 669.9h1v1.5h-1zM951 669.0h1v2h-1zM951 669.2h1v2.5h-1zM952 674.7h1v1.5h-1zM952 676.4h1v2h-1zM953 669.3h1v2.3h-1zM953 675.5h1v2h-1zM953 677.5h1v1.5h-1zM954 672.5h1v3.0h-1zM954 679.4h1v2h-1zM954 677.4h1v2h-1zM955 678.3h1v2.5h-1zM955 679.9h1v2h-1zM956 680.8h1v2h-1zM956 680.5h1v2h-1zM957 677.1h1v2.5h-1zM957 674.5h1v1.5h-1zM958 676.6h1v1.5h-1zM958 680.7h1v1.5h-1zM959 679.2h1v1.5h-1zM959 672.8h1v2.5h-1zM960 669.7h1v2.5h-1zM960 674.3h1v2.5h-1zM961 671.3h1v1.5h-1zM961 667.0h1v2h-1zM962 679.6h2v2.5h-2zM962 673.2h1v2h-1zM962 667.4h1v2.5h-1zM963 671.0h1v1.5h-1zM963 669.0h1v1.5h-1zM964 676.7h2v2.5h-2zM964 664.8h1v2.5h-1zM964 665.0h1v2.5h-1zM965 665.3h1v2.5h-1zM965 665.7h1v2h-1zM966 670.2h1v2h-1zM966 661.5h1v2.5h-1zM967 670.6h2v2.5h-2zM967 667.4h1v2h-1zM967 663.5h1v1.5h-1zM968 668.4h1v2.5h-1zM968 663.1h1v1.5h-1zM969 665.6h1v2h-1zM969 663.8h1v1.5h-1zM970 667.2h1v2.5h-1zM970 662.5h1v2.5h-1zM971 666.7h1v2h-1zM971 662.4h1v1.5h-1zM972 667.8h1v1.5h-1zM972 665.0h1v2h-1zM973 660.2h1v1.5h-1zM973 660.3h1v2h-1zM974 655.5h1v2.2h-1zM974 667.1h1v2h-1zM974 663.8h1v2h-1zM975 669.6h2v2.5h-2zM975 664.0h1v1.5h-1zM975 664.9h1v1.5h-1zM976 664.0h1v2.5h-1zM976 665.2h1v1.5h-1zM977 669.1h1v2h-1zM977 664.9h1v1.5h-1zM978 666.9h1v1.5h-1zM978 670.1h1v1.5h-1zM979 666.8h1v2.5h-1zM979 669.8h1v2.5h-1zM980 668.9h1v2.5h-1zM980 668.0h1v2h-1zM981 670.7h1v2.5h-1zM981 673.9h1v1.5h-1zM982 678.7h1v2h-1zM982 671.5h1v1.5h-1zM983 673.2h1v1.5h-1zM983 678.0h1v2h-1zM984 682.9h1v2.5h-1zM984 674.4h1v2.5h-1zM984 678.8h1v1.5h-1zM985 682.5h1v2.5h-1zM985 676.6h1v2.5h-1zM986 678.8h1v2.5h-1zM986 674.2h1v2h-1zM987 682.1h1v2.5h-1zM987 678.1h1v1.5h-1zM988 680.1h1v2h-1zM988 675.3h1v1.5h-1zM989 674.0h1v2h-1zM989 673.7h1v1.5h-1zM990 670.8h1v2h-1zM990 668.5h1v2h-1zM991 677.2h2v2.5h-2zM991 667.7h1v2h-1zM991 668.9h1v2h-1zM992 671.8h1v2.5h-1zM992 672.4h1v2.5h-1zM993 670.4h1v2h-1zM993 670.9h1v1.5h-1zM994 665.4h1v2.5h-1zM994 665.6h1v2h-1zM995 664.6h1v1.5h-1zM995 664.0h1v2h-1zM996 664.1h1v2h-1zM996 662.1h1v1.5h-1zM997 665.0h1v2h-1zM997 667.2h1v2h-1zM998 661.9h1v2.5h-1zM998 666.0h1v1.5h-1zM999 663.3h1v2.5h-1zM999 665.1h1v2.5h-1zM1000 661.6h1v1.5h-1zM1000 661.7h1v2.5h-1zM1001 656.8h1v1.9h-1zM1001 664.2h1v2.5h-1zM1001 663.1h1v2.5h-1zM1002 671.2h2v2.5h-2zM1002 666.4h1v2.5h-1zM1002 666.3h1v2.5h-1zM1003 670.4h1v2.5h-1zM1003 668.7h1v2.5h-1zM1003 662.4h1v2.5h-1zM1004 665.1h1v2h-1zM1004 661.5h1v2.5h-1zM1005 670.2h1v2.5h-1zM1005 664.4h1v1.5h-1zM1006 664.0h1v1.5h-1zM1006 667.0h1v1.5h-1zM1007 667.4h1v1.5h-1zM1007 663.8h1v2h-1zM1008 667.8h1v2.5h-1zM1008 666.7h1v1.5h-1zM1009 666.5h1v1.5h-1zM1009 666.4h1v2h-1zM1010 672.5h1v1.5h-1zM1010 671.0h1v2h-1zM1011 674.3h1v2h-1zM1011 675.3h1v1.5h-1zM1012 673.7h1v2.5h-1zM1012 671.5h1v2h-1zM1013 669.1h1v1.9h-1zM1013 679.5h1v2h-1zM1013 678.9h1v1.5h-1zM1014 678.4h1v2.5h-1zM1014 678.4h1v1.5h-1zM1015 668.6h1v1.8h-1zM1015 681.2h1v2h-1zM1015 677.2h1v1.5h-1zM1016 670.6h2v2.4h-2zM1016 675.1h1v2h-1zM1016 680.9h1v2h-1zM1017 669.3h2v1.9h-2zM1017 678.2h1v1.5h-1zM1017 675.2h1v2.5h-1zM1018 669.6h1v2.5h-1zM1018 675.8h1v2.5h-1zM1019 672.1h1v2.5h-1zM1019 669.6h1v2h-1zM1020 661.7h2v2.3h-2zM1020 672.2h1v1.5h-1zM1020 673.8h1v1.5h-1zM1021 668.5h1v1.5h-1zM1021 670.4h1v2.5h-1zM1022 675.7h1v2.5h-1zM1022 668.8h1v2.5h-1zM1022 670.9h1v2.5h-1zM1023 668.4h1v2h-1zM1023 665.3h1v2.5h-1zM1024 675.8h1v2.5h-1zM1024 665.6h1v2h-1zM1024 667.7h1v2.5h-1zM1025 661.8h1v2h-1zM1025 661.5h1v2h-1zM1026 661.5h1v2.5h-1zM1026 662.3h1v2.5h-1zM1027 653.9h2v2.8h-2zM1027 661.1h1v1.5h-1zM1027 665.7h1v2h-1zM1028 662.3h1v1.5h-1zM1028 662.1h1v2.5h-1zM1029 671.1h1v2.5h-1zM1029 666.7h1v1.5h-1zM1029 668.6h1v2h-1zM1030 665.0h1v2h-1zM1030 663.7h1v2h-1zM1031 663.8h1v2h-1zM1031 661.5h1v2.5h-1zM1032 670.6h1v2h-1zM1032 666.9h1v2h-1zM1033 670.1h1v2.5h-1zM1033 661.2h1v2.5h-1zM1033 661.8h1v2.5h-1zM1034 669.2h1v2.5h-1zM1034 660.2h1v1.5h-1zM1035 672.5h2v2.5h-2zM1035 663.8h1v1.5h-1zM1035 663.4h1v2h-1zM1036 670.2h1v2h-1zM1036 662.3h1v1.5h-1zM1037 666.7h1v2h-1zM1037 665.0h1v2h-1zM1038 667.9h1v2h-1zM1038 668.9h1v2.5h-1zM1039 669.3h1v2h-1zM1039 672.1h1v2.5h-1zM1040 671.1h1v2.5h-1zM1040 669.4h1v2.5h-1zM1041 675.7h1v2h-1zM1041 674.2h1v2.5h-1zM1042 676.3h1v2.5h-1zM1042 675.4h1v2h-1zM1043 671.4h2v2.9h-2zM1043 675.2h1v2.5h-1zM1043 676.8h1v2.5h-1zM1044 688.6h1v2.5h-1zM1044 679.7h1v1.5h-1zM1044 679.4h1v2h-1zM1045 681.3h1v2h-1zM1045 676.8h1v2h-1zM1046 675.8h1v2h-1zM1046 676.3h1v1.5h-1zM1047 670.2h1v1.9h-1zM1047 680.3h1v2.5h-1zM1047 676.0h1v2.5h-1zM1048 683.8h1v2.5h-1zM1048 675.0h1v2.5h-1zM1048 671.3h1v2h-1zM1049 672.6h1v1.5h-1zM1049 675.6h1v2h-1zM1050 663.1h2v2.2h-2zM1050 672.7h1v2.5h-1zM1050 675.3h1v1.5h-1zM1051 673.4h1v2h-1zM1051 670.9h1v2.5h-1zM1052 666.7h1v2h-1zM1052 669.1h1v1.5h-1zM1053 673.1h1v2.5h-1zM1053 664.4h1v2.5h-1zM1053 667.1h1v2.5h-1zM1054 653.9h2v2.2h-2zM1054 662.4h1v1.5h-1zM1054 665.2h1v2.5h-1zM1055 667.2h1v2h-1zM1055 662.8h1v2h-1zM1056 669.2h1v2.5h-1zM1056 663.7h1v2h-1zM1056 667.4h1v2h-1zM1057 660.3h1v1.9h-1zM1057 668.1h1v2.5h-1zM1057 664.5h1v1.5h-1zM1058 663.0h1v2.5h-1zM1058 667.7h1v1.5h-1zM1059 658.4h2v2.3h-2zM1059 664.2h1v2h-1zM1059 668.1h1v2h-1zM1060 661.5h1v2.5h-1zM1060 661.7h1v2h-1zM1061 669.0h1v1.5h-1zM1061 663.4h1v1.5h-1zM1062 671.8h2v2.5h-2zM1062 665.6h1v2.5h-1zM1062 666.5h1v2h-1zM1063 665.3h1v1.5h-1zM1063 662.4h1v2h-1zM1064 668.0h1v1.5h-1zM1064 662.7h1v1.5h-1zM1065 658.0h1v2.4h-1zM1065 666.7h1v2h-1zM1065 666.9h1v2.5h-1zM1066 657.1h2v2.2h-2zM1066 668.7h1v2h-1zM1066 668.2h1v1.5h-1zM1067 670.8h1v1.5h-1zM1067 671.7h1v1.5h-1zM1068 675.9h2v2.5h-2zM1068 672.1h1v2.5h-1zM1068 668.9h1v2h-1zM1069 671.7h1v2h-1zM1069 672.2h1v2h-1zM1070 666.2h1v2.5h-1zM1070 673.7h1v1.5h-1zM1071 676.7h1v1.5h-1zM1071 677.4h1v2h-1zM1072 673.9h1v1.5h-1zM1072 674.5h1v1.5h-1zM1073 683.7h2v2.5h-2zM1073 673.8h1v2.5h-1zM1073 678.2h1v2.5h-1zM1074 681.3h1v2.5h-1zM1074 674.9h1v1.5h-1zM1075 681.4h1v1.5h-1zM1075 680.1h1v1.5h-1zM1076 680.7h1v2.5h-1zM1076 677.4h1v1.5h-1zM1077 673.8h1v2h-1zM1077 674.7h1v2h-1zM1078 681.5h2v2.5h-2zM1078 676.9h1v2h-1zM1078 675.3h1v2.5h-1zM1079 669.5h1v1.5h-1zM1079 673.4h1v2h-1zM1080 675.9h1v2h-1zM1080 674.9h1v1.5h-1zM1081 669.9h1v2.5h-1zM1081 668.5h1v2.5h-1zM1082 667.5h1v1.5h-1zM1082 667.7h1v2h-1zM1083 667.0h1v2.5h-1zM1083 666.6h1v1.5h-1zM1084 666.5h1v2h-1zM1084 665.3h1v2h-1zM1085 664.3h1v1.5h-1zM1085 662.3h1v2.5h-1zM1086 675.5h2v2.5h-2zM1086 663.2h1v1.5h-1zM1086 663.6h1v1.5h-1zM1087 659.2h1v2.0h-1zM1087 663.0h1v2.5h-1zM1087 669.3h1v2.5h-1zM1088 666.4h1v2h-1zM1088 668.9h1v2h-1zM1089 665.1h1v2.5h-1zM1089 665.5h1v2.5h-1zM1090 675.1h1v2.5h-1zM1090 660.9h1v2h-1zM1090 666.7h1v1.5h-1zM1091 661.8h1v2.5h-1zM1091 659.3h1v1.5h-1zM1092 659.7h1v2.5h-1zM1092 662.7h1v2h-1zM1093 658.0h2v2.9h-2zM1093 661.9h1v2h-1zM1093 664.1h1v2.5h-1zM1094 660.8h1v1.5h-1zM1094 667.2h1v2.5h-1zM1095 673.1h1v2.5h-1zM1095 664.5h1v2h-1zM1095 667.4h1v2h-1zM1096 666.5h1v2.5h-1zM1096 667.2h1v2.5h-1zM1097 674.1h2v2.5h-2zM1097 672.9h1v1.5h-1zM1097 671.8h1v2.5h-1zM1098 667.6h1v2h-1zM1098 671.7h1v2h-1zM1099 670.2h1v2.5h-1zM1099 669.1h1v2h-1zM1100 670.0h1v1.5h-1zM1100 669.9h1v2h-1zM1101 677.9h1v2.5h-1zM1101 676.2h1v2.5h-1zM1102 674.2h1v2.5h-1zM1102 678.4h1v2.5h-1zM1103 671.6h1v2.3h-1zM1103 675.6h1v1.5h-1zM1103 678.4h1v1.5h-1zM1104 681.0h1v2h-1zM1104 676.4h1v2h-1zM1105 681.3h1v1.5h-1zM1105 683.5h1v2.5h-1zM1106 668.9h1v1.8h-1zM1106 675.4h1v2h-1zM1106 673.8h1v1.5h-1zM1107 674.7h1v2h-1zM1107 676.9h1v1.5h-1zM1108 688.0h2v2.5h-2zM1108 678.8h1v1.5h-1zM1108 674.0h1v1.5h-1zM1109 668.6h1v2h-1zM1109 670.0h1v1.5h-1zM1110 661.9h1v1.8h-1zM1110 665.7h1v2h-1zM1110 670.5h1v1.5h-1zM1111 663.8h1v3.0h-1zM1111 668.0h1v2.5h-1zM1111 672.4h1v1.5h-1zM1112 671.3h1v2h-1zM1112 668.4h1v2h-1zM1113 676.6h2v2.5h-2zM1113 669.2h1v2h-1zM1113 668.3h1v2.5h-1zM1114 657.3h2v2.1h-2zM1114 663.5h1v1.5h-1zM1114 668.4h1v2h-1zM1115 662.5h1v2h-1zM1115 666.8h1v2h-1zM1116 662.4h1v1.5h-1zM1116 665.1h1v1.5h-1zM1117 670.4h2v2.5h-2zM1117 664.2h1v1.5h-1zM1117 660.9h1v2h-1zM1118 659.5h2v1.7h-2zM1118 661.6h1v2.5h-1zM1118 665.0h1v2h-1zM1119 666.8h1v2h-1zM1119 662.8h1v1.5h-1zM1120 661.0h1v2.5h-1zM1120 666.6h1v2h-1zM1121 660.1h1v1.5h-1zM1121 663.7h1v2h-1zM1122 665.1h1v1.5h-1zM1122 667.8h1v2.5h-1zM1123 664.0h1v2.5h-1zM1123 662.8h1v1.5h-1zM1124 665.3h1v2h-1zM1124 667.2h1v2.5h-1zM1125 657.9h2v2.5h-2zM1125 669.0h1v2.5h-1zM1125 668.4h1v1.5h-1zM1126 669.4h1v2h-1zM1126 664.5h1v2h-1zM1127 667.9h1v2h-1zM1127 666.5h1v1.5h-1zM1128 667.9h1v2.5h-1zM1128 667.1h1v2h-1zM1129 670.7h1v1.5h-1zM1129 675.7h1v1.5h-1zM1130 673.0h1v2.5h-1zM1130 668.5h1v2.5h-1zM1131 672.2h1v2h-1zM1131 674.1h1v2h-1zM1132 676.3h1v1.5h-1zM1132 673.8h1v2.5h-1zM1133 679.8h1v1.5h-1zM1133 679.2h1v2h-1zM1134 671.5h2v2.6h-2zM1134 682.1h1v2h-1zM1134 680.9h1v1.5h-1zM1135 674.8h1v2h-1zM1135 673.2h1v2.5h-1zM1136 677.7h1v1.5h-1zM1136 674.3h1v2.5h-1zM1137 671.8h1v1.5h-1zM1137 668.9h1v2.5h-1zM1138 672.2h1v1.5h-1zM1138 671.3h1v1.5h-1zM1139 673.4h1v1.5h-1zM1139 673.3h1v2.5h-1zM1140 671.8h1v2.5h-1zM1140 668.0h1v1.5h-1zM1141 673.8h1v2.5h-1zM1141 671.8h1v2h-1zM1142 670.0h1v2h-1zM1142 666.3h1v1.5h-1zM1143 672.2h1v2.5h-1zM1143 664.9h1v2h-1zM1143 663.3h1v1.5h-1zM1144 665.5h1v2h-1zM1144 662.2h1v2.5h-1zM1145 672.7h1v2.5h-1zM1145 667.0h1v2h-1zM1145 662.3h1v1.5h-1zM1146 668.8h1v1.5h-1zM1146 667.8h1v1.5h-1zM1147 654.2h2v2.6h-2zM1147 665.3h1v2h-1zM1147 666.3h1v2h-1zM1148 662.5h1v2.5h-1zM1148 665.3h1v1.5h-1zM1149 661.7h1v2h-1zM1149 667.1h1v2.5h-1zM1150 675.1h1v2.5h-1zM1150 666.0h1v2.5h-1zM1150 663.1h1v2.5h-1zM1151 669.8h1v2.5h-1zM1151 661.3h1v1.5h-1zM1151 666.6h1v2.5h-1zM1152 665.9h1v2.5h-1zM1152 661.1h1v1.5h-1zM1153 670.9h1v2.5h-1zM1153 663.0h1v1.5h-1zM1153 668.0h1v1.5h-1zM1154 670.6h2v2.5h-2zM1154 665.0h1v2.5h-1zM1154 664.8h1v2.5h-1zM1155 669.0h1v2.5h-1zM1155 668.4h1v1.5h-1zM1156 665.1h1v2h-1zM1156 667.1h1v2.5h-1zM1157 668.4h1v1.5h-1zM1157 669.2h1v1.5h-1zM1158 669.7h1v2h-1zM1158 671.0h1v2.5h-1zM1159 663.5h1v2.1h-1zM1159 675.3h1v2h-1zM1159 675.2h1v2h-1zM1160 679.4h2v2.5h-2zM1160 675.4h1v1.5h-1zM1160 671.0h1v1.5h-1zM1161 677.5h1v2.5h-1zM1161 676.5h1v1.5h-1zM1162 674.7h1v1.5h-1zM1162 675.6h1v2.5h-1zM1163 684.6h1v2.5h-1zM1163 675.1h1v1.5h-1zM1163 681.0h1v2.5h-1zM1164 678.2h1v1.5h-1zM1164 681.5h1v1.5h-1zM1165 675.6h1v1.5h-1zM1165 677.1h1v1.5h-1zM1166 675.0h1v1.5h-1zM1166 676.3h1v2.5h-1zM1167 665.6h1v2.3h-1zM1167 675.9h1v2h-1zM1167 673.8h1v2.5h-1zM1168 664.1h1v1.9h-1zM1168 670.1h1v2h-1zM1168 674.4h1v2h-1zM1169 673.0h1v2h-1zM1169 672.3h1v1.5h-1zM1170 671.3h1v2.5h-1zM1170 670.2h1v1.5h-1zM1171 670.5h1v1.5h-1zM1171 666.3h1v2h-1zM1172 662.3h1v2.0h-1zM1172 668.4h1v2h-1zM1172 671.9h1v1.5h-1zM1173 665.9h1v2h-1zM1173 666.3h1v1.5h-1zM1174 666.8h1v2h-1zM1174 661.5h1v2.5h-1zM1175 666.0h1v2.5h-1zM1175 661.3h1v2h-1zM1176 663.6h1v2h-1zM1176 661.7h1v2h-1zM1177 655.4h1v2.9h-1zM1177 669.7h1v2h-1zM1177 669.7h1v2.5h-1zM1178 666.2h1v1.5h-1zM1178 661.5h1v2.5h-1zM1179 662.5h1v2.5h-1zM1179 662.2h1v1.5h-1zM1180 669.8h1v2.5h-1zM1180 663.3h1v1.5h-1zM1181 655.7h2v2.1h-2zM1181 660.5h1v1.5h-1zM1181 662.2h1v2h-1zM1182 657.1h2v2.6h-2zM1182 665.8h1v2h-1zM1182 664.2h1v2.5h-1zM1183 671.2h2v2.5h-2zM1183 667.9h1v1.5h-1zM1183 662.7h1v2.5h-1zM1184 665.7h1v2h-1zM1184 664.5h1v1.5h-1zM1185 673.0h1v2.5h-1zM1185 670.4h1v2h-1zM1185 665.1h1v1.5h-1zM1186 673.6h1v2.5h-1zM1186 671.4h1v2h-1zM1186 667.6h1v1.5h-1zM1187 679.2h1v2.5h-1zM1187 669.2h1v2.5h-1zM1187 672.0h1v1.5h-1zM1188 668.7h1v1.5h-1zM1188 670.9h1v1.5h-1zM1189 676.8h1v2.5h-1zM1189 673.8h1v1.5h-1zM1190 686.1h2v2.5h-2zM1190 673.4h1v2.5h-1zM1190 673.5h1v1.5h-1zM1191 675.7h1v2h-1zM1191 674.3h1v2.5h-1zM1192 676.2h1v2.5h-1zM1192 680.6h1v2.5h-1zM1193 674.5h1v1.5h-1zM1193 680.2h1v2.5h-1zM1194 691.0h2v2.5h-2zM1194 682.8h1v2h-1zM1194 681.2h1v2h-1zM1195 679.9h1v2h-1zM1195 674.2h1v2.5h-1zM1196 676.2h1v2h-1zM1196 671.3h1v1.5h-1zM1197 680.2h1v1.5h-1zM1197 679.8h1v1.5h-1zM1198 681.2h2v2.5h-2zM1198 674.7h1v2.5h-1zM1198 670.9h1v2h-1zM1199 669.5h1v2.5h-1zM1199 668.2h1v1.5h-1zM1200 672.1h1v2h-1zM1200 673.8h1v2h-1zM1201 671.0h1v1.5h-1zM1201 671.8h1v2h-1zM1202 668.3h1v1.5h-1zM1202 670.9h1v2h-1zM1203 665.0h1v1.5h-1zM1203 667.0h1v2h-1zM1204 675.2h2v2.5h-2zM1204 665.3h1v2.5h-1zM1204 663.7h1v2h-1zM1205 666.4h1v2h-1zM1205 663.0h1v1.5h-1zM1206 666.1h1v1.5h-1zM1206 667.6h1v1.5h-1zM1207 658.8h1v2h-1zM1207 658.1h1v1.5h-1zM1208 665.2h1v2h-1zM1208 661.7h1v2h-1zM1209 664.1h1v1.5h-1zM1209 661.9h1v2h-1zM1210 666.3h1v2.5h-1zM1210 660.3h1v2.5h-1zM1211 657.1h1v2h-1zM1211 665.1h1v1.5h-1zM1212 663.0h1v1.5h-1zM1212 667.3h1v1.5h-1zM1213 667.3h1v2h-1zM1213 664.8h1v2.5h-1zM1214 662.8h1v2.5h-1zM1214 671.2h1v2.5h-1zM1215 662.5h1v1.5h-1zM1215 664.8h1v2h-1zM1216 665.8h1v2h-1zM1216 667.6h1v2h-1zM1217 678.6h1v2.5h-1zM1217 669.9h1v1.5h-1zM1217 672.5h1v2.5h-1zM1218 671.6h1v2h-1zM1218 670.6h1v2h-1zM1219 673.4h1v2.5h-1zM1219 677.9h1v1.5h-1zM1220 674.6h1v1.5h-1zM1220 671.4h1v1.5h-1zM1221 685.0h2v2.5h-2zM1221 673.2h1v1.5h-1zM1221 673.8h1v2.5h-1zM1222 677.4h1v2h-1zM1222 679.4h1v1.5h-1zM1223 682.4h1v1.5h-1zM1223 681.5h1v1.5h-1zM1224 674.8h1v2h-1zM1224 673.8h1v2.5h-1zM1225 671.8h2v2.2h-2zM1225 676.6h1v2.5h-1zM1225 679.8h1v2h-1zM1226 684.6h1v2.5h-1zM1226 673.2h1v2h-1zM1226 679.5h1v1.5h-1zM1227 673.3h1v2h-1zM1227 675.8h1v2h-1zM1228 672.2h1v2.5h-1zM1228 673.4h1v2.5h-1zM1229 673.5h1v2h-1zM1229 671.8h1v1.5h-1zM1230 664.4h1v1.5h-1zM1230 670.2h1v2h-1zM1231 671.1h1v2.5h-1zM1231 664.8h1v2.5h-1zM1231 665.9h1v2h-1zM1232 668.5h1v2h-1zM1232 665.4h1v2h-1zM1233 675.9h2v2.5h-2zM1233 664.5h1v2h-1zM1233 662.4h1v2h-1zM1234 673.8h2v2.5h-2zM1234 666.0h1v2h-1zM1234 668.3h1v2.5h-1zM1235 666.6h1v2h-1zM1235 667.7h1v2h-1zM1236 665.2h1v1.5h-1zM1236 663.1h1v1.5h-1zM1237 666.9h1v1.5h-1zM1237 661.9h1v1.5h-1zM1238 670.2h2v2.5h-2zM1238 667.9h1v1.5h-1zM1238 663.8h1v2.5h-1zM1239 667.8h1v1.5h-1zM1239 662.2h1v2h-1zM1240 663.7h1v1.5h-1zM1240 664.2h1v2.5h-1zM1241 672.0h2v2.5h-2zM1241 664.1h1v2.5h-1zM1241 665.8h1v2h-1zM1242 655.0h1v2.6h-1zM1242 666.4h1v2h-1zM1242 663.2h1v1.5h-1zM1243 667.3h1v1.5h-1zM1243 662.1h1v2.5h-1zM1244 670.0h1v2.5h-1zM1244 670.0h1v2h-1zM1245 669.9h1v2.5h-1zM1245 668.0h1v2.5h-1zM1246 672.1h1v2.5h-1zM1246 666.8h1v2.5h-1zM1247 668.2h1v2.5h-1zM1247 670.2h1v2h-1zM1248 668.3h1v1.5h-1zM1248 668.8h1v2h-1zM1249 667.0h2v2.9h-2zM1249 674.8h1v1.5h-1zM1249 670.3h1v1.5h-1zM1250 671.2h1v2h-1zM1250 670.5h1v2.5h-1zM1251 678.7h1v2h-1zM1251 673.4h1v1.5h-1zM1252 687.0h2v2.5h-2zM1252 672.3h1v2h-1zM1252 675.0h1v1.5h-1zM1253 687.6h1v2.5h-1zM1253 682.2h1v1.5h-1zM1253 684.3h1v2.5h-1zM1254 670.8h1v3.0h-1zM1254 679.1h1v2h-1zM1254 678.2h1v1.5h-1zM1255 678.5h1v2.5h-1zM1255 678.4h1v2.5h-1zM1256 672.8h1v2.5h-1zM1256 675.8h1v2.5h-1zM1257 668.6h1v2.8h-1zM1257 670.7h1v1.5h-1zM1257 675.3h1v1.5h-1zM1258 672.8h1v2h-1zM1258 676.1h1v1.5h-1zM1259 671.0h1v1.5h-1zM1259 670.2h1v2.5h-1zM1260 668.9h1v1.5h-1zM1260 666.6h1v2h-1zM1261 665.7h1v2h-1zM1261 665.7h1v2h-1zM1262 667.0h1v1.5h-1zM1262 666.0h1v2.5h-1zM1263 668.0h1v2h-1zM1263 665.6h1v2h-1zM1264 668.0h1v2h-1zM1264 662.6h1v2.5h-1zM1265 662.7h1v2h-1zM1265 660.9h1v1.5h-1zM1266 661.7h1v2.5h-1zM1266 661.1h1v1.5h-1zM1267 667.1h1v2.5h-1zM1267 664.4h1v2.5h-1zM1268 663.5h1v2h-1zM1268 662.2h1v2.5h-1zM1269 665.8h1v1.5h-1zM1269 667.9h1v2h-1zM1270 672.5h2v2.5h-2zM1270 663.2h1v2h-1zM1270 667.1h1v2h-1zM1271 662.1h1v1.5h-1zM1271 669.0h1v1.5h-1zM1272 672.8h2v2.5h-2zM1272 664.1h1v1.5h-1zM1272 667.2h1v2.5h-1zM1273 672.0h1v2.5h-1zM1273 662.1h1v1.5h-1zM1273 666.1h1v1.5h-1zM1274 665.0h1v2.5h-1zM1274 670.7h1v1.5h-1zM1275 664.4h1v2.5h-1zM1275 663.5h1v1.5h-1zM1276 669.3h1v2h-1zM1276 670.6h1v2.5h-1zM1277 680.4h1v2.5h-1zM1277 675.2h1v2h-1zM1277 676.1h1v2h-1zM1278 673.0h1v2h-1zM1278 671.2h1v2h-1zM1279 663.4h1v2.0h-1zM1279 671.9h1v1.5h-1zM1279 670.8h1v1.5h-1zM1280 673.5h1v2.5h-1zM1280 678.4h1v2h-1zM1281 675.4h1v2h-1zM1281 673.4h1v2.5h-1zM1282 687.4h2v2.5h-2zM1282 678.3h1v2.5h-1zM1282 676.7h1v2h-1zM1283 688.9h2v2.5h-2zM1283 679.5h1v2h-1zM1283 681.9h1v1.5h-1zM1284 676.6h1v1.5h-1zM1284 678.5h1v1.5h-1zM1285 677.0h1v2.5h-1zM1285 673.0h1v2h-1zM1286 677.5h1v1.5h-1zM1286 676.2h1v2.5h-1zM1287 669.1h1v1.5h-1zM1287 675.8h1v1.5h-1zM1288 664.7h1v1.9h-1zM1288 673.9h1v2h-1zM1288 670.7h1v2h-1zM1289 666.4h1v1.5h-1zM1289 672.0h1v2.5h-1zM1290 666.8h1v2h-1zM1290 665.5h1v2.5h-1zM1291 668.3h1v2h-1zM1291 672.4h1v1.5h-1zM1292 663.0h1v2h-1zM1292 663.9h1v2.5h-1zM1293 666.7h1v2.5h-1zM1293 667.1h1v2h-1zM1294 662.7h1v2h-1zM1294 665.7h1v1.5h-1zM1295 665.9h1v2.5h-1zM1295 662.3h1v2.5h-1zM1296 662.1h1v1.5h-1zM1296 664.1h1v2h-1zM1297 666.4h1v1.5h-1zM1297 665.4h1v2.5h-1zM1298 656.2h2v2.2h-2zM1298 663.7h1v2h-1zM1298 666.3h1v2h-1zM1299 666.5h1v1.5h-1zM1299 665.2h1v1.5h-1zM1300 666.1h1v2.5h-1zM1300 663.3h1v1.5h-1zM1301 674.5h1v2.5h-1zM1301 666.6h1v2h-1zM1301 666.4h1v2h-1zM1302 663.2h1v2h-1zM1302 668.6h1v1.5h-1zM1303 661.0h1v2.5h-1zM1303 663.5h1v2h-1zM1304 666.1h1v1.5h-1zM1304 670.2h1v2.5h-1zM1305 666.0h1v1.5h-1zM1305 670.3h1v1.5h-1zM1306 672.5h1v2h-1zM1306 671.2h1v2.5h-1zM1307 665.0h1v1.5h-1zM1307 672.4h1v1.5h-1zM1308 676.2h1v2.5h-1zM1308 676.6h1v2.5h-1zM1309 673.0h1v2h-1zM1309 671.9h1v2.5h-1zM1310 685.1h1v2.5h-1zM1310 672.3h1v2.5h-1zM1310 674.1h1v2.5h-1zM1311 677.1h1v2.5h-1zM1311 676.2h1v1.5h-1zM1312 670.4h2v2.6h-2zM1312 676.0h1v2h-1zM1312 679.9h1v2h-1zM1313 670.7h2v2.0h-2zM1313 682.1h1v2.5h-1zM1313 683.3h1v2.5h-1zM1314 682.7h1v1.5h-1zM1314 681.6h1v2.5h-1zM1315 677.2h1v1.5h-1zM1315 672.3h1v1.5h-1zM1316 675.5h1v2h-1zM1316 671.3h1v2.5h-1zM1317 669.0h1v2.5h-1zM1317 675.6h1v1.5h-1zM1318 673.2h1v2h-1zM1318 671.5h1v2.5h-1zM1319 669.8h1v2h-1zM1319 669.4h1v2.5h-1zM1320 673.1h1v2.5h-1zM1320 668.7h1v1.5h-1zM1320 670.7h1v1.5h-1zM1321 663.8h1v2.5h-1zM1321 664.1h1v2.5h-1zM1322 661.8h1v1.7h-1zM1322 663.7h1v2h-1zM1322 663.7h1v1.5h-1zM1323 661.0h1v1.5h-1zM1323 666.9h1v2.5h-1zM1324 669.4h1v2.5h-1zM1324 667.0h1v2.5h-1zM1325 662.9h1v2.5h-1zM1325 663.2h1v2.5h-1zM1326 665.8h1v2h-1zM1326 662.8h1v2.5h-1zM1327 660.3h1v2.3h-1zM1327 668.6h1v2.5h-1zM1327 667.2h1v1.5h-1zM1328 672.1h1v2.5h-1zM1328 665.7h1v1.5h-1zM1328 669.3h1v2.5h-1zM1329 662.3h1v2h-1zM1329 665.9h1v2h-1zM1330 659.7h1v2.5h-1zM1330 663.4h1v2h-1z" fill="#560056" fill-opacity="0.9"/>
</g>
<text transform="translate(46.5,16.6) scale(1.06,1)" x="0" y="0" font-size="20.2" textLength="56.13" lengthAdjust="spacing" fill="#000" stroke="#000" stroke-width="0.3">PreVu</text>
<path d="M0 421.6 L15.7 421.6 L25.5 431.8 L15.7 443.1 L0 443.1 Z" fill="#00a000" stroke="#1a4a1a" stroke-width="0.8"/>
<rect x="0" y="421.2" width="15.7" height="1.8" fill="#3a3a3a"/><rect x="0" y="422" width="2" height="21" fill="#70b870"/>
<text transform="translate(4.2,440.2) scale(1.0,1)" x="0" y="0" font-size="21.5" textLength="11.00" lengthAdjust="spacing" fill="#ffffff" stroke="#ffffff" stroke-width="0.9">4</text>
<rect x="30" y="423" width="135" height="16.5" fill="#fff"/>
<text transform="translate(30.6,438.5) scale(1.0,1)" x="0" y="0" font-size="20" textLength="3.00" lengthAdjust="spacing" fill="#000" stroke="#000" stroke-width="0.15">I</text>
<rect x="36" y="437.6" width="14.4" height="1.9" fill="#000"/>
<text transform="translate(55,438.5) scale(0.92,1)" x="0" y="0" font-size="20" textLength="118.48" lengthAdjust="spacing" fill="#000" stroke="#000" stroke-width="0.15">INDUCTOR</text>
<path d="M0.8 689.8 L16.8 689.8 L26 699.8 L16.8 709.6 L0.8 709.6 Z" fill="#ffffff" stroke="#c000c0" stroke-width="1.6"/>
<text transform="translate(4.3,707.2) scale(1.0,1)" x="0" y="0" font-size="21" textLength="10.00" lengthAdjust="spacing" fill="#b000b0" stroke="#b000b0" stroke-width="0.6">3</text>
<rect x="30" y="690.5" width="61" height="16.5" fill="#fff"/>
<text transform="translate(31,705.5) scale(0.92,1)" x="0" y="0" font-size="20" textLength="64.13" lengthAdjust="spacing" fill="#000" stroke="#000" stroke-width="0.15">VOUT</text>
<path d="M1232.1 22 L1246.3 22 L1239.4 29 Z" fill="#ff9900"/>
<path d="M1230.4 32.2 Q1230.4 30.1 1232.5 30.1 L1244.6 30.1 Q1246.7 30.1 1246.7 32.2 L1246.7 44.5 Q1246.7 47.2 1243.5 48.8 L1238.6 50.8 L1233.7 48.8 Q1230.4 47.2 1230.4 44.5 Z" fill="#ff9900"/>
<rect x="1232.3" y="32.8" width="12.7" height="2" fill="#fff"/><rect x="1237.6" y="34.6" width="2.8" height="11.8" fill="#fff"/>
<path d="M1322.7 21.6 L1330 29.4 L1315.3 29.4 Z" fill="#a800b0"/>
<rect x="1322" y="29" width="1.8" height="6.6" fill="#a800b0"/>
<rect x="26.7" y="872.8" width="721.5999999999999" height="25.800000000000068" rx="7" ry="7" fill="#fff" stroke="#333" stroke-width="1.15"/>
<path d="M32.7 872.8H742.3" stroke="#4a4a4a" stroke-width="2"/>
<rect x="26.7" y="902.6" width="721.5999999999999" height="48.60000000000002" rx="7" ry="7" fill="#fff" stroke="#333" stroke-width="1.15"/>
<path d="M32.7 902.6H742.3" stroke="#4a4a4a" stroke-width="2"/>
<rect x="758.5" y="872.8" width="192.29999999999995" height="48.40000000000009" rx="7" ry="7" fill="#fff" stroke="#333" stroke-width="1.15"/>
<path d="M764.5 872.8H944.8" stroke="#4a4a4a" stroke-width="2"/>
<rect x="960.5" y="872.8" width="138.29999999999995" height="48.40000000000009" rx="7" ry="7" fill="#fff" stroke="#333" stroke-width="1.15"/>
<path d="M966.5 872.8H1092.8" stroke="#4a4a4a" stroke-width="2"/>
<rect x="1108.8" y="872.8" width="221.60000000000014" height="48.40000000000009" rx="7" ry="7" fill="#fff" stroke="#333" stroke-width="1.15"/>
<path d="M1114.8 872.8H1324.4" stroke="#4a4a4a" stroke-width="2"/>
<rect x="1184.5" y="949.8" width="145.9000000000001" height="40.200000000000045" rx="7" ry="7" fill="#fff" stroke="#333" stroke-width="1.15"/>
<path d="M1190.5 949.8H1324.4" stroke="#4a4a4a" stroke-width="2"/>
<rect x="395.6" y="876" width="32.69999999999999" height="20.899999999999977" rx="9.4" ry="10.449999999999989" fill="#a000a0"/>
<text transform="translate(406.8,893.4) scale(1.0,1)" x="0" y="0" font-size="21.5" textLength="10.50" lengthAdjust="spacing" fill="#000" stroke="#000" stroke-width="0.5">3</text>
<text transform="translate(451.6,893.2) scale(1.06,1)" x="0" y="0" font-size="20" textLength="73.11" lengthAdjust="spacing" fill="#a000a0" stroke="#a000a0" stroke-width="0.4">20.0mV</text>
<text transform="translate(549.3,887.8) scale(1.0,1)" x="0" y="0" font-size="12.5" textLength="6.00" lengthAdjust="spacing" fill="#a000a0" stroke="#a000a0" stroke-width="0.3">B</text>
<text transform="translate(554.3,893.2) scale(1.0,1)" x="0" y="0" font-size="11.5" textLength="7.50" lengthAdjust="spacing" fill="#a000a0" stroke="#a000a0" stroke-width="0.3">W</text>
<rect x="577" y="876" width="32.700000000000045" height="21.200000000000045" rx="9.5" ry="10.600000000000023" fill="#00a000"/>
<text transform="translate(587.3,893.4) scale(1.0,1)" x="0" y="0" font-size="21.5" textLength="11.50" lengthAdjust="spacing" fill="#000" stroke="#000" stroke-width="0.5">4</text>
<text transform="translate(633.8,893.2) scale(1.06,1)" x="0" y="0" font-size="20" textLength="60.94" lengthAdjust="spacing" fill="#00a000" stroke="#00a000" stroke-width="0.4">1.00 A</text>
<text transform="translate(712.6,893.2) scale(1.0,1)" x="0" y="0" font-size="20" textLength="15.60" lengthAdjust="spacing" fill="#00a000" stroke="#00a000" stroke-width="0.4">Ω</text>
<text transform="translate(730.5,887.8) scale(1.0,1)" x="0" y="0" font-size="12.5" textLength="6.00" lengthAdjust="spacing" fill="#00a000" stroke="#00a000" stroke-width="0.3">B</text>
<text transform="translate(735.5,892.8) scale(1.0,1)" x="0" y="0" font-size="11.5" textLength="7.50" lengthAdjust="spacing" fill="#00a000" stroke="#00a000" stroke-width="0.3">W</text>
<text transform="translate(205.6,921.6) scale(1.06,1)" x="0" y="0" font-size="20" textLength="52.26" lengthAdjust="spacing" fill="#000" stroke="#000" stroke-width="0.4">Value</text>
<text transform="translate(321,921.6) scale(1.06,1)" x="0" y="0" font-size="20" textLength="50.38" lengthAdjust="spacing" fill="#000" stroke="#000" stroke-width="0.4">Mean</text>
<text transform="translate(429.2,921.6) scale(1.06,1)" x="0" y="0" font-size="20" textLength="35.85" lengthAdjust="spacing" fill="#000" stroke="#000" stroke-width="0.4">Min</text>
<text transform="translate(535,921.6) scale(1.06,1)" x="0" y="0" font-size="20" textLength="37.74" lengthAdjust="spacing" fill="#000" stroke="#000" stroke-width="0.4">Max</text>
<text transform="translate(640.5,921.6) scale(1.06,1)" x="0" y="0" font-size="20" textLength="75.47" lengthAdjust="spacing" fill="#000" stroke="#000" stroke-width="0.4">Std Dev</text>
<rect x="33.7" y="928" width="32.599999999999994" height="21.299999999999955" rx="9.6" ry="10.649999999999977" fill="#a000a0"/>
<text transform="translate(44.5,945.8) scale(1.0,1)" x="0" y="0" font-size="21.5" textLength="10.50" lengthAdjust="spacing" fill="#000" stroke="#000" stroke-width="0.5">3</text>
<text transform="translate(73,945.6) scale(1.06,1)" x="0" y="0" font-size="20" textLength="102.83" lengthAdjust="spacing" fill="#a000a0" stroke="#a000a0" stroke-width="0.4">Peak−Peak</text>
<text transform="translate(207,944.8) scale(1.06,1)" x="0" y="0" font-size="20" textLength="72.64" lengthAdjust="spacing" fill="#a000a0" stroke="#a000a0" stroke-width="0.4">10.4mV</text>
<text transform="translate(322.5,944.8) scale(1.06,1)" x="0" y="0" font-size="20" textLength="58.77" lengthAdjust="spacing" fill="#a000a0" stroke="#a000a0" stroke-width="0.4">10.4m</text>
<text transform="translate(429,944.8) scale(1.06,1)" x="0" y="0" font-size="20" textLength="58.77" lengthAdjust="spacing" fill="#a000a0" stroke="#a000a0" stroke-width="0.4">10.4m</text>
<text transform="translate(535.5,944.8) scale(1.06,1)" x="0" y="0" font-size="20" textLength="58.77" lengthAdjust="spacing" fill="#a000a0" stroke="#a000a0" stroke-width="0.4">10.4m</text>
<text transform="translate(641,944.8) scale(1.06,1)" x="0" y="0" font-size="20" textLength="42.45" lengthAdjust="spacing" fill="#a000a0" stroke="#a000a0" stroke-width="0.4">0.00</text>
<text transform="translate(765.5,892.6) scale(1.06,1)" x="0" y="0" font-size="20" textLength="67.36" lengthAdjust="spacing" fill="#000" stroke="#000" stroke-width="0.4">4.00μs</text>
<rect x="764.6" y="899.2" width="15.6" height="17.2" rx="2" fill="#ff9900"/>
<rect x="766.5" y="901" width="11.8" height="2.2" fill="#fff"/><rect x="771" y="903" width="2.8" height="12" fill="#fff"/>
<text transform="translate(789.3,915.6) scale(1.06,1)" x="0" y="0" font-size="20" textLength="73.58" lengthAdjust="spacing" fill="#ff9900" stroke="#ff9900" stroke-width="0.4">93.00 %</text>
<text transform="translate(968.8,892.4) scale(1.06,1)" x="0" y="0" font-size="20" textLength="86.42" lengthAdjust="spacing" fill="#000" stroke="#000" stroke-width="0.4">2.50GS/s</text>
<text transform="translate(969.7,915) scale(1.06,1)" x="0" y="0" font-size="20" textLength="114.91" lengthAdjust="spacing" fill="#000" stroke="#000" stroke-width="0.4">100k points</text>
<rect x="1148.7" y="876" width="32.799999999999955" height="20.700000000000045" rx="9.3" ry="10.350000000000023" fill="#a000a0"/>
<text transform="translate(1159.8,893.4) scale(1.0,1)" x="0" y="0" font-size="21.5" textLength="10.50" lengthAdjust="spacing" fill="#000" stroke="#000" stroke-width="0.5">3</text>
<path d="M1199 891.8 L1203.8 891.8 Q1205 891.5 1205.5 889 L1207.2 882.5 Q1207.8 880.2 1209.5 880.2 L1213.2 880.2" stroke="#000" stroke-width="2.4" fill="none" stroke-linecap="round" stroke-linejoin="round"/>
<text transform="translate(1259.5,893.2) scale(1.06,1)" x="0" y="0" font-size="20" textLength="59.15" lengthAdjust="spacing" fill="#000" stroke="#000" stroke-width="0.4">1.43 V</text>
<text transform="translate(1193,971.6) scale(1.06,1)" x="0" y="0" font-size="20" textLength="122.64" lengthAdjust="spacing" fill="#000" stroke="#000" stroke-width="0.4">21 Oct 2020</text>
</svg></body></html>
